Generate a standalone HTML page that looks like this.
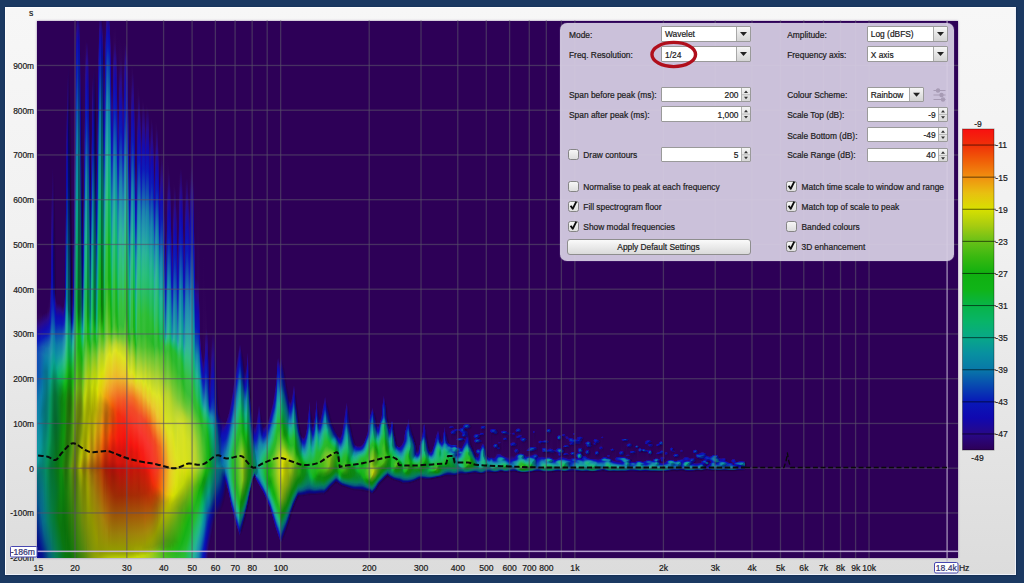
<!DOCTYPE html>
<html lang="en"><head><meta charset="utf-8"><title>Spectrogram</title>
<style>
html,body{margin:0;padding:0}
body{width:1024px;height:583px;background:#1b3962;position:relative;overflow:hidden;font-family:"Liberation Sans",sans-serif;color:#222}
#frame{position:absolute;left:5.1px;top:7px;width:1011.1px;height:568.4px;box-sizing:border-box;border:1px solid #fdfdfe;border-right:1.5px solid #eef2fa;border-bottom:1.5px solid #eef2fa;background:linear-gradient(#f7f7f7,#f1f1f1 40%,#dcdcdc);box-shadow:0 0 1.5px 0.5px rgba(8,22,48,.75)}
#plot{position:absolute;left:37.4px;top:20.7px;width:920.6px;height:537.5px;background:#2d0057;overflow:hidden;box-shadow:0 0 2px rgba(120,100,150,.8)}
#spec{position:absolute;left:-0.4px;top:-0.7px;width:921px;height:538px}
#spec i{display:block;float:left;width:1px;height:538px}
#ov{position:absolute;left:0;top:0}
#ov text{font-family:"Liberation Sans",sans-serif;font-size:8.6px;fill:#1a1a1a;stroke:#1a1a1a;stroke-width:0.2px}
#panel{position:absolute;left:560px;top:23px;width:394px;height:238px;background:rgba(214,205,226,.94);border-radius:7px;font-size:8.4px;color:#202020;-webkit-text-stroke:0.2px #202020;box-shadow:0 0 1px #b9a8d0}
#panel span,#panel div{position:absolute;white-space:nowrap}
.lb{line-height:12px;height:12px;margin-top:-6px}
.box{background:#fff;border:1px solid #9a9a9a;box-sizing:border-box;border-radius:1px}
.box b{position:absolute;font-weight:normal;line-height:12px;top:50%;margin-top:-5.5px}
.cb{width:11px;height:10.6px;box-sizing:border-box;border:1px solid #858585;border-radius:2.5px;background:linear-gradient(#f6f6f6,#dedede);margin-top:-5.7px;margin-left:-0.8px}
</style></head><body>
<div id="frame"></div>
<div id="plot"><div id="spec">
<i style="background:linear-gradient(#2d0057 292.5px,#30045b 298.5px,#2b0b89 306.5px,#130cb1 314.5px,#0c1bb9 321.5px,#113eb6 327.5px,#124db4 333.5px,#0e51b1 356.5px,#117cab 383.5px,#10999e 436.5px,#089697 442.5px,#06787c 450.5px,#066776 458.5px,#06508a 484.5px,#061285 520.5px,#090c83 529.5px,#0a0b8a 533.5px,#0c0b9d 537.5px)"></i>
<i style="background:linear-gradient(#2d0057 292.5px,#300459 297.5px,#2b0b8a 306.5px,#150cae 313.5px,#0c1db9 321.5px,#1240b6 327.5px,#1350b3 333.5px,#0d54b0 356.5px,#107cab 381.5px,#1395a4 425.5px,#0e999c 436.5px,#089696 441.5px,#077d7e 448.5px,#066f76 454.5px,#07558b 484.5px,#061288 522.5px,#090c86 530.5px,#0b0b99 537.5px)"></i>
<i style="background:linear-gradient(#2d0057 292.5px,#30045b 297.5px,#2b0b88 305.5px,#140cb1 313.5px,#0c1bb9 320.5px,#1345b5 327.5px,#1455b3 333.5px,#0c58af 355.5px,#0f7caa 379.5px,#0982a5 395.5px,#0f93a3 422.5px,#099999 436.5px,#077e7b 447.5px,#067174 453.5px,#075c8e 485.5px,#07418f 502.5px,#06138c 524.5px,#090d8a 532.5px,#0a0d94 537.5px)"></i>
<i style="background:linear-gradient(#2d0057 292.5px,#300459 296.5px,#2b0b87 304.5px,#140cb0 312.5px,#0c1bb9 319.5px,#144cb5 327.5px,#155cb2 333.5px,#0b5ead 355.5px,#0d7baa 375.5px,#087f9d 396.5px,#0b91a1 418.5px,#089898 432.5px,#078079 445.5px,#067572 451.5px,#07638e 488.5px,#074991 504.5px,#06138e 527.5px,#090e92 537.5px)"></i>
<i style="background:linear-gradient(#2d0057 292.5px,#300359 295.5px,#2a0b8c 304.5px,#150caf 311.5px,#0d1fb9 319.5px,#144eb4 326.5px,#1563b1 333.5px,#0966ab 355.5px,#087fa6 377.5px,#077992 393.5px,#088b99 414.5px,#089393 427.5px,#078f87 435.5px,#06776f 451.5px,#076e86 474.5px,#07668f 495.5px,#06158e 530.5px,#071191 537.5px)"></i>
<i style="background:linear-gradient(#2d0057 294.5px,#2a0b8b 303.5px,#150bae 310.5px,#0c1eb9 318.5px,#1554b4 326.5px,#146bb0 334.5px,#086aa4 353.5px,#087ba5 369.5px,#077589 391.5px,#07868d 415.5px,#078d86 428.5px,#067a6c 451.5px,#077383 473.5px,#07668d 502.5px,#06208d 529.5px,#061590 537.5px)"></i>
<i style="background:linear-gradient(#2d0057 293.5px,#2a0b8a 302.5px,#130cb1 310.5px,#0c1cb9 317.5px,#155ab3 326.5px,#1471ae 334.5px,#0872a8 344.5px,#076e9d 351.5px,#077996 372.5px,#067281 389.5px,#07897c 429.5px,#067e6a 451.5px,#077782 477.5px,#076d89 500.5px,#07628a 509.5px,#062a8a 529.5px,#061f8d 537.5px)"></i>
<i style="background:linear-gradient(#2d0057 293.5px,#2a0b89 301.5px,#130bb1 309.5px,#0c1bb9 316.5px,#145eb2 326.5px,#1277ac 335.5px,#0877a5 343.5px,#076f95 351.5px,#077690 368.5px,#06707a 389.5px,#078a74 432.5px,#068367 451.5px,#077284 500.5px,#066086 514.5px,#063588 529.5px,#06298a 537.5px)"></i>
<i style="background:linear-gradient(#2d0057 292.5px,#2b0a87 300.5px,#120db2 309.5px,#0c1ab8 315.5px,#1251b3 323.5px,#156cb0 328.5px,#0f7daa 336.5px,#087ca7 341.5px,#077090 351.5px,#077588 368.5px,#067175 386.5px,#067472 402.5px,#078975 424.5px,#068c64 446.5px,#06757e 501.5px,#065e83 518.5px,#063d85 530.5px,#063488 537.5px)"></i>
<i style="background:linear-gradient(#2d0057 292.5px,#2a0b8b 300.5px,#130cb2 308.5px,#0c1cb9 315.5px,#124fb3 322.5px,#156faf 328.5px,#117faa 335.5px,#087fa6 341.5px,#07728e 351.5px,#067473 382.5px,#067870 401.5px,#078e73 422.5px,#07926a 434.5px,#068b5a 448.5px,#067974 501.5px,#065d80 522.5px,#064683 531.5px,#063f85 537.5px)"></i>
<i style="background:linear-gradient(#2d0057 287.5px,#30045a 291.5px,#2b0c8b 299.5px,#130db2 307.5px,#0d1cb9 314.5px,#1454b3 322.5px,#1673af 328.5px,#1182a9 336.5px,#0882a3 343.5px,#077990 351.5px,#067c74 379.5px,#067f70 398.5px,#079271 418.5px,#079665 432.5px,#068950 448.5px,#06805a 464.5px,#067c6a 500.5px,#066d79 514.5px,#064b82 537.5px)"></i>
<i style="background:linear-gradient(#2d0057 281.5px,#30045b 290.5px,#2c0c87 297.5px,#130eb2 306.5px,#0e1dba 313.5px,#185bb4 322.5px,#1b79b0 328.5px,#1588aa 337.5px,#0889a1 347.5px,#078674 378.5px,#07916e 410.5px,#079862 425.5px,#079356 435.5px,#068246 448.5px,#067d64 503.5px,#066b78 519.5px,#065780 537.5px)"></i>
<i style="background:linear-gradient(#2d0057 278.5px,#30055d 286.5px,#2b0c8b 294.5px,#130db2 303.5px,#0f20ba 311.5px,#1a5fb4 321.5px,#2083b1 328.5px,#188fa9 339.5px,#08939d 351.5px,#078f6f 378.5px,#079659 422.5px,#057a3d 448.5px,#067c5c 504.5px,#066a76 523.5px,#065f7d 537.5px)"></i>
<i style="background:linear-gradient(#2d0057 260.5px,#2a0b8b 278.5px,#140cb1 291.5px,#0d1bb9 302.5px,#1f85b0 324.5px,#2296ac 334.5px,#089f91 353.5px,#079162 378.5px,#068e4e 420.5px,#057437 448.5px,#067d4f 500.5px,#067962 514.5px,#066b75 527.5px,#06647a 537.5px)"></i>
<i style="background:linear-gradient(#2d0057 172.5px,#290a89 217.5px,#120ab0 261.5px,#0d1bb9 286.5px,#0d32b6 295.5px,#1d84af 318.5px,#219ca9 333.5px,#09a68a 351.5px,#079568 364.5px,#068c54 377.5px,#068140 424.5px,#057132 448.5px,#067d46 499.5px,#067961 518.5px,#066a76 537.5px)"></i>
<i style="background:linear-gradient(#2d0057 147.5px,#280888 197.5px,#1109b0 248.5px,#0c17b7 277.5px,#0c2ab7 288.5px,#1a83ae 316.5px,#1998a6 331.5px,#08a58b 347.5px,#068d62 360.5px,#068048 376.5px,#057840 399.5px,#057b37 428.5px,#05712e 448.5px,#067c40 500.5px,#066f70 537.5px)"></i>
<i style="background:linear-gradient(#2d0057 154.5px,#22066b 192.5px,#0d056b 241.5px,#090977 263.5px,#080e8d 273.5px,#0817b1 281.5px,#081eb7 284.5px,#0e7caa 315.5px,#1093a3 330.5px,#09a18f 342.5px,#06855a 358.5px,#05753f 374.5px,#056e38 397.5px,#057832 427.5px,#06722a 448.5px,#057336 469.5px,#057b39 500.5px,#067368 537.5px)"></i>
<i style="background:linear-gradient(#2d0057 153.5px,#260049 203.5px,#14055e 257.5px,#10056f 267.5px,#0c078c 274.5px,#0c10b3 283.5px,#0818b8 290.5px,#0b7aa9 317.5px,#0c92a1 332.5px,#089d93 340.5px,#07997c 347.5px,#067c4b 362.5px,#05713a 372.5px,#056b33 384.5px,#056831 402.5px,#06752b 429.5px,#077224 448.5px,#057332 468.5px,#057931 496.5px,#067861 537.5px)"></i>
<i style="background:linear-gradient(#2d0057 185.5px,#250047 273.5px,#270889 283.5px,#1009b0 292.5px,#0919b8 301.5px,#0b7aa9 323.5px,#0a91a1 336.5px,#089b90 343.5px,#07997b 349.5px,#068351 360.5px,#057037 373.5px,#05662e 400.5px,#077221 437.5px,#08721e 448.5px,#05732e 471.5px,#077929 497.5px,#067959 537.5px)"></i>
<i style="background:linear-gradient(#2d0057 220.5px,#2c0055 281.5px,#290885 288.5px,#1009b1 296.5px,#091bb8 304.5px,#0b4eb0 314.5px,#0c7aaa 325.5px,#0d92a2 337.5px,#08a58a 347.5px,#068c51 361.5px,#057535 374.5px,#05682d 401.5px,#08701b 437.5px,#097219 448.5px,#067328 471.5px,#087821 497.5px,#067b51 537.5px)"></i>
<i style="background:linear-gradient(#2d0057 283.5px,#280988 289.5px,#1109b0 296.5px,#0a18b8 303.5px,#0c50b1 314.5px,#0e7baa 325.5px,#1095a2 337.5px,#0eaa8b 347.5px,#08ae79 352.5px,#068f49 364.5px,#057a31 376.5px,#056e2c 404.5px,#0a7513 448.5px,#077522 470.5px,#09771a 498.5px,#067c49 537.5px)"></i>
<i style="background:linear-gradient(#2d0057 283.5px,#290988 289.5px,#1409ac 295.5px,#0a19b8 303.5px,#0d4eb1 313.5px,#107bab 324.5px,#1396a4 336.5px,#15ab8f 345.5px,#08b36b 355.5px,#069140 366.5px,#077d29 378.5px,#067427 407.5px,#0b7810 443.5px,#09781c 470.5px,#0a7712 498.5px,#057b42 537.5px)"></i>
<i style="background:linear-gradient(#2d0057 283.5px,#290885 289.5px,#1109b0 296.5px,#0a19b8 303.5px,#0d4fb1 313.5px,#107dab 324.5px,#1596a5 335.5px,#18ad90 344.5px,#0eb56e 353.5px,#08b25e 357.5px,#078f35 368.5px,#097f22 377.5px,#087922 407.5px,#0b7d11 430.5px,#0c8310 447.5px,#0a7d16 470.5px,#0b7710 504.5px,#057830 525.5px,#057a3b 537.5px)"></i>
<i style="background:linear-gradient(#2d0057 284.5px,#290988 290.5px,#1209ae 296.5px,#0a18b8 303.5px,#0d4fb1 313.5px,#107bab 323.5px,#1698a3 335.5px,#19ae90 343.5px,#13b671 351.5px,#09b458 357.5px,#098d29 369.5px,#0a7d17 381.5px,#097e1c 405.5px,#0c8412 421.5px,#0c8a0f 446.5px,#0b760f 507.5px,#057935 537.5px)"></i>
<i style="background:linear-gradient(#2d0057 285.5px,#280989 291.5px,#1109b0 297.5px,#0a1ab8 304.5px,#0d50b1 313.5px,#127eab 323.5px,#189aa4 334.5px,#1cb090 342.5px,#16b870 350.5px,#09b44f 358.5px,#0a9628 367.5px,#0b8011 378.5px,#0d8d0d 446.5px,#0a750e 507.5px,#0a7610 515.5px,#06782e 537.5px)"></i>
<i style="background:linear-gradient(#2d0057 286.5px,#290b8c 292.5px,#150bad 297.5px,#0c1bb9 304.5px,#1254b3 313.5px,#1881ae 322.5px,#1f9aa8 332.5px,#23b196 340.5px,#1dba76 348.5px,#0ab43f 360.5px,#0c991d 368.5px,#0c8811 375.5px,#0c8310 385.5px,#0d920f 425.5px,#17890c 448.5px,#0c830c 458.5px,#0a730c 503.5px,#0a7510 520.5px,#077726 537.5px)"></i>
<i style="background:linear-gradient(#2d0057 285.5px,#300359 286.5px,#2c0b85 291.5px,#160caf 297.5px,#1021ba 304.5px,#1958b5 312.5px,#2184b1 320.5px,#29a1ab 331.5px,#2db49b 338.5px,#27bd7c 346.5px,#19b956 355.5px,#0eb428 363.5px,#0eaa1b 366.5px,#0d9211 374.5px,#0c8a0f 384.5px,#0d940e 416.5px,#1f810b 448.5px,#0b7e0c 468.5px,#0a720b 497.5px,#0a7510 524.5px,#08771e 537.5px)"></i>
<i style="background:linear-gradient(#2d0057 235.5px,#2c0055 276.5px,#2a0987 285.5px,#140cb1 293.5px,#1221bb 300.5px,#2388b1 317.5px,#2b9fae 326.5px,#32b1a2 333.5px,#2ebf7e 344.5px,#23bc5d 352.5px,#15b61e 363.5px,#0e9710 374.5px,#0d8e0d 383.5px,#0d910d 403.5px,#17900d 418.5px,#22760a 448.5px,#107b0b 473.5px,#0a700a 504.5px,#097617 537.5px)"></i>
<i style="background:linear-gradient(#2d0057 191.5px,#260882 217.5px,#0f08a6 246.5px,#0817af 273.5px,#0a37b4 285.5px,#1f85b0 304.5px,#299ead 315.5px,#32b79c 327.5px,#31c07f 338.5px,#2abe61 347.5px,#1fb926 358.5px,#11b214 365.5px,#0e9a0e 372.5px,#168d0d 381.5px,#1b8a0c 409.5px,#20710a 437.5px,#246f0a 448.5px,#1e6c09 449.5px,#16790b 471.5px,#0a700a 510.5px,#0a7610 537.5px)"></i>
<i style="background:linear-gradient(#2d0057 90.5px,#280888 122.5px,#1008ad 157.5px,#0818b2 192.5px,#08739d 266.5px,#0884a2 281.5px,#1998a6 293.5px,#28aaa0 304.5px,#31ba91 318.5px,#2fc080 327.5px,#2bbe62 340.5px,#24ba2b 352.5px,#11b113 362.5px,#0fa30f 366.5px,#1d830c 380.5px,#206c09 435.5px,#286f0b 448.5px,#216d0a 449.5px,#1b7a0b 471.5px,#0f710a 509.5px,#0b760f 537.5px)"></i>
<i style="background:linear-gradient(#2d0057 55.5px,#25077d 88.5px,#0e079e 127.5px,#0716a7 165.5px,#076891 242.5px,#077a87 280.5px,#0d9d97 294.5px,#18ae8f 306.5px,#1ab973 323.5px,#18b955 337.5px,#18b721 349.5px,#11b315 355.5px,#0e9a0e 363.5px,#1c7b0b 375.5px,#1e720a 387.5px,#226c0a 431.5px,#30780c 448.5px,#28750b 450.5px,#217e0b 473.5px,#0a710a 520.5px,#0b750e 537.5px)"></i>
<i style="background:linear-gradient(#2d0057 44.5px,#220461 75.5px,#0e0458 111.5px,#040d65 165.5px,#04425c 242.5px,#045354 289.5px,#06766c 298.5px,#078f73 306.5px,#07a361 321.5px,#08a944 336.5px,#0aab35 340.5px,#0fa916 348.5px,#0d8f0d 361.5px,#1c720a 374.5px,#1e6909 384.5px,#28740b 431.5px,#3c850f 448.5px,#33810d 449.5px,#31810d 452.5px,#29830c 472.5px,#19730a 507.5px,#0b720a 524.5px,#0b750d 537.5px)"></i>
<i style="background:linear-gradient(#2d0057 48.5px,#240046 88.5px,#1b0453 114.5px,#110454 136.5px,#090460 156.5px,#040e65 192.5px,#04425c 262.5px,#044e58 291.5px,#066e6f 300.5px,#078876 308.5px,#079671 315.5px,#079f5b 325.5px,#079f41 336.5px,#0e9d15 348.5px,#0d8a0d 360.5px,#1e6909 377.5px,#216609 391.5px,#2e7c0c 426.5px,#479411 445.5px,#4c9112 448.5px,#418d10 449.5px,#3d8b0f 453.5px,#20760a 503.5px,#0a730a 529.5px,#0b750c 537.5px)"></i>
<i style="background:linear-gradient(#2d0057 69.5px,#1a0032 187.5px,#090460 244.5px,#040d65 272.5px,#042861 293.5px,#065d82 305.5px,#077c8b 314.5px,#07947a 322.5px,#079e5c 331.5px,#079e40 340.5px,#0e9b15 350.5px,#0c890d 361.5px,#1e6e0a 376.5px,#23690a 386.5px,#35830e 421.5px,#4a9712 439.5px,#5d9711 448.5px,#4e9112 449.5px,#488e11 454.5px,#25780a 502.5px,#0b750b 537.5px)"></i>
<i style="background:linear-gradient(#2d0057 95.5px,#27004c 173.5px,#190030 247.5px,#190030 270.5px,#16044a 286.5px,#0a0462 295.5px,#061080 302.5px,#076892 314.5px,#077f92 319.5px,#079d7c 327.5px,#08aa51 338.5px,#0fa816 351.5px,#0e970e 362.5px,#237f0b 376.5px,#297b0b 384.5px,#419110 420.5px,#539913 435.5px,#6a980f 447.5px,#6a940e 448.5px,#598e10 449.5px,#4c8911 457.5px,#0f760b 537.5px)"></i>
<i style="background:linear-gradient(#2d0057 173.5px,#2a0050 271.5px,#270573 283.5px,#260885 287.5px,#1309ad 295.5px,#0e1db9 302.5px,#1f85b0 314.5px,#26a0aa 320.5px,#27b299 325.5px,#23bc7a 332.5px,#1ebb59 340.5px,#20b927 349.5px,#16b216 360.5px,#22b210 366.5px,#38980f 382.5px,#569a13 426.5px,#6d8d0c 447.5px,#6b880b 448.5px,#5b820d 449.5px,#4f7f0e 457.5px,#14780b 537.5px)"></i>
<i style="background:linear-gradient(#2d0057 198.5px,#2b0054 215.5px,#260881 240.5px,#0f08a6 263.5px,#0817b1 283.5px,#0e4fb1 298.5px,#1b83af 307.5px,#2a9ead 314.5px,#32b79c 321.5px,#31c081 328.5px,#2dbd34 345.5px,#26b726 355.5px,#45b912 373.5px,#50a913 384.5px,#5ea314 407.5px,#639a11 423.5px,#67800a 446.5px,#647909 448.5px,#56740b 449.5px,#4e730c 456.5px,#3c7d0e 489.5px,#19790b 537.5px)"></i>
<i style="background:linear-gradient(#2d0057 128.5px,#280887 156.5px,#1008ad 186.5px,#0818b1 214.5px,#08719f 266.5px,#088fa0 288.5px,#109e99 297.5px,#25b393 307.5px,#32c180 318.5px,#32c166 327.5px,#34bf3a 337.5px,#2eba2d 348.5px,#60bf17 374.5px,#68ae14 384.5px,#6fa210 405.5px,#60810c 435.5px,#617509 446.5px,#607208 448.5px,#556f0a 449.5px,#496d0b 459.5px,#3e7d0f 494.5px,#1e7b0b 537.5px)"></i>
<i style="background:linear-gradient(#2d0057 6.5px,#2f0359 33.5px,#290988 59.5px,#1209b0 91.5px,#0919b8 124.5px,#0877a7 189.5px,#088b9b 221.5px,#08b362 287.5px,#12b75e 297.5px,#35c157 315.5px,#39c13f 324.5px,#34bc34 337.5px,#72c217 372.5px,#75a20f 389.5px,#5e7d0b 428.5px,#617207 448.5px,#576f0a 449.5px,#526e0a 452.5px,#4a6d0b 462.5px,#427f0f 496.5px,#227c0b 537.5px)"></i>
<i style="background:linear-gradient(#2d0057 0.5px,#2a0b8b 13.5px,#140baf 28.5px,#0c16b7 47.5px,#0a1bb8 57.5px,#0c7aa9 130.5px,#0a91a1 167.5px,#08a787 205.5px,#0ab43e 286.5px,#19b838 298.5px,#38c03e 313.5px,#39be39 328.5px,#4abe25 346.5px,#6fc118 366.5px,#75b013 373.5px,#6e900d 389.5px,#5d780a 420.5px,#697b08 447.5px,#687807 448.5px,#5c7309 449.5px,#52720b 457.5px,#4a800f 491.5px,#277d0b 537.5px)"></i>
<i style="background:linear-gradient(#2c0571 0.5px,#2a0b89 6.5px,#140bb0 20.5px,#0b1bb9 41.5px,#0f7baa 116.5px,#0c92a1 155.5px,#08a289 188.5px,#079d5b 232.5px,#078b30 278.5px,#0a9626 291.5px,#0fb420 302.5px,#20b927 311.5px,#25b929 319.5px,#25b723 328.5px,#51bc14 353.5px,#6ca912 369.5px,#68870c 385.5px,#5f770a 406.5px,#5f7a0b 426.5px,#7b8d07 447.5px,#7a8a06 448.5px,#6d830a 449.5px,#5c7e0c 460.5px,#51840f 493.5px,#2c7f0c 537.5px)"></i>
<i style="background:linear-gradient(#28046a 0.5px,#240885 7.5px,#0f07a3 20.5px,#0a10a5 32.5px,#06298d 62.5px,#065678 117.5px,#076319 291.5px,#097518 298.5px,#0fa715 311.5px,#10b315 317.5px,#14b113 327.5px,#26b410 335.5px,#689f11 368.5px,#65800b 385.5px,#617709 401.5px,#67810b 423.5px,#819a0b 437.5px,#93a305 447.5px,#929f05 448.5px,#829709 449.5px,#6a8b0c 463.5px,#56870f 497.5px,#32800d 537.5px)"></i>
<i style="background:linear-gradient(#2d0057 0.5px,#1e0789 17.5px,#0f08a3 29.5px,#0c0ca3 35.5px,#07149a 56.5px,#06597c 130.5px,#045d49 208.5px,#066320 288.5px,#076b1f 293.5px,#0fa718 310.5px,#10b316 316.5px,#12b112 327.5px,#669810 368.5px,#657d0a 384.5px,#627709 396.5px,#6f870b 418.5px,#97af0a 436.5px,#a9b202 447.5px,#a7af01 448.5px,#97a606 449.5px,#74910c 467.5px,#37810e 537.5px)"></i>
<i style="background:linear-gradient(#2d0057 29.5px,#2b0053 33.5px,#230777 60.5px,#0e0796 91.5px,#081196 118.5px,#054d6c 189.5px,#046338 284.5px,#05773b 295.5px,#07a541 308.5px,#0cb433 315.5px,#13b51a 322.5px,#11b010 332.5px,#649710 368.5px,#667f0b 383.5px,#657a09 394.5px,#778e0a 414.5px,#aabd06 435.5px,#b4ba00 444.5px,#ada903 448.5px,#a3ab01 449.5px,#8c9f08 459.5px,#77900b 473.5px,#3c820f 537.5px)"></i>
<i style="background:linear-gradient(#2d0057 50.5px,#26004a 126.5px,#1f066a 155.5px,#0b067d 184.5px,#050f76 212.5px,#04395e 256.5px,#055460 285.5px,#066e6a 296.5px,#07a078 308.5px,#08b171 313.5px,#0bb55a 319.5px,#14b51b 329.5px,#10af10 337.5px,#45a611 355.5px,#659f11 369.5px,#6b8a0c 383.5px,#6d860b 393.5px,#80980a 411.5px,#aebc04 431.5px,#b8c000 437.5px,#a49607 448.5px,#9d9c02 449.5px,#9da300 452.5px,#7e9008 469.5px,#688a0c 500.5px,#40840f 537.5px)"></i>
<i style="background:linear-gradient(#2d0057 114.5px,#210040 195.5px,#1b055c 219.5px,#0a056f 243.5px,#050f71 265.5px,#063e7b 290.5px,#065386 296.5px,#0989a3 307.5px,#14ab90 315.5px,#1aba6f 321.5px,#27bb2d 331.5px,#24b622 339.5px,#6bc118 365.5px,#79b914 371.5px,#7ea20e 384.5px,#819c0c 394.5px,#8fa409 410.5px,#aeb400 432.5px,#aca903 437.5px,#927f08 448.5px,#8b8404 449.5px,#8b9000 455.5px,#7a8905 469.5px,#6d8a0c 500.5px,#458510 537.5px)"></i>
<i style="background:linear-gradient(#2d0057 26.5px,#300359 172.5px,#2b0b88 195.5px,#140cb1 218.5px,#0f20ba 241.5px,#1680ad 282.5px,#2ca3ab 301.5px,#32b69d 310.5px,#32c182 317.5px,#32c169 322.5px,#39c13f 328.5px,#3abe39 335.5px,#74c52b 359.5px,#a1ca11 377.5px,#9ab30a 392.5px,#9e9f01 431.5px,#999304 437.5px,#826e08 448.5px,#7d8200 457.5px,#71890b 500.5px,#4a8610 537.5px)"></i>
<i style="background:linear-gradient(#2d0057 18.5px,#31045a 97.5px,#2b0c8b 122.5px,#140cb1 146.5px,#0c1bb9 170.5px,#157fac 220.5px,#1797a6 244.5px,#1eb780 283.5px,#32c170 304.5px,#33c163 311.5px,#39c13f 320.5px,#39be39 327.5px,#69c73b 341.5px,#7cc835 350.5px,#accf1e 368.5px,#b9d20a 379.5px,#aabc06 391.5px,#98a202 414.5px,#939003 434.5px,#7f6b08 448.5px,#7a7e00 458.5px,#798906 485.5px,#71890b 506.5px,#518810 537.5px)"></i>
<i style="background:linear-gradient(#2d0057 18.5px,#31045a 33.5px,#2c0c88 55.5px,#140cb1 83.5px,#0c1cb9 111.5px,#157fac 167.5px,#1b99a7 195.5px,#1eb092 223.5px,#20bb77 250.5px,#1fbb59 279.5px,#38c143 303.5px,#39be39 320.5px,#7bca3e 340.5px,#aed022 361.5px,#c0d609 375.5px,#a9b704 389.5px,#99a403 405.5px,#939a01 419.5px,#979303 435.5px,#846f09 448.5px,#7f7405 449.5px,#818600 459.5px,#788c08 501.5px,#578b0f 537.5px)"></i>
<i style="background:linear-gradient(#2d0057 21.5px,#2b0c8a 39.5px,#140cb1 66.5px,#0c1cb9 95.5px,#1881ae 154.5px,#1e9aa8 183.5px,#21b194 212.5px,#20bb76 241.5px,#1cba57 270.5px,#28bc37 294.5px,#39bf3d 308.5px,#39bd39 318.5px,#7ac836 339.5px,#acce1b 358.5px,#bcd40a 369.5px,#a5b204 384.5px,#9ba503 394.5px,#99a201 413.5px,#a9a504 434.5px,#95790a 448.5px,#928805 452.5px,#909500 463.5px,#798c08 507.5px,#61880d 529.5px,#5e8d0f 537.5px)"></i>
<i style="background:linear-gradient(#2d0057 22.5px,#290886 38.5px,#1d089a 50.5px,#0f08a7 66.5px,#0718ac 96.5px,#076993 154.5px,#077885 183.5px,#06866c 212.5px,#098927 283.5px,#0c9619 295.5px,#10b216 306.5px,#1bb41a 318.5px,#5ac126 331.5px,#72c428 338.5px,#b0cf0d 360.5px,#b0c507 369.5px,#a0ab03 382.5px,#99a302 391.5px,#9ea602 404.5px,#acb200 416.5px,#c1b506 433.5px,#beaa09 438.5px,#a57d0b 448.5px,#9f870a 449.5px,#a19107 453.5px,#9a9e00 469.5px,#728b0b 521.5px,#65900e 537.5px)"></i>
<i style="background:linear-gradient(#2d0057 34.5px,#270674 49.5px,#0e079b 83.5px,#0715a4 111.5px,#07648b 167.5px,#06737f 195.5px,#068067 223.5px,#068632 281.5px,#0b9520 297.5px,#10b317 308.5px,#16b216 319.5px,#61c120 334.5px,#93c814 348.5px,#a5c70f 355.5px,#abbf07 367.5px,#9ca602 383.5px,#9ba301 393.5px,#bab903 416.5px,#cfb40b 434.5px,#caa90e 438.5px,#aa770b 448.5px,#a5820b 449.5px,#a88c0b 452.5px,#a09b04 467.5px,#969c00 481.5px,#728c0b 525.5px,#6c930e 537.5px)"></i>
<i style="background:linear-gradient(#2d0057 45.5px,#28004c 97.5px,#220773 121.5px,#0d0791 145.5px,#071393 169.5px,#065a7e 218.5px,#066a75 243.5px,#068c4e 292.5px,#08b348 308.5px,#16b61d 318.5px,#19b318 324.5px,#5abf1f 335.5px,#98c912 352.5px,#a9c10a 365.5px,#9ca502 387.5px,#b9b105 413.5px,#cba90e 431.5px,#c79b0e 437.5px,#a3690b 448.5px,#9e740b 449.5px,#a3860b 455.5px,#9e9306 468.5px,#929700 488.5px,#748e0b 528.5px,#73960d 537.5px)"></i>
<i style="background:linear-gradient(#2d0057 66.5px,#240046 156.5px,#1f066b 178.5px,#0d0688 199.5px,#06128d 220.5px,#065b81 262.5px,#077c7b 289.5px,#078d7b 296.5px,#08ab7d 304.5px,#16b85c 315.5px,#23b929 322.5px,#25b725 326.5px,#61c228 337.5px,#adce0f 361.5px,#afc609 369.5px,#a1a801 390.5px,#b0a107 413.5px,#b9900d 432.5px,#b5850c 437.5px,#975c0a 448.5px,#93670a 449.5px,#9a7a0b 456.5px,#998a07 469.5px,#8f9400 493.5px,#78900a 529.5px,#7a990d 537.5px)"></i>
<i style="background:linear-gradient(#2d0057 115.5px,#2a0a89 137.5px,#120ab1 159.5px,#0c1cb9 181.5px,#157fad 226.5px,#1897a7 248.5px,#1caf91 271.5px,#1fba78 291.5px,#32c16b 307.5px,#34c15c 312.5px,#39c13f 318.5px,#39be39 323.5px,#6cc635 334.5px,#98cc25 347.5px,#adcf1c 354.5px,#c2d707 367.5px,#a1a202 395.5px,#aa7f0c 434.5px,#8f5509 448.5px,#8c5e09 449.5px,#936f0a 455.5px,#968308 469.5px,#8e9400 498.5px,#7c9209 529.5px,#809b0c 537.5px)"></i>
<i style="background:linear-gradient(#2d0057 57.5px,#290a89 82.5px,#120ab0 107.5px,#0a19b8 132.5px,#0f7caa 184.5px,#1396a4 210.5px,#17ad8f 235.5px,#1ab974 260.5px,#1cba55 287.5px,#25bc48 297.5px,#38c142 307.5px,#39be39 319.5px,#7bc837 334.5px,#9ecd27 344.5px,#b3d11b 352.5px,#c9da05 367.5px,#abaf01 385.5px,#a3a302 393.5px,#a69906 412.5px,#aa810c 433.5px,#8f5209 448.5px,#92650a 452.5px,#987e0a 467.5px,#8f9500 502.5px,#809408 529.5px,#859e0b 537.5px)"></i>
<i style="background:linear-gradient(#2d0057 50.5px,#15067f 88.5px,#0d0a9d 105.5px,#07159e 126.5px,#07359b 146.5px,#07668e 179.5px,#077886 204.5px,#078b71 230.5px,#089a3a 285.5px,#0ca928 298.5px,#0fb423 302.5px,#20b826 310.5px,#28b826 319.5px,#74c62d 333.5px,#8eca27 339.5px,#abce1a 348.5px,#c4d807 362.5px,#a7a702 391.5px,#b5a607 411.5px,#b9980d 424.5px,#b6820c 436.5px,#965309 448.5px,#935d0a 449.5px,#9a6a0a 454.5px,#9b810b 471.5px,#919600 506.5px,#839507 529.5px,#8aa10a 537.5px)"></i>
<i style="background:linear-gradient(#2d0057 46.5px,#0a0569 103.5px,#050e6c 129.5px,#054764 180.5px,#055660 206.5px,#056752 233.5px,#06762d 286.5px,#0a8720 299.5px,#10b317 310.5px,#1ab319 319.5px,#70c426 333.5px,#84c722 337.5px,#a8cd15 347.5px,#b9d30a 355.5px,#bfcc03 367.5px,#aeae02 383.5px,#ada903 390.5px,#c4b009 408.5px,#cdab0e 417.5px,#c8870d 435.5px,#9d5208 448.5px,#9c5c0a 449.5px,#a36b0b 455.5px,#9e810b 474.5px,#929700 510.5px,#869606 529.5px,#8ea309 537.5px)"></i>
<i style="background:linear-gradient(#2d0057 50.5px,#1e003b 99.5px,#18023f 111.5px,#090462 144.5px,#050d68 167.5px,#054661 214.5px,#05555e 237.5px,#05773c 292.5px,#06813a 298.5px,#07963b 304.5px,#0db42f 311.5px,#16b620 315.5px,#1ab41b 321.5px,#5ec123 331.5px,#81c622 338.5px,#a9cd14 349.5px,#bbd40a 357.5px,#c1cd02 369.5px,#b2ab05 389.5px,#d1ae0e 410.5px,#d59b0e 421.5px,#cb7b0e 436.5px,#a04e08 448.5px,#9f5809 449.5px,#a7660b 455.5px,#9d7f0b 478.5px,#939800 514.5px,#889605 529.5px,#91a508 537.5px)"></i>
<i style="background:linear-gradient(#2d0057 148.5px,#260881 168.5px,#0f08a5 191.5px,#0716aa 212.5px,#076d9a 254.5px,#078594 274.5px,#08aa82 296.5px,#27bd6b 312.5px,#2abe5f 315.5px,#31be38 320.5px,#30bb30 324.5px,#67c42f 333.5px,#8fca26 343.5px,#adcf1a 352.5px,#cddb04 368.5px,#b9ad06 389.5px,#cca10e 409.5px,#ca780d 430.5px,#c26b0b 437.5px,#9e4707 448.5px,#9d5108 449.5px,#a65e0a 455.5px,#9b7f0b 483.5px,#939800 517.5px,#899704 530.5px,#94a707 537.5px)"></i>
<i style="background:linear-gradient(#2d0057 94.5px,#290888 118.5px,#1109b0 143.5px,#0a1ab8 168.5px,#0e7caa 218.5px,#1195a3 242.5px,#13ac8d 264.5px,#19b965 294.5px,#23bc5f 302.5px,#33c15b 308.5px,#39c140 315.5px,#39be39 321.5px,#82cb3f 334.5px,#96ce37 339.5px,#b2d127 348.5px,#d8e108 368.5px,#dbd903 374.5px,#c5b807 383.5px,#bca709 391.5px,#c68c0d 414.5px,#bd660b 434.5px,#9c4206 448.5px,#9b4b07 449.5px,#a35609 454.5px,#9a7f0b 486.5px,#929700 519.5px,#8a9604 530.5px,#97a806 537.5px)"></i>
<i style="background:linear-gradient(#2d0057 8.5px,#2f035a 22.5px,#290a8a 39.5px,#1109af 63.5px,#0919b8 91.5px,#0a79a9 147.5px,#0c92a2 175.5px,#0faa8b 203.5px,#11b76d 231.5px,#13b750 258.5px,#1db825 284.5px,#1fb824 292.5px,#28b92a 301.5px,#38bd38 308.5px,#46c039 315.5px,#5bc439 321.5px,#85cb3f 329.5px,#a4d13b 335.5px,#b5d434 340.5px,#dbe210 361.5px,#e0d108 374.5px,#c6ae0a 384.5px,#bb9e0c 393.5px,#c48d0d 411.5px,#bc630a 434.5px,#9e3f05 448.5px,#9d4807 449.5px,#a44f08 452.5px,#9c800b 489.5px,#8b9603 530.5px,#99aa06 537.5px)"></i>
<i style="background:linear-gradient(#2d0361 0.5px,#2b0b88 9.5px,#130bb1 23.5px,#0a1ab8 42.5px,#0b7aa9 103.5px,#0c92a1 134.5px,#0eaa8b 165.5px,#10b66e 195.5px,#12b74f 227.5px,#1bb723 258.5px,#1fb51e 289.5px,#31b925 299.5px,#51c239 309.5px,#5bc439 315.5px,#80cb3f 325.5px,#a2d13b 331.5px,#b7d431 337.5px,#dae20e 357.5px,#e0d20c 369.5px,#e0cb09 373.5px,#c5a80c 383.5px,#bc9a0d 391.5px,#cd8f0e 411.5px,#c7640a 434.5px,#a63d06 448.5px,#a54706 449.5px,#aa4d07 452.5px,#9e820b 492.5px,#8b9503 529.5px,#8e9b04 533.5px,#9cac06 537.5px)"></i>
<i style="background:linear-gradient(#29046d 0.5px,#290a8a 6.5px,#140aaf 18.5px,#0919b8 36.5px,#0878a7 96.5px,#088b9b 127.5px,#08a383 159.5px,#08ae65 190.5px,#08ae45 222.5px,#10af18 253.5px,#10ae10 285.5px,#2cb718 301.5px,#4ec02d 312.5px,#79c835 324.5px,#a4cf2d 332.5px,#b6d325 337.5px,#d9e109 356.5px,#e1ce0a 370.5px,#caaa0d 381.5px,#c0990d 390.5px,#c6960e 398.5px,#db940f 409.5px,#e1810e 419.5px,#d35d08 436.5px,#ae3a06 448.5px,#ad4306 449.5px,#b14806 451.5px,#a1840b 495.5px,#8c9502 529.5px,#8f9c04 533.5px,#9eae05 537.5px)"></i>
<i style="background:linear-gradient(#260362 0.5px,#1f0786 9.5px,#0e079d 19.5px,#06138f 36.5px,#05366e 73.5px,#054966 96.5px,#056551 159.5px,#05712d 222.5px,#0a7510 253.5px,#0b7a0b 284.5px,#1a8c0c 298.5px,#2fb510 308.5px,#50be1f 317.5px,#72c428 324.5px,#add023 334.5px,#d8e008 354.5px,#e4c80c 372.5px,#cda30e 383.5px,#c8970e 391.5px,#e6910f 408.5px,#ed800d 417.5px,#da5407 436.5px,#b33306 448.5px,#b13d06 449.5px,#b44106 451.5px,#a3850b 498.5px,#8c9502 529.5px,#909d04 533.5px,#a1b005 537.5px)"></i>
<i style="background:linear-gradient(#2a0050 0.5px,#2a0053 4.5px,#250881 16.5px,#0e0798 31.5px,#061288 55.5px,#054e6d 114.5px,#056c58 173.5px,#057730 233.5px,#0b7b10 263.5px,#0c800c 291.5px,#17910d 300.5px,#2bb510 309.5px,#49bc1b 317.5px,#76c527 325.5px,#aed022 334.5px,#d9e10a 353.5px,#e3ce13 366.5px,#e8be10 375.5px,#d39e0e 383.5px,#ce8f0e 391.5px,#e7850e 407.5px,#ef740b 416.5px,#d74607 436.5px,#b12b06 448.5px,#b03406 449.5px,#b33806 451.5px,#a5820b 498.5px,#8d9602 529.5px,#919e04 533.5px,#a3b305 537.5px)"></i>
<i style="background:linear-gradient(#2d0057 24.5px,#28004e 38.5px,#20066e 61.5px,#0d0685 86.5px,#061187 112.5px,#065779 165.5px,#066874 190.5px,#067c64 217.5px,#068c39 265.5px,#0d9518 286.5px,#0e9f13 296.5px,#10b112 303.5px,#19b319 308.5px,#36ba22 315.5px,#77c731 326.5px,#b0d129 335.5px,#d9e110 352.5px,#e6c919 367.5px,#eab311 376.5px,#d2900e 384.5px,#ca7e0e 393.5px,#de710b 408.5px,#e35f08 417.5px,#cb3807 437.5px,#ab2306 448.5px,#ac2e06 450.5px,#a94006 464.5px,#a6800b 499.5px,#8e9602 529.5px,#939f04 533.5px,#a6b605 537.5px)"></i>
<i style="background:linear-gradient(#2d0057 4.5px,#30045a 53.5px,#2b0b88 77.5px,#160eb2 102.5px,#1323bb 127.5px,#1c82af 175.5px,#2199aa 198.5px,#20b194 224.5px,#20bb77 247.5px,#20bb5a 269.5px,#29bc30 290.5px,#2abb30 294.5px,#38bd38 308.5px,#49c139 314.5px,#5cc439 319.5px,#86cc3f 326.5px,#b6d434 334.5px,#dce317 350.5px,#e9c51f 367.5px,#eca911 376.5px,#d0870e 383.5px,#c0730d 390.5px,#bd680b 398.5px,#d25107 417.5px,#be2e06 437.5px,#a51e06 448.5px,#a32605 449.5px,#a43905 464.5px,#a67d0b 500.5px,#8f9802 530.5px,#94a004 533.5px,#a8b906 537.5px)"></i>
<i style="background:linear-gradient(#2d0057 0.5px,#31045a 13.5px,#2b0c8c 27.5px,#150cb0 44.5px,#0c1cb9 71.5px,#1d82af 124.5px,#249cab 151.5px,#2cb49a 178.5px,#2cbf7e 206.5px,#2cbf63 232.5px,#32bf3a 258.5px,#33bc33 284.5px,#6ac73b 314.5px,#80ca3f 320.5px,#bbd737 330.5px,#dce420 343.5px,#eac524 364.5px,#eda111 376.5px,#c77a0d 384.5px,#b1640b 393.5px,#b15d0a 400.5px,#c74807 418.5px,#b52806 438.5px,#a11b06 448.5px,#a86f0b 494.5px,#a2850b 508.5px,#8f9902 530.5px,#95a204 533.5px,#aabb06 537.5px)"></i>
<i style="background:linear-gradient(#2d0878 0.5px,#2c0c8a 4.5px,#150cb0 16.5px,#0d1bb9 31.5px,#1981ae 85.5px,#239baa 114.5px,#2cb59a 144.5px,#32c182 174.5px,#32c168 203.5px,#38c03e 233.5px,#37bd37 262.5px,#58c437 291.5px,#79c93e 312.5px,#89cc3e 317.5px,#c4da34 329.5px,#dde426 338.5px,#e2d721 348.5px,#eac626 361.5px,#ee9810 377.5px,#c3720c 385.5px,#af610a 393.5px,#af5b09 400.5px,#c25608 410.5px,#c94807 418.5px,#b62606 438.5px,#a11907 448.5px,#a13005 464.5px,#a8670b 492.5px,#a0850b 510.5px,#909902 530.5px,#96a304 533.5px,#acbe06 537.5px)"></i>
<i style="background:linear-gradient(#2a0b89 0.5px,#140cb1 12.5px,#0c1cb9 26.5px,#114cb3 45.5px,#1c83af 77.5px,#259dab 107.5px,#2fb59b 137.5px,#32c182 167.5px,#30c067 197.5px,#35c03b 228.5px,#32bb32 258.5px,#53c12f 289.5px,#78c83a 311.5px,#8ccc3a 317.5px,#b3d436 324.5px,#dde422 336.5px,#e3d51f 347.5px,#eac626 359.5px,#eead22 369.5px,#f09110 378.5px,#ca710c 385.5px,#b8620a 392.5px,#b85d09 399.5px,#ce5808 410.5px,#d64907 418.5px,#c83007 429.5px,#bc2407 439.5px,#a51808 448.5px,#a22c05 463.5px,#a8650b 493.5px,#9f840b 511.5px,#919a02 530.5px,#97a404 533.5px,#aec006 537.5px)"></i>
<i style="background:linear-gradient(#270884 0.5px,#1109b0 12.5px,#0919b8 26.5px,#0944b1 44.5px,#0b78a9 76.5px,#0c92a2 107.5px,#0da98a 137.5px,#0db56b 167.5px,#0cb54b 198.5px,#14b51c 228.5px,#14b114 258.5px,#3eba16 289.5px,#68c224 310.5px,#7ac628 315.5px,#add12a 323.5px,#dbe31e 334.5px,#eac625 357.5px,#eeb026 366.5px,#f08911 379.5px,#ce6b0b 387.5px,#c3610a 395.5px,#de5b08 409.5px,#e84908 418.5px,#d52d07 429.5px,#c62308 439.5px,#a91608 448.5px,#a42805 463.5px,#a7640b 495.5px,#919901 529.5px,#98a504 533.5px,#b0c206 537.5px)"></i>
<i style="background:linear-gradient(#27056e 0.5px,#220892 7.5px,#1108af 16.5px,#0918b8 31.5px,#083ab3 47.5px,#0a79a9 85.5px,#0a90a1 114.5px,#0ba98a 144.5px,#0ab569 174.5px,#0ab549 204.5px,#11b419 233.5px,#11b011 262.5px,#3ab912 292.5px,#60c01d 310.5px,#73c421 315.5px,#bed620 326.5px,#dbe319 333.5px,#eac524 355.5px,#efa827 367.5px,#f19623 373.5px,#f07d0e 381.5px,#d5670a 388.5px,#ce5f09 395.5px,#f05408 411.5px,#f03908 421.5px,#e02a08 428.5px,#cc2009 439.5px,#ac1409 448.5px,#a42505 463.5px,#a4610b 496.5px,#929901 529.5px,#98a504 533.5px,#b1c306 537.5px)"></i>
<i style="background:linear-gradient(#2d0057 13.5px,#280889 27.5px,#1108b0 45.5px,#0819b8 72.5px,#0a79a9 125.5px,#0b91a1 152.5px,#0ba98a 179.5px,#0bb56a 206.5px,#0bb54b 232.5px,#12b51a 259.5px,#12b112 284.5px,#34b815 303.5px,#4cbc19 311.5px,#6cc222 317.5px,#b2d122 325.5px,#dce318 334.5px,#eac424 355.5px,#f1a129 368.5px,#f18e23 374.5px,#f0700b 383.5px,#d95e09 389.5px,#d35808 394.5px,#d85507 400.5px,#f04b08 410.5px,#f02f09 421.5px,#cb1c0a 439.5px,#ab1209 448.5px,#a32405 465.5px,#9b800b 513.5px,#929a01 529.5px,#99a604 533.5px,#b2c506 537.5px)"></i>
<i style="background:linear-gradient(#2d0057 62.5px,#280989 85.5px,#1109af 108.5px,#0a1bb8 133.5px,#0c7aa9 180.5px,#0c92a2 203.5px,#0ca98b 226.5px,#0cb56a 249.5px,#0db54c 270.5px,#15b61e 290.5px,#19b319 306.5px,#28b61b 310.5px,#47bd20 315.5px,#73c52d 320.5px,#b7d42a 327.5px,#dde31c 336.5px,#eac627 355.5px,#f29b2b 369.5px,#f18522 375.5px,#f06509 384.5px,#d85507 390.5px,#d24d07 396.5px,#e74308 408.5px,#f02f08 417.5px,#db1e0a 428.5px,#c6190a 439.5px,#a9110a 448.5px,#a01907 455.5px,#a12405 467.5px,#997e0b 513.5px,#929a01 529.5px,#99a604 533.5px,#b3c606 537.5px)"></i>
<i style="background:linear-gradient(#2d0057 36.5px,#30045a 69.5px,#2b0c8a 91.5px,#140cb1 113.5px,#1526bb 136.5px,#2487b2 180.5px,#2ca1ae 203.5px,#2eb59a 225.5px,#2dbf7f 247.5px,#2bbf63 268.5px,#2fbe37 289.5px,#30bb30 306.5px,#56c334 314.5px,#85cb3d 320.5px,#bbd635 326.5px,#dde425 334.5px,#ebc62b 354.5px,#f29e2d 367.5px,#f18023 375.5px,#f05c08 385.5px,#dc5007 389.5px,#cf4407 398.5px,#e82a09 417.5px,#d21b0a 428.5px,#bf170a 440.5px,#a7100a 448.5px,#9e1907 456.5px,#9f2705 470.5px,#987c0a 513.5px,#929a01 529.5px,#99a604 533.5px,#b4c706 537.5px)"></i>
<i style="background:linear-gradient(#2d0057 9.5px,#31045a 29.5px,#2c0c8a 48.5px,#150cb0 72.5px,#0c1cb9 97.5px,#1c82af 146.5px,#259dab 171.5px,#2fb69b 196.5px,#32c182 221.5px,#32c167 246.5px,#39c140 270.5px,#39bd39 294.5px,#49c139 304.5px,#5ec539 311.5px,#80ca3f 317.5px,#bcd737 324.5px,#dde52a 331.5px,#edbb2d 357.5px,#f28428 373.5px,#f05508 386.5px,#e14d08 389.5px,#d54607 393.5px,#d14107 398.5px,#e62a09 416.5px,#d21b0a 427.5px,#bd170a 441.5px,#a9100a 448.5px,#9e1807 456.5px,#9d2c05 474.5px,#987c0a 513.5px,#929a01 529.5px,#99a704 533.5px,#b5c706 537.5px)"></i>
<i style="background:linear-gradient(#2d0057 6.5px,#31045a 21.5px,#2b0c8b 38.5px,#150cb0 60.5px,#0c1cb9 86.5px,#1c83af 138.5px,#259dab 163.5px,#2fb69b 189.5px,#32c182 214.5px,#32c167 240.5px,#39c13f 266.5px,#39bd39 291.5px,#4ac138 303.5px,#5ec539 310.5px,#87cc3f 317.5px,#bad637 323.5px,#dde428 330.5px,#edb92d 357.5px,#f28128 373.5px,#ec4b08 389.5px,#dc4007 397.5px,#ed2a09 415.5px,#d61b0b 427.5px,#c2170a 441.5px,#ad100a 448.5px,#a11807 456.5px,#9c2c05 475.5px,#987b0a 513.5px,#929a01 529.5px,#9aa704 533.5px,#b5c806 537.5px)"></i>
<i style="background:linear-gradient(#2d0057 7.5px,#30045b 22.5px,#290a8a 38.5px,#1109b0 61.5px,#091ab8 87.5px,#0e7caa 138.5px,#1294a4 163.5px,#16ad8f 189.5px,#17b971 215.5px,#18b954 240.5px,#20b928 266.5px,#22b622 291.5px,#36ba24 302.5px,#4ec029 309.5px,#7cc837 316.5px,#b4d332 322.5px,#dde422 330.5px,#eeb72d 357.5px,#f27a27 374.5px,#f0480c 389.5px,#e83c08 398.5px,#f3240b 418.5px,#d7190b 430.5px,#c7170a 442.5px,#b2100a 448.5px,#a51907 456.5px,#9c2c05 476.5px,#987c0a 513.5px,#929a01 529.5px,#9aa704 533.5px,#b6c806 537.5px)"></i>
<i style="background:linear-gradient(#2d0057 9.5px,#2e0158 30.5px,#290988 49.5px,#1109af 73.5px,#091ab8 99.5px,#0b7aa9 148.5px,#0c91a2 172.5px,#0eaa8b 197.5px,#0fb66c 222.5px,#0fb64d 247.5px,#17b61f 272.5px,#1ab319 296.5px,#2db71c 304.5px,#47bd20 310.5px,#74c62e 316.5px,#b1d12a 322.5px,#dce31c 330.5px,#eeb52b 357.5px,#f26724 378.5px,#f03c0b 392.5px,#f51e0d 420.5px,#dd170c 430.5px,#d1180b 441.5px,#b8100b 448.5px,#aa1908 456.5px,#9c2c05 476.5px,#987c0a 513.5px,#929a01 529.5px,#9aa704 533.5px,#b6c906 537.5px)"></i>
<i style="background:linear-gradient(#2d0057 11.5px,#2e0157 77.5px,#280989 99.5px,#1109b0 120.5px,#0a1ab9 142.5px,#0e7baa 186.5px,#1094a3 208.5px,#11ab8c 230.5px,#11b76d 252.5px,#12b74f 273.5px,#1bb724 293.5px,#1fb520 306.5px,#48be24 313.5px,#76c62e 318.5px,#b5d327 324.5px,#dce21a 332.5px,#edb92a 356.5px,#f26223 378.5px,#f0330c 393.5px,#f51a0e 420.5px,#de150d 430.5px,#d3170c 442.5px,#bd100b 448.5px,#ae1908 456.5px,#9d2b05 476.5px,#997c0b 513.5px,#939a01 529.5px,#9aa704 533.5px,#b6c906 537.5px)"></i>
<i style="background:linear-gradient(#2d0057 14.5px,#31045a 90.5px,#2c0c89 111.5px,#140db1 132.5px,#1524bc 153.5px,#2486b2 195.5px,#2ca6a8 223.5px,#29be7c 259.5px,#28be5e 280.5px,#2dbd36 298.5px,#2eba2e 308.5px,#51c12d 314.5px,#7dc833 319.5px,#b0d12b 324.5px,#dce31b 333.5px,#edbb2a 356.5px,#f25c22 379.5px,#f1300d 393.5px,#f6190e 417.5px,#de140d 429.5px,#d5160c 442.5px,#bf100c 448.5px,#b21908 455.5px,#9e2905 475.5px,#9a7d0b 513.5px,#939a01 529.5px,#9aa704 533.5px,#b6c906 537.5px)"></i>
<i style="background:linear-gradient(#2d0057 17.5px,#30045b 47.5px,#2c0c8a 70.5px,#140cb1 94.5px,#0c1cb9 118.5px,#1c83af 166.5px,#269eab 190.5px,#30b69b 214.5px,#32c182 238.5px,#32c167 262.5px,#39c13f 286.5px,#39be39 304.5px,#59c335 313.5px,#7bc837 318.5px,#b2d22c 324.5px,#dce31c 333.5px,#ecbd2c 356.5px,#f26023 378.5px,#f22f0e 394.5px,#f51a0d 415.5px,#db130d 430.5px,#d5150c 442.5px,#c00f0c 448.5px,#9e2905 475.5px,#9a800b 514.5px,#939a01 529.5px,#9aa704 533.5px,#b7c906 537.5px)"></i>
<i style="background:linear-gradient(#2d0057 19.5px,#30045a 39.5px,#2b0c8a 62.5px,#150cb1 86.5px,#0c1cb9 111.5px,#1c84af 161.5px,#269dac 185.5px,#30b69b 210.5px,#32c182 234.5px,#32c167 259.5px,#38c140 283.5px,#39bd39 304.5px,#58c335 313.5px,#78c836 318.5px,#b4d32b 325.5px,#dbe31e 334.5px,#ecc32e 355.5px,#f25e24 379.5px,#f22f11 395.5px,#f6190e 417.5px,#dc130d 430.5px,#d3150c 442.5px,#be0f0c 448.5px,#9e2905 475.5px,#9a800b 514.5px,#939b01 529.5px,#9aa704 533.5px,#b7c906 537.5px)"></i>
<i style="background:linear-gradient(#2d0057 22.5px,#300459 40.5px,#2a0a88 63.5px,#140bb0 87.5px,#0b1bb9 112.5px,#1a82ae 161.5px,#239caa 186.5px,#2cb599 210.5px,#2ebf80 234.5px,#2fc066 258.5px,#37c03d 283.5px,#38bd38 304.5px,#55c233 313.5px,#7bc835 319.5px,#b6d32b 326.5px,#dde31f 336.5px,#ecc430 355.5px,#f25e27 379.5px,#f32e15 396.5px,#f6160e 419.5px,#de130d 430.5px,#d1150c 442.5px,#bc0f0b 448.5px,#9d2905 475.5px,#9b7e0b 513.5px,#939b01 529.5px,#9aa704 533.5px,#b7ca06 537.5px)"></i>
<i style="background:linear-gradient(#2d0057 22.5px,#30045a 69.5px,#2c0c89 90.5px,#140cb1 112.5px,#1120ba 134.5px,#2286b1 178.5px,#2ca0ad 201.5px,#32b1a2 217.5px,#32c182 245.5px,#32c168 267.5px,#39c13f 289.5px,#39bd39 306.5px,#5dc436 315.5px,#7ec938 320.5px,#b6d42d 327.5px,#dde420 337.5px,#ebc730 354.5px,#f25827 380.5px,#f42b16 397.5px,#f6140f 419.5px,#dc120d 430.5px,#cf150c 442.5px,#bb100b 448.5px,#9e2905 475.5px,#9b7e0b 513.5px,#939b01 529.5px,#9aa704 533.5px,#b7ca06 537.5px)"></i>
<i style="background:linear-gradient(#2d0057 21.5px,#31045a 75.5px,#2c0c89 96.5px,#150cb0 117.5px,#1424bb 139.5px,#2588b2 182.5px,#32aca7 214.5px,#32c182 247.5px,#32c168 268.5px,#39c13f 289.5px,#39bd39 306.5px,#5ec539 315.5px,#7cc93b 320.5px,#b8d52f 328.5px,#dce422 338.5px,#ebc830 354.5px,#f25626 380.5px,#f52916 398.5px,#f7150f 416.5px,#d9120d 430.5px,#ce160b 442.5px,#bc110b 448.5px,#9f2a05 475.5px,#9b7e0b 513.5px,#939b01 529.5px,#9aa704 533.5px,#b7ca06 537.5px)"></i>
<i style="background:linear-gradient(#2d0057 21.5px,#31045a 32.5px,#2c0c88 51.5px,#140cb1 76.5px,#0c1db9 101.5px,#1c82af 149.5px,#269dab 174.5px,#2fb59b 198.5px,#32c182 223.5px,#32c168 247.5px,#39c13f 272.5px,#39bd39 296.5px,#5ac439 312.5px,#82ca3b 320.5px,#b4d331 327.5px,#dce322 338.5px,#ebc62e 355.5px,#f25725 380.5px,#f42a17 398.5px,#f6160e 415.5px,#d8130d 430.5px,#ce170b 443.5px,#bf120b 448.5px,#a12b05 475.5px,#9c7f0b 513.5px,#939b01 529.5px,#9aa804 533.5px,#b8ca06 537.5px)"></i>
<i style="background:linear-gradient(#2d0057 23.5px,#2b0c8b 40.5px,#150cb0 63.5px,#0c1cb9 89.5px,#1b83af 140.5px,#259dab 165.5px,#2fb69b 191.5px,#32c182 216.5px,#32c167 242.5px,#39c13f 267.5px,#37bd37 292.5px,#59c332 313.5px,#7ac733 320.5px,#b3d22b 328.5px,#dce31d 340.5px,#ebc62b 356.5px,#f25c26 379.5px,#f4301a 397.5px,#f6180e 417.5px,#db150d 430.5px,#d3190b 443.5px,#c5130b 448.5px,#a32b05 475.5px,#9c7f0b 513.5px,#949b01 529.5px,#9ba804 533.5px,#b8cb06 537.5px)"></i>
<i style="background:linear-gradient(#2d0057 23.5px,#290989 40.5px,#1109af 63.5px,#0919b8 89.5px,#0b7aa9 140.5px,#0d93a2 166.5px,#0fab8c 191.5px,#10b66e 216.5px,#11b74e 242.5px,#19b721 267.5px,#1ab31a 293.5px,#42bc1c 312.5px,#6cc325 320.5px,#b0d123 329.5px,#dce317 342.5px,#ebc528 357.5px,#f26a27 376.5px,#f24725 387.5px,#f52918 404.5px,#f6180f 421.5px,#e2160d 431.5px,#da1a0b 443.5px,#ca140b 448.5px,#a52c06 475.5px,#9d800b 513.5px,#949c01 529.5px,#9ba804 533.5px,#b8cb07 537.5px)"></i>
<i style="background:linear-gradient(#2d0057 33.5px,#280887 52.5px,#1108af 76.5px,#0918b8 101.5px,#0a79a9 150.5px,#0b92a1 175.5px,#0da98b 199.5px,#0db66c 224.5px,#0db64c 249.5px,#15b51d 274.5px,#16b216 298.5px,#3dba17 314.5px,#6cc221 322.5px,#b0d01d 331.5px,#dae213 344.5px,#eac525 358.5px,#f26b27 376.5px,#f24a27 386.5px,#f52b1b 405.5px,#f6160e 425.5px,#e11a0c 442.5px,#cd130c 448.5px,#a62c06 475.5px,#9d800b 513.5px,#949c01 529.5px,#9ca904 533.5px,#b9cc07 537.5px)"></i>
<i style="background:linear-gradient(#2d0057 85.5px,#290888 105.5px,#1109b0 127.5px,#0919b8 149.5px,#0b7aa9 193.5px,#0c92a2 215.5px,#0daa8b 237.5px,#0db66b 259.5px,#0db64c 280.5px,#16b61e 301.5px,#17b318 313.5px,#3dba19 320.5px,#6cc323 326.5px,#aecf20 335.5px,#dbe214 349.5px,#eac527 360.5px,#f26e28 376.5px,#f24c28 386.5px,#f71510 425.5px,#e0180c 442.5px,#cc130c 448.5px,#c5190a 450.5px,#a72a06 474.5px,#9d800b 513.5px,#949c01 529.5px,#9ca904 533.5px,#bacd07 537.5px)"></i>
<i style="background:linear-gradient(#2d0057 141.5px,#290989 160.5px,#130bb0 179.5px,#0e1dba 199.5px,#147fac 238.5px,#1796a6 257.5px,#18ad90 275.5px,#1cba5b 306.5px,#1eba4b 310.5px,#24ba2b 315.5px,#25b826 319.5px,#26b725 320.5px,#75c62f 330.5px,#9dce2c 336.5px,#dce31c 353.5px,#ebc52c 362.5px,#f27229 376.5px,#f24b29 387.5px,#f7130f 424.5px,#e5130e 431.5px,#d9170c 443.5px,#c8120c 448.5px,#a52b06 475.5px,#9d800b 513.5px,#959d01 529.5px,#9daa04 533.5px,#bbce07 537.5px)"></i>
<i style="background:linear-gradient(#2d0057 51.5px,#31045a 116.5px,#2c0c8a 136.5px,#150cb0 155.5px,#1324bb 176.5px,#2487b2 215.5px,#32aea5 246.5px,#32c182 275.5px,#32c167 294.5px,#39c13f 310.5px,#39bd39 318.5px,#7eca3f 329.5px,#a7d138 336.5px,#dee424 353.5px,#ebc731 362.5px,#f2732a 376.5px,#f24b29 387.5px,#f53825 399.5px,#f7140f 422.5px,#de130d 431.5px,#d3170c 443.5px,#c4120b 448.5px,#a42b05 475.5px,#9d800b 513.5px,#959d01 529.5px,#9dab04 533.5px,#bccf07 537.5px)"></i>
<i style="background:linear-gradient(#2d0057 44.5px,#30045b 64.5px,#2b0c8a 86.5px,#140cb1 108.5px,#0c1db9 131.5px,#1981ae 175.5px,#239caa 198.5px,#2cb49a 220.5px,#32c182 243.5px,#32c168 265.5px,#39c13f 288.5px,#39bd39 309.5px,#59c439 320.5px,#80ca3f 327.5px,#b7d538 337.5px,#dce427 351.5px,#eacb30 361.5px,#f26f29 377.5px,#f24c28 387.5px,#f53826 400.5px,#f6160f 422.5px,#db140d 431.5px,#d1180b 443.5px,#c4130b 448.5px,#a42b05 475.5px,#9e800b 513.5px,#969e01 529.5px,#9eac04 533.5px,#bdd007 537.5px)"></i>
<i style="background:linear-gradient(#2d0057 45.5px,#30045b 52.5px,#2b0c8b 75.5px,#140cb1 98.5px,#0c1cb9 121.5px,#1a81ae 167.5px,#249daa 191.5px,#2db59a 214.5px,#32c182 237.5px,#32c167 260.5px,#39c140 283.5px,#39bd39 306.5px,#56c333 320.5px,#b1d230 337.5px,#dbe320 352.5px,#eac82d 362.5px,#f27026 377.5px,#f24b27 388.5px,#f53826 402.5px,#f6180f 423.5px,#df160d 431.5px,#d5190b 443.5px,#c6130b 448.5px,#a52c05 475.5px,#9e810b 513.5px,#979e01 529.5px,#9fad04 533.5px,#bfd207 537.5px)"></i>
<i style="background:linear-gradient(#2d0057 53.5px,#290989 76.5px,#1109b0 99.5px,#0919b8 122.5px,#0a79a9 168.5px,#0c91a2 191.5px,#0da98b 214.5px,#0eb66b 238.5px,#0eb64c 261.5px,#17b61e 284.5px,#19b319 306.5px,#3aba1b 319.5px,#75c526 329.5px,#a7ce24 337.5px,#d9e218 353.5px,#eac628 363.5px,#f26e23 378.5px,#f24a27 389.5px,#f53928 403.5px,#f6180f 425.5px,#e5170d 432.5px,#d9190b 444.5px,#ca130c 448.5px,#c31a09 450.5px,#a62c06 475.5px,#9f810b 513.5px,#979f01 529.5px,#a1ae04 533.5px,#c1d407 537.5px)"></i>
<i style="background:linear-gradient(#2d0057 82.5px,#280989 103.5px,#1009b0 124.5px,#0918b8 145.5px,#0a79a9 188.5px,#0b92a1 210.5px,#0ca98a 231.5px,#0cb56b 253.5px,#0cb54b 275.5px,#15b51d 296.5px,#17b217 315.5px,#3ab918 323.5px,#6ec323 331.5px,#9fcc20 339.5px,#dce215 356.5px,#eac626 364.5px,#f26d21 379.5px,#f24a26 390.5px,#f6392a 404.5px,#f7160f 427.5px,#ea160d 432.5px,#df190c 443.5px,#cd130c 448.5px,#c51a0a 450.5px,#a72c06 475.5px,#9f820b 513.5px,#999802 525.5px,#9daa04 532.5px,#c3d707 537.5px)"></i>
<i style="background:linear-gradient(#2d0057 144.5px,#280989 162.5px,#1109af 180.5px,#0a1cb8 200.5px,#0d7baa 237.5px,#0e92a3 255.5px,#0eaa8b 274.5px,#0fb66c 292.5px,#12b750 308.5px,#1cb823 319.5px,#1db51e 324.5px,#69c328 335.5px,#afd025 349.5px,#dce319 359.5px,#eac728 366.5px,#f17021 380.5px,#f24b26 391.5px,#f6382a 405.5px,#f71510 426.5px,#e7150d 433.5px,#df180c 443.5px,#cd120c 448.5px,#c4190a 450.5px,#a72c06 475.5px,#a0820b 513.5px,#999902 525.5px,#9fab04 532.5px,#c3d708 537.5px)"></i>
<i style="background:linear-gradient(#2d0057 69.5px,#31045a 146.5px,#2c0c8a 164.5px,#170fb2 182.5px,#1829bc 201.5px,#298ab4 237.5px,#32a4af 256.5px,#32b79b 274.5px,#32c167 308.5px,#39c140 319.5px,#38bd38 325.5px,#81ca38 339.5px,#dde421 360.5px,#ebc72c 367.5px,#f27221 381.5px,#f24b27 392.5px,#f6372a 406.5px,#f7150f 426.5px,#e5150d 432.5px,#da170c 444.5px,#cb110c 448.5px,#c2190a 450.5px,#a62c06 475.5px,#a0820b 513.5px,#9a9a02 525.5px,#a0ac04 532.5px,#c1d507 536.5px,#c4d809 537.5px)"></i>
<i style="background:linear-gradient(#2d0057 65.5px,#31045a 93.5px,#2b0c8b 114.5px,#140cb1 134.5px,#0c1db9 155.5px,#1b82af 196.5px,#249dab 217.5px,#2eb59a 238.5px,#32c181 259.5px,#32c168 279.5px,#39c140 300.5px,#39bd39 318.5px,#51c239 325.5px,#83cb3f 335.5px,#b9d538 348.5px,#dee527 359.5px,#ebc92f 367.5px,#f19f2a 374.5px,#f27022 383.5px,#f24d28 393.5px,#f6382b 407.5px,#f61710 426.5px,#e4170d 433.5px,#da170c 444.5px,#c9110c 448.5px,#bd1b09 453.5px,#a62c06 475.5px,#a1830b 513.5px,#9a9a02 525.5px,#9da803 531.5px,#a6b505 533.5px,#c3d707 536.5px,#c4d80a 537.5px)"></i>
<i style="background:linear-gradient(#2d0057 66.5px,#30045a 75.5px,#2c0c89 96.5px,#140cb1 118.5px,#0c1cb9 140.5px,#1b82ae 184.5px,#249daa 206.5px,#2eb59b 227.5px,#32c182 249.5px,#32c167 271.5px,#39c13f 293.5px,#39bd39 314.5px,#52c339 324.5px,#85cb3f 335.5px,#abd33a 344.5px,#dce429 359.5px,#ebc930 368.5px,#f29b2b 376.5px,#f26b25 386.5px,#f24d2b 395.5px,#f6382c 410.5px,#f6180e 429.5px,#df190c 443.5px,#ca110c 448.5px,#bd1b09 453.5px,#ad2206 468.5px,#a62e06 476.5px,#a1830b 513.5px,#9a9a02 525.5px,#9ea903 531.5px,#a8b605 533.5px,#c3d708 536.5px,#c3d80b 537.5px)"></i>
<i style="background:linear-gradient(#2d0057 75.5px,#2a0a89 96.5px,#130bb1 118.5px,#0c1cb9 140.5px,#1b82af 183.5px,#249dab 205.5px,#2eb59a 227.5px,#30c081 248.5px,#31c066 270.5px,#38c13f 292.5px,#39bd39 313.5px,#59c438 326.5px,#a1d038 342.5px,#dee527 360.5px,#ebc830 369.5px,#f29d2c 377.5px,#f27626 385.5px,#f24f2c 395.5px,#f7392e 411.5px,#f6190e 432.5px,#e71a0c 442.5px,#ce110c 448.5px,#c01b09 453.5px,#af2306 468.5px,#a82e06 476.5px,#a1840b 513.5px,#9a9802 524.5px,#9eaa03 531.5px,#c3d709 536.5px,#c3d80d 537.5px)"></i>
<i style="background:linear-gradient(#2d0057 91.5px,#290988 111.5px,#120ab0 131.5px,#0a1bb8 152.5px,#137eac 192.5px,#1997a7 212.5px,#1fb093 233.5px,#21bb77 253.5px,#22bc5c 273.5px,#2bbd32 294.5px,#31bb31 313.5px,#52c131 326.5px,#a3d033 343.5px,#dbe325 359.5px,#ebc82e 369.5px,#f27325 386.5px,#f24f2b 395.5px,#f73730 412.5px,#f71c15 429.5px,#f51b0d 439.5px,#e5170d 445.5px,#d3110d 448.5px,#cb180b 449.5px,#c41c09 453.5px,#ab2b06 474.5px,#a2850b 513.5px,#9a9902 524.5px,#9eaa04 531.5px,#bcd007 535.5px,#c2d70e 537.5px)"></i>
<i style="background:linear-gradient(#2d0057 99.5px,#300359 112.5px,#2b0b89 130.5px,#130bb0 148.5px,#0f1fba 167.5px,#1b82af 204.5px,#219ba9 223.5px,#24b197 241.5px,#24bd79 261.5px,#24bd5e 279.5px,#2bbd33 298.5px,#2fba2f 316.5px,#4cc02e 326.5px,#7cc834 336.5px,#b0d22e 347.5px,#dde420 360.5px,#ebc62a 370.5px,#f27223 387.5px,#f24c2a 396.5px,#f8352f 413.5px,#f71d17 429.5px,#f61a0e 441.5px,#eb160e 445.5px,#d8100d 448.5px,#d0180b 449.5px,#c81b0a 453.5px,#ad2c06 474.5px,#a2850b 513.5px,#999902 524.5px,#9eab04 531.5px,#bdd208 535.5px,#c1d710 537.5px)"></i>
<i style="background:linear-gradient(#2d0057 78.5px,#30045b 88.5px,#2c0c89 108.5px,#140cb1 129.5px,#0c1db9 150.5px,#1d83b0 191.5px,#269dab 212.5px,#2db59a 233.5px,#2cbf7e 254.5px,#2bbf62 274.5px,#31be38 295.5px,#33bb32 315.5px,#50c131 327.5px,#7cc836 337.5px,#b0d22f 349.5px,#dce31f 362.5px,#ebc429 373.5px,#f27224 389.5px,#f24a29 398.5px,#f8342d 415.5px,#f71d18 430.5px,#f6190f 442.5px,#e9130e 446.5px,#da0f0e 448.5px,#d2170b 449.5px,#c91b0a 453.5px,#ae2b06 474.5px,#a2860b 513.5px,#989f01 527.5px,#9dab04 531.5px,#bdd408 535.5px,#bfd611 537.5px)"></i>
<i style="background:linear-gradient(#2d0057 81.5px,#300359 84.5px,#2c0c8a 105.5px,#140cb1 126.5px,#0c1db9 148.5px,#1d84af 190.5px,#269dab 211.5px,#2eb59a 232.5px,#2ec080 253.5px,#2ebf64 274.5px,#34bf3b 295.5px,#36bd36 315.5px,#54c235 328.5px,#7fc93a 338.5px,#b3d333 351.5px,#dde423 364.5px,#ebc52d 375.5px,#f24b29 399.5px,#f7352d 417.5px,#f7201a 430.5px,#f6170f 443.5px,#db0e0e 448.5px,#d3160c 449.5px,#ca1a0a 453.5px,#b02a06 473.5px,#a3850b 512.5px,#969f01 527.5px,#9cab05 531.5px,#bcd50a 535.5px,#bdd513 537.5px)"></i>
<i style="background:linear-gradient(#2d0057 87.5px,#2a0b8a 108.5px,#130bb1 128.5px,#0b1cb9 149.5px,#1a82ae 190.5px,#239caa 211.5px,#2bb499 231.5px,#2cbf7e 252.5px,#2cbf63 272.5px,#34bf3a 293.5px,#36bd36 312.5px,#56c336 327.5px,#80ca3b 337.5px,#b5d434 350.5px,#dde426 363.5px,#ebc62f 375.5px,#f24a29 400.5px,#f8352e 418.5px,#f7160f 444.5px,#dd0e0e 448.5px,#d5160c 449.5px,#cb1a0a 453.5px,#b12a06 473.5px,#ac690b 500.5px,#a3860b 512.5px,#959e02 527.5px,#9cac06 531.5px,#bad40c 535.5px,#bbd515 537.5px)"></i>
<i style="background:linear-gradient(#2d0057 92.5px,#30045b 106.5px,#2a0b8b 124.5px,#130cb1 142.5px,#0f21ba 161.5px,#1d82b0 197.5px,#249cab 216.5px,#2bb499 235.5px,#2abe7d 254.5px,#2abe62 273.5px,#30be38 292.5px,#32bb31 311.5px,#54c232 326.5px,#7fc937 336.5px,#b4d330 348.5px,#dde422 362.5px,#ecc02d 376.5px,#f24726 401.5px,#f8342e 420.5px,#f62116 440.5px,#f71610 445.5px,#e20f0f 448.5px,#d9170c 449.5px,#cf1b0a 453.5px,#b32a06 473.5px,#ad6a0c 500.5px,#a4880b 512.5px,#939e03 527.5px,#9bad07 531.5px,#b7d30e 535.5px,#b8d317 537.5px)"></i>
<i style="background:linear-gradient(#2d0057 84.5px,#300359 90.5px,#2b0c89 110.5px,#140cb0 130.5px,#0c1cb9 151.5px,#1b83af 192.5px,#229caa 212.5px,#29b398 232.5px,#28be7b 253.5px,#27bd5f 273.5px,#2dbd34 293.5px,#2db92c 313.5px,#4dc02c 327.5px,#79c733 337.5px,#a9d02d 348.5px,#dbe31e 364.5px,#ebc62a 377.5px,#f25d21 397.5px,#f24523 403.5px,#f8342e 422.5px,#f6251a 440.5px,#f71511 446.5px,#e90f0f 448.5px,#df170c 449.5px,#d41b0a 453.5px,#b52b06 473.5px,#a5870b 511.5px,#989d00 523.5px,#929e04 527.5px,#9aae08 531.5px,#b1ce0c 534.5px,#b5d21a 537.5px)"></i>
<i style="background:linear-gradient(#2d0057 86.5px,#2a0a89 107.5px,#130ab0 128.5px,#0b1ab9 149.5px,#167fad 191.5px,#1c99a8 212.5px,#23b195 233.5px,#23bc79 254.5px,#23bc5c 275.5px,#2abc31 296.5px,#2bb92b 316.5px,#41bd2b 326.5px,#79c733 339.5px,#b1d22d 353.5px,#dde31f 368.5px,#ebc62c 380.5px,#f26321 398.5px,#f24722 405.5px,#f7362f 423.5px,#f6261c 441.5px,#f81311 447.5px,#f00f0f 448.5px,#e6180d 449.5px,#d71d0a 454.5px,#bd2606 469.5px,#b33306 477.5px,#a5890b 511.5px,#989c00 522.5px,#919e04 527.5px,#9ab009 531.5px,#b1d00d 534.5px,#b2d11c 537.5px)"></i>
<i style="background:linear-gradient(#2d0057 89.5px,#290987 109.5px,#1209b0 130.5px,#0a19b8 151.5px,#127eab 193.5px,#1796a6 213.5px,#1daf92 234.5px,#20bb76 255.5px,#21bc5b 275.5px,#2abc31 296.5px,#2cb92c 316.5px,#43be2d 326.5px,#7bc836 339.5px,#b3d330 353.5px,#dde423 368.5px,#ecc630 381.5px,#f26721 399.5px,#f24823 407.5px,#f7372f 424.5px,#f6291f 441.5px,#f81110 448.5px,#ee190d 449.5px,#dd1e0b 454.5px,#c12606 469.5px,#b43606 478.5px,#a5880b 510.5px,#989c01 521.5px,#8f9f05 527.5px,#94aa09 530.5px,#adce10 534.5px,#afd01f 537.5px)"></i>
<i style="background:linear-gradient(#2d0057 116.5px,#290a88 134.5px,#120ab0 152.5px,#0c1db9 171.5px,#1781ad 208.5px,#1d99a8 226.5px,#22b194 245.5px,#23bc78 264.5px,#24bd5d 282.5px,#2dbd33 301.5px,#2dba2d 318.5px,#42be2d 326.5px,#7dc836 339.5px,#b3d330 352.5px,#dbe323 366.5px,#ebc730 380.5px,#f1661f 400.5px,#f24622 409.5px,#f7362e 426.5px,#f62d22 441.5px,#f81613 448.5px,#e8200b 453.5px,#c52807 469.5px,#b43906 479.5px,#a3890b 510.5px,#979d00 521.5px,#8e9f06 527.5px,#93ac0a 530.5px,#aacd13 534.5px,#aacf21 537.5px)"></i>
<i style="background:linear-gradient(#2d0057 106.5px,#30035a 114.5px,#2b0b89 132.5px,#130bb1 151.5px,#0e1eb9 170.5px,#1c82af 207.5px,#239caa 226.5px,#29b498 245.5px,#29be7c 264.5px,#28be60 283.5px,#2fbe35 302.5px,#2cb92c 319.5px,#3ebd2c 326.5px,#7dc834 340.5px,#b1d22d 353.5px,#dce41f 368.5px,#ebc52c 382.5px,#f16c1c 401.5px,#f24521 412.5px,#f7372d 427.5px,#f63225 441.5px,#f81b18 448.5px,#f52212 449.5px,#f3220c 453.5px,#c92a07 469.5px,#b24106 482.5px,#a2880b 509.5px,#979d00 520.5px,#8c9d07 526.5px,#92ad0c 530.5px,#a4ca10 533.5px,#a5ce23 537.5px)"></i>
<i style="background:linear-gradient(#2d0057 98.5px,#300359 101.5px,#2b0b89 121.5px,#130bb0 141.5px,#0b1cb9 162.5px,#1881ae 202.5px,#1f9aa9 222.5px,#26b296 242.5px,#26bd7b 262.5px,#25bd5e 282.5px,#2cbd34 302.5px,#29b829 321.5px,#38bb2a 326.5px,#7ac733 341.5px,#b2d22b 356.5px,#dbe31e 371.5px,#ebc52b 385.5px,#f16f1d 404.5px,#f24723 415.5px,#f63b2d 426.5px,#f63628 441.5px,#f7211c 448.5px,#f52717 449.5px,#f2270a 458.5px,#c13106 473.5px,#ae4706 484.5px,#a1840b 507.5px,#969c00 519.5px,#8a9f09 527.5px,#90ae0d 530.5px,#9fcb12 533.5px,#a0cd24 537.5px)"></i>
<i style="background:linear-gradient(#2d0057 102.5px,#290a89 122.5px,#1109b0 142.5px,#091bb8 163.5px,#107dab 203.5px,#1596a5 223.5px,#1aae91 243.5px,#1cba74 263.5px,#1dba58 283.5px,#25bb2e 303.5px,#25b725 322.5px,#78c732 341.5px,#90cb30 347.5px,#b3d22c 357.5px,#dde422 373.5px,#ebc52e 387.5px,#f17121 407.5px,#f24826 418.5px,#f63d2d 428.5px,#f6382a 442.5px,#f72520 448.5px,#f52c1b 449.5px,#f22a0a 461.5px,#db2c07 467.5px,#ba3806 476.5px,#a95008 487.5px,#9f830b 506.5px,#949b01 518.5px,#879f0a 527.5px,#8daf0e 530.5px,#9aca14 533.5px,#9acc26 537.5px)"></i>
<i style="background:linear-gradient(#2d0057 119.5px,#290989 137.5px,#1109b0 156.5px,#091ab8 175.5px,#107cab 213.5px,#1596a5 232.5px,#1aae91 251.5px,#1cba73 271.5px,#1eba57 290.5px,#26bb2d 309.5px,#26b827 324.5px,#63c430 336.5px,#8ecb32 347.5px,#b3d22f 357.5px,#dee425 373.5px,#ebca31 386.5px,#f29b2b 399.5px,#f27123 409.5px,#f34628 421.5px,#f63829 444.5px,#f72a22 448.5px,#f4301c 450.5px,#f12d0a 463.5px,#e52e08 466.5px,#bd3906 475.5px,#a75008 486.5px,#9d800b 504.5px,#949a00 516.5px,#849c0a 526.5px,#86a90e 529.5px,#93c916 533.5px,#94cb27 537.5px)"></i>
<i style="background:linear-gradient(#2d0057 117.5px,#30045a 152.5px,#2b0c8a 169.5px,#160db1 185.5px,#1627bc 203.5px,#2587b2 236.5px,#2fa8a9 259.5px,#2ec07f 288.5px,#2ebf63 305.5px,#30be37 320.5px,#32bb33 328.5px,#6dc636 340.5px,#b4d331 359.5px,#dde425 373.5px,#ebc831 387.5px,#f29b2a 400.5px,#f27221 410.5px,#f24724 421.5px,#f63929 445.5px,#f72e24 448.5px,#f4351d 451.5px,#ef3108 465.5px,#bc3c06 475.5px,#a64e07 484.5px,#9b810a 503.5px,#929801 515.5px,#809b0c 526.5px,#82a90f 529.5px,#8cc413 532.5px,#8dca28 537.5px)"></i>
<i style="background:linear-gradient(#2d0057 100.5px,#31045a 124.5px,#2b0c8b 143.5px,#150cb0 161.5px,#0c1db9 181.5px,#1f85b0 219.5px,#289eac 238.5px,#32b69d 257.5px,#32c181 277.5px,#32c167 296.5px,#38c140 314.5px,#39be39 326.5px,#72c83b 339.5px,#b5d433 359.5px,#dde426 374.5px,#ebc72e 390.5px,#f19c27 403.5px,#f15a20 418.5px,#f24722 424.5px,#f53c28 445.5px,#f63224 448.5px,#f3391e 451.5px,#f03609 465.5px,#bb4006 475.5px,#a45208 484.5px,#9a7e0b 500.5px,#929800 513.5px,#7c980c 525.5px,#7caa10 529.5px,#85c514 532.5px,#87c929 537.5px)"></i>
<i style="background:linear-gradient(#2d0057 101.5px,#30045b 108.5px,#2c0c8a 128.5px,#140cb1 148.5px,#0c1cb9 169.5px,#1c84af 210.5px,#269dab 230.5px,#2fb69b 250.5px,#32c181 271.5px,#32c167 291.5px,#39c140 311.5px,#39bd39 325.5px,#73c83c 338.5px,#b5d435 359.5px,#dee427 376.5px,#ebc72e 394.5px,#f29c29 407.5px,#f16321 419.5px,#f24f22 425.5px,#f34127 443.5px,#f53523 448.5px,#f23d1d 451.5px,#f03d08 466.5px,#b34806 477.5px,#a2590a 485.5px,#9a810a 499.5px,#929800 511.5px,#78960c 524.5px,#75a410 528.5px,#7ec416 532.5px,#80c72a 537.5px)"></i>
<i style="background:linear-gradient(#2d0057 108.5px,#2a0a89 128.5px,#120ab0 148.5px,#0a1ab8 169.5px,#137fac 210.5px,#1a98a7 230.5px,#22b195 250.5px,#26bd7a 271.5px,#28be60 291.5px,#2ebe36 311.5px,#2ebb31 321.5px,#33bc32 325.5px,#6ac637 336.5px,#b5d433 359.5px,#dee428 376.5px,#ebc931 396.5px,#f29a2c 410.5px,#f26c23 420.5px,#f25822 426.5px,#f43921 448.5px,#f1411c 451.5px,#f04609 466.5px,#b05008 478.5px,#9f680b 488.5px,#959a00 508.5px,#74950d 523.5px,#6fa411 528.5px,#76c317 532.5px,#78c62b 537.5px)"></i>
<i style="background:linear-gradient(#2d0057 125.5px,#290987 143.5px,#1109af 162.5px,#091ab8 182.5px,#0d7baa 220.5px,#1094a3 239.5px,#14ac8e 258.5px,#17b871 278.5px,#19b954 297.5px,#20b929 315.5px,#21b927 319.5px,#2cb92a 326.5px,#5bc330 334.5px,#7cc834 343.5px,#b4d32f 359.5px,#dce426 374.5px,#ebc931 396.5px,#f29f2e 410.5px,#f26022 426.5px,#f24d22 442.5px,#f23e1f 448.5px,#f14a1c 451.5px,#f05108 467.5px,#be5508 475.5px,#ac5c0a 480.5px,#9e830b 494.5px,#989d00 506.5px,#6f950e 523.5px,#699f11 527.5px,#6ec119 532.5px,#72c52b 537.5px)"></i>
<i style="background:linear-gradient(#2d0057 162.5px,#290987 178.5px,#1109b0 195.5px,#0c1db9 212.5px,#137fac 246.5px,#1797a6 263.5px,#1aae90 280.5px,#1aba73 297.5px,#1bb94c 316.5px,#27bb2e 323.5px,#2eba2e 328.5px,#60c32f 338.5px,#b3d22d 361.5px,#dde422 376.5px,#ebc72b 398.5px,#f29a29 412.5px,#f16620 426.5px,#f25321 443.5px,#f1451d 448.5px,#f1501c 449.5px,#f1531c 451.5px,#ef5d08 468.5px,#c35f09 475.5px,#b0650b 480.5px,#a4770b 487.5px,#9aa100 504.5px,#7a940c 517.5px,#69950f 523.5px,#63a012 527.5px,#67c01a 532.5px,#6cc42a 537.5px)"></i>
<i style="background:linear-gradient(#2d0057 143.5px,#30045a 149.5px,#2b0c89 167.5px,#140cb0 185.5px,#0d1db9 204.5px,#1d84af 242.5px,#239cab 260.5px,#28b398 278.5px,#27bd7b 297.5px,#23bc58 316.5px,#32be38 324.5px,#35bc36 328.5px,#5dc332 337.5px,#7cc835 348.5px,#b3d22e 363.5px,#dce420 379.5px,#eac626 403.5px,#f19924 415.5px,#f16e1d 427.5px,#f15c1f 443.5px,#f14e1d 448.5px,#f15a1c 449.5px,#f15d1b 451.5px,#f0690b 468.5px,#c36a0b 476.5px,#ae730c 482.5px,#9fa400 501.5px,#66950f 522.5px,#5ca013 527.5px,#60bf19 532.5px,#66c32a 537.5px)"></i>
<i style="background:linear-gradient(#2d0057 124.5px,#30045a 139.5px,#2c0c8a 159.5px,#140cb0 178.5px,#0c1bb9 198.5px,#1982ae 238.5px,#209ba9 257.5px,#27b396 277.5px,#26bd7b 296.5px,#24bc5c 315.5px,#35c03c 323.5px,#39bd39 328.5px,#5cc434 336.5px,#7cc837 348.5px,#bcd62d 367.5px,#dde31f 383.5px,#e8ca23 406.5px,#f19823 419.5px,#f17b1e 428.5px,#f1661e 443.5px,#f1581c 448.5px,#f1641b 449.5px,#f1671b 451.5px,#f0770d 469.5px,#b47c0c 481.5px,#a3a900 499.5px,#609610 522.5px,#56a014 527.5px,#5abe18 532.5px,#60c229 537.5px)"></i>
<i style="background:linear-gradient(#2d0057 122.5px,#30035a 140.5px,#2a0a88 159.5px,#1109b0 179.5px,#091ab8 199.5px,#0c7aa9 238.5px,#0e93a2 258.5px,#11ac8b 278.5px,#12b76e 297.5px,#14b851 315.5px,#2dbd33 323.5px,#36bc34 328.5px,#5ac331 336.5px,#7cc834 349.5px,#b8d52d 366.5px,#d1df25 376.5px,#dde41f 385.5px,#e6d024 407.5px,#f19925 423.5px,#f1641c 448.5px,#f1701b 449.5px,#f1731c 451.5px,#f0850f 470.5px,#b8870d 481.5px,#a6ac00 497.5px,#6b970f 517.5px,#559813 524.5px,#51a513 528.5px,#53bb14 531.5px,#5bc128 537.5px)"></i>
<i style="background:linear-gradient(#2d0057 124.5px,#2e0158 151.5px,#290988 170.5px,#1109b0 189.5px,#091ab8 208.5px,#0a7aa9 246.5px,#0c92a1 265.5px,#0da98b 283.5px,#0eb66b 303.5px,#0fb64f 317.5px,#20b92a 323.5px,#2cb92b 328.5px,#55c12a 337.5px,#79c72f 350.5px,#b2d22a 365.5px,#cddd23 375.5px,#dde31e 388.5px,#e2d924 404.5px,#ebc82c 413.5px,#f29a28 427.5px,#f18322 442.5px,#f1711d 448.5px,#f17d1e 449.5px,#f1801e 451.5px,#f18a1b 464.5px,#f09311 471.5px,#bc930d 481.5px,#aaaf00 495.5px,#84a00d 509.5px,#529713 523.5px,#4da112 527.5px,#4ebb14 531.5px,#55c027 537.5px)"></i>
<i style="background:linear-gradient(#2d0057 128.5px,#2e0157 193.5px,#280989 210.5px,#1009b1 227.5px,#0919b8 243.5px,#0c7aa9 277.5px,#0d92a2 294.5px,#0eaa8b 310.5px,#10b66e 318.5px,#16b852 322.5px,#27bb2d 326.5px,#2bb929 330.5px,#41bd28 335.5px,#77c62e 354.5px,#b2d229 368.5px,#c9db22 377.5px,#dce31d 396.5px,#dfdf20 402.5px,#ebc62c 415.5px,#f19c29 431.5px,#f18f25 442.5px,#f17d1f 448.5px,#f18921 449.5px,#f18c21 451.5px,#f1961f 464.5px,#eda011 472.5px,#bd9f0c 482.5px,#aab201 494.5px,#87a40d 507.5px,#509713 522.5px,#48a212 527.5px,#48bb13 531.5px,#50bf27 537.5px)"></i>
<i style="background:linear-gradient(#2d0057 134.5px,#2f0258 231.5px,#2a0a88 247.5px,#140cb1 263.5px,#0f1fba 279.5px,#1586aa 312.5px,#1a9ba5 316.5px,#27bc7e 321.5px,#34bf3b 327.5px,#33bb31 332.5px,#50c12c 343.5px,#78c733 357.5px,#b1d22d 371.5px,#c2d827 378.5px,#dde31e 403.5px,#ebc62a 417.5px,#efaa28 427.5px,#f19a27 441.5px,#f18822 448.5px,#f19423 449.5px,#f19824 451.5px,#efa120 464.5px,#ebad11 473.5px,#bfa70a 482.5px,#afb400 491.5px,#8aa70d 505.5px,#519813 520.5px,#459f11 526.5px,#43ba12 531.5px,#4bbf26 537.5px)"></i>
<i style="background:linear-gradient(#2d0057 136.5px,#31045a 208.5px,#2b0c8b 226.5px,#150cb0 243.5px,#1223bb 262.5px,#2486b2 297.5px,#2da0ae 312.5px,#32b59f 317.5px,#32c17d 321.5px,#38c145 326.5px,#39be39 331.5px,#7ec93a 358.5px,#b8d52f 374.5px,#dde41e 406.5px,#edb325 428.5px,#f19a26 446.5px,#f19323 448.5px,#f09f23 449.5px,#f0a224 451.5px,#eeac20 465.5px,#e8b810 474.5px,#c3ad09 481.5px,#afb600 490.5px,#8ca90d 503.5px,#4d9812 520.5px,#419f10 526.5px,#3eb411 530.5px,#47be27 537.5px)"></i>
<i style="background:linear-gradient(#2d0057 139.5px,#30055b 165.5px,#2c0c8a 185.5px,#150cb0 205.5px,#0c1db9 227.5px,#1a82af 268.5px,#249dab 289.5px,#2eb59b 309.5px,#32bb92 314.5px,#32c181 318.5px,#32c164 322.5px,#38c143 325.5px,#39bd39 330.5px,#4fc239 336.5px,#80ca3d 357.5px,#b4d333 372.5px,#c0d82e 378.5px,#dde320 409.5px,#edb124 441.5px,#f09e23 448.5px,#eeaa23 449.5px,#eead23 451.5px,#ecb620 465.5px,#e7c10f 474.5px,#c2b307 481.5px,#b1b800 488.5px,#8baa0d 502.5px,#4a9912 520.5px,#3da010 526.5px,#39b410 530.5px,#44bd27 537.5px)"></i>
<i style="background:linear-gradient(#2d0057 142.5px,#30045b 152.5px,#2c0c89 173.5px,#140cb1 195.5px,#0c1cb9 217.5px,#1b83af 261.5px,#259eab 283.5px,#2fb59b 304.5px,#32bb91 312.5px,#32c181 317.5px,#32c16a 321.5px,#38c141 325.5px,#39bd39 330.5px,#7fca3b 358.5px,#b3d332 373.5px,#bfd72e 379.5px,#dde423 411.5px,#ebc325 439.5px,#eeaa23 448.5px,#ecb622 449.5px,#ecba23 452.5px,#eac11f 466.5px,#e4c80d 474.5px,#c5ba06 480.5px,#b3ba00 486.5px,#8dab0d 500.5px,#469a11 520.5px,#39a10f 526.5px,#35b510 530.5px,#41bd28 537.5px)"></i>
<i style="background:linear-gradient(#2d0057 152.5px,#2a0a88 173.5px,#1209b0 195.5px,#0919b8 217.5px,#117dab 261.5px,#1797a5 283.5px,#1eaf93 304.5px,#21b686 313.5px,#23bc6f 319.5px,#2ebd34 326.5px,#30ba2e 331.5px,#7bc836 359.5px,#add12f 373.5px,#bcd62c 380.5px,#dee526 412.5px,#e9ca26 441.5px,#ecb624 448.5px,#eac223 449.5px,#eac524 451.5px,#e8c81f 465.5px,#e1ce0a 474.5px,#b6be00 484.5px,#87ab0e 500.5px,#439b11 520.5px,#36a20f 526.5px,#32b610 530.5px,#3ebc29 537.5px)"></i>
<i style="background:linear-gradient(#2d0057 165.5px,#280988 185.5px,#1109af 205.5px,#0918b8 226.5px,#0b79a9 268.5px,#0d92a2 289.5px,#0fab8b 310.5px,#12b671 318.5px,#16b856 322.5px,#21ba2c 326.5px,#25b827 330.5px,#79c732 361.5px,#a5cf2c 373.5px,#b8d42a 381.5px,#dee527 412.5px,#e6d028 441.5px,#ebc126 448.5px,#e8ca23 449.5px,#e7cc23 451.5px,#e5ce1d 465.5px,#dfd308 474.5px,#bfc600 481.5px,#98b00a 492.5px,#5aa114 511.5px,#3b9d0f 522.5px,#32a30e 526.5px,#2fb611 530.5px,#3bbc29 537.5px)"></i>
<i style="background:linear-gradient(#2d0057 208.5px,#290988 225.5px,#1109b0 243.5px,#0a19b8 261.5px,#0d79aa 297.5px,#0f93a3 313.5px,#12a98f 318.5px,#14b86c 322.5px,#20b92d 328.5px,#23b928 330.5px,#26b726 335.5px,#4dbf29 350.5px,#77c730 364.5px,#a5cf2b 377.5px,#bad529 386.5px,#dde424 412.5px,#e5d429 441.5px,#e9c828 448.5px,#e5d223 451.5px,#e3d31b 465.5px,#dbd903 475.5px,#c7ce00 479.5px,#adbc04 484.5px,#97b00a 491.5px,#59a314 510.5px,#389e0f 522.5px,#2cb612 530.5px,#39bc2a 537.5px)"></i>
<i style="background:linear-gradient(#2d0057 180.5px,#30045a 223.5px,#2b0c89 240.5px,#140cb1 258.5px,#1322bb 276.5px,#1e99a9 317.5px,#1eac96 320.5px,#1cba76 323.5px,#1dba58 326.5px,#24bb37 329.5px,#27bb2d 331.5px,#2cb92b 339.5px,#4fc02c 353.5px,#78c732 367.5px,#a7d02c 381.5px,#bed72a 392.5px,#dce420 414.5px,#e3d727 441.5px,#e8cd28 448.5px,#e3d622 452.5px,#e1d71b 464.5px,#dcdb0a 472.5px,#d9dd01 475.5px,#ced600 477.5px,#adbd05 483.5px,#95af0b 490.5px,#5ba514 508.5px,#379f0f 521.5px,#2fa40e 525.5px,#29b410 529.5px,#36bb2b 537.5px)"></i>
<i style="background:linear-gradient(#2d0057 161.5px,#31045a 183.5px,#2c0c8a 204.5px,#150cb1 225.5px,#0c1cb9 247.5px,#1e84b0 290.5px,#28a0ab 312.5px,#2fb59b 319.5px,#21bc5c 326.5px,#27bc3c 329.5px,#2abc30 331.5px,#2eba2f 339.5px,#51c12f 354.5px,#7ac834 369.5px,#afd22e 386.5px,#bfd82c 394.5px,#dde31d 420.5px,#e2db25 441.5px,#e6d027 448.5px,#e1d921 451.5px,#dfdb18 464.5px,#d4dd01 475.5px,#acbd06 482.5px,#93ae0c 489.5px,#5aa615 507.5px,#37a00f 520.5px,#2ca60f 525.5px,#27b511 529.5px,#34bb2c 537.5px)"></i>
<i style="background:linear-gradient(#2d0057 164.5px,#30035a 168.5px,#2c0c89 190.5px,#150cb0 213.5px,#0c1db9 237.5px,#1c82af 282.5px,#2ba9a4 314.5px,#2ab497 319.5px,#1eba55 327.5px,#25bb38 330.5px,#28bb2f 332.5px,#2eba2e 341.5px,#51c12f 356.5px,#7ac834 371.5px,#b3d330 389.5px,#c1d92e 396.5px,#dde41e 427.5px,#e0de23 441.5px,#e5d324 448.5px,#e1da1f 449.5px,#dfdd1d 453.5px,#dede17 463.5px,#d2dd02 474.5px,#aabd07 481.5px,#90ad0d 488.5px,#5ba815 505.5px,#33a20e 520.5px,#25b410 528.5px,#32bb2c 537.5px)"></i>
<i style="background:linear-gradient(#2d0057 168.5px,#290989 191.5px,#1209af 213.5px,#091ab8 237.5px,#117cab 282.5px,#1a9fa0 312.5px,#19af8d 320.5px,#17b959 327.5px,#24ba2b 333.5px,#2bb92b 343.5px,#50c02d 358.5px,#79c734 373.5px,#b4d333 390.5px,#c4da30 397.5px,#dde421 435.5px,#e3d521 448.5px,#dfdc1c 449.5px,#dddf19 454.5px,#dae10c 467.5px,#cedc03 473.5px,#a7bc08 480.5px,#8dab0e 487.5px,#5ba915 503.5px,#2ea50e 521.5px,#23b412 528.5px,#30ba2d 537.5px)"></i>
<i style="background:linear-gradient(#2d0057 184.5px,#280888 204.5px,#1109af 225.5px,#0919b8 247.5px,#0d7aaa 290.5px,#1497a3 313.5px,#15ab90 321.5px,#16b85c 328.5px,#25ba2c 335.5px,#2bb92b 346.5px,#4ec02c 360.5px,#7cc835 376.5px,#b7d434 391.5px,#c9dc31 399.5px,#dde421 438.5px,#e1d81e 448.5px,#dddf19 449.5px,#dbe214 456.5px,#d7e00e 465.5px,#cbdb04 472.5px,#a4bb09 479.5px,#89aa0e 486.5px,#5ba915 501.5px,#2ba80f 521.5px,#21b414 528.5px,#2eba2e 537.5px)"></i>
<i style="background:linear-gradient(#2d0057 165.5px,#2f0359 223.5px,#2a0b89 241.5px,#140bb0 259.5px,#1222bb 278.5px,#2597ad 320.5px,#25a6a2 323.5px,#1fbb76 328.5px,#27bc43 335.5px,#2dbd33 339.5px,#30ba2f 351.5px,#52c12f 364.5px,#7cc837 378.5px,#b6d435 391.5px,#cdde30 400.5px,#d7e228 412.5px,#dde420 440.5px,#e0da1b 448.5px,#dbe215 451.5px,#d4df0e 464.5px,#c8d905 471.5px,#9db70a 479.5px,#81a80f 486.5px,#5ca815 498.5px,#26ac0f 522.5px,#20b416 528.5px,#2fbb2f 537.5px)"></i>
<i style="background:linear-gradient(#2d0057 154.5px,#31045a 208.5px,#2c0c8a 227.5px,#150cb0 246.5px,#1221bb 266.5px,#2387b2 305.5px,#2da0ae 320.5px,#32b2a1 324.5px,#31bf85 328.5px,#2fbf51 335.5px,#34bf3b 340.5px,#34bc34 352.5px,#55c233 366.5px,#7cc939 379.5px,#b8d535 392.5px,#d0df2e 401.5px,#dce31d 442.5px,#dfdb19 448.5px,#dbe214 449.5px,#c7d907 469.5px,#93b00d 480.5px,#76a510 487.5px,#5aa615 496.5px,#21b110 523.5px,#1eb41c 529.5px,#2fbb31 537.5px)"></i>
<i style="background:linear-gradient(#2d0057 152.5px,#30045a 162.5px,#2c0c89 184.5px,#140cb1 207.5px,#0c1db9 230.5px,#1b81af 275.5px,#259cab 298.5px,#32b997 322.5px,#32c182 327.5px,#35c03c 339.5px,#35bc35 352.5px,#54c233 366.5px,#7dc939 380.5px,#b7d534 392.5px,#d0df2c 401.5px,#dce31b 444.5px,#dedd17 448.5px,#c5d807 468.5px,#91b00e 479.5px,#6ea411 487.5px,#58a514 494.5px,#1fb310 522.5px,#1cb41b 528.5px,#30bc32 537.5px)"></i>
<i style="background:linear-gradient(#2d0057 148.5px,#2b0c8a 172.5px,#140cb1 196.5px,#0c1cb9 220.5px,#1c83af 268.5px,#259dab 292.5px,#32ba95 321.5px,#31bf86 326.5px,#26bd61 332.5px,#2fbe37 340.5px,#30bb30 354.5px,#6fc635 378.5px,#b4d333 392.5px,#cfdf2c 401.5px,#d6e126 409.5px,#d6e11f 440.5px,#ddde16 448.5px,#c3d708 467.5px,#94b20e 477.5px,#6ba411 486.5px,#57a314 492.5px,#21b310 519.5px,#19b319 526.5px,#30bc33 537.5px)"></i>
<i style="background:linear-gradient(#2d0057 149.5px,#280889 172.5px,#1008b0 196.5px,#0919b8 220.5px,#0d7baa 268.5px,#1294a4 292.5px,#1baf91 316.5px,#1bb483 324.5px,#19b954 334.5px,#25bb2c 343.5px,#29b829 356.5px,#4dc02b 370.5px,#7bc835 383.5px,#b5d432 393.5px,#d0df2a 402.5px,#d6e126 410.5px,#d6e120 440.5px,#ddde15 448.5px,#d5df11 450.5px,#c1d608 466.5px,#92b30e 476.5px,#68a412 485.5px,#56a214 490.5px,#35b10f 506.5px,#17b216 523.5px,#30bd34 537.5px)"></i>
<i style="background:linear-gradient(#2d0057 163.5px,#270884 184.5px,#1008b0 207.5px,#0819b8 230.5px,#0a7aa9 276.5px,#0c92a1 299.5px,#10a690 317.5px,#12af83 325.5px,#15b852 336.5px,#21b928 346.5px,#26b725 360.5px,#5ec22d 378.5px,#78c733 384.5px,#b6d42f 394.5px,#d1df28 403.5px,#d8e225 413.5px,#d7e121 439.5px,#ddde14 448.5px,#d4df10 450.5px,#c2d708 464.5px,#91b30e 475.5px,#66a412 484.5px,#51a313 490.5px,#35b00f 503.5px,#16b216 521.5px,#30bd35 537.5px)"></i>
<i style="background:linear-gradient(#2d0057 208.5px,#280887 226.5px,#1109af 245.5px,#0a1bb8 266.5px,#0e7caa 305.5px,#1496a4 323.5px,#16aa92 329.5px,#17b96f 335.5px,#24ba2e 352.5px,#27b827 364.5px,#53c12b 378.5px,#7ac733 386.5px,#b5d32d 395.5px,#cddd27 402.5px,#d9e223 414.5px,#d9e220 440.5px,#ddde14 448.5px,#c0d508 463.5px,#95b60e 473.5px,#64a513 483.5px,#34ad0f 500.5px,#28b510 507.5px,#16b216 518.5px,#2fbe36 537.5px)"></i>
<i style="background:linear-gradient(#2d0057 179.5px,#31045a 218.5px,#2c0c8a 237.5px,#150db1 256.5px,#1524bc 275.5px,#2687b3 313.5px,#2a93b1 321.5px,#30a6ab 328.5px,#28bd7d 337.5px,#2dbd34 357.5px,#2dba2d 368.5px,#45be2d 376.5px,#77c733 387.5px,#b3d22c 396.5px,#ccdd24 404.5px,#d8e220 418.5px,#d9e21e 440.5px,#dddd13 448.5px,#bdd208 462.5px,#94b60f 472.5px,#63a613 482.5px,#33ac0f 498.5px,#25b410 505.5px,#16b216 515.5px,#2dbe3c 537.5px)"></i>
<i style="background:linear-gradient(#2d0057 160.5px,#31045a 174.5px,#2b0c8b 197.5px,#140cb1 219.5px,#0c1cb9 242.5px,#1d83af 288.5px,#279eac 311.5px,#2dada2 324.5px,#32b79a 329.5px,#32c180 336.5px,#36c03c 357.5px,#33bc33 369.5px,#55c231 381.5px,#7cc835 389.5px,#b0d22c 397.5px,#c6da25 404.5px,#d3e021 417.5px,#d8e21d 440.5px,#dddd11 448.5px,#c6d906 457.5px,#aec70a 464.5px,#5ca614 482.5px,#36a90f 494.5px,#22b310 503.5px,#15b215 511.5px,#20b826 524.5px,#2bbd45 537.5px)"></i>
<i style="background:linear-gradient(#2d0057 158.5px,#2c0c8a 182.5px,#140db2 207.5px,#0c1cb9 231.5px,#1c82af 279.5px,#269eac 304.5px,#31b79a 327.5px,#32c181 336.5px,#38c141 358.5px,#37bd37 371.5px,#56c334 382.5px,#7bc837 390.5px,#b1d22e 399.5px,#c0d829 404.5px,#cfde24 417.5px,#d6e11c 440.5px,#dcde0f 448.5px,#d4df0c 449.5px,#c7d906 455.5px,#97b70e 468.5px,#63a814 479.5px,#36a90f 492.5px,#20b310 501.5px,#15b215 508.5px,#20b927 523.5px,#27bc44 531.5px,#28bd4f 537.5px)"></i>
<i style="background:linear-gradient(#2d0057 158.5px,#290a8a 182.5px,#140cb1 206.5px,#0c1cb9 230.5px,#1e84b0 279.5px,#279eac 303.5px,#32b89a 327.5px,#32c180 337.5px,#38c140 360.5px,#39bd39 373.5px,#5cc438 384.5px,#7cc93a 391.5px,#abd132 399.5px,#bed72c 405.5px,#cfde26 420.5px,#d4e01d 440.5px,#dbdf0d 448.5px,#d1de0c 449.5px,#c5d806 454.5px,#98b80e 466.5px,#6fac13 475.5px,#36ab0f 490.5px,#1cb311 500.5px,#14b114 504.5px,#1fb927 520.5px,#25bc4d 530.5px,#26bd5a 537.5px)"></i>
<i style="background:linear-gradient(#2d0057 172.5px,#2a0a88 193.5px,#130cb1 216.5px,#0d1cb9 238.5px,#1f85b0 283.5px,#289ead 305.5px,#32b79c 327.5px,#32c180 338.5px,#38c140 361.5px,#3abe39 374.5px,#57c339 383.5px,#7fca3b 392.5px,#abd132 400.5px,#bcd62e 405.5px,#cfde26 421.5px,#d2df1f 440.5px,#dae20d 448.5px,#cedc0e 449.5px,#c1d607 454.5px,#a1be0c 462.5px,#7ab012 471.5px,#34af0f 489.5px,#15b214 501.5px,#1eb826 516.5px,#23bc5a 530.5px,#25bd63 537.5px)"></i>
<i style="background:linear-gradient(#2d0057 153.5px,#31045a 190.5px,#2c0c8a 210.5px,#150cb0 229.5px,#1211b4 236.5px,#1221bb 250.5px,#2387b1 291.5px,#2ba0ae 311.5px,#32b79c 329.5px,#32c182 339.5px,#39c13f 363.5px,#3abe39 375.5px,#7fc939 393.5px,#a5d031 400.5px,#b9d52c 406.5px,#cddd25 422.5px,#cfde20 441.5px,#d7e010 448.5px,#cadb10 449.5px,#bdd509 454.5px,#9cbd0e 462.5px,#7cb312 469.5px,#36b310 487.5px,#17b215 498.5px,#1eb825 512.5px,#21bc5c 527.5px,#25bd6c 537.5px)"></i>
<i style="background:linear-gradient(#2d0057 149.5px,#30045b 159.5px,#2b0c8b 182.5px,#140cb1 205.5px,#0c1db9 229.5px,#1e84b0 276.5px,#279eac 299.5px,#32b996 327.5px,#32c168 350.5px,#39c13f 364.5px,#39be39 376.5px,#56c335 386.5px,#9cce30 401.5px,#b4d32b 408.5px,#c7da24 423.5px,#ccdd23 441.5px,#d4df13 448.5px,#c8da14 449.5px,#b7d20b 455.5px,#9cbf0f 461.5px,#7fb612 467.5px,#38b810 485.5px,#19b317 496.5px,#1fb927 509.5px,#1fbb5b 523.5px,#25bd75 537.5px)"></i>
<i style="background:linear-gradient(#2d0057 145.5px,#2b0c8a 170.5px,#140cb1 195.5px,#0c1cb9 220.5px,#1d83af 270.5px,#279dac 295.5px,#32ba94 327.5px,#32c166 352.5px,#39c13f 366.5px,#3abe39 379.5px,#56c335 388.5px,#9bce30 404.5px,#afd12d 411.5px,#bfd828 424.5px,#c9db26 441.5px,#d1de16 448.5px,#c5d917 449.5px,#afce0d 456.5px,#7db813 466.5px,#61b516 472.5px,#3ab912 483.5px,#1bb41a 494.5px,#20b928 506.5px,#1fbb5a 519.5px,#25bd77 530.5px,#26bb7f 537.5px)"></i>
<i style="background:linear-gradient(#2d0057 146.5px,#290989 170.5px,#1109b0 195.5px,#091ab8 221.5px,#0e7caa 271.5px,#1596a5 296.5px,#20b094 321.5px,#2bbf7d 339.5px,#2ebf65 353.5px,#37c03d 368.5px,#37bd37 380.5px,#92cc34 404.5px,#a8d031 412.5px,#b9d52e 423.5px,#c4da2a 440.5px,#cddd19 448.5px,#c1d71a 449.5px,#abcd10 456.5px,#75b814 466.5px,#3bb914 481.5px,#1db41d 492.5px,#22ba29 503.5px,#1fbb59 515.5px,#25bb7e 529.5px,#26b889 537.5px)"></i>
<i style="background:linear-gradient(#2d0057 161.5px,#280888 183.5px,#1009b0 207.5px,#0919b8 231.5px,#0b79a9 279.5px,#0c92a2 303.5px,#0fa590 322.5px,#1ab968 347.5px,#20bb58 357.5px,#2fbe36 370.5px,#34bc34 382.5px,#8bcb37 404.5px,#a4d034 413.5px,#b7d432 424.5px,#c1d82c 440.5px,#c9db1c 448.5px,#bcd51d 449.5px,#9eca11 457.5px,#61b617 468.5px,#3eba14 478.5px,#1fb51f 490.5px,#24ba2d 501.5px,#20bb5b 512.5px,#25b886 528.5px,#26b493 537.5px)"></i>
<i style="background:linear-gradient(#2d0057 211.5px,#280989 231.5px,#1109b0 251.5px,#0919b8 272.5px,#0c79a9 312.5px,#0e92a2 329.5px,#12ac8d 341.5px,#1cba5f 361.5px,#2dbd33 376.5px,#33bb31 385.5px,#8acb37 406.5px,#a8d135 417.5px,#b8d533 427.5px,#bdd72d 441.5px,#c3d920 448.5px,#b6d321 449.5px,#95c813 457.5px,#60b616 466.5px,#3bb913 476.5px,#21b51f 487.5px,#26bb2d 498.5px,#21bc5c 509.5px,#23ba7e 521.5px,#26b395 530.5px,#24ad9b 537.5px)"></i>
<i style="background:linear-gradient(#2d0057 257.5px,#280988 273.5px,#1109af 289.5px,#0a1bb8 306.5px,#0c4ab1 321.5px,#0f7bab 332.5px,#1496a5 341.5px,#1aaf90 351.5px,#1fbb75 361.5px,#23bc5d 370.5px,#2ebd35 380.5px,#34bb31 388.5px,#71c736 402.5px,#a3d033 419.5px,#b4d331 430.5px,#b9d52d 443.5px,#bdd623 448.5px,#b0d124 449.5px,#8ac715 457.5px,#56b515 466.5px,#3ab811 473.5px,#20b51e 484.5px,#27bb30 496.5px,#22bc5c 506.5px,#23bc77 515.5px,#25b296 526.5px,#22a3a2 537.5px)"></i>
<i style="background:linear-gradient(#2d0057 257.5px,#280989 274.5px,#1209af 290.5px,#0a1ab9 307.5px,#0f4bb3 322.5px,#1882ad 334.5px,#1f9aa9 343.5px,#26b395 354.5px,#28be62 373.5px,#31be37 383.5px,#33bb32 390.5px,#69c534 403.5px,#9ace32 421.5px,#a8d030 430.5px,#b2d22e 444.5px,#b6d326 448.5px,#a7cf27 449.5px,#7ec418 457.5px,#50b314 465.5px,#32b610 472.5px,#1cb41b 481.5px,#26bb2f 493.5px,#22bc5c 503.5px,#22bc78 512.5px,#24b295 522.5px,#1e99a9 537.5px)"></i>
<i style="background:linear-gradient(#2d0057 183.5px,#2f0359 258.5px,#290a89 275.5px,#120ab1 292.5px,#0a1ab8 309.5px,#0e49b3 323.5px,#1781ad 335.5px,#1e9aa8 345.5px,#25b296 356.5px,#25bd5f 376.5px,#2fbd35 385.5px,#32bb31 392.5px,#65c534 405.5px,#8ecc34 422.5px,#add12a 448.5px,#9ccd2a 449.5px,#48b212 464.5px,#17b215 477.5px,#23ba2a 489.5px,#22bc5c 500.5px,#22bc78 509.5px,#22b194 518.5px,#1e9ca6 527.5px,#1b8eab 537.5px)"></i>
<i style="background:linear-gradient(#2d0057 182.5px,#300459 260.5px,#290988 277.5px,#1109b0 294.5px,#0919b8 311.5px,#0941b2 323.5px,#0c7aaa 336.5px,#1093a3 347.5px,#15ad8c 359.5px,#19b958 378.5px,#27bb2e 387.5px,#2fba2d 394.5px,#5cc331 405.5px,#75c736 415.5px,#8ccb34 428.5px,#a1cf2d 448.5px,#91cb2d 449.5px,#3fb111 463.5px,#13b010 473.5px,#1db826 485.5px,#1fbb59 496.5px,#21bb79 506.5px,#21b193 514.5px,#1c98a8 524.5px,#1783ad 537.5px)"></i>
<i style="background:linear-gradient(#2d0057 186.5px,#2e0158 280.5px,#290887 295.5px,#1109b0 310.5px,#0919b8 323.5px,#0b78a9 343.5px,#0d92a2 354.5px,#0fab8a 365.5px,#12b752 382.5px,#20b927 390.5px,#28b828 396.5px,#48bf2c 403.5px,#6dc633 416.5px,#95cd31 448.5px,#85c931 449.5px,#44b912 460.5px,#28ad0f 465.5px,#11ab10 470.5px,#17b620 480.5px,#1ab953 491.5px,#1fbb77 502.5px,#1faf94 511.5px,#1a9aa6 519.5px,#136eaf 537.5px)"></i>
<i style="background:linear-gradient(#2d0057 193.5px,#2d0157 316.5px,#290886 324.5px,#1009b0 332.5px,#091bb8 340.5px,#0b79a9 357.5px,#0c94a0 367.5px,#0eaa8b 375.5px,#0eb66b 382.5px,#10b751 387.5px,#1eb826 393.5px,#25b726 399.5px,#45be2a 407.5px,#67c42f 420.5px,#81c937 443.5px,#89ca33 448.5px,#79c732 449.5px,#3cb912 459.5px,#11a70f 467.5px,#11b418 475.5px,#12b74f 486.5px,#19b972 497.5px,#1bb289 504.5px,#1795a6 516.5px,#137fab 524.5px,#105fb0 532.5px,#0f56b1 537.5px)"></i>
<i style="background:linear-gradient(#2d0057 203.5px,#2d0057 329.5px,#280888 336.5px,#1108af 343.5px,#0919b8 351.5px,#0a79a9 368.5px,#0b92a0 376.5px,#0caa88 382.5px,#0eb46f 386.5px,#22b928 397.5px,#27b827 403.5px,#41bd29 411.5px,#61c32d 426.5px,#79c835 446.5px,#7bc731 448.5px,#6dc52d 449.5px,#34b710 458.5px,#0fa10f 465.5px,#0faa17 472.5px,#0ab54a 481.5px,#11b76d 492.5px,#15ad8d 502.5px,#1293a5 512.5px,#107cab 520.5px,#0c49b2 531.5px,#0c3bb4 537.5px)"></i>
<i style="background:linear-gradient(#2d0057 216.5px,#2e0157 336.5px,#290887 343.5px,#1209ad 350.5px,#091bb8 359.5px,#0b77a9 375.5px,#0d92a2 381.5px,#10ac88 386.5px,#14b86d 390.5px,#28bb2f 399.5px,#2bb92b 407.5px,#55c12a 428.5px,#6bc42e 446.5px,#6cc42a 448.5px,#5ec125 449.5px,#30b710 456.5px,#0e9b0e 462.5px,#0e9e16 469.5px,#08aa45 477.5px,#08b465 485.5px,#0eaa8b 497.5px,#0e92a3 507.5px,#0d7ca9 515.5px,#0a36b4 529.5px,#0920b7 537.5px)"></i>
<i style="background:linear-gradient(#2d0057 235.5px,#31045a 340.5px,#2a0c8c 348.5px,#160caf 355.5px,#1122ba 365.5px,#1c98a8 384.5px,#1fb093 388.5px,#21bc76 392.5px,#2ebd34 402.5px,#2eba2d 411.5px,#48bf29 427.5px,#58c025 446.5px,#59c021 448.5px,#4abd1c 449.5px,#2bb510 454.5px,#0e9b0e 459.5px,#0d9616 466.5px,#079d40 473.5px,#07a862 481.5px,#08a28d 493.5px,#0a92a0 501.5px,#0a77a9 511.5px,#081ab8 529.5px,#0c12b5 537.5px)"></i>
<i style="background:linear-gradient(#2d0057 252.5px,#31045a 332.5px,#2c0c8a 342.5px,#140db2 352.5px,#0f1fba 362.5px,#1750b5 372.5px,#2185b1 380.5px,#269dac 385.5px,#29b399 389.5px,#28bd7c 393.5px,#2abe52 399.5px,#2fbd35 404.5px,#2cb92b 414.5px,#41bd27 430.5px,#43bb18 448.5px,#34b815 449.5px,#23b410 452.5px,#0e9c0f 457.5px,#0d9413 462.5px,#07953c 469.5px,#079b7c 484.5px,#088c9a 494.5px,#0878a7 505.5px,#0817b7 524.5px,#1009b0 537.5px)"></i>
<i style="background:linear-gradient(#2d0057 268.5px,#31045a 312.5px,#2c0c8a 326.5px,#140cb1 340.5px,#0d1bb9 352.5px,#239cab 385.5px,#27b396 390.5px,#25bd73 395.5px,#2abc32 405.5px,#26b725 419.5px,#35ba23 433.5px,#2fb719 446.5px,#2eb613 448.5px,#1fb311 449.5px,#10aa0f 452.5px,#0d9715 459.5px,#07923e 466.5px,#079475 479.5px,#078494 488.5px,#0870a1 499.5px,#0817b1 518.5px,#1008aa 528.5px,#1c0897 537.5px)"></i>
<i style="background:linear-gradient(#2d0057 287.5px,#300459 308.5px,#2a0c8b 324.5px,#150cb0 338.5px,#0b1cb9 353.5px,#1697a4 387.5px,#1ab779 395.5px,#1bba5a 400.5px,#20b927 409.5px,#1eb51f 423.5px,#26b61e 436.5px,#1cb314 447.5px,#10ad10 449.5px,#0e9e18 456.5px,#07953c 462.5px,#079277 476.5px,#07828f 483.5px,#07709b 491.5px,#0816ad 513.5px,#0f07a4 522.5px,#200889 530.5px,#27077c 537.5px)"></i>
<i style="background:linear-gradient(#2d0057 311.5px,#270888 326.5px,#1008a3 340.5px,#0716aa 355.5px,#0850a4 374.5px,#088f9c 389.5px,#0cae7e 395.5px,#10b654 402.5px,#13b633 408.5px,#15b51c 414.5px,#19b41a 436.5px,#10ae11 448.5px,#0ea619 453.5px,#079a3d 459.5px,#079779 473.5px,#078491 480.5px,#07709b 487.5px,#0741a3 496.5px,#0816a9 507.5px,#0f079f 517.5px,#24077d 526.5px,#2a0262 537.5px)"></i>
<i style="background:linear-gradient(#2d0057 328.5px,#2a0053 333.5px,#230778 345.5px,#0f079b 357.5px,#0717a3 371.5px,#07449d 382.5px,#088798 392.5px,#08a981 397.5px,#09b467 401.5px,#0daf28 416.5px,#10af18 422.5px,#10b315 429.5px,#11b316 446.5px,#0fa716 449.5px,#079e41 457.5px,#079a7c 471.5px,#078694 478.5px,#076f9d 485.5px,#0748a2 491.5px,#0716a7 501.5px,#0e089e 511.5px,#230778 521.5px,#2d0057 530.5px)"></i>
<i style="background:linear-gradient(#2d0057 357.5px,#260886 369.5px,#1008ad 379.5px,#0817b7 385.5px,#0837b3 388.5px,#0a7aa8 393.5px,#0b90a1 396.5px,#0aa988 400.5px,#08b168 405.5px,#07a743 416.5px,#0ea71c 429.5px,#0fa615 435.5px,#0fac16 446.5px,#0fa415 448.5px,#0ca222 449.5px,#079f3e 454.5px,#07957b 470.5px,#078190 477.5px,#076d97 483.5px,#072ca2 493.5px,#0715a4 497.5px,#0e079a 506.5px,#220776 516.5px,#2b0056 525.5px,#2d0057 527.5px)"></i>
<i style="background:linear-gradient(#2d0057 322.5px,#300359 349.5px,#2a0b8a 364.5px,#130bb1 378.5px,#1012b4 382.5px,#0e1dba 386.5px,#113bb6 389.5px,#157bae 394.5px,#168aa9 396.5px,#10a98e 402.5px,#08b072 407.5px,#08a95b 413.5px,#0a9d2b 433.5px,#0c9c20 448.5px,#099a30 449.5px,#079a3f 452.5px,#078c6f 467.5px,#077485 476.5px,#07618b 482.5px,#07169c 494.5px,#0e0793 502.5px,#210773 511.5px,#2b0053 521.5px,#2d0057 523.5px)"></i>
<i style="background:linear-gradient(#2d0057 318.5px,#2f045b 326.5px,#2b0b8a 344.5px,#130bb1 363.5px,#0b1cb9 381.5px,#1041b5 388.5px,#1883ad 395.5px,#198eaa 397.5px,#12aa8f 404.5px,#09ae79 409.5px,#079b48 429.5px,#099530 448.5px,#07943e 449.5px,#068169 465.5px,#065d7f 479.5px,#071291 492.5px,#0d078e 498.5px,#20076f 506.5px,#2a0052 516.5px,#2d0057 519.5px)"></i>
<i style="background:linear-gradient(#2d0057 313.5px,#2a0b8a 335.5px,#140bb0 355.5px,#0b1bb9 377.5px,#0f3fb5 387.5px,#1782ad 396.5px,#1890a8 399.5px,#12a198 404.5px,#08aa84 410.5px,#079854 430.5px,#06904b 443.5px,#068f40 448.5px,#068e4a 449.5px,#067d65 461.5px,#06597b 476.5px,#061289 489.5px,#0d0686 495.5px,#200669 502.5px,#290051 510.5px,#2d0057 514.5px)"></i>
<i style="background:linear-gradient(#2d0057 313.5px,#290a89 334.5px,#120ab0 355.5px,#0a1bb9 377.5px,#0e40b4 388.5px,#137fac 397.5px,#089e92 408.5px,#079460 430.5px,#06895b 443.5px,#068b4c 448.5px,#068856 449.5px,#067d65 456.5px,#06577a 473.5px,#061186 486.5px,#0d0681 492.5px,#280050 504.5px,#2d0057 509.5px)"></i>
<i style="background:linear-gradient(#2d0057 315.5px,#220776 335.5px,#18067c 344.5px,#0d0791 356.5px,#07149e 376.5px,#0724a8 383.5px,#083cb2 389.5px,#0a77a9 398.5px,#0881a4 401.5px,#078884 411.5px,#079173 424.5px,#068965 433.5px,#068467 444.5px,#068458 448.5px,#067d66 451.5px,#065d7a 467.5px,#06507d 471.5px,#061187 483.5px,#0d0680 489.5px,#28004f 500.5px,#2d0057 505.5px)"></i>
<i style="background:linear-gradient(#2d0057 318.5px,#290051 326.5px,#0c0681 364.5px,#061288 383.5px,#062a87 391.5px,#066187 401.5px,#066884 404.5px,#068172 424.5px,#06826c 432.5px,#067c70 440.5px,#068571 446.5px,#067f63 448.5px,#06786a 449.5px,#066c78 456.5px,#06587e 466.5px,#061389 480.5px,#0c0683 486.5px,#270151 497.5px,#2d0057 501.5px)"></i>
<i style="background:linear-gradient(#2d0057 326.5px,#26004a 352.5px,#0b0882 386.5px,#061287 393.5px,#064681 402.5px,#065b7d 407.5px,#06766f 432.5px,#067676 439.5px,#07857d 446.5px,#067d6c 448.5px,#067372 449.5px,#065a80 463.5px,#06128b 478.5px,#0c0785 484.5px,#280152 495.5px,#2d0057 498.5px)"></i>
<i style="background:linear-gradient(#2d0057 347.5px,#240047 382.5px,#1c0666 390.5px,#0b0781 395.5px,#061587 400.5px,#063b81 407.5px,#06587c 416.5px,#066e7a 439.5px,#078485 446.5px,#067973 448.5px,#066f78 449.5px,#065981 461.5px,#07118c 477.5px,#0d0685 483.5px,#290051 494.5px,#2d0057 496.5px)"></i>
<i style="background:linear-gradient(#2d0057 372.5px,#240049 392.5px,#0b0782 400.5px,#061288 405.5px,#06577c 426.5px,#06607a 435.5px,#06677e 440.5px,#077f8b 446.5px,#067678 448.5px,#066b7b 449.5px,#065880 459.5px,#06128b 475.5px,#0c0785 481.5px,#2a0050 493.5px,#2d0057 495.5px)"></i>
<i style="background:linear-gradient(#2d0057 390.5px,#27004d 395.5px,#140678 401.5px,#0b0885 404.5px,#062289 417.5px,#064f80 436.5px,#07788d 446.5px,#06707c 448.5px,#06667c 449.5px,#064680 461.5px,#061289 473.5px,#0c0682 480.5px,#280153 491.5px,#2d0057 494.5px)"></i>
<i style="background:linear-gradient(#2d0057 395.5px,#290154 397.5px,#0e0683 406.5px,#071399 416.5px,#072296 418.5px,#07488e 436.5px,#076992 442.5px,#07748d 446.5px,#066d7b 448.5px,#06637b 449.5px,#065a7c 453.5px,#061187 471.5px,#0c0680 478.5px,#290050 490.5px,#2d0057 492.5px)"></i>
<i style="background:linear-gradient(#2d0057 398.5px,#140785 408.5px,#0e0aaa 413.5px,#0b10b2 415.5px,#071da7 420.5px,#0846b0 433.5px,#085aad 439.5px,#077095 445.5px,#06677c 448.5px,#06457e 454.5px,#061386 467.5px,#0c0680 475.5px,#280151 487.5px,#2d0057 491.5px)"></i>
<i style="background:linear-gradient(#2d0057 400.5px,#220893 408.5px,#0e10b4 414.5px,#0918b8 420.5px,#105cb0 436.5px,#0873a7 444.5px,#06637f 448.5px,#063481 454.5px,#061186 463.5px,#0c0681 471.5px,#280050 484.5px,#2d0057 488.5px)"></i>
<i style="background:linear-gradient(#2d0057 401.5px,#280a8c 408.5px,#110cb1 412.5px,#0a19b8 420.5px,#126fae 437.5px,#0a7aa8 445.5px,#0877a2 446.5px,#066585 448.5px,#061387 457.5px,#0c0681 466.5px,#28004e 481.5px,#2d0057 486.5px)"></i>
<i style="background:linear-gradient(#2d0057 402.5px,#2f035c 403.5px,#290a8b 407.5px,#180aa7 409.5px,#130ab0 411.5px,#0b1cb9 420.5px,#1157b1 429.5px,#147eac 437.5px,#1280ab 443.5px,#087ba3 447.5px,#077093 448.5px,#07638e 449.5px,#06168b 456.5px,#0a0a85 458.5px,#28004d 476.5px,#2d0057 482.5px)"></i>
<i style="background:linear-gradient(#2d0057 402.5px,#200a9a 406.5px,#120bb1 411.5px,#0b1ab8 418.5px,#1680ad 434.5px,#1588aa 443.5px,#0b83a6 448.5px,#0a76a9 450.5px,#0a53af 453.5px,#0915b7 457.5px,#0f07a1 459.5px,#180789 460.5px,#1e066c 462.5px,#1f0458 465.5px,#27004c 471.5px,#2d0057 478.5px)"></i>
<i style="background:linear-gradient(#2d0057 400.5px,#2a0a88 402.5px,#120bb1 409.5px,#0b1bb9 416.5px,#1782ad 431.5px,#1a91a9 437.5px,#1992a8 443.5px,#1590a7 448.5px,#1480ac 452.5px,#125db1 455.5px,#0d1ab8 459.5px,#120bb1 461.5px,#1b0aa2 462.5px,#2a0a86 463.5px,#2e025c 465.5px,#290050 468.5px,#2d0057 474.5px)"></i>
<i style="background:linear-gradient(#2d0057 396.5px,#2f035c 397.5px,#2c0776 398.5px,#2b0982 399.5px,#120ab1 406.5px,#0c1bb9 413.5px,#1781ad 427.5px,#1d9ea3 437.5px,#1da0a2 443.5px,#1c9ea2 448.5px,#1682ac 456.5px,#125eb1 459.5px,#0c18b8 463.5px,#130bb0 465.5px,#290b8b 467.5px,#2e0565 468.5px,#2d0057 469.5px)"></i>
<i style="background:linear-gradient(#2d0057 393.5px,#2d066e 394.5px,#2a0b8a 397.5px,#150bad 402.5px,#0c1bb9 409.5px,#1781ad 423.5px,#20ac98 436.5px,#21b095 442.5px,#1fa79c 452.5px,#1788ab 460.5px,#1367af 463.5px,#0b1db8 467.5px,#110db2 469.5px,#1a0ba4 470.5px,#2c0878 472.5px,#2d0057 473.5px)"></i>
<i style="background:linear-gradient(#2d0057 388.5px,#2a0a88 393.5px,#150bac 398.5px,#0b19b8 404.5px,#1782ad 418.5px,#1c98a8 424.5px,#21b194 431.5px,#21b880 437.5px,#21b97f 441.5px,#21b881 448.5px,#21b291 456.5px,#1c9ca4 462.5px,#1477ad 467.5px,#0b19b8 472.5px,#130bb1 474.5px,#2a0a88 476.5px,#2d0057 478.5px)"></i>
<i style="background:linear-gradient(#2d0057 383.5px,#2b0a86 388.5px,#120bb1 394.5px,#0b1eb8 400.5px,#1680ad 412.5px,#1c9aa6 419.5px,#21af95 425.5px,#21bc76 433.5px,#21bc68 438.5px,#21bb6a 448.5px,#21bb78 457.5px,#20b094 464.5px,#1684ab 471.5px,#1266af 473.5px,#0b18b8 477.5px,#140baf 479.5px,#2b0a86 481.5px,#2d0057 483.5px)"></i>
<i style="background:linear-gradient(#2d0057 377.5px,#290b8b 383.5px,#160bac 388.5px,#0b19b8 394.5px,#1681ad 407.5px,#1b99a7 413.5px,#21b193 420.5px,#21bc76 427.5px,#23bc4e 437.5px,#23bb4e 445.5px,#21bb63 459.5px,#21b28f 469.5px,#1584ab 476.5px,#1166af 478.5px,#0c18b8 482.5px,#140bae 484.5px,#2b0a84 486.5px,#2e0569 487.5px,#2d0057 488.5px)"></i>
<i style="background:linear-gradient(#2d0057 371.5px,#290b8b 377.5px,#150bac 382.5px,#0b1ab9 389.5px,#167ead 401.5px,#1c9aa6 408.5px,#21b094 414.5px,#21bc75 422.5px,#28bb30 437.5px,#27bb2f 444.5px,#23bb46 459.5px,#21bb79 470.5px,#21b48c 473.5px,#1b9da3 477.5px,#1685ab 480.5px,#1478ad 481.5px,#0c17b7 486.5px,#170ba9 488.5px,#2b097e 490.5px,#2e0463 491.5px,#2d0057 492.5px)"></i>
<i style="background:linear-gradient(#2d0057 364.5px,#2b0a86 370.5px,#150bad 376.5px,#0b1cb9 383.5px,#1680ad 396.5px,#1c9ba6 403.5px,#21b194 409.5px,#21bc74 417.5px,#28bb2f 432.5px,#25b92a 454.5px,#24ba32 462.5px,#21b97d 475.5px,#20b193 478.5px,#1682ac 484.5px,#1160b0 486.5px,#0b1fb8 489.5px,#110db2 491.5px,#270b8f 493.5px,#2f035c 495.5px,#2d0057 496.5px)"></i>
<i style="background:linear-gradient(#2d0057 357.5px,#290b8a 364.5px,#130bb0 370.5px,#0b19b8 376.5px,#1682ac 391.5px,#1c9ca5 398.5px,#21b095 404.5px,#21bc74 412.5px,#21bc59 419.5px,#28bb2f 427.5px,#23b724 450.5px,#23ba2a 466.5px,#21bb77 478.5px,#20b094 482.5px,#1b9aa6 485.5px,#157fad 488.5px,#0b1ab8 493.5px,#120bb1 495.5px,#2a0b89 497.5px,#2d0057 499.5px)"></i>
<i style="background:linear-gradient(#2d0057 350.5px,#2a0a88 357.5px,#150bad 363.5px,#0b1ab8 370.5px,#1681ad 385.5px,#1c9aa6 392.5px,#21b094 399.5px,#21bc76 407.5px,#28bb2f 423.5px,#29b828 431.5px,#39bb26 437.5px,#20b520 461.5px,#23ba2b 471.5px,#21bb78 482.5px,#1fae96 486.5px,#1685ab 491.5px,#1478ad 492.5px,#0c17b7 497.5px,#160baa 499.5px,#2b0981 501.5px,#2e0567 502.5px,#2d0057 503.5px)"></i>
<i style="background:linear-gradient(#2d0057 343.5px,#2a0a87 350.5px,#130bb0 357.5px,#0b1ab9 364.5px,#157dad 378.5px,#1b97a8 386.5px,#21b292 394.5px,#21bc5d 409.5px,#28bc30 418.5px,#28b828 426.5px,#48be26 436.5px,#33b920 459.5px,#21b621 467.5px,#25ba2c 475.5px,#21ba7c 486.5px,#20b094 489.5px,#1b99a6 492.5px,#157dad 495.5px,#0b19b8 500.5px,#130bb0 502.5px,#2a0b89 504.5px,#2d0057 506.5px)"></i>
<i style="background:linear-gradient(#2d0057 336.5px,#2a0a88 343.5px,#140bae 350.5px,#0b1cb8 358.5px,#1680ad 373.5px,#1b98a8 380.5px,#21b193 389.5px,#21bb78 396.5px,#21bc5c 405.5px,#28bb2f 414.5px,#29b828 423.5px,#59c128 436.5px,#40bc21 461.5px,#23b623 472.5px,#26bb2c 479.5px,#21ba7b 489.5px,#20b094 492.5px,#1b99a7 495.5px,#157cad 498.5px,#0b19b8 503.5px,#130bb0 505.5px,#2a0b8a 507.5px,#2d0057 509.5px)"></i>
<i style="background:linear-gradient(#2d0057 329.5px,#290b8b 337.5px,#130bb0 344.5px,#0b1db8 352.5px,#157fad 367.5px,#1b98a7 375.5px,#20af95 383.5px,#21bb79 391.5px,#21bc58 401.5px,#28bc2f 409.5px,#29b828 419.5px,#6ac42b 436.5px,#51bf24 462.5px,#25b723 476.5px,#24b827 480.5px,#24ba2c 483.5px,#1fba79 492.5px,#1eaf93 495.5px,#1998a7 498.5px,#147bad 501.5px,#0b19b8 506.5px,#120bb1 508.5px,#280a8c 510.5px,#2e025c 512.5px,#2d0057 513.5px)"></i>
<i style="background:linear-gradient(#2d0057 324.5px,#2a0a89 331.5px,#120bb1 339.5px,#0b1ab8 346.5px,#137fac 363.5px,#1897a6 370.5px,#1eb091 379.5px,#20bb74 388.5px,#27bb2f 405.5px,#27b827 414.5px,#7cc72c 436.5px,#60c226 464.5px,#3cbb1e 474.5px,#19b319 481.5px,#13b51a 486.5px,#0db329 488.5px,#08ab46 491.5px,#078e74 498.5px,#077582 501.5px,#065d86 504.5px,#071290 509.5px,#0c078b 511.5px,#210780 513.5px,#2b015d 515.5px,#2d0057 516.5px)"></i>
<i style="background:linear-gradient(#2d0057 324.5px,#27077e 330.5px,#180789 335.5px,#100799 338.5px,#0814a6 345.5px,#0885a3 366.5px,#10aa8c 377.5px,#15b86f 386.5px,#23ba2e 402.5px,#25b725 411.5px,#48be26 421.5px,#76c62d 430.5px,#8fca29 436.5px,#6fc427 463.5px,#5ec020 468.5px,#3bb911 474.5px,#0d900d 482.5px,#0c8714 487.5px,#067c61 497.5px,#066a74 500.5px,#06557b 503.5px,#061a85 507.5px,#0e067d 510.5px,#22066c 512.5px,#2a0051 514.5px,#2d0057 515.5px)"></i>
<i style="background:linear-gradient(#2d0057 326.5px,#290052 330.5px,#0c0681 343.5px,#061187 350.5px,#06597f 365.5px,#06707c 372.5px,#079c60 386.5px,#08af43 395.5px,#17b61f 403.5px,#1cb41c 411.5px,#71c429 428.5px,#8fca26 433.5px,#9ecc23 437.5px,#7ac520 462.5px,#62bf18 467.5px,#2b950d 475.5px,#0c830c 481.5px,#0b8417 486.5px,#06834a 492.5px,#067b63 495.5px,#06577b 500.5px,#061686 504.5px,#0b0781 506.5px,#250047 510.5px,#2d0057 514.5px)"></i>
<i style="background:linear-gradient(#2d0057 329.5px,#26004e 337.5px,#0c0680 349.5px,#061187 356.5px,#065a7c 370.5px,#066c78 376.5px,#06924e 392.5px,#0fa816 405.5px,#10b010 412.5px,#44bb18 422.5px,#71c320 429.5px,#92c91b 434.5px,#a0cc18 438.5px,#80c516 460.5px,#3a920f 471.5px,#0c810d 480.5px,#0b8315 484.5px,#06834c 490.5px,#067866 493.5px,#06597a 497.5px,#061286 501.5px,#0e067d 503.5px,#220147 506.5px,#2d0057 512.5px)"></i>
<i style="background:linear-gradient(#2d0057 335.5px,#26004a 344.5px,#0c0680 356.5px,#061288 363.5px,#06577f 374.5px,#066f7b 381.5px,#079455 394.5px,#0ea115 408.5px,#0fa710 414.5px,#37b210 423.5px,#6bb916 431.5px,#8db910 438.5px,#80af10 446.5px,#74ae12 457.5px,#66a512 461.5px,#3f8e0f 468.5px,#0c810c 477.5px,#0c8311 481.5px,#06834a 487.5px,#067866 490.5px,#066875 492.5px,#06577b 494.5px,#061d84 497.5px,#0b0781 499.5px,#210146 502.5px,#2d0057 509.5px)"></i>
<i style="background:linear-gradient(#2d0057 343.5px,#28004d 350.5px,#210772 356.5px,#0f0796 362.5px,#0715a1 368.5px,#07709d 379.5px,#088798 385.5px,#08a57d 393.5px,#08aa41 405.5px,#0fad16 412.5px,#10a80f 418.5px,#51a613 431.5px,#71a110 439.5px,#579712 459.5px,#0c810d 475.5px,#0c8312 478.5px,#06834d 484.5px,#066d71 488.5px,#065b79 490.5px,#071086 494.5px,#0a0882 495.5px,#140673 496.5px,#200143 498.5px,#2d0057 505.5px)"></i>
<i style="background:linear-gradient(#2d0057 351.5px,#290a8b 358.5px,#120ab1 364.5px,#0d1fb9 370.5px,#157fac 381.5px,#1899a5 388.5px,#18ae90 394.5px,#12b76c 401.5px,#10b64f 407.5px,#14b51c 414.5px,#0fa80f 421.5px,#3c9d10 431.5px,#589612 440.5px,#448e10 459.5px,#0c810d 471.5px,#0c8311 474.5px,#068348 480.5px,#067965 483.5px,#065e79 486.5px,#06507c 487.5px,#061186 490.5px,#0a0982 491.5px,#140673 492.5px,#210041 494.5px,#2d0057 502.5px)"></i>
<i style="background:linear-gradient(#2d0057 344.5px,#2a0a88 351.5px,#140aae 358.5px,#0b1db8 366.5px,#147eac 378.5px,#1899a4 386.5px,#1aaf8f 393.5px,#13b76c 401.5px,#10b64c 408.5px,#12b419 415.5px,#109e0e 424.5px,#28980d 430.5px,#448f10 441.5px,#358a0e 457.5px,#26860c 462.5px,#0c810c 467.5px,#0c8310 470.5px,#06824e 477.5px,#066a74 481.5px,#06547b 483.5px,#061186 486.5px,#0a0982 487.5px,#150672 488.5px,#210040 490.5px,#2d0057 498.5px)"></i>
<i style="background:linear-gradient(#2d0057 332.5px,#280a8b 340.5px,#120ab0 348.5px,#0916b7 356.5px,#07658e 373.5px,#078e73 389.5px,#07963d 407.5px,#0a972a 411.5px,#0d9413 416.5px,#0d8d0d 426.5px,#328c0d 442.5px,#24860c 456.5px,#0c810c 463.5px,#0c8311 467.5px,#06824f 473.5px,#067a64 475.5px,#065f78 478.5px,#06507c 479.5px,#080e85 482.5px,#0d067e 483.5px,#1c0666 484.5px,#200147 485.5px,#210040 486.5px,#2d0057 494.5px)"></i>
<i style="background:linear-gradient(#2d0057 341.5px,#290362 343.5px,#210670 348.5px,#0c0681 357.5px,#061287 365.5px,#06567b 379.5px,#066875 387.5px,#067b63 396.5px,#06843d 410.5px,#0c8512 422.5px,#0c840c 431.5px,#22880c 443.5px,#0c8311 463.5px,#06824f 469.5px,#066f6f 472.5px,#06597a 474.5px,#061186 477.5px,#0b0781 478.5px,#20024a 480.5px,#210040 481.5px,#2d0057 489.5px)"></i>
<i style="background:linear-gradient(#2d0057 341.5px,#220045 361.5px,#1c0666 368.5px,#0d067f 373.5px,#061586 380.5px,#06597a 393.5px,#066875 400.5px,#067b61 408.5px,#068433 422.5px,#0c8413 429.5px,#13850c 444.5px,#0c8311 459.5px,#06834c 465.5px,#067965 467.5px,#06537b 470.5px,#061985 472.5px,#0a0982 473.5px,#17066d 474.5px,#200249 475.5px,#210040 476.5px,#2d0057 485.5px)"></i>
<i style="background:linear-gradient(#2d0057 351.5px,#210040 377.5px,#1d0663 382.5px,#0c067f 387.5px,#061286 393.5px,#06567b 405.5px,#066a74 411.5px,#067a64 416.5px,#06834c 423.5px,#0b8414 436.5px,#0c8311 455.5px,#0a831d 457.5px,#068348 461.5px,#067b63 463.5px,#066177 465.5px,#064e7c 466.5px,#070e85 468.5px,#130675 469.5px,#20024c 470.5px,#210040 471.5px,#2d0057 480.5px)"></i>
<i style="background:linear-gradient(#2d0057 368.5px,#210041 390.5px,#1d0661 394.5px,#0d067e 399.5px,#061486 405.5px,#06597a 414.5px,#067965 424.5px,#06844a 430.5px,#0c8512 443.5px,#0c8312 451.5px,#098324 454.5px,#068250 458.5px,#067c5f 459.5px,#066178 461.5px,#06467e 462.5px,#061e84 463.5px,#0b0681 464.5px,#1f0354 465.5px,#210040 466.5px,#2d0057 475.5px)"></i>
<i style="background:linear-gradient(#2d0057 383.5px,#230044 399.5px,#1b0667 404.5px,#0b0681 408.5px,#061386 412.5px,#06587b 421.5px,#066776 425.5px,#067b64 430.5px,#06844c 435.5px,#088427 444.5px,#098420 446.5px,#088326 450.5px,#06833e 453.5px,#067e5a 455.5px,#066078 457.5px,#063c7f 458.5px,#080e85 459.5px,#1e0560 460.5px,#210040 461.5px,#210041 464.5px,#2d0057 471.5px)"></i>
<i style="background:linear-gradient(#2d0057 397.5px,#24014b 405.5px,#0e0681 412.5px,#061688 417.5px,#065b7c 426.5px,#067a66 434.5px,#06844a 441.5px,#068437 446.5px,#068437 448.5px,#06833d 450.5px,#06824f 452.5px,#067c5e 453.5px,#06597a 455.5px,#062383 456.5px,#130674 457.5px,#210040 458.5px,#2d0057 466.5px)"></i>
<i style="background:linear-gradient(#2d0057 406.5px,#280a8c 411.5px,#1109b0 415.5px,#0917b7 419.5px,#076388 429.5px,#067c65 439.5px,#06844a 446.5px,#06834d 449.5px,#067c60 451.5px,#06597a 453.5px,#062184 454.5px,#19066b 455.5px,#210040 456.5px,#2d0057 462.5px)"></i>
<i style="background:linear-gradient(#2d0057 405.5px,#2a0a87 410.5px,#130aaf 415.5px,#0c1cb9 420.5px,#0f5bb0 427.5px,#0979a8 431.5px,#077485 436.5px,#067e5d 446.5px,#067c61 450.5px,#066875 453.5px,#065b7a 454.5px,#063e81 455.5px,#061492 456.5px,#1c089d 457.5px,#2d0057 458.5px)"></i>
<i style="background:linear-gradient(#2d0057 400.5px,#2b0a86 406.5px,#130bb1 413.5px,#0c1eb9 419.5px,#1150b3 425.5px,#147fac 432.5px,#098ca2 438.5px,#067d72 445.5px,#06766b 449.5px,#066c7a 453.5px,#076e88 454.5px,#0b7aa9 455.5px,#0e5faf 456.5px,#0d15b6 458.5px,#1c0ba1 459.5px,#2e0568 460.5px,#2d0057 461.5px)"></i>
<i style="background:linear-gradient(#2d0057 393.5px,#2b0a86 400.5px,#120bb1 408.5px,#0b1db9 416.5px,#125bb1 424.5px,#1781ad 431.5px,#1896a7 440.5px,#119c9c 444.5px,#089691 446.5px,#07807f 450.5px,#077d86 452.5px,#0988a3 454.5px,#1184a9 455.5px,#1378ad 456.5px,#1060b0 457.5px,#0b1fb8 459.5px,#100fb3 460.5px,#210a99 461.5px,#2d056a 462.5px,#2d0057 463.5px)"></i>
<i style="background:linear-gradient(#2d0057 385.5px,#290a8b 394.5px,#120cb2 402.5px,#0b23b7 412.5px,#1680ad 426.5px,#1c98a8 437.5px,#1da79b 445.5px,#119e99 451.5px,#1486aa 456.5px,#147cad 457.5px,#1266af 458.5px,#0d16b6 461.5px,#140aae 462.5px,#290a8c 463.5px,#2f035c 464.5px,#2d0057 465.5px)"></i>
<i style="background:linear-gradient(#2d0057 385.5px,#290987 392.5px,#1109b0 400.5px,#0b18b7 406.5px,#0c38b4 413.5px,#1580ac 423.5px,#1b98a7 432.5px,#20b192 445.5px,#1caa96 452.5px,#178ea8 457.5px,#1476ae 459.5px,#0b24b7 462.5px,#0f12b5 463.5px,#1a0aa5 464.5px,#2b0980 465.5px,#2d0057 466.5px)"></i>
<i style="background:linear-gradient(#2d0057 388.5px,#2a0052 392.5px,#20066c 398.5px,#0c0787 404.5px,#0715a3 410.5px,#082bb5 413.5px,#137dac 422.5px,#1687aa 424.5px,#21af95 437.5px,#21b881 444.5px,#20b683 450.5px,#1db18f 454.5px,#1998a5 458.5px,#1476ad 461.5px,#0a1db8 464.5px,#100fb3 465.5px,#1f0a9c 466.5px,#2c0772 467.5px,#2d0057 468.5px)"></i>
<i style="background:linear-gradient(#2d0057 392.5px,#27004b 399.5px,#0c0684 408.5px,#081091 412.5px,#07199b 414.5px,#0946b1 418.5px,#1076ac 422.5px,#158ba9 425.5px,#20af95 434.5px,#21bc77 441.5px,#21bc6f 444.5px,#1fbb73 451.5px,#1db77d 454.5px,#1baa95 458.5px,#1791a8 461.5px,#1375ad 463.5px,#0b18b8 466.5px,#120cb1 467.5px,#260a90 468.5px,#2e0462 469.5px,#2d0057 470.5px)"></i>
<i style="background:linear-gradient(#2d0057 398.5px,#250150 404.5px,#0c0890 412.5px,#0913a5 415.5px,#0827b5 417.5px,#1483ab 424.5px,#20ae96 432.5px,#21bc75 438.5px,#21bc5f 443.5px,#1fbb61 450.5px,#1bba6f 455.5px,#1aac93 460.5px,#1585ab 464.5px,#1370ae 465.5px,#0c2db6 467.5px,#0e14b5 468.5px,#190aa6 469.5px,#2b097f 470.5px,#2d0057 471.5px)"></i>
<i style="background:linear-gradient(#2d0057 402.5px,#29004f 406.5px,#25077b 409.5px,#1108af 413.5px,#0b1eb8 417.5px,#1684ac 424.5px,#1b98a7 427.5px,#20af95 431.5px,#21bc75 436.5px,#23bb4b 443.5px,#20bb4d 449.5px,#17b961 456.5px,#18ae90 462.5px,#1584ab 466.5px,#136dae 467.5px,#0c28b7 469.5px,#0f12b4 470.5px,#1c0aa1 471.5px,#2c0879 472.5px,#2d0057 473.5px)"></i>
<i style="background:linear-gradient(#2d0057 406.5px,#2a0984 409.5px,#120ab1 413.5px,#0c19b8 416.5px,#1782ac 423.5px,#1b98a8 426.5px,#21b193 430.5px,#21bc68 436.5px,#26bb38 442.5px,#1eb939 451.5px,#19b841 454.5px,#12b75d 459.5px,#17af8b 464.5px,#1585ab 468.5px,#126fae 469.5px,#0b2ab7 471.5px,#0e13b5 472.5px,#190aa6 473.5px,#2b0982 474.5px,#2d0057 475.5px)"></i>
<i style="background:linear-gradient(#2d0057 405.5px,#2b0a86 408.5px,#170aa9 411.5px,#0c1ab8 415.5px,#1576ae 421.5px,#1c9aa6 425.5px,#21af96 428.5px,#21bb78 432.5px,#23bc50 437.5px,#27bb2e 441.5px,#1bb826 453.5px,#11b63e 458.5px,#0db666 463.5px,#14ae88 466.5px,#179e9f 468.5px,#1585ab 470.5px,#136eae 471.5px,#0c2cb6 473.5px,#0d15b6 474.5px,#150aac 475.5px,#280a8c 476.5px,#2e0464 477.5px,#2d0057 478.5px)"></i>
<i style="background:linear-gradient(#2d0057 403.5px,#2b0981 406.5px,#120bb1 410.5px,#0c23b8 414.5px,#167dad 420.5px,#1ea59d 425.5px,#21bb7a 430.5px,#22bc52 435.5px,#28bb2e 439.5px,#1fb723 444.5px,#13b51c 457.5px,#08b04c 463.5px,#0bb46c 466.5px,#13ae87 468.5px,#189e9f 470.5px,#1686ab 472.5px,#1371ae 473.5px,#0c18b7 476.5px,#110db2 477.5px,#2c0776 479.5px,#2d0057 480.5px)"></i>
<i style="background:linear-gradient(#2d0057 401.5px,#2b0981 404.5px,#170ba8 407.5px,#120cb2 408.5px,#0b1ab8 411.5px,#1784ac 419.5px,#1c9ba6 422.5px,#21b194 425.5px,#21bc74 429.5px,#26bc3e 435.5px,#28bb2e 437.5px,#1bb41c 444.5px,#11b215 456.5px,#0fa917 460.5px,#08a63d 464.5px,#08b15d 467.5px,#14af87 470.5px,#1895a7 473.5px,#1479ad 475.5px,#0b1fb8 478.5px,#0f11b4 479.5px,#190aa6 480.5px,#2a0a88 481.5px,#2e0461 482.5px,#2d0057 483.5px)"></i>
<i style="background:linear-gradient(#2d0057 398.5px,#2f035d 399.5px,#2a0a88 402.5px,#150bad 405.5px,#0c17b7 408.5px,#167cad 416.5px,#1c99a7 420.5px,#21af95 423.5px,#21bc76 427.5px,#28bb2e 435.5px,#2cb822 441.5px,#1cb317 444.5px,#0faa11 457.5px,#0d9f1b 463.5px,#08b051 468.5px,#0fb66b 470.5px,#18b186 472.5px,#1999a6 475.5px,#1580ac 477.5px,#0c2bb7 480.5px,#0d15b6 481.5px,#130ab0 482.5px,#240a93 483.5px,#2d0670 484.5px,#2d0057 485.5px)"></i>
<i style="background:linear-gradient(#2d0057 395.5px,#2a0b8a 399.5px,#160baa 402.5px,#0b1bb9 406.5px,#167bae 413.5px,#1c9ba6 418.5px,#21af96 421.5px,#21bc76 425.5px,#21bc58 429.5px,#28bb2f 433.5px,#28b827 437.5px,#37ba24 440.5px,#24b515 444.5px,#1fb311 454.5px,#12a50f 458.5px,#0e9d11 461.5px,#0ea11a 465.5px,#09b449 469.5px,#18b778 473.5px,#1db091 475.5px,#1b9ca3 477.5px,#1684ac 479.5px,#0c17b7 483.5px,#110db2 484.5px,#1f0a9b 485.5px,#2d0057 487.5px)"></i>
<i style="background:linear-gradient(#2d0057 391.5px,#2f035d 392.5px,#2a0a86 395.5px,#130bb0 399.5px,#0b1bb9 403.5px,#167dad 410.5px,#1c9ba6 415.5px,#21b193 419.5px,#21bc75 423.5px,#21bc57 427.5px,#28bb2f 431.5px,#28b828 435.5px,#40bc25 439.5px,#35b817 442.5px,#2cb615 445.5px,#29b511 455.5px,#109e0e 461.5px,#0fac17 467.5px,#0eb42a 469.5px,#1cb67e 476.5px,#1ead96 478.5px,#1a97a7 480.5px,#157dad 482.5px,#0c28b7 485.5px,#0d15b6 486.5px,#120bb1 487.5px,#2c0878 489.5px,#2d0057 490.5px)"></i>
<i style="background:linear-gradient(#2d0057 387.5px,#2f035d 388.5px,#2b0a86 391.5px,#120bb1 395.5px,#0b1ab9 399.5px,#0c25b8 400.5px,#167ead 407.5px,#1c99a8 411.5px,#20ae97 415.5px,#21bb79 420.5px,#28bb2f 429.5px,#28b828 433.5px,#4cbf24 439.5px,#39b916 444.5px,#3ab914 454.5px,#14a50f 463.5px,#10b214 468.5px,#15b620 471.5px,#1dba76 478.5px,#1eab97 481.5px,#1a97a7 483.5px,#157fac 485.5px,#0c18b8 489.5px,#100fb3 490.5px,#1b0ba3 491.5px,#2a0a88 492.5px,#2e0567 493.5px,#2d0057 494.5px)"></i>
<i style="background:linear-gradient(#2d0057 383.5px,#2b0a86 387.5px,#120bb1 391.5px,#0b1eb8 395.5px,#1681ad 404.5px,#1c9aa6 408.5px,#21b193 412.5px,#21bc5f 421.5px,#28bc31 426.5px,#28b828 431.5px,#5ac125 439.5px,#47bc1a 444.5px,#4abc19 454.5px,#37b410 459.5px,#13b010 467.5px,#12b216 471.5px,#15b61f 474.5px,#18b958 478.5px,#1fba79 481.5px,#1fab97 484.5px,#1a98a7 486.5px,#1581ac 488.5px,#0b1db8 492.5px,#150bac 494.5px,#240b93 495.5px,#2d0057 497.5px)"></i>
<i style="background:linear-gradient(#2d0057 377.5px,#2f035b 378.5px,#2b0a84 382.5px,#120bb1 387.5px,#0b1eb8 391.5px,#1151b2 395.5px,#157bae 399.5px,#1b97a8 404.5px,#21b290 409.5px,#21bc77 413.5px,#21bc5d 418.5px,#28bb2e 424.5px,#2cb928 429.5px,#65c329 438.5px,#57bf1f 444.5px,#5bc022 450.5px,#57be1b 455.5px,#3cb911 462.5px,#13b010 471.5px,#10b112 473.5px,#17b725 477.5px,#1ab951 480.5px,#20ba7a 484.5px,#1fac97 487.5px,#1b99a6 489.5px,#1684ab 491.5px,#1371ae 492.5px,#0b24b7 495.5px,#0d15b6 496.5px,#120cb1 497.5px,#2b0a83 499.5px,#2e0565 500.5px,#2d0057 501.5px)"></i>
<i style="background:linear-gradient(#2d0057 371.5px,#290b8c 377.5px,#160bac 381.5px,#0c20b8 387.5px,#1681ad 395.5px,#1c99a7 400.5px,#21b193 405.5px,#21bb79 409.5px,#28bc31 420.5px,#2cb928 426.5px,#73c52b 438.5px,#67c224 444.5px,#6bc324 452.5px,#65c11d 456.5px,#4ebc17 463.5px,#14b010 474.5px,#1bb721 479.5px,#1cba52 483.5px,#20ba79 487.5px,#1fad96 490.5px,#1686ab 494.5px,#1476ae 495.5px,#0c18b8 499.5px,#170ba9 501.5px,#240b93 502.5px,#2f035d 504.5px,#2d0057 505.5px)"></i>
<i style="background:linear-gradient(#2d0057 364.5px,#2a0a88 369.5px,#160bac 374.5px,#0c1bb9 380.5px,#167ead 390.5px,#1c9ba6 395.5px,#21b194 400.5px,#21bc73 406.5px,#28bc2f 416.5px,#2cb928 423.5px,#76c62e 435.5px,#86c929 438.5px,#78c527 444.5px,#7dc625 452.5px,#76c41f 456.5px,#5ebf1b 464.5px,#38b810 471.5px,#1fb313 476.5px,#17b217 478.5px,#1eb825 482.5px,#20bb78 490.5px,#1faf95 493.5px,#1b9ca4 495.5px,#147bad 498.5px,#0b20b8 502.5px,#0d15b6 503.5px,#110db2 504.5px,#1b0ba2 505.5px,#280b8c 506.5px,#2d0057 508.5px)"></i>
<i style="background:linear-gradient(#2d0057 353.5px,#290b8a 359.5px,#150bac 364.5px,#0b1fb8 371.5px,#157bad 382.5px,#1b97a8 388.5px,#21b291 394.5px,#21bb78 399.5px,#21bc5c 405.5px,#28bc32 410.5px,#29b828 418.5px,#76c62e 432.5px,#9acc26 438.5px,#8dc926 444.5px,#90ca22 453.5px,#7cc51e 461.5px,#3eba14 474.5px,#1bb41b 481.5px,#20b92e 486.5px,#1eba54 489.5px,#20ba79 493.5px,#1fae96 496.5px,#1b9ca4 498.5px,#147dad 501.5px,#0b25b7 505.5px,#0d16b7 506.5px,#1a0ba5 508.5px,#270b8f 509.5px,#2d0057 511.5px)"></i>
<i style="background:linear-gradient(#2d0057 338.5px,#2e025b 339.5px,#2a0a88 344.5px,#120bb1 349.5px,#0b1cb9 356.5px,#117cab 371.5px,#1797a6 378.5px,#1eb091 385.5px,#21bc75 392.5px,#28bb2f 405.5px,#29b828 411.5px,#4dbf28 421.5px,#77c62e 429.5px,#accf24 438.5px,#a1cd24 444.5px,#a2cd20 453.5px,#8dc81b 462.5px,#4cbd1b 476.5px,#1db41d 484.5px,#21b928 488.5px,#1ebb58 492.5px,#20b97d 496.5px,#21b291 498.5px,#1b99a7 501.5px,#1786ab 503.5px,#1263b0 505.5px,#0b1db8 508.5px,#120bb1 510.5px,#290b8b 512.5px,#2d0057 514.5px)"></i>
<i style="background:linear-gradient(#2d0057 337.5px,#2a0a86 343.5px,#130ab0 348.5px,#0b1bb9 354.5px,#1481ab 371.5px,#1a99a5 377.5px,#1fb093 383.5px,#20bb5b 396.5px,#27bb2f 403.5px,#28b828 409.5px,#5bc129 422.5px,#76c62d 427.5px,#aed025 435.5px,#b9d420 438.5px,#b3d11d 453.5px,#9ecb18 462.5px,#5ec01f 477.5px,#23b61e 486.5px,#23ba2a 491.5px,#20bb76 498.5px,#20b093 501.5px,#1a96a8 504.5px,#1682ac 506.5px,#0b19b8 511.5px,#120bb1 513.5px,#290b8b 515.5px,#2d0057 517.5px)"></i>
<i style="background:linear-gradient(#2d0057 341.5px,#2a0a87 346.5px,#120bb1 351.5px,#0b1ab9 357.5px,#104db3 366.5px,#1683ac 373.5px,#1b99a7 378.5px,#1fb092 384.5px,#1dba5c 396.5px,#25ba2c 403.5px,#27b726 409.5px,#5ac127 421.5px,#78c62c 426.5px,#b2d124 434.5px,#c5d91c 438.5px,#bfd618 453.5px,#aacd13 463.5px,#7ac51f 476.5px,#20b51b 489.5px,#20b928 494.5px,#1db977 501.5px,#1cac95 504.5px,#199aa4 506.5px,#147cad 509.5px,#0b19b8 514.5px,#120ab1 516.5px,#2a0a88 518.5px,#2d0057 520.5px)"></i>
<i style="background:linear-gradient(#2d0057 338.5px,#27098a 345.5px,#1209ae 349.5px,#091ab8 355.5px,#0d5fae 367.5px,#117eab 371.5px,#1697a5 376.5px,#1aaf8f 382.5px,#19b95b 394.5px,#1eb929 401.5px,#23b724 407.5px,#47bd20 415.5px,#75c52b 424.5px,#b0d024 432.5px,#d0de16 439.5px,#c9da11 454.5px,#a6c70f 466.5px,#93c815 475.5px,#83c516 478.5px,#38ac0f 487.5px,#0fa510 493.5px,#0ea419 497.5px,#079c58 503.5px,#078190 509.5px,#077397 511.5px,#07469c 514.5px,#081297 517.5px,#100688 519.5px,#1d0780 520.5px,#2d0057 522.5px)"></i>
<i style="background:linear-gradient(#2d0057 337.5px,#240779 344.5px,#0d0790 349.5px,#071394 354.5px,#074e97 365.5px,#087ea6 371.5px,#0b92a0 375.5px,#0baa87 381.5px,#0db54e 394.5px,#11b51f 400.5px,#1eb41c 407.5px,#37b91a 411.5px,#54be1e 418.5px,#7dc628 424.5px,#accf23 430.5px,#d9e111 439.5px,#d0dd08 454.5px,#a1bd0c 466.5px,#8eb710 475.5px,#7fb111 478.5px,#439610 485.5px,#0c850c 493.5px,#0c8512 497.5px,#06844b 503.5px,#067b63 506.5px,#066875 509.5px,#06507c 512.5px,#061486 516.5px,#0b0781 518.5px,#220670 520.5px,#2b0053 522.5px,#2d0057 523.5px)"></i>
<i style="background:linear-gradient(#2d0057 340.5px,#290051 343.5px,#0d0680 352.5px,#061187 358.5px,#063584 366.5px,#065f84 372.5px,#067081 376.5px,#079857 390.5px,#09962b 399.5px,#0ea115 403.5px,#10ad11 407.5px,#2eab0f 413.5px,#3cb310 416.5px,#6fc323 423.5px,#afd01f 430.5px,#d8e111 437.5px,#d8e002 445.5px,#d3dc01 453.5px,#a0b80a 464.5px,#77a20f 477.5px,#0c810c 492.5px,#0b8416 496.5px,#068348 501.5px,#067b63 504.5px,#06587b 509.5px,#061985 513.5px,#0a0882 515.5px,#26004a 519.5px,#2d0057 522.5px)"></i>
<i style="background:linear-gradient(#2d0057 342.5px,#260150 348.5px,#0d067e 357.5px,#061186 364.5px,#063b81 371.5px,#06597c 375.5px,#067d67 386.5px,#068a4f 393.5px,#068939 399.5px,#0d9513 405.5px,#0e960e 409.5px,#23990e 414.5px,#39ac10 418.5px,#52bd15 421.5px,#6dc21d 424.5px,#acce1b 430.5px,#d9e10c 437.5px,#dbdb04 440.5px,#c7cd01 444.5px,#c2ca00 453.5px,#6e9b0f 476.5px,#5f9510 479.5px,#0c810c 490.5px,#0b8313 494.5px,#068346 499.5px,#067b63 502.5px,#066c72 504.5px,#06527c 507.5px,#062084 510.5px,#061186 511.5px,#0e067c 513.5px,#24014a 516.5px,#2d0057 521.5px)"></i>
<i style="background:linear-gradient(#2d0057 347.5px,#26004b 353.5px,#0c0681 364.5px,#061786 370.5px,#06587b 379.5px,#067c66 390.5px,#068939 402.5px,#0d8f13 407.5px,#0d8c0d 412.5px,#19940d 415.5px,#3aae10 420.5px,#67c018 425.5px,#adce17 431.5px,#d6e007 437.5px,#d7d902 439.5px,#c3c801 441.5px,#b5be01 444.5px,#b5be01 452.5px,#8ba80d 466.5px,#589211 478.5px,#0d810c 488.5px,#0b8313 492.5px,#068346 497.5px,#067b63 500.5px,#065a7a 504.5px,#061686 508.5px,#0b0681 510.5px,#22024e 513.5px,#260049 514.5px,#2d0057 518.5px)"></i>
<i style="background:linear-gradient(#2d0057 352.5px,#26004a 359.5px,#1c0665 365.5px,#0d067e 369.5px,#061286 374.5px,#06547c 383.5px,#066e72 390.5px,#06864e 401.5px,#0d8d12 410.5px,#0d910e 415.5px,#44b112 423.5px,#6bbd17 427.5px,#acce14 432.5px,#cfdc04 437.5px,#d0da01 438.5px,#b7bf01 441.5px,#a8b403 444.5px,#a8b503 452.5px,#89a60d 465.5px,#448c10 479.5px,#0c810d 487.5px,#0b8315 490.5px,#068348 495.5px,#067965 498.5px,#066975 500.5px,#06587b 502.5px,#061f84 505.5px,#0a0982 507.5px,#250047 511.5px,#2d0057 515.5px)"></i>
<i style="background:linear-gradient(#2d0057 358.5px,#260049 366.5px,#0e067d 374.5px,#070f85 378.5px,#06587b 388.5px,#066876 393.5px,#068060 401.5px,#068a4f 404.5px,#0d9213 413.5px,#0f9f0e 418.5px,#63b917 428.5px,#a8cc12 433.5px,#c4d606 437.5px,#bfcb03 439.5px,#adba03 441.5px,#9fb006 444.5px,#9fb006 452.5px,#84a40d 464.5px,#4f9112 473.5px,#34890e 479.5px,#0c810d 485.5px,#0c8311 487.5px,#06834d 493.5px,#067c60 495.5px,#065c79 499.5px,#061386 503.5px,#0f067b 505.5px,#1f0352 507.5px,#240046 508.5px,#2d0057 513.5px)"></i>
<i style="background:linear-gradient(#2d0057 365.5px,#24014d 372.5px,#0e067d 379.5px,#071086 383.5px,#06547d 392.5px,#066d79 399.5px,#068c5d 405.5px,#0ea418 415.5px,#10ab10 420.5px,#48b613 427.5px,#6ac018 430.5px,#a3cb13 434.5px,#bad30a 437.5px,#b8ca06 439.5px,#9eb208 443.5px,#99af09 452.5px,#79a00e 464.5px,#0d810c 482.5px,#0c8311 485.5px,#06834b 490.5px,#067c5f 492.5px,#065d79 496.5px,#061586 500.5px,#0f067c 502.5px,#1f0350 504.5px,#240045 505.5px,#2d0057 510.5px)"></i>
<i style="background:linear-gradient(#2d0057 370.5px,#25014d 377.5px,#0c0684 384.5px,#07108b 387.5px,#064d89 395.5px,#078795 402.5px,#089c82 405.5px,#08b257 411.5px,#0bb54a 413.5px,#16b622 417.5px,#16b216 422.5px,#3bb914 427.5px,#75c31d 432.5px,#a9cd14 436.5px,#b6d20c 438.5px,#b2c708 440.5px,#9db60b 443.5px,#98b40c 451.5px,#87a40d 456.5px,#719d0f 463.5px,#0c810c 480.5px,#0b8313 483.5px,#068346 487.5px,#067866 490.5px,#064e7c 494.5px,#061286 497.5px,#100679 499.5px,#20024d 501.5px,#240045 502.5px,#2d0057 507.5px)"></i>
<i style="background:linear-gradient(#2d0057 380.5px,#290881 383.5px,#1109b0 387.5px,#0b1cb9 391.5px,#1264b0 398.5px,#157bad 400.5px,#1998a6 404.5px,#1bb18c 408.5px,#1bba74 411.5px,#1dba55 415.5px,#23ba2a 419.5px,#20b51f 424.5px,#46bd1e 429.5px,#74c424 433.5px,#a6cd18 437.5px,#b2d00f 439.5px,#b2ce0b 440.5px,#9ebc0d 443.5px,#99bc0f 449.5px,#94b40e 452.5px,#599411 465.5px,#0c810c 477.5px,#0c8311 480.5px,#06834a 485.5px,#067b62 487.5px,#065e79 490.5px,#062483 493.5px,#071086 494.5px,#0a0882 495.5px,#140673 496.5px,#210144 498.5px,#2d0057 504.5px)"></i>
<i style="background:linear-gradient(#2d0057 381.5px,#2b0a84 384.5px,#120bb1 388.5px,#0e1fb9 392.5px,#1882ae 401.5px,#1e9ca6 405.5px,#21af96 408.5px,#21bb76 412.5px,#27bb2e 420.5px,#25b725 425.5px,#4cbe24 430.5px,#78c528 434.5px,#9bcb1d 437.5px,#aecf10 440.5px,#9abf10 444.5px,#95bf10 449.5px,#8db40f 452.5px,#71a010 457.5px,#3f8c0f 467.5px,#0d810c 474.5px,#0b8317 478.5px,#067d5d 484.5px,#066c72 486.5px,#06547b 488.5px,#062583 490.5px,#071085 491.5px,#0b0781 492.5px,#220042 495.5px,#2d0057 501.5px)"></i>
<i style="background:linear-gradient(#2d0057 378.5px,#2f045f 379.5px,#2a0a88 382.5px,#120bb1 386.5px,#0d21b9 390.5px,#1882ad 399.5px,#1d98a8 403.5px,#21b290 408.5px,#21bc72 412.5px,#28bb2f 420.5px,#27b827 425.5px,#4abe26 430.5px,#71c52a 434.5px,#92ca20 437.5px,#a5cc13 440.5px,#a6c910 441.5px,#93be10 444.5px,#8dbc11 448.5px,#82ae10 452.5px,#4e9212 461.5px,#0c810c 472.5px,#0b8313 475.5px,#06824f 480.5px,#067866 482.5px,#06597a 485.5px,#061186 488.5px,#0b0781 489.5px,#1f0350 491.5px,#230043 492.5px,#2d0057 497.5px)"></i>
<i style="background:linear-gradient(#2d0057 372.5px,#2f035a 373.5px,#2a0a87 377.5px,#140bae 381.5px,#0b23b7 386.5px,#1580ad 394.5px,#1b97a7 399.5px,#21b193 405.5px,#21bc5f 413.5px,#28bc31 418.5px,#2ab827 425.5px,#74c528 435.5px,#98c914 440.5px,#8cbb11 443.5px,#6fa210 453.5px,#0c810d 470.5px,#0a8319 473.5px,#06834c 477.5px,#067965 479.5px,#06597a 482.5px,#061186 485.5px,#0b0781 486.5px,#20024c 488.5px,#220043 489.5px,#2d0057 494.5px)"></i>
<i style="background:linear-gradient(#2d0057 365.5px,#280a8c 371.5px,#120bb1 376.5px,#0a1eb8 381.5px,#1280ab 390.5px,#1db092 401.5px,#20bb68 410.5px,#28bb2e 417.5px,#26b726 424.5px,#69c223 435.5px,#83c517 439.5px,#87bf13 441.5px,#5e9b12 453.5px,#0c810d 468.5px,#0a8319 471.5px,#06834d 475.5px,#067766 477.5px,#06537b 480.5px,#062084 482.5px,#080d84 483.5px,#0f067a 484.5px,#1e055f 485.5px,#220041 486.5px,#2d0057 491.5px)"></i>
<i style="background:linear-gradient(#2d0057 365.5px,#25088d 372.5px,#0e089e 377.5px,#061590 382.5px,#065c84 390.5px,#07926e 404.5px,#09b460 410.5px,#11b74f 413.5px,#1db824 418.5px,#1eb41a 426.5px,#68c018 438.5px,#74b614 442.5px,#5ca113 447.5px,#449110 456.5px,#0c810d 466.5px,#0b8317 469.5px,#06834c 473.5px,#067767 475.5px,#066078 477.5px,#064e7c 478.5px,#061885 480.5px,#0a0a82 481.5px,#150671 482.5px,#1f0352 483.5px,#230045 484.5px,#2d0057 488.5px)"></i>
<i style="background:linear-gradient(#2d0057 369.5px,#25004b 376.5px,#0b0882 385.5px,#061186 388.5px,#06547b 396.5px,#066975 403.5px,#067c62 409.5px,#0d9614 422.5px,#0e9e0f 428.5px,#60ba16 440.5px,#65b416 442.5px,#4e9c12 447.5px,#3d910f 455.5px,#10820c 463.5px,#0c820e 465.5px,#0b8314 467.5px,#06834b 471.5px,#067866 473.5px,#065f78 475.5px,#064c7d 476.5px,#061186 478.5px,#0b0781 479.5px,#1b0667 480.5px,#210144 481.5px,#2d0057 486.5px)"></i>
<i style="background:linear-gradient(#2d0057 374.5px,#230043 385.5px,#0f067b 391.5px,#061586 396.5px,#06537b 405.5px,#066676 409.5px,#067b63 413.5px,#068440 418.5px,#0c8a17 426.5px,#0e920d 432.5px,#51b814 440.5px,#59b415 442.5px,#439b11 447.5px,#33910e 455.5px,#0c810c 462.5px,#0c8311 465.5px,#068056 470.5px,#066078 473.5px,#064b7d 474.5px,#071085 476.5px,#0e067d 477.5px,#1e055d 478.5px,#220042 479.5px,#2d0057 483.5px)"></i>
<i style="background:linear-gradient(#2d0057 381.5px,#220042 393.5px,#0e067d 400.5px,#061586 405.5px,#06547b 411.5px,#066975 414.5px,#067b62 417.5px,#068532 426.5px,#0c8915 430.5px,#0d930e 434.5px,#37b110 439.5px,#49b513 441.5px,#4cac13 443.5px,#3c9c10 446.5px,#2d950d 454.5px,#0e820c 460.5px,#0c8311 463.5px,#068153 468.5px,#066177 471.5px,#064d7c 472.5px,#070f85 474.5px,#100678 475.5px,#1f0455 476.5px,#230044 477.5px,#2d0057 481.5px)"></i>
<i style="background:linear-gradient(#2d0057 389.5px,#210043 402.5px,#1d0663 405.5px,#0c0681 408.5px,#061586 411.5px,#065a7a 416.5px,#067a64 421.5px,#068639 429.5px,#0c8e15 433.5px,#0e980f 436.5px,#38af10 441.5px,#41a811 443.5px,#339b0e 446.5px,#2c9f0e 451.5px,#27960d 454.5px,#0c830c 459.5px,#0c8411 462.5px,#068054 467.5px,#066178 470.5px,#064c7d 471.5px,#070e85 473.5px,#120676 474.5px,#1f0351 475.5px,#250048 476.5px,#2d0057 479.5px)"></i>
<i style="background:linear-gradient(#2d0057 397.5px,#230043 408.5px,#20024a 409.5px,#1b0667 411.5px,#0c0680 413.5px,#061186 415.5px,#06507c 419.5px,#066875 422.5px,#067c63 426.5px,#068942 431.5px,#0d9713 436.5px,#0e9c0f 438.5px,#27a60f 441.5px,#33a20e 443.5px,#2a990d 446.5px,#269e0e 451.5px,#21930d 454.5px,#0e840c 458.5px,#0c8410 461.5px,#0b8416 462.5px,#06844b 466.5px,#067866 468.5px,#065e78 470.5px,#080e84 473.5px,#130675 474.5px,#210355 475.5px,#29004f 476.5px,#2d0057 477.5px)"></i>
<i style="background:linear-gradient(#2d0057 406.5px,#210149 413.5px,#110678 416.5px,#0a0982 417.5px,#061b85 419.5px,#06577c 423.5px,#067e68 429.5px,#079441 434.5px,#0d9b19 437.5px,#0e9e0f 440.5px,#1ea00e 442.5px,#25980d 444.5px,#1e940d 452.5px,#0d830c 457.5px,#0c8410 460.5px,#0b8413 461.5px,#068251 466.5px,#066975 469.5px,#065c79 470.5px,#080d84 473.5px,#130674 474.5px,#230358 475.5px,#2a0052 476.5px,#2d0057 477.5px)"></i>
<i style="background:linear-gradient(#2d0057 411.5px,#260049 415.5px,#1e0665 417.5px,#0c0787 419.5px,#090d8a 420.5px,#06158c 421.5px,#065f84 426.5px,#077b83 429.5px,#079078 431.5px,#07a15a 434.5px,#07a244 436.5px,#0fa416 439.5px,#0e9d0e 442.5px,#1a950d 444.5px,#0c8410 459.5px,#0b8414 460.5px,#067f57 466.5px,#06706e 468.5px,#06587a 470.5px,#062084 472.5px,#090b83 473.5px,#230357 475.5px,#2d0057 477.5px)"></i>
<i style="background:linear-gradient(#2d0057 416.5px,#2d0362 417.5px,#2b087d 418.5px,#1509aa 420.5px,#0b16b7 422.5px,#0d7ea9 428.5px,#0f9b9b 431.5px,#0eac87 433.5px,#0bb560 436.5px,#0eb01f 440.5px,#0fac16 441.5px,#0d8e0d 445.5px,#0c8411 458.5px,#067d5d 466.5px,#066c72 468.5px,#06517c 470.5px,#061a85 472.5px,#0a0a82 473.5px,#250254 475.5px,#2d0057 477.5px)"></i>
<i style="background:linear-gradient(#2d0057 417.5px,#290b8a 419.5px,#120bb1 421.5px,#0d1ab8 423.5px,#1784ac 429.5px,#1a97a7 431.5px,#1ca998 433.5px,#18b96a 437.5px,#14b750 439.5px,#10b418 442.5px,#0d900f 445.5px,#0b8414 457.5px,#068446 463.5px,#067a64 466.5px,#065c79 469.5px,#06497d 470.5px,#061286 472.5px,#0b0781 473.5px,#27004c 475.5px,#2d0057 477.5px)"></i>
<i style="background:linear-gradient(#2d0057 416.5px,#2b0982 418.5px,#170ba9 420.5px,#0d1fb9 423.5px,#1885ad 429.5px,#1e9fa4 432.5px,#20af95 434.5px,#1fbb75 437.5px,#1ab951 440.5px,#10b418 443.5px,#0d9412 445.5px,#0b8515 455.5px,#06834e 463.5px,#067c60 465.5px,#06577b 469.5px,#070f85 472.5px,#0d067e 473.5px,#28004d 475.5px,#2d0057 476.5px)"></i>
<i style="background:linear-gradient(#2d0057 413.5px,#2e0462 414.5px,#290b8b 416.5px,#150bad 418.5px,#0d20b9 421.5px,#177eae 427.5px,#1d9da5 431.5px,#21b292 434.5px,#20bb76 437.5px,#1ebb58 440.5px,#15b627 443.5px,#0fab17 444.5px,#0e9c15 445.5px,#0c8c15 450.5px,#0a861e 454.5px,#06834e 462.5px,#067866 465.5px,#065d79 468.5px,#090c84 472.5px,#29004f 475.5px,#2d0057 476.5px)"></i>
<i style="background:linear-gradient(#2d0057 408.5px,#2b0a85 411.5px,#140baf 414.5px,#0b1ab9 417.5px,#104cb3 420.5px,#167fad 424.5px,#1d9da4 429.5px,#21af96 432.5px,#21bc70 437.5px,#1fbb58 440.5px,#1db940 442.5px,#10b421 444.5px,#0d9f1d 446.5px,#088829 454.5px,#06844d 461.5px,#067b64 464.5px,#06597a 468.5px,#061486 471.5px,#0a0982 472.5px,#22035b 474.5px,#2a0051 475.5px,#2d0057 476.5px)"></i>
<i style="background:linear-gradient(#2d0057 398.5px,#2a0b8a 404.5px,#150bad 408.5px,#0b1bb9 412.5px,#1161b0 417.5px,#1582ac 420.5px,#1da2a0 427.5px,#21b094 430.5px,#21bc70 436.5px,#1eba41 442.5px,#15b62b 444.5px,#0dae25 446.5px,#088e31 454.5px,#068746 459.5px,#067767 464.5px,#06537c 468.5px,#071085 471.5px,#0b0681 472.5px,#250255 474.5px,#2d0057 476.5px)"></i>
<i style="background:linear-gradient(#2d0057 389.5px,#2a0a88 394.5px,#130bb1 399.5px,#0b1cb8 406.5px,#1481ab 415.5px,#20af95 427.5px,#21bb73 434.5px,#1fba3f 442.5px,#19b830 444.5px,#13b62b 446.5px,#0db42c 449.5px,#069041 457.5px,#067d63 463.5px,#065d79 467.5px,#064f7c 468.5px,#080e85 471.5px,#0e067d 472.5px,#26014f 474.5px,#2d0057 476.5px)"></i>
<i style="background:linear-gradient(#2d0057 381.5px,#290986 387.5px,#1209af 393.5px,#0a19b8 398.5px,#0a4bb0 406.5px,#107dab 411.5px,#1694a6 415.5px,#1cb18c 426.5px,#1fbb6a 434.5px,#1db930 444.5px,#17b730 449.5px,#0ab03a 454.5px,#068e50 460.5px,#066777 466.5px,#064f7d 468.5px,#062084 470.5px,#080d84 471.5px,#0f067b 472.5px,#27004c 474.5px,#2d0057 476.5px)"></i>
<i style="background:linear-gradient(#2d0057 388.5px,#290154 390.5px,#0b0782 399.5px,#061587 405.5px,#063285 409.5px,#065b85 413.5px,#078282 421.5px,#09a78a 426.5px,#18b972 432.5px,#20ba3e 441.5px,#20b92d 444.5px,#1fb92b 447.5px,#19b831 452.5px,#09b240 456.5px,#079550 460.5px,#067d6a 464.5px,#06607a 467.5px,#06537c 468.5px,#062384 470.5px,#080e85 471.5px,#0f067c 472.5px,#28004d 474.5px,#2d0057 475.5px)"></i>
<i style="background:linear-gradient(#2d0057 389.5px,#240047 398.5px,#0e067c 406.5px,#061187 410.5px,#064d80 416.5px,#06617f 419.5px,#077b89 423.5px,#0aa190 427.5px,#19b973 433.5px,#22ba3c 441.5px,#23ba2a 444.5px,#20b927 451.5px,#0ab23c 457.5px,#068367 464.5px,#065a7b 468.5px,#071085 471.5px,#0d067f 472.5px,#28004d 474.5px,#2d0057 475.5px)"></i>
<i style="background:linear-gradient(#2d0057 395.5px,#26004a 403.5px,#26014e 405.5px,#250779 408.5px,#1108a6 411.5px,#0816b2 414.5px,#1181aa 422.5px,#1da59c 428.5px,#1fbb72 434.5px,#25ba2b 443.5px,#1bb722 454.5px,#0cb32f 457.5px,#067e69 465.5px,#065d7a 468.5px,#064a7d 469.5px,#061186 471.5px,#0b0681 472.5px,#28004d 474.5px,#2d0057 475.5px)"></i>
<i style="background:linear-gradient(#2d0057 404.5px,#2a0a89 408.5px,#140baf 411.5px,#0f1eba 414.5px,#1982ae 421.5px,#21a79e 427.5px,#21ba7c 432.5px,#21bb65 435.5px,#26bb2f 441.5px,#1fb622 451.5px,#12b419 456.5px,#07993d 460.5px,#06776b 466.5px,#06507c 469.5px,#061586 471.5px,#0b0781 472.5px,#28004d 474.5px,#2d0057 475.5px)"></i>
<i style="background:linear-gradient(#2d0057 397.5px,#290b8b 401.5px,#140bae 405.5px,#0c19b8 409.5px,#0d23b8 410.5px,#1782ad 417.5px,#1d9ca6 421.5px,#21b193 425.5px,#21bc75 430.5px,#22bc54 435.5px,#27bb2e 440.5px,#1db51e 451.5px,#10ae15 456.5px,#0d9f1d 458.5px,#067967 466.5px,#06547b 469.5px,#061686 471.5px,#0b0781 472.5px,#28004d 474.5px,#2d0057 475.5px)"></i>
<i style="background:linear-gradient(#2d0057 388.5px,#290b8c 393.5px,#150bad 396.5px,#0b1db8 401.5px,#137cac 411.5px,#1995a7 415.5px,#20b193 420.5px,#21bc77 425.5px,#25bc42 434.5px,#28bb2f 437.5px,#20b51c 450.5px,#0fab11 455.5px,#0d9614 458.5px,#06854e 464.5px,#067a64 466.5px,#06547b 469.5px,#061586 471.5px,#0b0781 472.5px,#28004e 474.5px,#2d0057 475.5px)"></i>
<i style="background:linear-gradient(#2d0057 379.5px,#290887 384.5px,#130aaf 390.5px,#0a20b8 395.5px,#0a4cb0 399.5px,#0f7aab 405.5px,#1697a5 411.5px,#1cad94 415.5px,#21bb75 421.5px,#25bb3e 431.5px,#28bb2e 434.5px,#25b519 450.5px,#19b110 453.5px,#0e9e0f 455.5px,#0c8c15 459.5px,#06844b 464.5px,#067b64 466.5px,#066377 468.5px,#06527c 469.5px,#061286 471.5px,#0c0680 472.5px,#1f0562 473.5px,#29004f 474.5px,#2d0057 475.5px)"></i>
<i style="background:linear-gradient(#2d0057 384.5px,#2a0052 387.5px,#210669 391.5px,#0d0682 395.5px,#061289 399.5px,#06468a 406.5px,#0a8aa3 412.5px,#13ac8d 417.5px,#14b674 421.5px,#1cba55 427.5px,#25bb31 432.5px,#2bb824 442.5px,#26b513 451.5px,#0d8f0e 456.5px,#0c8912 459.5px,#068057 465.5px,#066177 468.5px,#064e7c 469.5px,#071086 471.5px,#0e067c 472.5px,#200560 473.5px,#290050 474.5px,#2d0057 475.5px)"></i>
<i style="background:linear-gradient(#2d0057 386.5px,#250048 394.5px,#0d067f 401.5px,#071088 405.5px,#062b8d 408.5px,#0884a4 414.5px,#09a58b 419.5px,#0db371 423.5px,#1bba54 428.5px,#26bb30 432.5px,#27b827 438.5px,#35ba23 442.5px,#2bb614 450.5px,#0d8a0d 456.5px,#0c8711 459.5px,#06844c 464.5px,#067866 466.5px,#065f78 468.5px,#064a7d 469.5px,#070f85 471.5px,#110678 472.5px,#21045d 473.5px,#2a0051 474.5px,#2d0057 475.5px)"></i>
<i style="background:linear-gradient(#2d0057 394.5px,#2b0053 398.5px,#250889 402.5px,#1209ad 405.5px,#0d19b8 408.5px,#0e27b8 409.5px,#1781ad 414.5px,#1a97a7 417.5px,#1bae91 421.5px,#1fbb5a 428.5px,#27bb2e 432.5px,#27b828 436.5px,#3fbc25 441.5px,#2eb611 450.5px,#148c0d 455.5px,#0d880c 456.5px,#0c8611 459.5px,#067e5a 465.5px,#066a74 467.5px,#065d79 468.5px,#080d84 471.5px,#130675 472.5px,#22035a 473.5px,#2a0051 474.5px,#2d0057 475.5px)"></i>
<i style="background:linear-gradient(#2d0057 397.5px,#290b8c 401.5px,#150bad 404.5px,#0e1ab8 407.5px,#0f27b8 408.5px,#1882ad 413.5px,#1d9aa8 416.5px,#21b094 420.5px,#21bc5d 427.5px,#28bb2e 431.5px,#28b828 434.5px,#48be25 440.5px,#36b814 449.5px,#1b900d 454.5px,#0d880c 456.5px,#0c8611 459.5px,#067e5b 465.5px,#066975 467.5px,#065b79 468.5px,#090c84 471.5px,#230357 473.5px,#2a0051 474.5px,#2d0057 475.5px)"></i>
<i style="background:linear-gradient(#2d0057 393.5px,#2b0982 396.5px,#130baf 400.5px,#0c1bb9 404.5px,#167cae 410.5px,#1c98a8 413.5px,#21ad98 416.5px,#21bc60 425.5px,#28bb2f 429.5px,#28b828 432.5px,#41bd28 435.5px,#53c027 439.5px,#49bd1c 442.5px,#3bb913 449.5px,#1c910d 454.5px,#0c880e 457.5px,#0b8617 460.5px,#06834d 464.5px,#066875 467.5px,#065b7a 468.5px,#062184 470.5px,#090c83 471.5px,#230357 473.5px,#2d0057 475.5px)"></i>
<i style="background:linear-gradient(#2d0057 387.5px,#2f035e 388.5px,#2a0a88 391.5px,#120cb1 395.5px,#0b1db8 399.5px,#157cad 407.5px,#1b97a8 410.5px,#20af95 413.5px,#21bc76 418.5px,#21bc5d 423.5px,#28bc30 427.5px,#28b829 430.5px,#51c029 435.5px,#5ec229 438.5px,#4dbd19 442.5px,#41ba13 449.5px,#26990d 453.5px,#0c880d 457.5px,#0b8614 460.5px,#06844c 464.5px,#066975 467.5px,#065c79 468.5px,#062383 470.5px,#080c84 471.5px,#230358 473.5px,#2a0052 474.5px,#2d0057 475.5px)"></i>
<i style="background:linear-gradient(#2d0057 382.5px,#290b8b 386.5px,#160bab 389.5px,#0b22b7 394.5px,#0f51b2 398.5px,#157dad 403.5px,#1a95a8 407.5px,#21b291 411.5px,#21bc77 414.5px,#21bc59 420.5px,#28bc2f 425.5px,#2db928 429.5px,#5bc22a 434.5px,#67c32b 437.5px,#65c224 439.5px,#56be1a 441.5px,#47bb14 449.5px,#22930d 454.5px,#0c860c 457.5px,#0c850e 458.5px,#0c8512 460.5px,#067f59 465.5px,#066a73 467.5px,#065d79 468.5px,#080d84 471.5px,#23035e 473.5px,#2b0053 474.5px,#2d0057 475.5px)"></i>
<i style="background:linear-gradient(#2d0057 377.5px,#280a8d 382.5px,#150aac 385.5px,#0b19b8 389.5px,#1062af 395.5px,#137fac 398.5px,#1997a7 404.5px,#20b28f 409.5px,#21bc75 412.5px,#28bc32 422.5px,#2bb928 427.5px,#62c32b 433.5px,#70c52c 436.5px,#6fc427 438.5px,#60c01d 440.5px,#57bf1d 446.5px,#4dbc15 449.5px,#2b960d 453.5px,#0c830c 457.5px,#0b8414 460.5px,#06824e 464.5px,#066676 467.5px,#06597a 468.5px,#061c85 470.5px,#0a0982 471.5px,#27004e 473.5px,#2d0057 475.5px)"></i>
<i style="background:linear-gradient(#2d0057 376.5px,#290883 381.5px,#1208ad 385.5px,#091bb8 389.5px,#0d5eae 394.5px,#107eaa 397.5px,#1797a6 403.5px,#1fb191 408.5px,#21bb78 411.5px,#28bb2e 421.5px,#2db928 426.5px,#64c32b 432.5px,#78c62b 436.5px,#75c424 438.5px,#67c11f 440.5px,#5fc021 446.5px,#53bd15 449.5px,#2b910d 453.5px,#0c820d 457.5px,#0c8311 459.5px,#06834b 463.5px,#066975 466.5px,#065b79 467.5px,#062284 469.5px,#090b83 470.5px,#17066e 471.5px,#24014f 472.5px,#2d0057 474.5px)"></i>
<i style="background:linear-gradient(#2d0057 379.5px,#280152 382.5px,#0e067f 388.5px,#071087 391.5px,#065f83 400.5px,#076e8b 402.5px,#0b92a1 405.5px,#1ab08e 409.5px,#1bba73 412.5px,#27bb2d 421.5px,#27b827 425.5px,#67c32b 432.5px,#80c728 436.5px,#82c725 437.5px,#74c420 439.5px,#6ac324 445.5px,#61c01b 448.5px,#2b8d0c 453.5px,#0e820c 456.5px,#0c820d 457.5px,#0b8318 459.5px,#067f58 463.5px,#066a74 465.5px,#065c79 466.5px,#090c83 469.5px,#160670 470.5px,#23024f 471.5px,#2d0057 473.5px)"></i>
<i style="background:linear-gradient(#2d0057 381.5px,#26004a 386.5px,#0b0781 392.5px,#061286 395.5px,#064f7e 402.5px,#066983 405.5px,#07838e 407.5px,#089f8d 409.5px,#09a987 410.5px,#0db664 414.5px,#23ba2a 421.5px,#25b726 425.5px,#71c52c 433.5px,#87c826 436.5px,#80c61f 438.5px,#75c424 444.5px,#6dc21d 447.5px,#66bf18 448.5px,#4ca112 450.5px,#358e0e 452.5px,#0c810c 456.5px,#0c8312 458.5px,#068347 461.5px,#067766 463.5px,#065c79 465.5px,#062184 467.5px,#090b83 468.5px,#17066e 469.5px,#23014c 470.5px,#2d0057 473.5px)"></i>
<i style="background:linear-gradient(#2d0057 385.5px,#250048 390.5px,#0b0781 396.5px,#061186 399.5px,#077a80 409.5px,#08b453 417.5px,#1fb826 422.5px,#26b724 426.5px,#72c52c 433.5px,#8cc923 436.5px,#83c61b 438.5px,#78c318 446.5px,#3e8f0f 451.5px,#10810c 455.5px,#0c810e 456.5px,#0c8310 457.5px,#09831f 458.5px,#068344 460.5px,#067866 462.5px,#065b7a 464.5px,#061c84 466.5px,#0a0982 467.5px,#240046 469.5px,#2d0057 472.5px)"></i>
<i style="background:linear-gradient(#2d0057 389.5px,#250048 394.5px,#0c0680 400.5px,#080e85 402.5px,#061486 403.5px,#065b7e 408.5px,#067378 411.5px,#08af4c 419.5px,#1cb824 423.5px,#2ab824 427.5px,#73c52d 433.5px,#89c925 435.5px,#80c515 438.5px,#7bc015 443.5px,#74b614 445.5px,#4e9312 449.5px,#0c810c 455.5px,#0a831a 457.5px,#068152 460.5px,#067965 461.5px,#065b7a 463.5px,#061985 465.5px,#0b0781 466.5px,#1d0663 467.5px,#250048 468.5px,#2d0057 470.5px)"></i>
<i style="background:linear-gradient(#2d0057 393.5px,#23014d 399.5px,#0e067d 403.5px,#070f85 405.5px,#06577d 410.5px,#066e78 413.5px,#09b44c 421.5px,#1db828 424.5px,#24b724 427.5px,#73c52c 433.5px,#86c720 435.5px,#77bb14 437.5px,#579512 447.5px,#3e8b0f 450.5px,#0c810c 454.5px,#0b8315 456.5px,#067b63 460.5px,#065b79 462.5px,#061885 464.5px,#0b0781 465.5px,#1e0560 466.5px,#260049 467.5px,#2d0057 469.5px)"></i>
<i style="background:linear-gradient(#2d0057 397.5px,#250049 402.5px,#0c0681 406.5px,#061287 408.5px,#06507e 412.5px,#067679 416.5px,#08ac67 420.5px,#0ab55f 421.5px,#15b84b 423.5px,#20b92c 425.5px,#27b725 428.5px,#70c52b 433.5px,#7cc624 434.5px,#78c319 435.5px,#60a514 438.5px,#458c10 448.5px,#34890e 450.5px,#0f810c 453.5px,#0c8312 455.5px,#06824f 458.5px,#066d71 460.5px,#065c79 461.5px,#061985 463.5px,#0b0781 464.5px,#1d0560 465.5px,#260049 466.5px,#2d0057 468.5px)"></i>
<i style="background:linear-gradient(#2d0057 401.5px,#27004c 404.5px,#240250 405.5px,#0f067c 408.5px,#070f86 410.5px,#077587 417.5px,#089a86 419.5px,#09ab81 420.5px,#13b769 422.5px,#19b950 424.5px,#22ba2c 426.5px,#24b725 428.5px,#2db824 429.5px,#69c326 433.5px,#6cc21e 434.5px,#58a614 436.5px,#509c13 438.5px,#3d8b0f 447.5px,#31880d 449.5px,#10810c 452.5px,#0c8311 454.5px,#06834e 457.5px,#066d71 459.5px,#065d79 460.5px,#061a85 462.5px,#0b0781 463.5px,#1d0661 464.5px,#260049 465.5px,#2d0057 467.5px)"></i>
<i style="background:linear-gradient(#2d0057 404.5px,#25014d 407.5px,#110679 410.5px,#080e87 412.5px,#062a89 414.5px,#09929e 419.5px,#15b47a 422.5px,#1ab94e 425.5px,#21b928 427.5px,#21b622 429.5px,#5abf1d 433.5px,#499e12 436.5px,#2e880d 447.5px,#0f810c 451.5px,#0c8311 453.5px,#06834e 456.5px,#066d71 458.5px,#065d79 459.5px,#061b85 461.5px,#0b0881 462.5px,#1d0662 463.5px,#260049 464.5px,#2d0057 466.5px)"></i>
<i style="background:linear-gradient(#2d0057 407.5px,#260150 409.5px,#11067d 412.5px,#07108e 414.5px,#073796 416.5px,#0870a1 418.5px,#0984a4 419.5px,#0c94a0 420.5px,#13b477 423.5px,#18b61f 428.5px,#17b218 430.5px,#36b813 432.5px,#41b211 433.5px,#3d9d10 435.5px,#24870c 446.5px,#0c820e 451.5px,#0c8311 452.5px,#06834c 455.5px,#066e70 457.5px,#065e79 458.5px,#061d84 460.5px,#0a0882 461.5px,#250048 463.5px,#2d0057 465.5px)"></i>
<i style="background:linear-gradient(#2d0057 409.5px,#270257 411.5px,#0d0689 414.5px,#090d90 415.5px,#071996 416.5px,#076a9c 419.5px,#088d98 421.5px,#08a37b 423.5px,#08a66a 424.5px,#0ea015 429.5px,#0e9b0f 431.5px,#28970d 433.5px,#2f990d 437.5px,#0c820e 450.5px,#0c8311 451.5px,#068347 454.5px,#067e5a 455.5px,#066178 457.5px,#06477d 458.5px,#062284 459.5px,#0a0a83 460.5px,#230044 462.5px,#2d0057 464.5px)"></i>
<i style="background:linear-gradient(#2d0057 411.5px,#2b0052 412.5px,#0b0a8d 416.5px,#071293 417.5px,#072793 418.5px,#076988 421.5px,#06856d 424.5px,#068c53 426.5px,#0c8b11 431.5px,#10870c 433.5px,#228c0c 435.5px,#269c0e 440.5px,#0c870c 448.5px,#0c8512 451.5px,#06844a 454.5px,#067d5d 455.5px,#065f78 457.5px,#061d85 459.5px,#0b0881 460.5px,#1d0661 461.5px,#250047 462.5px,#2d0057 464.5px)"></i>
<i style="background:linear-gradient(#2d0057 413.5px,#2a0051 414.5px,#11078c 417.5px,#071697 419.5px,#065885 422.5px,#067d6a 426.5px,#068949 429.5px,#0c8611 433.5px,#0e850c 435.5px,#1a890c 436.5px,#1e920d 438.5px,#20a10e 441.5px,#1ca40f 444.5px,#0d8d12 451.5px,#0b8b1d 452.5px,#068455 455.5px,#067b68 456.5px,#066b77 457.5px,#06597c 458.5px,#071087 460.5px,#110678 461.5px,#210252 462.5px,#2d0057 464.5px)"></i>
<i style="background:linear-gradient(#2d0057 415.5px,#2d0260 416.5px,#2a077d 417.5px,#1209ae 419.5px,#0c10b4 420.5px,#081cb0 421.5px,#07489a 423.5px,#076a8c 425.5px,#077c82 427.5px,#078c6e 429.5px,#068b38 433.5px,#0c8915 435.5px,#138d0d 438.5px,#1db110 443.5px,#1eb312 445.5px,#17b010 448.5px,#0ea114 452.5px,#079664 456.5px,#077486 458.5px,#065a89 459.5px,#062f8d 460.5px,#090d8d 461.5px,#1a0673 462.5px,#26004a 463.5px,#2d0057 465.5px)"></i>
<i style="background:linear-gradient(#2d0057 416.5px,#2e0463 417.5px,#2b097d 418.5px,#170aaa 420.5px,#0d1ab8 422.5px,#0f30b7 423.5px,#1479ad 426.5px,#1893a7 428.5px,#15af88 431.5px,#0ab567 433.5px,#099f31 436.5px,#0e9d14 438.5px,#0fa510 440.5px,#1db312 442.5px,#27b619 446.5px,#20b415 449.5px,#11b111 451.5px,#10af16 453.5px,#0dae24 454.5px,#07a36b 457.5px,#077b8e 459.5px,#075c90 460.5px,#072b93 461.5px,#0b0a8e 462.5px,#1f0667 463.5px,#28004d 464.5px,#2d0057 466.5px)"></i>
<i style="background:linear-gradient(#2d0057 415.5px,#2f035b 416.5px,#2a0a88 418.5px,#150bac 420.5px,#0e19b8 422.5px,#1986ad 427.5px,#1e9da6 429.5px,#21b095 431.5px,#1fbb73 434.5px,#1cba5c 436.5px,#1db828 439.5px,#1db620 441.5px,#2cb820 444.5px,#2db71b 448.5px,#25b515 450.5px,#11af10 452.5px,#0fa814 454.5px,#0da61f 455.5px,#079e4d 457.5px,#079761 458.5px,#066f83 460.5px,#065086 461.5px,#06218b 462.5px,#0c0685 463.5px,#210356 464.5px,#290050 465.5px,#2d0057 466.5px)"></i>
<i style="background:linear-gradient(#2d0057 413.5px,#280b8e 416.5px,#160bac 418.5px,#0c1cb9 421.5px,#1884ad 426.5px,#20a69e 429.5px,#21bc77 433.5px,#21bc5c 436.5px,#27bb2d 440.5px,#26b725 443.5px,#35ba22 446.5px,#31b818 449.5px,#24b210 451.5px,#119e0e 453.5px,#0d9412 455.5px,#0c911c 456.5px,#068b46 458.5px,#06855a 459.5px,#06637a 461.5px,#064180 462.5px,#061288 463.5px,#140674 464.5px,#260049 465.5px,#2d0057 467.5px)"></i>
<i style="background:linear-gradient(#2d0057 407.5px,#2f035c 408.5px,#2a0a87 411.5px,#170baa 414.5px,#0b1db9 418.5px,#1781ad 424.5px,#1b95a8 426.5px,#21b290 429.5px,#21bc71 432.5px,#27bc34 438.5px,#28b828 442.5px,#3cbc25 445.5px,#39ba1c 448.5px,#2fb611 450.5px,#0d8c0d 454.5px,#0c8811 456.5px,#06854b 459.5px,#067d60 460.5px,#066c73 461.5px,#06587b 462.5px,#062b82 463.5px,#0a0982 464.5px,#20045c 465.5px,#290050 466.5px,#2d0057 467.5px)"></i>
<i style="background:linear-gradient(#2d0057 401.5px,#2f035d 402.5px,#2a0a87 405.5px,#120bb1 409.5px,#0b1ab9 413.5px,#167fad 421.5px,#1b96a8 424.5px,#21b194 427.5px,#21bc74 430.5px,#28bb2f 437.5px,#29b828 441.5px,#43bd25 445.5px,#37b813 449.5px,#1b8d0d 453.5px,#0c840d 455.5px,#0c8410 456.5px,#0b8518 457.5px,#067f57 460.5px,#065f78 462.5px,#070f85 464.5px,#27004c 466.5px,#2d0057 467.5px)"></i>
<i style="background:linear-gradient(#2d0057 394.5px,#280b8d 399.5px,#140bae 403.5px,#0b23b7 408.5px,#1682ac 417.5px,#1b97a8 421.5px,#20b094 425.5px,#21bb7a 428.5px,#28bb2f 436.5px,#2ab828 440.5px,#46bd22 445.5px,#3cb913 448.5px,#248f0d 452.5px,#0c820c 455.5px,#0c830f 456.5px,#0c8412 457.5px,#068251 460.5px,#066576 462.5px,#06497d 463.5px,#061a85 464.5px,#100679 465.5px,#24014b 466.5px,#2d0057 468.5px)"></i>
<i style="background:linear-gradient(#2d0057 387.5px,#2f035d 388.5px,#2a0b8a 392.5px,#160bab 396.5px,#0b1bb9 403.5px,#0f58b1 408.5px,#147fac 412.5px,#1a98a7 417.5px,#20af94 422.5px,#21bc76 427.5px,#21bc59 431.5px,#27bb32 435.5px,#26b826 439.5px,#40bb1f 444.5px,#3ab710 447.5px,#238b0c 452.5px,#0c820c 455.5px,#0c8311 457.5px,#06834b 460.5px,#067c61 461.5px,#066b73 462.5px,#06567b 463.5px,#062982 464.5px,#0a0982 465.5px,#1f045a 466.5px,#290050 467.5px,#2d0057 468.5px)"></i>
<i style="background:linear-gradient(#2d0057 382.5px,#2a0985 386.5px,#140aad 391.5px,#0a19b8 399.5px,#0a30b5 402.5px,#1280ab 409.5px,#1899a5 414.5px,#1eb092 419.5px,#21bc77 425.5px,#20bb5c 430.5px,#20b927 436.5px,#18b318 440.5px,#33b310 445.5px,#268c0c 451.5px,#0c810c 455.5px,#0c8311 457.5px,#068347 460.5px,#067e5b 461.5px,#065c79 463.5px,#080e85 465.5px,#27004c 467.5px,#2d0057 468.5px)"></i>
<i style="background:linear-gradient(#2d0057 385.5px,#280469 387.5px,#200776 390.5px,#0f067e 395.5px,#07118a 402.5px,#07628b 410.5px,#08909e 415.5px,#0b979b 416.5px,#15ad8c 420.5px,#18b96d 427.5px,#13b750 432.5px,#0eac1c 437.5px,#0fa00f 442.5px,#259f0e 445.5px,#27940d 448.5px,#21890c 451.5px,#11820c 454.5px,#0c8311 457.5px,#067f57 461.5px,#066277 463.5px,#06437e 464.5px,#061686 465.5px,#110678 466.5px,#24014d 467.5px,#2d0057 469.5px)"></i>
<i style="background:linear-gradient(#2d0057 385.5px,#26004a 392.5px,#1c0665 399.5px,#0a0a83 404.5px,#061286 406.5px,#06597b 414.5px,#079c65 427.5px,#08aa56 431.5px,#09972d 437.5px,#0d9615 440.5px,#0e9a0f 443.5px,#1f8c0c 449.5px,#0c810c 454.5px,#0c8311 457.5px,#068055 461.5px,#066676 463.5px,#064e7c 464.5px,#062483 465.5px,#0b0882 466.5px,#1f045c 467.5px,#29004f 468.5px,#2d0057 469.5px)"></i>
<i style="background:linear-gradient(#2d0057 390.5px,#250049 401.5px,#0b0681 407.5px,#061985 411.5px,#065a7a 418.5px,#07915e 430.5px,#079755 432.5px,#07943b 438.5px,#0ea016 442.5px,#0ea113 443.5px,#0f900d 446.5px,#17880c 450.5px,#0c8310 456.5px,#0b8414 457.5px,#068153 461.5px,#066975 463.5px,#06577b 464.5px,#080d84 466.5px,#27004b 468.5px,#2d0057 469.5px)"></i>
<i style="background:linear-gradient(#2d0057 398.5px,#240048 406.5px,#0c0681 412.5px,#061186 415.5px,#06597b 422.5px,#068369 430.5px,#07a34a 439.5px,#08a945 440.5px,#0cb32d 442.5px,#0fb21c 443.5px,#0d920f 446.5px,#0c830c 452.5px,#0c8311 456.5px,#0b8418 457.5px,#068153 461.5px,#066b73 463.5px,#065b7a 464.5px,#061186 466.5px,#110678 467.5px,#230253 468.5px,#2d0057 470.5px)"></i>
<i style="background:linear-gradient(#2d0057 404.5px,#240046 411.5px,#1d0663 414.5px,#0f067a 416.5px,#061086 419.5px,#06597b 426.5px,#079466 435.5px,#08b364 438.5px,#13b753 441.5px,#15b744 442.5px,#11b419 444.5px,#0fa314 445.5px,#0d8b0e 448.5px,#0c8310 455.5px,#0c8412 456.5px,#0a841d 457.5px,#068445 460.5px,#067b63 462.5px,#065e79 464.5px,#06427e 465.5px,#061c85 466.5px,#0b0781 467.5px,#1f055f 468.5px,#290050 469.5px,#2d0057 470.5px)"></i>
<i style="background:linear-gradient(#2d0057 409.5px,#230048 416.5px,#10067a 420.5px,#071086 423.5px,#065380 428.5px,#07847f 433.5px,#0bac81 436.5px,#1bba5e 441.5px,#1bba52 442.5px,#14b628 444.5px,#0fa818 445.5px,#0d9112 447.5px,#0c870f 450.5px,#0b8417 456.5px,#068445 460.5px,#067b61 462.5px,#066178 464.5px,#06497d 465.5px,#062583 466.5px,#090a83 467.5px,#28004d 469.5px,#2d0057 470.5px)"></i>
<i style="background:linear-gradient(#2d0057 414.5px,#260049 419.5px,#1f0458 421.5px,#0b0681 424.5px,#06128a 426.5px,#07488e 429.5px,#0a8da2 433.5px,#1aac92 436.5px,#1fbb6d 440.5px,#1dba47 443.5px,#0dac23 445.5px,#0d9416 447.5px,#0c8811 450.5px,#0b8415 455.5px,#067c5f 462.5px,#066377 464.5px,#064f7c 465.5px,#080d84 467.5px,#16066f 468.5px,#26014e 469.5px,#2d0057 471.5px)"></i>
<i style="background:linear-gradient(#2d0057 418.5px,#26004a 422.5px,#1e0664 424.5px,#0d0891 426.5px,#081eaf 428.5px,#0937b3 429.5px,#127dac 432.5px,#1689aa 433.5px,#20b290 437.5px,#20bb6f 440.5px,#1fba4b 443.5px,#0cb22d 445.5px,#0b9a22 447.5px,#0c8912 451.5px,#0c8612 453.5px,#098520 456.5px,#068443 460.5px,#067e5c 462.5px,#066676 464.5px,#06547b 465.5px,#070f85 467.5px,#130675 468.5px,#240256 469.5px,#2d0057 471.5px)"></i>
<i style="background:linear-gradient(#2d0057 422.5px,#290050 424.5px,#1f0998 426.5px,#110ab1 427.5px,#0c25b8 429.5px,#1574af 432.5px,#1886ac 433.5px,#20aa9a 436.5px,#21bc77 439.5px,#21bb4b 443.5px,#10b537 445.5px,#0b8b19 452.5px,#088529 457.5px,#068441 460.5px,#067e59 462.5px,#066775 464.5px,#06567b 465.5px,#071085 467.5px,#120677 468.5px,#230358 469.5px,#2a0052 470.5px,#2d0057 471.5px)"></i>
<i style="background:linear-gradient(#2d0057 424.5px,#2e025d 425.5px,#2a0a87 426.5px,#1a0aa3 427.5px,#1010b3 428.5px,#0b1bb9 429.5px,#1575ae 432.5px,#1989ab 433.5px,#21af96 436.5px,#21bc66 440.5px,#1eba3e 444.5px,#0cb230 448.5px,#0b8d1f 453.5px,#08852a 457.5px,#068440 460.5px,#067f59 462.5px,#066775 464.5px,#06557b 465.5px,#070f85 467.5px,#120676 468.5px,#220358 469.5px,#2a0051 470.5px,#2d0057 471.5px)"></i>
<i style="background:linear-gradient(#2d0057 425.5px,#1f0a9b 427.5px,#110eb2 428.5px,#0b19b8 429.5px,#167ead 432.5px,#20ac98 435.5px,#21ba7d 437.5px,#23bc50 441.5px,#25bb3a 443.5px,#16b736 447.5px,#0db329 450.5px,#0b9321 453.5px,#07852c 457.5px,#068442 460.5px,#067e5a 462.5px,#066676 464.5px,#06537b 465.5px,#070f85 467.5px,#120677 468.5px,#220359 469.5px,#2a0051 470.5px,#2d0057 471.5px)"></i>
<i style="background:linear-gradient(#2d0057 425.5px,#2c0774 426.5px,#110db2 428.5px,#0b19b8 429.5px,#1784ac 432.5px,#1ea69d 434.5px,#21b97f 436.5px,#26bc3e 441.5px,#27bb2d 443.5px,#19b72f 448.5px,#0eb322 451.5px,#0a9122 454.5px,#06843c 459.5px,#067d5e 462.5px,#06517c 465.5px,#070f85 467.5px,#110678 468.5px,#21045b 469.5px,#2a0050 470.5px,#2d0057 471.5px)"></i>
<i style="background:linear-gradient(#2d0057 425.5px,#2d0671 426.5px,#230b95 427.5px,#120cb2 428.5px,#0c19b8 429.5px,#1469b0 431.5px,#1888ab 432.5px,#20ad97 434.5px,#21bc73 436.5px,#27bc36 440.5px,#25b929 443.5px,#19b720 445.5px,#1ab726 448.5px,#13b51e 451.5px,#0da21e 453.5px,#08892a 456.5px,#068448 460.5px,#067c61 462.5px,#064f7c 465.5px,#070f85 467.5px,#10067a 468.5px,#20045e 469.5px,#290050 470.5px,#2d0057 471.5px)"></i>
<i style="background:linear-gradient(#2d0057 425.5px,#2c0878 426.5px,#200b9a 427.5px,#110eb3 428.5px,#0c1eb9 429.5px,#1571af 431.5px,#198daa 432.5px,#21b291 434.5px,#21ba7c 435.5px,#28bc33 439.5px,#25b928 442.5px,#14b419 444.5px,#1ab721 449.5px,#12b419 452.5px,#0fac18 453.5px,#098f28 456.5px,#068449 460.5px,#067b63 462.5px,#064e7c 465.5px,#071085 467.5px,#0e067c 468.5px,#1f0560 469.5px,#29004f 470.5px,#2d0057 471.5px)"></i>
<i style="background:linear-gradient(#2d0057 424.5px,#2e0568 425.5px,#290b8c 426.5px,#160baa 427.5px,#0e14b6 428.5px,#0e30b7 429.5px,#1780ad 431.5px,#1fa89c 433.5px,#21bc74 435.5px,#27bc36 438.5px,#25b828 441.5px,#0fa713 444.5px,#11b317 446.5px,#1bb721 449.5px,#10ae17 454.5px,#06873d 459.5px,#068153 461.5px,#06706e 463.5px,#064f7c 465.5px,#061186 467.5px,#0d067e 468.5px,#1e0560 469.5px,#28004d 470.5px,#2d0057 471.5px)"></i>
<i style="background:linear-gradient(#2d0057 423.5px,#2e0568 424.5px,#2a0b8a 425.5px,#190ba6 426.5px,#0f12b4 427.5px,#0d25b8 428.5px,#1571af 430.5px,#1d9ea3 432.5px,#21b194 433.5px,#21bc6b 435.5px,#25bc42 437.5px,#28bb2f 438.5px,#25b828 440.5px,#17b318 442.5px,#0fa711 443.5px,#0ea012 444.5px,#13b418 446.5px,#1fb723 449.5px,#11b317 455.5px,#0da120 457.5px,#068d37 459.5px,#06746b 463.5px,#06557b 465.5px,#061486 467.5px,#0b0781 468.5px,#27004c 470.5px,#2d0057 472.5px)"></i>
<i style="background:linear-gradient(#2d0057 422.5px,#2c087a 423.5px,#120bb1 425.5px,#0d15b6 426.5px,#0e2db7 427.5px,#1571af 429.5px,#1d9ba7 431.5px,#20ab99 432.5px,#21bc74 434.5px,#23bc4f 436.5px,#27bb2e 438.5px,#13b214 442.5px,#0fa711 443.5px,#1ab61f 446.5px,#23b825 449.5px,#10b116 457.5px,#0ea51b 458.5px,#068e39 460.5px,#067b65 463.5px,#065c7a 465.5px,#061d85 467.5px,#0a0982 468.5px,#26014e 470.5px,#2d0057 472.5px)"></i>
<i style="background:linear-gradient(#2d0057 420.5px,#2b097e 421.5px,#120bb1 423.5px,#0d29b7 425.5px,#1780ad 428.5px,#21ad98 431.5px,#21bc77 433.5px,#25bc44 436.5px,#27bc33 437.5px,#23b825 440.5px,#13b215 443.5px,#22b825 446.5px,#28b723 451.5px,#13b216 457.5px,#0ea015 459.5px,#06746b 464.5px,#064d7d 466.5px,#062a82 467.5px,#080d84 468.5px,#140673 469.5px,#230255 470.5px,#2d0057 472.5px)"></i>
<i style="background:linear-gradient(#2d0057 417.5px,#270b8f 419.5px,#180ba8 420.5px,#0b1ab9 422.5px,#1783ac 426.5px,#1fa89b 429.5px,#21bc73 432.5px,#27bc35 436.5px,#1fb51f 443.5px,#26b827 446.5px,#35ba23 452.5px,#2ab71b 455.5px,#18b213 457.5px,#10ab11 458.5px,#0d9614 460.5px,#067e61 464.5px,#065c7a 466.5px,#061486 468.5px,#0d067e 469.5px,#20045d 470.5px,#290050 471.5px,#2d0057 472.5px)"></i>
<i style="background:linear-gradient(#2d0057 414.5px,#2e0464 415.5px,#2b0a84 416.5px,#1d0ba0 417.5px,#110eb3 418.5px,#0c18b7 419.5px,#157fad 423.5px,#1b97a8 425.5px,#21b48d 428.5px,#21bc74 430.5px,#28bb2f 435.5px,#2fb926 444.5px,#44bd27 450.5px,#3dbb1f 454.5px,#26b513 457.5px,#0e9b0e 459.5px,#0d8d13 461.5px,#068354 464.5px,#066577 466.5px,#064c7d 467.5px,#062384 468.5px,#0a0982 469.5px,#1d0663 470.5px,#28004e 471.5px,#2d0057 472.5px)"></i>
<i style="background:linear-gradient(#2d0057 410.5px,#2f035d 411.5px,#2b0a84 413.5px,#130bb0 415.5px,#0e14b5 416.5px,#0b23b7 417.5px,#1479ad 420.5px,#1a95a8 422.5px,#21b38f 425.5px,#21bb78 427.5px,#28bb2e 433.5px,#28b829 436.5px,#3fbd28 441.5px,#41bd28 444.5px,#56c129 450.5px,#4cbe22 454.5px,#34b813 457.5px,#0d900e 460.5px,#0c8b10 461.5px,#0b891a 462.5px,#067e5d 465.5px,#066e71 466.5px,#065a7a 467.5px,#080d84 469.5px,#27004b 471.5px,#2d0057 473.5px)"></i>
<i style="background:linear-gradient(#2d0057 403.5px,#260b8f 405.5px,#130bb0 411.5px,#0b1cb9 414.5px,#1581ac 418.5px,#1b9aa6 420.5px,#21b588 423.5px,#21bc5b 427.5px,#28bc2f 430.5px,#28b829 433.5px,#55c129 441.5px,#57c12a 444.5px,#6bc42d 449.5px,#5dc127 454.5px,#43bb18 457.5px,#34b410 458.5px,#15920d 460.5px,#0c8a0e 461.5px,#0c8811 462.5px,#068154 465.5px,#066078 467.5px,#071086 469.5px,#150671 470.5px,#250047 471.5px,#2d0057 473.5px)"></i>
<i style="background:linear-gradient(#2d0057 397.5px,#2f035b 398.5px,#2a0a87 399.5px,#1e0b9e 400.5px,#160bab 401.5px,#0b1ab9 406.5px,#0c32b6 410.5px,#0f45b3 412.5px,#1786ab 416.5px,#1c9ca4 418.5px,#21b193 420.5px,#21bb7a 422.5px,#28bc34 427.5px,#28bb2e 428.5px,#2db928 431.5px,#55c12a 436.5px,#68c42d 440.5px,#6fc52d 444.5px,#84c92d 449.5px,#7dc72d 452.5px,#64c225 456.5px,#45b912 458.5px,#31a30e 459.5px,#10880c 461.5px,#0c860f 462.5px,#0b8517 463.5px,#068449 465.5px,#067c61 466.5px,#066975 467.5px,#064e7d 468.5px,#061f84 469.5px,#0c0681 470.5px,#1f0457 471.5px,#28004e 472.5px,#2d0057 473.5px)"></i>
<i style="background:linear-gradient(#2d0057 393.5px,#280b8d 395.5px,#130baf 397.5px,#0b1ab8 400.5px,#1059b1 406.5px,#1b98a7 415.5px,#21ba7c 420.5px,#22bc58 423.5px,#27bc35 425.5px,#28bb2e 426.5px,#28b829 428.5px,#56c12a 433.5px,#6fc52e 437.5px,#7fc82c 441.5px,#7ec72b 443.5px,#9fce29 450.5px,#97cc29 453.5px,#7cc624 456.5px,#6ac11c 457.5px,#3d9910 459.5px,#2a8d0c 460.5px,#0c820c 462.5px,#0c8310 463.5px,#068055 466.5px,#06736b 467.5px,#065f78 468.5px,#061186 470.5px,#120677 471.5px,#230253 472.5px,#2d0057 474.5px)"></i>
<i style="background:linear-gradient(#2d0057 389.5px,#2e0462 390.5px,#270b8e 392.5px,#120bb1 394.5px,#0b19b8 396.5px,#0d4cb2 400.5px,#137cac 405.5px,#1a9ba4 411.5px,#21b48c 416.5px,#21bc5d 421.5px,#28bb2f 424.5px,#2fb928 427.5px,#61c32b 432.5px,#80c82c 437.5px,#8bc926 440.5px,#85c71f 443.5px,#b0d023 449.5px,#b5d322 452.5px,#a4cd1b 455.5px,#93c712 456.5px,#71a912 457.5px,#569612 458.5px,#11820c 462.5px,#0a8319 464.5px,#06834a 466.5px,#067b61 467.5px,#066a74 468.5px,#06567b 469.5px,#062e82 470.5px,#080d84 471.5px,#160674 472.5px,#270258 473.5px,#2d0057 474.5px)"></i>
<i style="background:linear-gradient(#2d0057 387.5px,#280a8c 390.5px,#120ab1 392.5px,#0b19b8 394.5px,#0948b1 397.5px,#095dad 399.5px,#0870a3 402.5px,#1192a4 407.5px,#1db18f 412.5px,#20bb5f 419.5px,#28bb2e 423.5px,#27b828 425.5px,#65c329 431.5px,#86c822 437.5px,#89c716 440.5px,#75b413 442.5px,#7aba14 444.5px,#b3d11a 449.5px,#c0d715 452.5px,#b4ce0a 454.5px,#7f9d0d 456.5px,#568f10 458.5px,#0c810c 462.5px,#0c8310 463.5px,#068250 466.5px,#067965 467.5px,#066775 468.5px,#06527c 469.5px,#062b82 470.5px,#080d84 471.5px,#180673 472.5px,#280153 473.5px,#2d0057 474.5px)"></i>
<i style="background:linear-gradient(#2d0057 390.5px,#220670 392.5px,#0e0681 394.5px,#061187 397.5px,#066e7c 409.5px,#0ab36e 416.5px,#17b85a 419.5px,#23b929 423.5px,#22b623 425.5px,#57be19 431.5px,#7ac015 437.5px,#79b513 439.5px,#66a011 441.5px,#62a313 444.5px,#78b513 446.5px,#9eca11 448.5px,#b5d20d 450.5px,#b8d009 451.5px,#afc307 452.5px,#8fa308 454.5px,#73940d 456.5px,#0c810c 461.5px,#0c8310 462.5px,#068151 465.5px,#067866 466.5px,#06527c 468.5px,#062b82 469.5px,#090c83 470.5px,#260049 472.5px,#2d0057 474.5px)"></i>
<i style="background:linear-gradient(#2d0057 390.5px,#26004a 393.5px,#0c0681 399.5px,#061386 403.5px,#062883 405.5px,#06597a 409.5px,#06865f 416.5px,#08af4a 420.5px,#14b51c 423.5px,#11af10 426.5px,#3e9e10 431.5px,#62a513 437.5px,#65a012 439.5px,#519513 442.5px,#59a414 445.5px,#87bb12 448.5px,#98b50d 450.5px,#81980a 454.5px,#62900f 456.5px,#0c810c 460.5px,#0c8311 461.5px,#068341 463.5px,#067569 465.5px,#064e7c 467.5px,#062683 468.5px,#0a0a83 469.5px,#1d0663 470.5px,#250048 471.5px,#2d0057 473.5px)"></i>
<i style="background:linear-gradient(#2d0057 392.5px,#240046 398.5px,#1d0662 401.5px,#0c0680 404.5px,#070f85 406.5px,#06547c 411.5px,#066a76 414.5px,#07a645 421.5px,#0fa716 424.5px,#0e950e 427.5px,#2b900d 431.5px,#549b13 438.5px,#489411 442.5px,#4b9f12 444.5px,#69b415 447.5px,#7baa10 449.5px,#7d9a0c 451.5px,#77940c 453.5px,#5c8f10 455.5px,#0c810d 459.5px,#0b8314 460.5px,#068332 461.5px,#067d5d 463.5px,#065e79 465.5px,#061985 467.5px,#0c0680 468.5px,#1f0455 469.5px,#26004a 470.5px,#2d0057 472.5px)"></i>
<i style="background:linear-gradient(#2d0057 395.5px,#23014b 403.5px,#0c0681 407.5px,#071188 409.5px,#065d80 414.5px,#077584 416.5px,#079a80 418.5px,#09b36b 420.5px,#0bb43b 423.5px,#0fa918 425.5px,#0ea014 426.5px,#0e8e0d 429.5px,#158d0d 430.5px,#479a11 438.5px,#439410 441.5px,#449f11 443.5px,#59b615 446.5px,#65aa14 448.5px,#67960f 450.5px,#64910f 452.5px,#4d8c11 454.5px,#16830c 457.5px,#0c820e 458.5px,#0a831b 459.5px,#068250 461.5px,#067866 462.5px,#064f7c 464.5px,#062982 465.5px,#090c84 466.5px,#18066b 467.5px,#230043 468.5px,#2d0057 471.5px)"></i>
<i style="background:linear-gradient(#2d0057 405.5px,#2a0a89 407.5px,#130aaf 409.5px,#0c19b8 411.5px,#1786ac 416.5px,#1da0a1 418.5px,#1eb978 421.5px,#13b51a 427.5px,#10ae15 428.5px,#0e9d10 430.5px,#12960e 432.5px,#3fa310 438.5px,#3f9a10 440.5px,#40a411 442.5px,#51bc14 445.5px,#56b915 446.5px,#539412 449.5px,#4f8d11 451.5px,#3f8a0f 453.5px,#0d810c 456.5px,#0c8310 457.5px,#067f58 460.5px,#06706e 461.5px,#065c79 462.5px,#071085 464.5px,#130674 465.5px,#200249 466.5px,#2d0057 470.5px)"></i>
<i style="background:linear-gradient(#2d0057 405.5px,#2a0b8a 407.5px,#150bad 409.5px,#101ab8 411.5px,#1029b9 412.5px,#1b86ad 416.5px,#20a0a4 418.5px,#21ba7d 421.5px,#24bb32 427.5px,#15b317 432.5px,#14b113 433.5px,#3eb911 438.5px,#3eac11 440.5px,#44ba12 442.5px,#50bc16 445.5px,#448e10 449.5px,#31880d 452.5px,#0c810d 455.5px,#0c8311 456.5px,#067d5e 459.5px,#066b73 460.5px,#06527b 461.5px,#062583 462.5px,#0a0882 463.5px,#1e055c 464.5px,#230045 465.5px,#2d0057 468.5px)"></i>
<i style="background:linear-gradient(#2d0057 402.5px,#2d066d 403.5px,#260b90 404.5px,#1a0ba4 405.5px,#110db2 406.5px,#0f28b8 409.5px,#1985ad 414.5px,#1e9ca6 416.5px,#21b292 418.5px,#21bc78 420.5px,#28bc32 426.5px,#22b622 433.5px,#43bc1c 438.5px,#4ebd1c 443.5px,#4dbc15 445.5px,#3b8e0f 448.5px,#0c820e 454.5px,#0b8316 455.5px,#068348 457.5px,#067c60 458.5px,#066975 459.5px,#064f7c 460.5px,#061f84 461.5px,#0d067f 462.5px,#1f024f 463.5px,#260049 464.5px,#2d0057 466.5px)"></i>
<i style="background:linear-gradient(#2d0057 398.5px,#2f035b 399.5px,#2b097f 400.5px,#1d0b9f 401.5px,#100fb3 402.5px,#0b19b8 403.5px,#0f4bb3 405.5px,#157aad 408.5px,#1d9ea3 413.5px,#21ba7c 417.5px,#28bc35 423.5px,#28bb2f 424.5px,#27b827 432.5px,#48be22 438.5px,#52bf20 442.5px,#48b512 445.5px,#36900e 447.5px,#2f890d 448.5px,#0c810c 452.5px,#0c820f 453.5px,#0a831c 454.5px,#06834a 456.5px,#067b62 457.5px,#066875 458.5px,#064d7c 459.5px,#061d84 460.5px,#0f067c 461.5px,#200148 462.5px,#2d0057 465.5px)"></i>
<i style="background:linear-gradient(#2d0057 394.5px,#2f035e 395.5px,#2a0a86 397.5px,#110db2 399.5px,#0c18b8 400.5px,#137aad 403.5px,#1995a7 405.5px,#1da89a 408.5px,#21b785 413.5px,#28bb2f 421.5px,#32ba27 433.5px,#55bf23 441.5px,#4dbc15 444.5px,#36930e 446.5px,#2d8a0c 447.5px,#11820c 450.5px,#0c8310 452.5px,#06834d 455.5px,#067a64 456.5px,#066775 457.5px,#064c7d 458.5px,#061d84 459.5px,#0f067b 460.5px,#210148 461.5px,#2d0057 464.5px)"></i>
<i style="background:linear-gradient(#2d0057 382.5px,#280b8d 385.5px,#180ba8 388.5px,#110db2 395.5px,#0c17b7 397.5px,#0b26b7 398.5px,#1481ab 401.5px,#1dae94 404.5px,#21b881 406.5px,#21bc69 413.5px,#21bc5b 415.5px,#28bb2f 419.5px,#28b828 423.5px,#3dbc28 428.5px,#3cbc27 434.5px,#56c023 440.5px,#51bd16 443.5px,#3a970f 445.5px,#2f8c0d 446.5px,#0f810c 449.5px,#0c8311 451.5px,#06824f 454.5px,#067965 455.5px,#064a7d 457.5px,#061b85 458.5px,#0f067b 459.5px,#210147 460.5px,#2d0057 463.5px)"></i>
<i style="background:linear-gradient(#2d0057 375.5px,#270a8e 380.5px,#120cb1 383.5px,#0b21b8 386.5px,#0b3db3 389.5px,#0b3db3 395.5px,#0c53b0 397.5px,#117dab 399.5px,#179aa3 401.5px,#21ba7c 404.5px,#21bc62 407.5px,#22bc53 413.5px,#28bb2d 418.5px,#28b828 421.5px,#45be27 427.5px,#43bd26 434.5px,#51bf24 438.5px,#50bb14 442.5px,#3c970f 444.5px,#328d0d 445.5px,#0c810d 449.5px,#0c8311 450.5px,#068250 453.5px,#066576 455.5px,#06487d 456.5px,#061985 457.5px,#100679 458.5px,#210145 459.5px,#2d0057 462.5px)"></i>
<i style="background:linear-gradient(#2d0057 377.5px,#26077f 381.5px,#0d089b 384.5px,#071399 386.5px,#062c88 389.5px,#073094 395.5px,#0743a0 397.5px,#0869a3 399.5px,#088499 401.5px,#078c8b 402.5px,#079369 404.5px,#079551 406.5px,#079847 408.5px,#09b449 413.5px,#17b61e 419.5px,#1db51d 422.5px,#3bba1d 427.5px,#4ebf23 437.5px,#4abb15 440.5px,#46b012 441.5px,#338c0d 444.5px,#0c810d 448.5px,#0c8310 449.5px,#098320 450.5px,#06834e 452.5px,#067965 453.5px,#066676 454.5px,#06487d 455.5px,#061785 456.5px,#120676 457.5px,#220042 458.5px,#2d0057 461.5px)"></i>
<i style="background:linear-gradient(#2d0057 378.5px,#24014a 384.5px,#1e0663 385.5px,#0b0781 388.5px,#080d84 396.5px,#061885 398.5px,#06597a 402.5px,#067b63 406.5px,#068251 409.5px,#068938 417.5px,#0d9413 421.5px,#0e970e 424.5px,#219e0e 428.5px,#28aa0f 430.5px,#31b714 432.5px,#45bd1f 436.5px,#43bb16 438.5px,#36980e 441.5px,#2e8a0d 443.5px,#0c810c 447.5px,#0c820f 448.5px,#0a831a 449.5px,#068349 451.5px,#067c60 452.5px,#066975 453.5px,#064d7c 454.5px,#061b85 455.5px,#110677 456.5px,#220042 457.5px,#2d0057 460.5px)"></i>
<i style="background:linear-gradient(#2d0057 382.5px,#230043 391.5px,#1e055b 396.5px,#0f067b 399.5px,#070f85 401.5px,#061c85 402.5px,#06537b 405.5px,#06716d 409.5px,#068545 418.5px,#0c8711 424.5px,#0f890c 429.5px,#18960d 431.5px,#2bb612 434.5px,#38b915 436.5px,#38b810 437.5px,#2f9c0e 439.5px,#288c0c 441.5px,#0c820f 447.5px,#0b8317 448.5px,#067e5a 451.5px,#066e70 452.5px,#06577b 453.5px,#062483 454.5px,#0e067d 455.5px,#210042 456.5px,#2d0057 459.5px)"></i>
<i style="background:linear-gradient(#2d0057 385.5px,#27004c 396.5px,#220041 400.5px,#1c0666 402.5px,#0a0882 404.5px,#061d84 406.5px,#064d7c 409.5px,#065e79 411.5px,#067a66 417.5px,#068650 420.5px,#0b8615 427.5px,#0d8d0f 431.5px,#109b0e 433.5px,#21ad0f 435.5px,#29a20e 437.5px,#1f8b0c 440.5px,#0c810c 444.5px,#0c8310 446.5px,#0a831b 447.5px,#067f57 450.5px,#065c79 452.5px,#0b0881 454.5px,#20024a 455.5px,#240046 456.5px,#2d0057 458.5px)"></i>
<i style="background:linear-gradient(#2d0057 397.5px,#220041 404.5px,#200146 405.5px,#1c0666 406.5px,#120676 407.5px,#080e85 409.5px,#064880 414.5px,#077988 418.5px,#078c6e 421.5px,#068958 423.5px,#06893b 427.5px,#0d9417 431.5px,#0fa30f 435.5px,#1a970e 437.5px,#10850c 441.5px,#0c8310 445.5px,#0b8415 446.5px,#068153 450.5px,#066676 452.5px,#064b7d 453.5px,#061a85 454.5px,#120676 455.5px,#230044 456.5px,#2d0057 458.5px)"></i>
<i style="background:linear-gradient(#2d0057 407.5px,#2e035f 408.5px,#260a8f 409.5px,#110bb1 411.5px,#0e1cb9 413.5px,#102fb8 414.5px,#1982ae 418.5px,#199ba2 421.5px,#08a484 424.5px,#079f6b 426.5px,#08aa49 430.5px,#0eae1f 433.5px,#0fa913 435.5px,#0d900d 438.5px,#0c8613 445.5px,#067d61 451.5px,#065f7a 453.5px,#070f89 455.5px,#28004c 457.5px,#2d0057 459.5px)"></i>
<i style="background:linear-gradient(#2d0057 406.5px,#2b0982 407.5px,#190ba6 409.5px,#110db2 410.5px,#0d1cb9 412.5px,#1881ad 417.5px,#1a8bab 418.5px,#1ea1a1 421.5px,#19ab93 424.5px,#15b86c 429.5px,#12b74b 432.5px,#10b418 435.5px,#0e9e11 438.5px,#0d9a19 445.5px,#06855d 451.5px,#067c6c 452.5px,#065981 454.5px,#0b0a8a 456.5px,#21045b 457.5px,#29004f 458.5px,#2d0057 459.5px)"></i>
<i style="background:linear-gradient(#2d0057 400.5px,#2e0460 401.5px,#250b91 402.5px,#140baf 404.5px,#0b1ab9 408.5px,#0b46b2 411.5px,#117cab 414.5px,#19a09d 418.5px,#17ad90 421.5px,#0eac86 424.5px,#14b37c 427.5px,#17b967 430.5px,#13b51a 437.5px,#1fb824 444.5px,#18b727 446.5px,#0aaf3a 448.5px,#068866 452.5px,#06687d 454.5px,#064a82 455.5px,#061b89 456.5px,#11067a 457.5px,#250048 458.5px,#2d0057 460.5px)"></i>
<i style="background:linear-gradient(#2d0057 400.5px,#2e0461 401.5px,#250a91 402.5px,#150aab 403.5px,#0e0db2 405.5px,#0a0f9d 407.5px,#061494 409.5px,#065c7d 415.5px,#06766c 420.5px,#067f6c 425.5px,#08aa76 428.5px,#0cb273 429.5px,#11b74f 434.5px,#1eb92e 437.5px,#25ba2a 439.5px,#24b929 446.5px,#19b72c 448.5px,#0db537 449.5px,#068367 453.5px,#065e7b 455.5px,#080d85 457.5px,#1e0561 458.5px,#28004e 459.5px,#2d0057 460.5px)"></i>
<i style="background:linear-gradient(#2d0057 402.5px,#27004c 404.5px,#210148 409.5px,#1e055d 410.5px,#0b0781 413.5px,#061686 415.5px,#06527c 419.5px,#066a76 426.5px,#067274 427.5px,#079376 429.5px,#08b070 431.5px,#0bb569 432.5px,#16b856 435.5px,#27bb2e 438.5px,#30ba28 444.5px,#23b725 447.5px,#11b419 449.5px,#07943c 451.5px,#067a67 454.5px,#066876 455.5px,#064f7d 456.5px,#061f84 457.5px,#10067a 458.5px,#250048 459.5px,#2d0057 461.5px)"></i>
<i style="background:linear-gradient(#2d0057 403.5px,#210040 415.5px,#1e055e 416.5px,#0c0681 418.5px,#071086 420.5px,#06407f 425.5px,#06697d 428.5px,#078e80 430.5px,#08ac78 432.5px,#1dba58 436.5px,#28bb2e 438.5px,#28b929 440.5px,#45be28 444.5px,#3bbb24 446.5px,#11b011 448.5px,#0d9113 450.5px,#067f5b 454.5px,#065d79 456.5px,#090b83 458.5px,#1f055d 459.5px,#29004f 460.5px,#2d0057 461.5px)"></i>
<i style="background:linear-gradient(#2d0057 411.5px,#210040 420.5px,#1a0669 422.5px,#0b0881 424.5px,#080e85 425.5px,#061b85 426.5px,#078195 430.5px,#08a48b 432.5px,#1cba60 436.5px,#27bb2f 438.5px,#2cb928 440.5px,#48be28 442.5px,#56c128 444.5px,#52bf23 445.5px,#42bb18 446.5px,#1a920d 448.5px,#0c880d 449.5px,#0b8519 451.5px,#068154 454.5px,#067668 455.5px,#066377 456.5px,#06427e 457.5px,#061186 458.5px,#27004c 460.5px,#2d0057 461.5px)"></i>
<i style="background:linear-gradient(#2d0057 416.5px,#240045 423.5px,#1f0352 424.5px,#0c0687 426.5px,#08129e 427.5px,#0832ae 428.5px,#0958ae 429.5px,#0a7aa9 430.5px,#10ad87 434.5px,#1dba5a 437.5px,#24bb3a 438.5px,#27b92a 439.5px,#58c025 443.5px,#57be1c 444.5px,#39970f 446.5px,#2b8c0c 447.5px,#0f820c 449.5px,#0c820e 450.5px,#0c8412 451.5px,#06824f 454.5px,#067a64 455.5px,#066875 456.5px,#064c7d 457.5px,#061c85 458.5px,#100679 459.5px,#24014c 460.5px,#2d0057 462.5px)"></i>
<i style="background:linear-gradient(#2d0057 422.5px,#290050 425.5px,#25098e 426.5px,#120ab0 427.5px,#0b18b7 428.5px,#0d3bb4 429.5px,#107dab 431.5px,#0f96a0 433.5px,#13ad8a 435.5px,#19b967 437.5px,#1bba4f 438.5px,#22b929 439.5px,#20b621 440.5px,#38ba1d 441.5px,#40ba16 442.5px,#3e9610 444.5px,#398d0e 445.5px,#0e810c 449.5px,#0c8412 451.5px,#06834d 454.5px,#067c61 455.5px,#066b73 456.5px,#06557b 457.5px,#062783 458.5px,#0b0881 459.5px,#200459 460.5px,#290050 461.5px,#2d0057 462.5px)"></i>
<i style="background:linear-gradient(#2d0057 426.5px,#1f0a9c 427.5px,#1010b3 428.5px,#0c21b8 429.5px,#1265af 431.5px,#137fac 432.5px,#17a29a 435.5px,#18af8d 436.5px,#17b963 438.5px,#12b419 440.5px,#0ea00f 441.5px,#23930d 442.5px,#298b0c 443.5px,#29870c 445.5px,#0c810d 449.5px,#0c820f 450.5px,#0b8317 451.5px,#06834c 454.5px,#067c5f 455.5px,#065a7a 457.5px,#080c84 459.5px,#27004c 461.5px,#2d0057 462.5px)"></i>
<i style="background:linear-gradient(#2d0057 426.5px,#240b93 427.5px,#120bb1 428.5px,#0d17b7 429.5px,#1252b3 431.5px,#1682ac 433.5px,#1b9aa6 435.5px,#1db18d 437.5px,#1bb878 438.5px,#14b85e 439.5px,#0ab138 440.5px,#0d9614 441.5px,#0c870e 442.5px,#13830c 443.5px,#17830c 444.5px,#0c810c 447.5px,#0c8311 450.5px,#06834d 454.5px,#067d5e 455.5px,#065d79 457.5px,#061186 459.5px,#130674 460.5px,#24014d 461.5px,#2d0057 463.5px)"></i>
<i style="background:linear-gradient(#2d0057 425.5px,#2c087a 426.5px,#110cb2 428.5px,#0d17b7 429.5px,#177bae 433.5px,#1fa1a2 436.5px,#1cba73 439.5px,#12b759 440.5px,#09a335 441.5px,#0b8c1a 442.5px,#0c820e 444.5px,#0b8413 449.5px,#067d5c 455.5px,#066277 457.5px,#06467e 458.5px,#061d84 459.5px,#0b0781 460.5px,#1f045b 461.5px,#29004e 462.5px,#2d0057 463.5px)"></i>
<i style="background:linear-gradient(#2d0057 424.5px,#2c0879 425.5px,#140baf 427.5px,#0d21b9 429.5px,#1881ad 433.5px,#1fa3a1 436.5px,#21b58a 438.5px,#1ebb6c 440.5px,#14b858 441.5px,#09a83b 442.5px,#0a8f24 443.5px,#0b8717 444.5px,#0b8514 445.5px,#088525 450.5px,#067f58 455.5px,#066776 457.5px,#06547b 458.5px,#080d84 460.5px,#17066d 461.5px,#26004a 462.5px,#2d0057 464.5px)"></i>
<i style="background:linear-gradient(#2d0057 422.5px,#2a0b8a 424.5px,#110db2 426.5px,#0d27b8 428.5px,#1883ad 432.5px,#1d98a8 434.5px,#21ac99 436.5px,#21bc6f 440.5px,#1bba59 442.5px,#13b746 443.5px,#0bab30 444.5px,#0b9926 445.5px,#088c2f 451.5px,#068546 454.5px,#067c61 456.5px,#065f78 458.5px,#06427e 459.5px,#061a85 460.5px,#0c0681 461.5px,#210460 462.5px,#2a0051 463.5px,#2d0057 464.5px)"></i>
<i style="background:linear-gradient(#2d0057 419.5px,#2e0461 420.5px,#290b8b 422.5px,#120cb1 424.5px,#0c22b8 426.5px,#1781ad 430.5px,#1ea1a1 433.5px,#21ba7d 437.5px,#21bc60 441.5px,#1fba3c 445.5px,#0cb42d 450.5px,#089631 452.5px,#068740 454.5px,#067569 457.5px,#064f7c 459.5px,#062883 460.5px,#090b83 461.5px,#29004f 463.5px,#2d0057 464.5px)"></i>
<i style="background:linear-gradient(#2d0057 413.5px,#2e0565 414.5px,#2c087c 415.5px,#260b91 419.5px,#170ba9 421.5px,#0d15b6 423.5px,#0c23b8 424.5px,#1783ac 428.5px,#1c9aa6 430.5px,#21b095 432.5px,#21bc75 435.5px,#27bc36 444.5px,#23ba2b 449.5px,#13b524 451.5px,#088f2d 453.5px,#067965 457.5px,#06557b 459.5px,#062c82 460.5px,#090b83 461.5px,#1d0664 462.5px,#29004f 463.5px,#2d0057 464.5px)"></i>
<i style="background:linear-gradient(#2d0057 409.5px,#2a0a87 410.5px,#1b0ba2 411.5px,#150bad 412.5px,#100fb3 418.5px,#0b1ab8 421.5px,#1684ac 426.5px,#1c9ba5 428.5px,#21b192 430.5px,#21bb78 432.5px,#23bc4f 436.5px,#28bc2f 441.5px,#25b828 449.5px,#13b419 451.5px,#0e9c15 452.5px,#0a8b1f 453.5px,#067b62 457.5px,#06587a 459.5px,#062f81 460.5px,#090c83 461.5px,#1d0663 462.5px,#29004f 463.5px,#2d0057 464.5px)"></i>
<i style="background:linear-gradient(#2d0057 405.5px,#2d066f 406.5px,#250b92 407.5px,#180ba8 408.5px,#100fb3 409.5px,#0b2bb6 413.5px,#0d33b6 418.5px,#0f44b4 420.5px,#1684ac 424.5px,#1b9aa6 426.5px,#20b094 428.5px,#21ba7b 430.5px,#28bc33 436.5px,#2eb927 447.5px,#24b620 449.5px,#15b215 450.5px,#0c8b10 452.5px,#0c8613 453.5px,#06834c 456.5px,#067c60 457.5px,#06597a 459.5px,#063081 460.5px,#090c83 461.5px,#1d0560 462.5px,#29004f 463.5px,#2d0057 464.5px)"></i>
<i style="background:linear-gradient(#2d0057 402.5px,#2b097e 404.5px,#180ba7 406.5px,#100fb3 407.5px,#0c17b7 408.5px,#0e51b1 412.5px,#1267af 418.5px,#1477ad 420.5px,#1b9aa6 424.5px,#1fac97 426.5px,#21bc77 429.5px,#27bb2f 435.5px,#29b828 441.5px,#3ebc26 445.5px,#2bb615 448.5px,#0c860c 451.5px,#0c8411 453.5px,#06834c 456.5px,#067c61 457.5px,#06597a 459.5px,#090b83 461.5px,#1f055d 462.5px,#290050 463.5px,#2d0057 464.5px)"></i>
<i style="background:linear-gradient(#2d0057 398.5px,#280a8c 403.5px,#160aab 405.5px,#0c16b7 407.5px,#0955ae 411.5px,#0d72ab 414.5px,#1a9ca3 422.5px,#1fb092 425.5px,#20bb6e 429.5px,#1dba5a 431.5px,#0eb42a 434.5px,#10b118 436.5px,#21b622 440.5px,#39ba1f 444.5px,#36b917 445.5px,#2cae0f 446.5px,#259c0e 447.5px,#1a880c 449.5px,#0c820e 452.5px,#0c8311 453.5px,#06824f 456.5px,#066a74 458.5px,#06567b 459.5px,#062b82 460.5px,#0a0982 461.5px,#210358 462.5px,#2a0051 463.5px,#2d0057 464.5px)"></i>
<i style="background:linear-gradient(#2d0057 402.5px,#22066d 405.5px,#0b0783 408.5px,#071086 410.5px,#064586 415.5px,#0870a4 417.5px,#0d7ea9 418.5px,#189ba3 422.5px,#1db28c 426.5px,#15b578 428.5px,#0cb56b 429.5px,#07944b 431.5px,#06883c 433.5px,#08882c 436.5px,#0c951a 438.5px,#10ad14 440.5px,#1db310 443.5px,#1d8c0c 446.5px,#0c810c 450.5px,#0c8310 452.5px,#0a831b 453.5px,#068054 456.5px,#066776 458.5px,#06517c 459.5px,#062583 460.5px,#0b0681 461.5px,#24014a 462.5px,#2d0057 464.5px)"></i>
<i style="background:linear-gradient(#2d0057 402.5px,#27004b 406.5px,#200458 408.5px,#0f067b 411.5px,#061386 414.5px,#064e81 418.5px,#078891 423.5px,#07957c 426.5px,#06845c 429.5px,#068543 436.5px,#078a34 438.5px,#0d9a19 440.5px,#0ea013 441.5px,#0ea011 442.5px,#10840c 446.5px,#0c8311 451.5px,#0a8319 452.5px,#067e59 456.5px,#066476 458.5px,#064b7d 459.5px,#061e84 460.5px,#10067a 461.5px,#26004a 462.5px,#2d0057 464.5px)"></i>
<i style="background:linear-gradient(#2d0057 405.5px,#23014c 411.5px,#0f067a 414.5px,#071086 416.5px,#061f84 417.5px,#06577c 421.5px,#066a78 424.5px,#067768 428.5px,#067d5f 435.5px,#069240 439.5px,#0ea115 442.5px,#0c850e 446.5px,#0c8412 450.5px,#067d5e 456.5px,#066178 458.5px,#06437e 459.5px,#061286 460.5px,#28004d 462.5px,#2d0057 463.5px)"></i>
<i style="background:linear-gradient(#2d0057 409.5px,#240045 414.5px,#140673 416.5px,#0b0781 417.5px,#080d84 418.5px,#06597a 424.5px,#066875 428.5px,#066975 434.5px,#06746c 436.5px,#079d59 439.5px,#08aa4e 440.5px,#0db228 442.5px,#0fae17 443.5px,#0ea113 444.5px,#0c8a10 446.5px,#0c8513 449.5px,#068347 454.5px,#067b63 456.5px,#065c79 458.5px,#090c84 460.5px,#1f0459 461.5px,#290050 462.5px,#2d0057 463.5px)"></i>
<i style="background:linear-gradient(#2d0057 412.5px,#230045 417.5px,#1f0353 418.5px,#130674 419.5px,#0b0781 420.5px,#061386 422.5px,#063d7f 425.5px,#064d7c 427.5px,#064c7d 432.5px,#06547b 434.5px,#06657a 436.5px,#06777e 437.5px,#079682 438.5px,#0caf7c 439.5px,#12b76b 440.5px,#17b845 442.5px,#15b51c 444.5px,#0e9913 446.5px,#0d8d12 448.5px,#088528 451.5px,#06834a 454.5px,#067767 456.5px,#06547b 458.5px,#062583 459.5px,#0e067d 460.5px,#250048 461.5px,#2d0057 463.5px)"></i>
<i style="background:linear-gradient(#2d0057 415.5px,#210040 421.5px,#18066c 422.5px,#0a0982 424.5px,#061c85 428.5px,#062583 433.5px,#063e83 435.5px,#075a8e 436.5px,#0982a5 437.5px,#1498a2 438.5px,#1cac94 439.5px,#1ebb6b 441.5px,#20b92a 444.5px,#10ae16 446.5px,#0ea114 447.5px,#0a891d 450.5px,#06834d 454.5px,#06726c 456.5px,#066177 457.5px,#06427e 458.5px,#061186 459.5px,#28004d 461.5px,#2d0057 462.5px)"></i>
<i style="background:linear-gradient(#2d0057 418.5px,#220042 424.5px,#1e055c 425.5px,#1b0668 426.5px,#0c0680 431.5px,#090b85 433.5px,#071191 434.5px,#0828b0 435.5px,#1574ae 437.5px,#1ea49f 439.5px,#21bb75 441.5px,#24bb32 444.5px,#0fad15 447.5px,#0d9213 449.5px,#0b891a 450.5px,#067a64 455.5px,#06587b 457.5px,#062b82 458.5px,#0b0881 459.5px,#22024e 460.5px,#2d0057 462.5px)"></i>
<i style="background:linear-gradient(#2d0057 422.5px,#230045 428.5px,#21024c 429.5px,#210564 431.5px,#1c099e 433.5px,#110cb1 434.5px,#0e17b7 435.5px,#1037b6 436.5px,#1988ac 438.5px,#1e9fa4 439.5px,#21b291 440.5px,#21bc64 442.5px,#26bb35 444.5px,#11b316 447.5px,#0d9113 449.5px,#088427 451.5px,#068347 453.5px,#06736b 455.5px,#066178 456.5px,#06417e 457.5px,#061186 458.5px,#26004a 460.5px,#2d0057 462.5px)"></i>
<i style="background:linear-gradient(#2d0057 430.5px,#2e0463 431.5px,#260b90 433.5px,#170ba9 434.5px,#0f15b6 435.5px,#1033b7 436.5px,#1a89ac 438.5px,#1fa0a3 439.5px,#21bc77 441.5px,#24bc4b 443.5px,#27bb32 444.5px,#12b418 447.5px,#0d8f13 449.5px,#088429 451.5px,#067b61 454.5px,#066b73 455.5px,#06567b 456.5px,#062982 457.5px,#0a0882 458.5px,#200353 459.5px,#2d0057 461.5px)"></i>
<i style="background:linear-gradient(#2d0057 428.5px,#2f035b 429.5px,#2b097e 431.5px,#190ba6 433.5px,#1010b4 434.5px,#0f24b9 435.5px,#187dae 437.5px,#1d96a9 438.5px,#21ac99 439.5px,#21bc6c 441.5px,#26bc40 443.5px,#28bb2e 444.5px,#26b92a 445.5px,#12b317 447.5px,#0d8d12 449.5px,#0b8619 450.5px,#068251 453.5px,#067766 454.5px,#066476 455.5px,#06457e 456.5px,#061486 457.5px,#150672 458.5px,#250048 459.5px,#2d0057 461.5px)"></i>
<i style="background:linear-gradient(#2d0057 424.5px,#2c087a 425.5px,#220b98 427.5px,#120cb2 430.5px,#0d16b7 432.5px,#0d24b8 433.5px,#1885ac 436.5px,#1c9aa8 437.5px,#21ae97 438.5px,#21bc6c 440.5px,#28bc30 443.5px,#24b827 445.5px,#1ab51d 446.5px,#0fac13 447.5px,#0d9611 448.5px,#0b8516 450.5px,#068152 453.5px,#067569 454.5px,#066078 455.5px,#080d84 457.5px,#1e055e 458.5px,#28004d 459.5px,#2d0057 460.5px)"></i>
<i style="background:linear-gradient(#2d0057 420.5px,#240b94 421.5px,#150bad 422.5px,#0f11b4 423.5px,#0e3fb4 427.5px,#1365b0 432.5px,#1a95a8 435.5px,#1ea59d 436.5px,#21bc78 438.5px,#26bc3c 441.5px,#28bb2f 442.5px,#26b929 444.5px,#1eb51f 445.5px,#10ad12 446.5px,#0e9710 447.5px,#0c8510 449.5px,#0b8414 450.5px,#068152 453.5px,#065f78 455.5px,#090a83 457.5px,#1f0352 458.5px,#2d0057 460.5px)"></i>
<i style="background:linear-gradient(#2d0057 415.5px,#2e0461 416.5px,#2b0981 417.5px,#110eb3 419.5px,#0b19b8 420.5px,#0e53b1 422.5px,#137eac 424.5px,#168ea8 427.5px,#1a97a7 432.5px,#21b290 435.5px,#21bc6d 437.5px,#28bc32 440.5px,#27b929 443.5px,#1eb620 444.5px,#0fa811 445.5px,#0d900f 446.5px,#0c8410 449.5px,#0b8416 450.5px,#068151 453.5px,#066178 455.5px,#090b83 457.5px,#1f0353 458.5px,#2d0057 460.5px)"></i>
<i style="background:linear-gradient(#2d0057 411.5px,#2a0a87 414.5px,#140baf 416.5px,#0b22b7 418.5px,#127fab 421.5px,#1aa09e 424.5px,#1caa97 426.5px,#1faf94 431.5px,#21b48b 433.5px,#21bc64 436.5px,#26bc3c 438.5px,#28bb2f 439.5px,#28b92b 441.5px,#1cb51e 443.5px,#0fa511 444.5px,#0d8d0f 445.5px,#0c8310 448.5px,#09841f 450.5px,#068153 453.5px,#066277 455.5px,#090c84 457.5px,#1f0354 458.5px,#290050 459.5px,#2d0057 460.5px)"></i>
<i style="background:linear-gradient(#2d0057 404.5px,#2c0774 405.5px,#280a8c 407.5px,#120bb1 413.5px,#0b1eb8 416.5px,#1284aa 420.5px,#1aa798 423.5px,#1ab288 426.5px,#21b97f 432.5px,#21bc5f 435.5px,#27bc39 437.5px,#28bb2e 438.5px,#27b929 440.5px,#17b41a 442.5px,#0d8d0f 444.5px,#0c8412 447.5px,#07842d 450.5px,#068056 453.5px,#066377 455.5px,#063f7f 456.5px,#080e84 457.5px,#1e0458 458.5px,#29004f 459.5px,#2d0057 460.5px)"></i>
<i style="background:linear-gradient(#2d0057 403.5px,#28098a 405.5px,#200896 406.5px,#1608a5 408.5px,#1009b0 411.5px,#0815a8 416.5px,#065683 420.5px,#06746b 425.5px,#068767 430.5px,#10b377 432.5px,#1ebb69 434.5px,#22bb49 436.5px,#25bb36 437.5px,#21b826 439.5px,#10b013 441.5px,#0e9d11 442.5px,#0c8810 444.5px,#088427 448.5px,#067f58 453.5px,#066476 455.5px,#06457e 456.5px,#071086 457.5px,#1e055f 458.5px,#29004f 459.5px,#2d0057 460.5px)"></i>
<i style="background:linear-gradient(#2d0057 404.5px,#28004c 408.5px,#21066b 410.5px,#19066b 414.5px,#0c0680 417.5px,#070f85 419.5px,#06507c 424.5px,#066c72 430.5px,#068661 433.5px,#07a755 435.5px,#0cb436 437.5px,#0faa16 439.5px,#0d9612 441.5px,#0c8811 444.5px,#068543 451.5px,#067866 454.5px,#066875 455.5px,#064d7c 456.5px,#061586 457.5px,#28004e 459.5px,#2d0057 460.5px)"></i>
<i style="background:linear-gradient(#2d0057 406.5px,#220149 417.5px,#0f067b 421.5px,#061785 425.5px,#066f70 433.5px,#068c4e 436.5px,#0b9424 439.5px,#0d9013 441.5px,#0c8914 444.5px,#068935 448.5px,#068943 451.5px,#067c61 454.5px,#06567b 456.5px,#061d84 457.5px,#19066a 458.5px,#28004d 459.5px,#2d0057 460.5px)"></i>
<i style="background:linear-gradient(#2d0057 413.5px,#220043 422.5px,#0f067c 427.5px,#061885 430.5px,#06587b 433.5px,#06736f 435.5px,#068a55 437.5px,#0a9022 441.5px,#0b8d1a 443.5px,#0b8a1b 444.5px,#08892b 446.5px,#079740 450.5px,#06864c 453.5px,#06716d 455.5px,#065b7a 456.5px,#062383 457.5px,#1a0669 458.5px,#28004d 459.5px,#2d0057 460.5px)"></i>
<i style="background:linear-gradient(#2d0057 419.5px,#230044 427.5px,#1d0663 429.5px,#0b0882 431.5px,#071086 432.5px,#06747e 436.5px,#079763 438.5px,#089736 441.5px,#0a8e23 444.5px,#088f32 446.5px,#08a740 449.5px,#08a640 450.5px,#068545 453.5px,#067569 455.5px,#065d79 456.5px,#062683 457.5px,#1c0666 458.5px,#28004d 459.5px,#2d0057 460.5px)"></i>
<i style="background:linear-gradient(#2d0057 424.5px,#23014a 430.5px,#210566 431.5px,#0c0da5 433.5px,#0823b4 434.5px,#0e7da9 436.5px,#1094a3 437.5px,#11a88f 438.5px,#09b461 440.5px,#08ad4f 441.5px,#09992e 444.5px,#089634 445.5px,#0bb544 448.5px,#0db542 449.5px,#0ab23d 450.5px,#068b38 452.5px,#068440 453.5px,#067767 455.5px,#065f78 456.5px,#062683 457.5px,#1e055f 458.5px,#28004e 459.5px,#2d0057 460.5px)"></i>
<i style="background:linear-gradient(#2d0057 430.5px,#2e045f 431.5px,#2b0a83 432.5px,#1a0aa4 433.5px,#0f14b6 434.5px,#1036b7 435.5px,#1566b1 436.5px,#1a8bab 437.5px,#1eb18f 439.5px,#16b868 441.5px,#0bb43d 444.5px,#09b343 445.5px,#15b84d 447.5px,#19b94b 448.5px,#11b63a 450.5px,#099e31 451.5px,#078832 452.5px,#06834e 454.5px,#067866 455.5px,#065e78 456.5px,#062383 457.5px,#1f0455 458.5px,#29004f 459.5px,#2d0057 460.5px)"></i>
<i style="background:linear-gradient(#2d0057 430.5px,#260b91 432.5px,#140bae 433.5px,#0e17b7 434.5px,#113ab6 435.5px,#1a89ac 437.5px,#21af95 439.5px,#1fbb73 441.5px,#1bb94d 444.5px,#1eba51 446.5px,#22bb47 448.5px,#19b836 450.5px,#0ba02a 451.5px,#08872d 452.5px,#06834e 454.5px,#067767 455.5px,#065c79 456.5px,#061c85 457.5px,#200148 458.5px,#2d0057 460.5px)"></i>
<i style="background:linear-gradient(#2d0057 428.5px,#260b90 430.5px,#190ba6 431.5px,#0d1ab9 433.5px,#1780ad 436.5px,#1b93a9 437.5px,#21b292 439.5px,#21bb73 441.5px,#22bb4c 444.5px,#27bb36 448.5px,#20b92a 450.5px,#0da11f 451.5px,#088627 452.5px,#068250 454.5px,#06736b 455.5px,#06567b 456.5px,#061186 457.5px,#230043 458.5px,#2b0052 459.5px,#2d0057 460.5px)"></i>
<i style="background:linear-gradient(#2d0057 425.5px,#260b90 427.5px,#180ba7 428.5px,#0c17b7 430.5px,#0d29b7 431.5px,#1886ac 435.5px,#21ae97 438.5px,#21ba7b 440.5px,#25bc40 444.5px,#27bc38 445.5px,#28bb2f 446.5px,#27b92b 449.5px,#21b825 450.5px,#0e9b14 451.5px,#09851f 452.5px,#068153 454.5px,#066f6f 455.5px,#06487d 456.5px,#090b83 457.5px,#240047 458.5px,#2b0054 459.5px,#2d0057 460.5px)"></i>
<i style="background:linear-gradient(#2d0057 421.5px,#2b0981 423.5px,#170baa 425.5px,#0b19b8 427.5px,#1262b0 430.5px,#1683ac 432.5px,#1a95a8 434.5px,#21b095 437.5px,#21bc5a 442.5px,#28bc30 444.5px,#30b927 449.5px,#1eb41b 450.5px,#0d8d0f 451.5px,#0b8415 452.5px,#068055 454.5px,#066a74 455.5px,#063a80 456.5px,#0e067d 457.5px,#26004a 458.5px,#2d0057 459.5px)"></i>
<i style="background:linear-gradient(#2d0057 417.5px,#2c087a 418.5px,#290b8c 419.5px,#120cb2 422.5px,#0b19b8 424.5px,#1580ac 428.5px,#1c9da4 431.5px,#21b193 435.5px,#21bc77 439.5px,#21bc62 441.5px,#28bb2d 444.5px,#2fb928 446.5px,#45be27 448.5px,#41bc20 449.5px,#24a10e 450.5px,#0e830c 451.5px,#0c8310 452.5px,#067f56 454.5px,#066576 455.5px,#062a82 456.5px,#19066a 457.5px,#28004d 458.5px,#2d0057 459.5px)"></i>
<i style="background:linear-gradient(#2d0057 413.5px,#2b0982 415.5px,#120cb2 418.5px,#0b1fb8 421.5px,#0e46b3 423.5px,#1478ad 425.5px,#1a97a7 427.5px,#1fad96 429.5px,#21b784 432.5px,#21bb6f 439.5px,#20bb5e 441.5px,#26bb35 443.5px,#27ba2b 444.5px,#27b827 445.5px,#44bd23 447.5px,#47bc1a 448.5px,#28880c 450.5px,#0c8210 452.5px,#067e5a 454.5px,#066078 455.5px,#061a85 456.5px,#1f024e 457.5px,#2d0057 459.5px)"></i>
<i style="background:linear-gradient(#2d0057 410.5px,#2e0465 411.5px,#270a8f 413.5px,#130aaf 415.5px,#0b1cb8 418.5px,#0d4eb1 421.5px,#127bac 423.5px,#1899a5 425.5px,#1fb28d 427.5px,#21bc6e 430.5px,#21bc69 433.5px,#20bb6d 437.5px,#20bb63 440.5px,#20bb5b 441.5px,#23b929 444.5px,#23b517 446.5px,#2ba70f 447.5px,#2f900d 448.5px,#2e880d 449.5px,#0c8310 452.5px,#068338 453.5px,#067c60 454.5px,#065a7a 455.5px,#070f85 456.5px,#220042 457.5px,#2a0052 458.5px,#2d0057 459.5px)"></i>
<i style="background:linear-gradient(#2d0057 410.5px,#25098f 413.5px,#1208ad 415.5px,#0814a5 418.5px,#071fa7 419.5px,#0833b1 420.5px,#127fab 423.5px,#1690a7 424.5px,#1eb090 426.5px,#21bc72 428.5px,#20bb5b 431.5px,#1dba64 438.5px,#1ebb5f 440.5px,#20bb4b 442.5px,#1bb722 444.5px,#10ad13 445.5px,#0d920e 446.5px,#16870c 447.5px,#1f840c 449.5px,#0c810d 451.5px,#0b8317 452.5px,#068341 453.5px,#067667 454.5px,#064e7c 455.5px,#0a0a82 456.5px,#250047 457.5px,#2b0054 458.5px,#2d0057 459.5px)"></i>
<i style="background:linear-gradient(#2d0057 412.5px,#2a0051 413.5px,#0c0682 419.5px,#07118b 421.5px,#062691 422.5px,#0a77a9 424.5px,#108ea5 425.5px,#17b089 427.5px,#0db65a 430.5px,#08aa4c 432.5px,#07a84e 434.5px,#08af54 435.5px,#19b961 438.5px,#1ebb56 441.5px,#1db938 443.5px,#12b520 444.5px,#0e9913 445.5px,#0c8810 446.5px,#0c810c 448.5px,#0c8311 451.5px,#06824f 453.5px,#066d71 454.5px,#063b7f 455.5px,#0f067b 456.5px,#26004a 457.5px,#2d0057 458.5px)"></i>
<i style="background:linear-gradient(#2d0057 413.5px,#26004a 417.5px,#23014d 418.5px,#1f0667 420.5px,#0d089b 422.5px,#0915b3 423.5px,#0a3bb3 424.5px,#0d67ad 425.5px,#0f86a7 426.5px,#0ca78c 428.5px,#07a666 430.5px,#079c55 432.5px,#07a157 434.5px,#08ab5d 435.5px,#15b866 437.5px,#1fbb53 441.5px,#1bb837 443.5px,#0eb124 444.5px,#0c921a 445.5px,#0c8713 446.5px,#0c8311 449.5px,#0a8319 450.5px,#07832d 451.5px,#067b62 453.5px,#066078 454.5px,#062383 455.5px,#1a0669 456.5px,#28004d 457.5px,#2d0057 458.5px)"></i>
<i style="background:linear-gradient(#2d0057 420.5px,#2d0569 421.5px,#2a0a87 422.5px,#190aa5 423.5px,#1016b6 424.5px,#1136b7 425.5px,#1985ad 427.5px,#18ae8f 430.5px,#11b378 433.5px,#1dba71 437.5px,#20bb5b 440.5px,#1cb835 443.5px,#0db026 444.5px,#0b9221 445.5px,#0a8720 446.5px,#08832a 449.5px,#068345 451.5px,#067e5a 452.5px,#066c71 453.5px,#064b7d 454.5px,#070e85 455.5px,#1f0350 456.5px,#2d0057 458.5px)"></i>
<i style="background:linear-gradient(#2d0057 417.5px,#2e0568 419.5px,#2b0a86 421.5px,#120cb1 423.5px,#0e1cb9 424.5px,#1a86ad 427.5px,#21b193 430.5px,#20b782 432.5px,#20bb6f 437.5px,#21bb56 440.5px,#22bb3e 442.5px,#0db126 444.5px,#0a9525 445.5px,#098827 446.5px,#06833c 449.5px,#067f57 451.5px,#065e79 453.5px,#062e82 454.5px,#0d067e 455.5px,#250047 456.5px,#2d0057 458.5px)"></i>
<i style="background:linear-gradient(#2d0057 411.5px,#2b0a86 413.5px,#150bad 416.5px,#0b19b8 422.5px,#0d31b6 423.5px,#1476ae 425.5px,#1b97a8 427.5px,#21b290 429.5px,#21bc72 432.5px,#21bc68 436.5px,#22bc55 439.5px,#23bb36 442.5px,#1cb82b 443.5px,#0eb224 444.5px,#0b9825 445.5px,#088929 446.5px,#06843a 448.5px,#067965 451.5px,#066775 452.5px,#064a7d 453.5px,#061486 454.5px,#27004c 456.5px,#2d0057 457.5px)"></i>
<i style="background:linear-gradient(#2d0057 406.5px,#2a0882 409.5px,#110cb2 412.5px,#0b19b8 414.5px,#0a37b4 417.5px,#0b44b2 421.5px,#0c4fb1 422.5px,#1382aa 424.5px,#1999a5 426.5px,#1eb191 428.5px,#21bc75 430.5px,#20bb64 432.5px,#22bc50 438.5px,#23ba2c 442.5px,#0eae1e 444.5px,#0b9621 445.5px,#098927 446.5px,#067d5d 450.5px,#065d79 452.5px,#090b83 454.5px,#1f0354 455.5px,#29004f 456.5px,#2d0057 457.5px)"></i>
<i style="background:linear-gradient(#2d0057 411.5px,#26046a 412.5px,#0c0685 415.5px,#06128f 419.5px,#071998 420.5px,#0824af 421.5px,#0a33b4 422.5px,#0e4fb1 423.5px,#1279ac 424.5px,#1589a9 425.5px,#1996a7 427.5px,#1eb190 429.5px,#1cba68 432.5px,#23bb4b 438.5px,#24ba2c 441.5px,#14b51b 443.5px,#0ea317 444.5px,#098726 446.5px,#067965 450.5px,#06517c 452.5px,#062483 453.5px,#0c0681 454.5px,#22024d 455.5px,#2d0057 457.5px)"></i>
<i style="background:linear-gradient(#2d0057 410.5px,#250047 415.5px,#160670 418.5px,#080e8a 422.5px,#0722a0 423.5px,#0856ae 424.5px,#0a72aa 425.5px,#1794a7 428.5px,#18b08a 430.5px,#10b76a 432.5px,#22bb4e 437.5px,#23ba2a 440.5px,#14b51b 442.5px,#0d9714 444.5px,#088626 446.5px,#068346 448.5px,#06736b 450.5px,#066178 451.5px,#06437e 452.5px,#061785 453.5px,#100679 454.5px,#24014b 455.5px,#2d0057 457.5px)"></i>
<i style="background:linear-gradient(#2d0057 413.5px,#250047 419.5px,#22024e 420.5px,#0b0a8c 423.5px,#0720a3 424.5px,#0945b1 425.5px,#1480ac 427.5px,#1293a4 429.5px,#0ea392 430.5px,#08ad7c 431.5px,#08ac71 432.5px,#18b96b 434.5px,#1fbb59 436.5px,#1fb929 439.5px,#10b218 441.5px,#0e9a14 443.5px,#0a891d 445.5px,#067d5e 449.5px,#065c79 451.5px,#061086 453.5px,#130675 454.5px,#24014c 455.5px,#2d0057 457.5px)"></i>
<i style="background:linear-gradient(#2d0057 417.5px,#250048 422.5px,#100ab1 424.5px,#0b1ab9 425.5px,#1480ab 427.5px,#1389a8 428.5px,#0c86a6 429.5px,#088d99 430.5px,#079582 431.5px,#08a080 432.5px,#10af80 433.5px,#1ab876 434.5px,#1ebb5a 436.5px,#1eba44 437.5px,#0eb429 439.5px,#0da724 440.5px,#0c951b 443.5px,#0a8922 445.5px,#07862d 446.5px,#067c60 449.5px,#065a7a 451.5px,#070f85 453.5px,#140673 454.5px,#25014d 455.5px,#2d0057 457.5px)"></i>
<i style="background:linear-gradient(#2d0057 405.5px,#2e0568 406.5px,#290a8c 407.5px,#2d0057 408.5px,#2e0258 423.5px,#240a94 424.5px,#0f11b4 425.5px,#0e3cb5 426.5px,#1276ad 427.5px,#1283aa 428.5px,#0b7aa9 429.5px,#08799e 430.5px,#078394 431.5px,#099898 432.5px,#17ac91 433.5px,#1cba70 435.5px,#09b23e 438.5px,#09a335 439.5px,#0b9624 443.5px,#098b26 445.5px,#07872f 446.5px,#067d5d 449.5px,#065b79 451.5px,#071085 453.5px,#140673 454.5px,#24014f 455.5px,#2d0057 457.5px)"></i>
<i style="background:linear-gradient(#2d0057 405.5px,#250a92 406.5px,#120ab0 407.5px,#2a0052 408.5px,#2f035b 411.5px,#2c0877 412.5px,#2f0259 413.5px,#2f0259 423.5px,#2c0878 424.5px,#1010b3 425.5px,#0c1cb9 426.5px,#1154b2 427.5px,#1371ae 428.5px,#1161b0 429.5px,#0d67ad 430.5px,#118aa6 432.5px,#19a49a 433.5px,#1bb18a 434.5px,#14b862 436.5px,#07a849 438.5px,#0a9429 444.5px,#07892f 446.5px,#067f59 449.5px,#065f78 451.5px,#061186 453.5px,#120676 454.5px,#240150 455.5px,#2d0057 457.5px)"></i>
<i style="background:linear-gradient(#2d0057 405.5px,#1c0aa0 406.5px,#0c0c9d 407.5px,#28004e 408.5px,#2f0259 409.5px,#2f0359 410.5px,#190ba5 411.5px,#100fb3 412.5px,#1e0a9c 413.5px,#2b0053 414.5px,#2f035d 424.5px,#0e14b6 425.5px,#1010b4 426.5px,#1037b6 427.5px,#146eaf 428.5px,#145ab3 429.5px,#1264b0 431.5px,#179ca1 433.5px,#15aa91 434.5px,#0cad81 435.5px,#08b267 436.5px,#07a14d 438.5px,#098f2b 445.5px,#068738 447.5px,#068153 449.5px,#066477 451.5px,#06467e 452.5px,#061885 453.5px,#10067a 454.5px,#230251 455.5px,#2d0057 457.5px)"></i>
<i style="background:linear-gradient(#2d0057 405.5px,#1f0998 406.5px,#0c088c 407.5px,#28004e 408.5px,#2f0359 409.5px,#2a0a87 410.5px,#0d15b6 411.5px,#0a24b7 412.5px,#0a0c90 413.5px,#250151 414.5px,#2d0057 416.5px,#2f0359 424.5px,#0b1ab8 425.5px,#110fb3 426.5px,#1148b4 427.5px,#1588aa 428.5px,#1676af 429.5px,#1579ae 430.5px,#1263b0 431.5px,#1262b0 432.5px,#1290a5 433.5px,#089492 434.5px,#07877a 435.5px,#079351 437.5px,#088d30 444.5px,#07882e 446.5px,#06834f 449.5px,#067b62 450.5px,#066975 451.5px,#06507c 452.5px,#062084 453.5px,#0d067e 454.5px,#230252 455.5px,#2d0057 457.5px)"></i>
<i style="background:linear-gradient(#2d0057 405.5px,#19077f 407.5px,#2c0055 408.5px,#2f0359 409.5px,#1d0b9f 410.5px,#0b19b8 411.5px,#06228f 412.5px,#080d84 413.5px,#230256 414.5px,#2d0057 416.5px,#2f0359 424.5px,#0b28b6 425.5px,#0e16b6 426.5px,#1270ae 427.5px,#179ca0 428.5px,#188fa9 429.5px,#158da8 430.5px,#0c4fb1 432.5px,#087ba3 433.5px,#066c81 434.5px,#06697a 435.5px,#06864f 438.5px,#068532 446.5px,#06844c 449.5px,#067d5e 450.5px,#06577b 452.5px,#062683 453.5px,#0c0681 454.5px,#23014f 455.5px,#2d0057 457.5px)"></i>
<i style="background:linear-gradient(#2d0057 405.5px,#280156 407.5px,#2f0258 408.5px,#2b087c 409.5px,#160bab 410.5px,#0a0e9e 411.5px,#071085 412.5px,#0c0681 413.5px,#26004a 414.5px,#2d0057 416.5px,#2f0359 424.5px,#0b28b6 425.5px,#0b1ab8 426.5px,#1280ab 427.5px,#17a499 428.5px,#1698a4 429.5px,#0890a0 430.5px,#076891 431.5px,#07409b 432.5px,#07538c 433.5px,#06537f 434.5px,#06527d 435.5px,#066e74 437.5px,#067f5c 439.5px,#06843a 446.5px,#068441 448.5px,#06834d 449.5px,#067d5e 450.5px,#06597a 452.5px,#062883 453.5px,#0c0681 454.5px,#250048 455.5px,#2d0057 457.5px)"></i>
<i style="background:linear-gradient(#2d0057 408.5px,#1e0b9d 409.5px,#110bb1 410.5px,#110678 411.5px,#130675 412.5px,#29004f 414.5px,#2f0258 417.5px,#2f0359 424.5px,#0d15b6 425.5px,#0f10b4 426.5px,#0f66ae 427.5px,#1396a4 428.5px,#088499 429.5px,#066c7c 430.5px,#063989 432.5px,#063e86 433.5px,#063084 435.5px,#065b82 437.5px,#06766c 440.5px,#068446 446.5px,#068349 448.5px,#068153 449.5px,#067b63 450.5px,#06547b 452.5px,#062284 453.5px,#0f067b 454.5px,#26004a 455.5px,#2d0057 456.5px)"></i>
<i style="background:linear-gradient(#2d0057 408.5px,#150aad 409.5px,#0c0994 410.5px,#1e055d 411.5px,#250047 412.5px,#2d0057 415.5px,#2f0359 418.5px,#2b0980 419.5px,#2f0259 420.5px,#2f0258 424.5px,#1f0998 425.5px,#2a077f 426.5px,#0a1bb8 427.5px,#0d71ab 428.5px,#07648c 429.5px,#065e7b 430.5px,#063487 432.5px,#063489 433.5px,#06208b 434.5px,#071b97 435.5px,#0835b2 436.5px,#1170ad 438.5px,#0d81a8 439.5px,#06757c 441.5px,#067f5c 445.5px,#068153 447.5px,#067c5f 449.5px,#066377 451.5px,#06467e 452.5px,#061486 453.5px,#28004d 455.5px,#2d0057 456.5px)"></i>
<i style="background:linear-gradient(#2d0057 408.5px,#150aac 409.5px,#0c0787 410.5px,#240048 411.5px,#2b0054 413.5px,#2f0359 417.5px,#290b8b 418.5px,#0f11b4 419.5px,#2e0258 420.5px,#2d0057 425.5px,#2e0158 426.5px,#1c0aa1 427.5px,#0c40b3 428.5px,#075595 429.5px,#064f7f 430.5px,#063385 431.5px,#072e9d 433.5px,#0819b0 434.5px,#0c1ab9 435.5px,#0f2eb7 436.5px,#134bb4 437.5px,#1773af 438.5px,#198aab 439.5px,#09929e 442.5px,#078179 444.5px,#067c63 446.5px,#06746a 449.5px,#06597a 451.5px,#090b83 453.5px,#1f045b 454.5px,#290050 455.5px,#2d0057 456.5px)"></i>
<i style="background:linear-gradient(#2d0057 408.5px,#1e0a9d 409.5px,#150789 410.5px,#250048 411.5px,#2d0056 413.5px,#2f0359 417.5px,#110db2 418.5px,#0b33b5 419.5px,#240779 420.5px,#2a0050 421.5px,#2f0259 426.5px,#290a8b 427.5px,#0a2db6 428.5px,#0753a1 429.5px,#064387 430.5px,#0729a1 431.5px,#0c2eb6 432.5px,#0d1cb9 434.5px,#0e21b9 435.5px,#1039b6 436.5px,#145bb2 437.5px,#188aab 438.5px,#1c9da3 439.5px,#1c96a9 441.5px,#109e99 444.5px,#067c6d 446.5px,#067769 447.5px,#065f78 450.5px,#06457e 451.5px,#061b85 452.5px,#0f067a 453.5px,#240047 454.5px,#2d0057 456.5px)"></i>
<i style="background:linear-gradient(#2d0057 408.5px,#1f0b9d 409.5px,#1d0a9e 410.5px,#29004f 411.5px,#2e0158 413.5px,#2f0359 417.5px,#0c17b7 418.5px,#0a51af 419.5px,#120677 420.5px,#28004d 421.5px,#2d0056 422.5px,#2f0359 426.5px,#2d0569 427.5px,#0d15b6 428.5px,#093cb3 429.5px,#0e2fb7 431.5px,#105eb0 432.5px,#103ab6 433.5px,#0f28b8 434.5px,#1355b3 436.5px,#177bae 437.5px,#1c9da4 438.5px,#1fb192 439.5px,#20a49f 441.5px,#1eaa98 444.5px,#15a893 445.5px,#07917e 446.5px,#06786d 447.5px,#06577b 450.5px,#070e85 452.5px,#27004b 454.5px,#2d0057 455.5px)"></i>
<i style="background:linear-gradient(#2d0057 407.5px,#290b8b 408.5px,#0f12b4 409.5px,#0f11b4 410.5px,#28098b 411.5px,#2f0258 412.5px,#2f0359 417.5px,#0b19b8 418.5px,#074891 419.5px,#0f067a 420.5px,#27004c 421.5px,#2c0056 422.5px,#2f0359 427.5px,#1e0b9e 428.5px,#0f11b4 429.5px,#1014b5 430.5px,#0f3eb5 431.5px,#1287a8 432.5px,#125db1 433.5px,#1247b5 434.5px,#1b91aa 437.5px,#1fad97 438.5px,#21b882 439.5px,#21b38f 441.5px,#20b48b 444.5px,#1db28c 445.5px,#10ac89 446.5px,#078674 447.5px,#067171 448.5px,#06517c 450.5px,#090b83 452.5px,#1e055c 453.5px,#28004e 454.5px,#2d0057 455.5px)"></i>
<i style="background:linear-gradient(#2d0057 407.5px,#110db2 408.5px,#0b30b5 409.5px,#0a2fb5 410.5px,#0f10b3 411.5px,#2b097f 412.5px,#2f0359 413.5px,#2f0359 414.5px,#2e0565 415.5px,#2f0359 416.5px,#2f0359 417.5px,#0d14b6 418.5px,#063481 419.5px,#150670 420.5px,#28004d 421.5px,#2d0057 422.5px,#2f0359 427.5px,#2a0b8a 428.5px,#170ba9 429.5px,#1212b4 430.5px,#113ab6 431.5px,#147fac 432.5px,#166fb0 433.5px,#1776af 434.5px,#1c95a9 436.5px,#1fa69d 437.5px,#21b687 438.5px,#21bc76 439.5px,#21bc76 443.5px,#1ab57f 446.5px,#08a77f 447.5px,#067c71 448.5px,#06567b 450.5px,#0a0a83 452.5px,#1e0457 453.5px,#29004f 454.5px,#2d0057 455.5px)"></i>
<i style="background:linear-gradient(#2d0057 406.5px,#2b097d 407.5px,#0f12b5 408.5px,#0a3ab3 409.5px,#083bb2 410.5px,#091bb8 411.5px,#110db2 412.5px,#270b8e 413.5px,#140bae 414.5px,#1010b3 415.5px,#2d0568 416.5px,#2f0258 417.5px,#1408a7 418.5px,#061786 419.5px,#1f0458 420.5px,#29004f 421.5px,#2f0259 422.5px,#2f0359 425.5px,#2c0777 426.5px,#120cb2 428.5px,#0e18b7 429.5px,#1032b7 430.5px,#1881ae 432.5px,#1a8eab 433.5px,#21ae97 436.5px,#21bc67 439.5px,#21bc61 443.5px,#1dba6f 446.5px,#12b574 447.5px,#079370 448.5px,#067370 449.5px,#065f79 450.5px,#080d84 452.5px,#1e045a 453.5px,#29004f 454.5px,#2d0057 455.5px)"></i>
<i style="background:linear-gradient(#2d0057 404.5px,#250b92 405.5px,#190ba6 406.5px,#1f0b9b 407.5px,#120ab0 408.5px,#07128e 409.5px,#06198a 410.5px,#0a19b8 412.5px,#100fb3 413.5px,#0a22b7 414.5px,#0a35b4 415.5px,#11078d 416.5px,#2a0051 417.5px,#240569 418.5px,#0d0680 419.5px,#240045 420.5px,#2e0258 421.5px,#2f0359 423.5px,#2c0775 424.5px,#110db2 426.5px,#0c18b8 427.5px,#1679ae 430.5px,#20ae96 433.5px,#21ba7a 436.5px,#22bc54 439.5px,#25bc44 442.5px,#24bc47 443.5px,#1ebb5a 446.5px,#15b860 447.5px,#07a260 448.5px,#068064 449.5px,#064b7d 451.5px,#061186 452.5px,#1d0662 453.5px,#28004e 454.5px,#2d0057 455.5px)"></i>
<i style="background:linear-gradient(#2d0057 403.5px,#2b0981 404.5px,#0d15b6 405.5px,#0b21b8 406.5px,#0f10b3 407.5px,#1a066c 408.5px,#18066d 409.5px,#0c0681 410.5px,#071ba4 412.5px,#0d10b4 413.5px,#0820b5 414.5px,#062587 415.5px,#110678 416.5px,#28004d 417.5px,#2e0158 418.5px,#290783 419.5px,#2f0258 420.5px,#2f0359 421.5px,#250b92 423.5px,#130baf 424.5px,#0d16b7 425.5px,#0c33b5 426.5px,#147dad 428.5px,#1c9fa2 430.5px,#20af94 431.5px,#21bc73 433.5px,#21bc60 436.5px,#25bc44 438.5px,#27bc35 440.5px,#28bb2e 442.5px,#26bb33 445.5px,#22ba3a 446.5px,#12b641 447.5px,#079644 448.5px,#068351 449.5px,#067569 450.5px,#065b7a 451.5px,#061e84 452.5px,#1b0667 453.5px,#28004e 454.5px,#2d0057 455.5px)"></i>
<i style="background:linear-gradient(#2d0057 403.5px,#180ba8 404.5px,#0b39b4 405.5px,#0b4eb0 406.5px,#061890 407.5px,#1c0665 408.5px,#210040 409.5px,#1f0456 410.5px,#0b0987 411.5px,#080f89 412.5px,#0d0683 413.5px,#080e85 415.5px,#1e0662 416.5px,#2d0057 417.5px,#2e035f 418.5px,#2b097e 419.5px,#2b0982 420.5px,#160baa 422.5px,#0b22b7 424.5px,#126baf 426.5px,#1688aa 427.5px,#1eaa98 429.5px,#21bc76 431.5px,#21bc62 432.5px,#27bc37 437.5px,#28bb2f 438.5px,#27b92a 444.5px,#1db722 446.5px,#0ea219 447.5px,#08872c 448.5px,#067c61 450.5px,#066178 451.5px,#062483 452.5px,#1b0667 453.5px,#28004e 454.5px,#2d0057 455.5px)"></i>
<i style="background:linear-gradient(#2d0057 403.5px,#110eb2 404.5px,#0b4db0 405.5px,#0960ac 406.5px,#062483 407.5px,#18066c 408.5px,#250048 409.5px,#250048 410.5px,#150675 411.5px,#0b0782 412.5px,#120677 413.5px,#0b0882 415.5px,#1c0668 416.5px,#290884 417.5px,#190aa5 419.5px,#120bb1 420.5px,#0b19b8 422.5px,#0b31b5 423.5px,#1170ad 425.5px,#199aa4 427.5px,#1dab96 428.5px,#21bc76 430.5px,#24bc4b 432.5px,#27bc34 435.5px,#28b829 439.5px,#38bb28 442.5px,#30b925 444.5px,#22b51e 445.5px,#0fa310 446.5px,#0c8710 447.5px,#0a841e 448.5px,#067d5d 450.5px,#066177 451.5px,#062184 452.5px,#1e0560 453.5px,#29004f 454.5px,#2d0057 455.5px)"></i>
<i style="background:linear-gradient(#2d0057 403.5px,#120cb1 404.5px,#0a46b1 405.5px,#06427f 406.5px,#062084 407.5px,#1b0667 408.5px,#28004d 409.5px,#250257 411.5px,#1e066b 412.5px,#1c066a 413.5px,#100679 415.5px,#170670 416.5px,#1709a7 418.5px,#110ab1 419.5px,#0a21b7 422.5px,#1488a9 426.5px,#1899a5 427.5px,#20b489 429.5px,#20bb64 431.5px,#21bb4a 432.5px,#25bb31 435.5px,#28b829 438.5px,#4abf27 442.5px,#37b91b 444.5px,#20a20e 445.5px,#10860c 446.5px,#0c820e 447.5px,#0a831b 448.5px,#067c5f 450.5px,#065e79 451.5px,#061785 452.5px,#1f0352 453.5px,#2d0057 455.5px)"></i>
<i style="background:linear-gradient(#2d0057 403.5px,#200a99 404.5px,#061e92 405.5px,#062a82 406.5px,#070e85 407.5px,#220251 408.5px,#2c0054 410.5px,#27004b 414.5px,#20076f 418.5px,#0a0a87 422.5px,#061f8a 424.5px,#078492 428.5px,#08a27b 430.5px,#08ae65 431.5px,#07a247 432.5px,#079941 433.5px,#08a43c 434.5px,#12b634 435.5px,#20b92b 436.5px,#26b827 438.5px,#41bd27 440.5px,#50bf23 442.5px,#45bb17 443.5px,#20890c 445.5px,#0c820e 447.5px,#09831f 448.5px,#068342 449.5px,#067965 450.5px,#06587a 451.5px,#070f85 452.5px,#220145 453.5px,#2d0057 455.5px)"></i>
<i style="background:linear-gradient(#2d0057 403.5px,#2c0261 404.5px,#0b0782 405.5px,#090c83 406.5px,#140673 407.5px,#27004b 408.5px,#2d0057 410.5px,#27004b 419.5px,#1d0663 422.5px,#0b0681 424.5px,#061e85 426.5px,#065b7b 428.5px,#066f73 430.5px,#067e65 431.5px,#06854f 432.5px,#068a45 434.5px,#07973e 435.5px,#0caf30 436.5px,#18b620 437.5px,#3eba19 441.5px,#40b511 442.5px,#36990e 443.5px,#288a0c 444.5px,#0d810c 446.5px,#0c8210 447.5px,#068349 449.5px,#06736b 450.5px,#064c7d 451.5px,#090a83 452.5px,#240045 453.5px,#2b0053 454.5px,#2d0057 455.5px)"></i>
<i style="background:linear-gradient(#2d0057 403.5px,#230254 405.5px,#200562 406.5px,#260049 407.5px,#2d0056 409.5px,#2d0057 414.5px,#250048 423.5px,#21024e 424.5px,#1d0663 425.5px,#0f067b 426.5px,#070f86 427.5px,#06487d 429.5px,#066776 431.5px,#067867 432.5px,#068057 434.5px,#068d3d 436.5px,#0ea014 438.5px,#0fa110 439.5px,#2a920d 442.5px,#21850c 444.5px,#0c810d 446.5px,#0c8311 447.5px,#068251 449.5px,#066d71 450.5px,#063f7f 451.5px,#0c0680 452.5px,#250048 453.5px,#2d0057 454.5px)"></i>
<i style="background:linear-gradient(#2d0057 404.5px,#29004f 406.5px,#2d0057 409.5px,#2d0057 421.5px,#230044 426.5px,#1e0561 427.5px,#0c0680 428.5px,#062184 430.5px,#065f78 432.5px,#066576 433.5px,#067c61 435.5px,#068640 437.5px,#0c8912 439.5px,#0e860c 441.5px,#1e850c 443.5px,#0c810c 445.5px,#0c820f 446.5px,#0a831d 447.5px,#067e5a 449.5px,#066676 450.5px,#063181 451.5px,#130674 452.5px,#27004b 453.5px,#2d0057 454.5px)"></i>
<i style="background:linear-gradient(#2d0057 425.5px,#230044 428.5px,#120676 430.5px,#080e85 431.5px,#063c7f 433.5px,#06557b 434.5px,#066477 435.5px,#067e5c 437.5px,#0a851e 440.5px,#0c8410 441.5px,#0c820d 442.5px,#0c8311 446.5px,#068345 448.5px,#067b63 449.5px,#065f78 450.5px,#062383 451.5px,#1a0668 452.5px,#28004d 453.5px,#2d0057 454.5px)"></i>
<i style="background:linear-gradient(#2d0057 414.5px,#2c0774 416.5px,#2f0359 417.5px,#2d0056 427.5px,#240046 430.5px,#120677 432.5px,#0a0a82 433.5px,#061586 434.5px,#06517c 436.5px,#067569 438.5px,#068055 439.5px,#07842d 441.5px,#0b8417 442.5px,#0c8310 443.5px,#0c8312 445.5px,#06824f 448.5px,#06746a 449.5px,#06597a 450.5px,#061686 451.5px,#1e055c 452.5px,#28004e 453.5px,#2d0057 454.5px)"></i>
<i style="background:linear-gradient(#2d0057 413.5px,#2d066b 414.5px,#110eb2 415.5px,#0f11b4 416.5px,#270a8e 417.5px,#2f0359 418.5px,#2e045f 419.5px,#1b0ba2 420.5px,#210b99 421.5px,#2f0258 422.5px,#2f0258 431.5px,#26004a 432.5px,#20024d 433.5px,#0b0681 435.5px,#061186 436.5px,#06577b 438.5px,#066a75 439.5px,#067b63 440.5px,#06834e 441.5px,#07842b 443.5px,#098323 444.5px,#068344 447.5px,#067f58 448.5px,#066f6f 449.5px,#06517c 450.5px,#061186 451.5px,#1f0455 452.5px,#29004f 453.5px,#2d0057 454.5px)"></i>
<i style="background:linear-gradient(#2d0057 413.5px,#1e0b9e 414.5px,#0b2ab6 415.5px,#0a35b4 416.5px,#100eb3 417.5px,#2d056a 418.5px,#1a0ba5 419.5px,#0b26b7 420.5px,#0a1bb9 421.5px,#290782 422.5px,#2b0053 423.5px,#2f0359 432.5px,#250048 434.5px,#21024f 435.5px,#0b0989 437.5px,#061f8a 438.5px,#064682 439.5px,#06627a 440.5px,#067e5b 442.5px,#06844a 443.5px,#06833f 444.5px,#068340 445.5px,#06824f 447.5px,#067c5f 448.5px,#066c72 449.5px,#06507c 450.5px,#061186 451.5px,#1e0458 452.5px,#28004e 453.5px,#2d0057 454.5px)"></i>
<i style="background:linear-gradient(#2d0057 413.5px,#130baf 414.5px,#0b3eb3 415.5px,#0845aa 416.5px,#080f8b 417.5px,#2a0983 418.5px,#0f12b4 419.5px,#0b4db0 420.5px,#0941b2 421.5px,#120679 422.5px,#28004e 423.5px,#2d0057 424.5px,#2f0359 429.5px,#190ba6 430.5px,#1010b3 431.5px,#1f0b9b 432.5px,#2f0258 433.5px,#2f0258 435.5px,#2e0460 436.5px,#270a8d 437.5px,#110cb2 438.5px,#0b22b8 439.5px,#0850ad 440.5px,#076b90 441.5px,#068056 444.5px,#068153 445.5px,#067f58 447.5px,#066c72 449.5px,#06567b 450.5px,#061b85 451.5px,#1c0665 452.5px,#28004d 453.5px,#2d0057 454.5px)"></i>
<i style="background:linear-gradient(#2d0057 413.5px,#1a0ba5 414.5px,#092fb5 415.5px,#062a83 416.5px,#090a83 417.5px,#240567 418.5px,#0f12b5 419.5px,#0a53af 420.5px,#063582 421.5px,#10067a 422.5px,#28004c 423.5px,#2d0056 424.5px,#2f0359 428.5px,#210b98 429.5px,#0b36b4 430.5px,#0b52b0 431.5px,#0b23b7 432.5px,#2a0a86 433.5px,#2f0359 434.5px,#2f035b 436.5px,#2b0981 437.5px,#1a0ba4 438.5px,#0f14b6 439.5px,#1034b7 440.5px,#1460b1 441.5px,#1382ab 442.5px,#078393 443.5px,#067c70 444.5px,#067d66 445.5px,#067d61 447.5px,#066e70 449.5px,#065d79 450.5px,#062d82 451.5px,#110678 452.5px,#26004a 453.5px,#2d0057 454.5px)"></i>
<i style="background:linear-gradient(#2d0057 413.5px,#2a0a88 414.5px,#090c87 415.5px,#080e84 416.5px,#17066e 417.5px,#220042 418.5px,#130aaf 419.5px,#073799 420.5px,#062883 421.5px,#17066d 422.5px,#28004e 423.5px,#2d0057 424.5px,#2f0359 428.5px,#1b0ba3 429.5px,#0b43b2 430.5px,#0c5fae 431.5px,#0a31b5 432.5px,#1e0b9d 433.5px,#2e0567 434.5px,#2d0771 435.5px,#2a0b8a 436.5px,#110db2 438.5px,#0e19b8 439.5px,#1136b7 440.5px,#187fae 442.5px,#1096a1 444.5px,#078b79 446.5px,#067f6b 448.5px,#06746e 449.5px,#066477 450.5px,#06427e 451.5px,#090b83 452.5px,#250047 453.5px,#2d0057 454.5px)"></i>
<i style="background:linear-gradient(#2d0057 413.5px,#2b097f 414.5px,#1c0666 415.5px,#1e0664 416.5px,#250048 417.5px,#27004b 418.5px,#26088b 419.5px,#061689 420.5px,#061186 421.5px,#200356 422.5px,#290050 423.5px,#2e0158 424.5px,#2f0359 428.5px,#260b90 429.5px,#0b19b8 430.5px,#0e34b6 431.5px,#110eb2 433.5px,#0f11b4 435.5px,#0c1fb9 437.5px,#0e31b7 438.5px,#145ab2 440.5px,#1782ad 441.5px,#1a8faa 442.5px,#1c8fab 443.5px,#1ba19f 445.5px,#0aa68c 447.5px,#079076 448.5px,#067a6c 449.5px,#06567b 451.5px,#061785 452.5px,#230044 453.5px,#2b0053 454.5px,#2d0057 455.5px)"></i>
<i style="background:linear-gradient(#2d0057 406.5px,#2e0464 407.5px,#2f0259 408.5px,#2f0359 412.5px,#210b99 413.5px,#1a0aa3 414.5px,#22014a 415.5px,#2c0055 419.5px,#0b0782 420.5px,#0c0680 421.5px,#250048 422.5px,#2f0359 424.5px,#2f035a 427.5px,#2a0a86 428.5px,#140bae 429.5px,#0e1bb8 430.5px,#1036b7 431.5px,#1146b4 432.5px,#1166af 435.5px,#1989ab 440.5px,#1c9ea2 441.5px,#1da79b 442.5px,#1e9da5 443.5px,#1eac96 446.5px,#16ad8e 447.5px,#079a79 448.5px,#067d67 449.5px,#065e79 451.5px,#062883 452.5px,#220042 453.5px,#2b0053 454.5px,#2d0057 455.5px)"></i>
<i style="background:linear-gradient(#2d0057 405.5px,#220b98 406.5px,#110db2 407.5px,#2a0a89 408.5px,#2b0053 409.5px,#2f0359 412.5px,#100fb3 413.5px,#0b0c96 414.5px,#24014e 415.5px,#2d0057 418.5px,#2c0055 419.5px,#210669 420.5px,#210669 421.5px,#28004d 422.5px,#2e0258 423.5px,#2f0359 424.5px,#2d066b 425.5px,#240b94 426.5px,#110db2 427.5px,#0b1bb9 428.5px,#1167af 430.5px,#1481ac 431.5px,#1897a6 434.5px,#1ea49e 440.5px,#20b28f 441.5px,#21b687 442.5px,#21ae96 443.5px,#21af96 444.5px,#1fb28e 446.5px,#15b085 447.5px,#078f6a 448.5px,#067c63 449.5px,#065f78 451.5px,#062a82 452.5px,#220042 453.5px,#2b0053 454.5px,#2d0057 455.5px)"></i>
<i style="background:linear-gradient(#2d0057 405.5px,#0f12b4 406.5px,#0a27b7 407.5px,#0c088b 408.5px,#28004d 409.5px,#2f0259 412.5px,#0f0db2 413.5px,#0a0a84 414.5px,#26014f 415.5px,#2d0157 418.5px,#2b0053 422.5px,#2e035f 423.5px,#2a0a87 424.5px,#160bab 425.5px,#0d16b7 426.5px,#107faa 429.5px,#1699a3 431.5px,#1aaa95 434.5px,#21b48c 440.5px,#21bb7a 442.5px,#21b784 443.5px,#1cb680 446.5px,#08ac74 447.5px,#06825d 448.5px,#066e70 450.5px,#06597a 451.5px,#061a85 452.5px,#230045 453.5px,#2b0053 454.5px,#2d0057 455.5px)"></i>
<i style="background:linear-gradient(#2d0057 405.5px,#0d16b7 406.5px,#072a97 407.5px,#0a0a83 408.5px,#27004c 409.5px,#2c0055 410.5px,#2e0158 412.5px,#1c077e 413.5px,#19077c 414.5px,#29004e 415.5px,#2d0057 417.5px,#2f0258 423.5px,#2c087a 424.5px,#1b0aa2 425.5px,#0e13b5 426.5px,#0a2cb6 427.5px,#0867a7 429.5px,#066587 430.5px,#066778 432.5px,#067675 435.5px,#07867c 436.5px,#09a38d 437.5px,#16ad8e 438.5px,#20b686 440.5px,#1fbb75 442.5px,#1fbb75 444.5px,#1dba73 445.5px,#0db56d 446.5px,#068b59 447.5px,#067e5b 448.5px,#066676 450.5px,#06427e 451.5px,#0a0a83 452.5px,#250048 453.5px,#2d0057 454.5px)"></i>
<i style="background:linear-gradient(#2d0057 405.5px,#0f0bb1 406.5px,#061186 407.5px,#0f067a 408.5px,#28004d 409.5px,#2d0057 411.5px,#29004f 414.5px,#2d0056 416.5px,#2e0158 424.5px,#2a0262 425.5px,#16067c 426.5px,#0a0984 427.5px,#063680 431.5px,#066877 437.5px,#067675 438.5px,#0cac83 440.5px,#17b96d 443.5px,#16b868 444.5px,#09b460 445.5px,#069052 446.5px,#068253 447.5px,#06706e 449.5px,#065b7a 450.5px,#062483 451.5px,#18066b 452.5px,#27004c 453.5px,#2d0057 454.5px)"></i>
<i style="background:linear-gradient(#2d0057 405.5px,#140678 407.5px,#230357 408.5px,#2a0051 409.5px,#2d0057 411.5px,#2d0057 424.5px,#240045 427.5px,#1f0353 428.5px,#140672 429.5px,#0f067c 430.5px,#061186 434.5px,#079675 441.5px,#08ac65 443.5px,#07a358 444.5px,#068f4c 445.5px,#06854e 446.5px,#067965 448.5px,#066875 449.5px,#06487d 450.5px,#080e84 451.5px,#200147 452.5px,#2d0057 454.5px)"></i>
<i style="background:linear-gradient(#2d0057 405.5px,#28004d 407.5px,#2d0057 410.5px,#2d0057 424.5px,#220146 431.5px,#1b0667 434.5px,#0a0982 436.5px,#061386 437.5px,#065181 439.5px,#078183 441.5px,#079278 442.5px,#079567 443.5px,#06864f 445.5px,#06726c 448.5px,#065f78 449.5px,#0c0680 451.5px,#240046 452.5px,#2d0057 454.5px)"></i>
<i style="background:linear-gradient(#2d0057 428.5px,#220149 435.5px,#0a0e94 438.5px,#082caa 439.5px,#095ead 440.5px,#0b82a7 441.5px,#09939d 442.5px,#068765 444.5px,#06815a 445.5px,#067767 447.5px,#06587a 449.5px,#062583 450.5px,#140672 451.5px,#26004a 452.5px,#2d0057 453.5px)"></i>
<i style="background:linear-gradient(#2d0057 434.5px,#2a0052 436.5px,#2b0675 437.5px,#1e0a9d 438.5px,#0f13b5 439.5px,#1038b6 440.5px,#156ab0 441.5px,#178aaa 442.5px,#0f96a0 443.5px,#068169 445.5px,#067868 446.5px,#066576 448.5px,#06507c 449.5px,#061e84 450.5px,#18066c 451.5px,#27004b 452.5px,#2d0057 453.5px)"></i>
<i style="background:linear-gradient(#2d0057 436.5px,#2f035e 437.5px,#250b91 438.5px,#1010b4 439.5px,#1030b7 440.5px,#1566b1 441.5px,#188aab 442.5px,#129b9d 444.5px,#089787 445.5px,#067d75 446.5px,#06517c 449.5px,#062184 450.5px,#150670 451.5px,#27004b 452.5px,#2d0057 453.5px)"></i>
<i style="background:linear-gradient(#2d0057 408.5px,#2c0776 409.5px,#190ba5 410.5px,#1f0b9c 411.5px,#2e0258 412.5px,#2f0359 436.5px,#2e0564 437.5px,#150bad 438.5px,#0b2eb6 439.5px,#1580ac 441.5px,#1894a8 442.5px,#1b9ea2 444.5px,#19a797 445.5px,#0ea293 446.5px,#066d7b 448.5px,#065a7a 449.5px,#062e82 450.5px,#0f067c 451.5px,#260049 452.5px,#2d0057 453.5px)"></i>
<i style="background:linear-gradient(#2d0057 408.5px,#180ba7 409.5px,#0c18b8 410.5px,#0d15b6 411.5px,#26088a 412.5px,#2a0052 413.5px,#2f0359 436.5px,#2d066e 437.5px,#100fb3 438.5px,#0b46b2 439.5px,#106ead 440.5px,#1583ab 441.5px,#1894a7 442.5px,#1b9aa5 443.5px,#1faf94 445.5px,#1daf92 446.5px,#13a990 447.5px,#078983 448.5px,#066678 449.5px,#06437e 450.5px,#090b83 451.5px,#250047 452.5px,#2d0057 453.5px)"></i>
<i style="background:linear-gradient(#2d0057 408.5px,#1010b3 409.5px,#0b30b5 410.5px,#0a26b7 411.5px,#12078a 412.5px,#27004c 413.5px,#2d0057 415.5px,#2f0359 436.5px,#2e0463 437.5px,#1a0ba3 438.5px,#0b1eb8 439.5px,#0e48b3 440.5px,#1788aa 442.5px,#1b98a7 443.5px,#20b48b 445.5px,#1fb586 446.5px,#19b284 447.5px,#079e7c 448.5px,#067170 449.5px,#06597a 450.5px,#061186 451.5px,#240045 452.5px,#2b0054 453.5px,#2d0057 454.5px)"></i>
<i style="background:linear-gradient(#2d0057 408.5px,#1010b3 409.5px,#0a32b5 410.5px,#082cae 411.5px,#0a0a8a 412.5px,#23014e 413.5px,#2d0056 415.5px,#2f0359 424.5px,#230b95 425.5px,#2b0a86 426.5px,#2f0258 427.5px,#2f0359 436.5px,#2f035d 437.5px,#2a0a87 438.5px,#130bb0 439.5px,#0d1bb9 440.5px,#167dad 442.5px,#1b96a8 443.5px,#1fab98 444.5px,#20b685 445.5px,#1eb87c 446.5px,#15b675 447.5px,#079563 448.5px,#067a65 449.5px,#066377 450.5px,#062184 451.5px,#230043 452.5px,#2b0053 453.5px,#2d0057 454.5px)"></i>
<i style="background:linear-gradient(#2d0057 408.5px,#170aa8 409.5px,#091fb7 410.5px,#06258e 411.5px,#061388 412.5px,#120677 413.5px,#28004d 414.5px,#2d0057 416.5px,#2f0359 423.5px,#120cb2 424.5px,#0b2eb5 425.5px,#0a1cb8 426.5px,#280887 427.5px,#2c0054 428.5px,#2f0359 436.5px,#2e0568 437.5px,#290b8b 438.5px,#160bab 439.5px,#0e17b7 440.5px,#1574af 442.5px,#1a93a9 443.5px,#20b684 445.5px,#1bb976 446.5px,#08b265 447.5px,#068851 448.5px,#067d5d 449.5px,#066875 450.5px,#062a82 451.5px,#220042 452.5px,#2b0053 453.5px,#2d0057 454.5px)"></i>
<i style="background:linear-gradient(#2d0057 408.5px,#2a077c 409.5px,#0b0b93 410.5px,#061b86 411.5px,#061f84 412.5px,#0a0a83 413.5px,#27004c 414.5px,#2d0057 416.5px,#2f0359 423.5px,#0b19b8 424.5px,#0a56af 425.5px,#073998 426.5px,#0f0680 427.5px,#29004f 428.5px,#2d0057 429.5px,#2f0359 435.5px,#2d0569 436.5px,#2b0a86 437.5px,#1a0ba4 438.5px,#0d1cb9 440.5px,#1572af 442.5px,#1a90a9 443.5px,#1fb587 445.5px,#14b674 446.5px,#079655 447.5px,#06844e 448.5px,#067e5b 449.5px,#066975 450.5px,#062982 451.5px,#220042 452.5px,#2b0053 453.5px,#2d0057 454.5px)"></i>
<i style="background:linear-gradient(#2d0057 408.5px,#2b0054 409.5px,#0a0a83 411.5px,#070f85 412.5px,#0f067d 413.5px,#28004e 414.5px,#2d0057 416.5px,#2f0359 423.5px,#0e12b5 424.5px,#062f88 425.5px,#062084 426.5px,#120678 427.5px,#28004c 428.5px,#2c0056 429.5px,#2f0359 433.5px,#280b8e 436.5px,#150bac 437.5px,#0c17b7 438.5px,#0f39b6 440.5px,#1251b3 441.5px,#1677ae 442.5px,#1a90aa 443.5px,#1fb38b 445.5px,#0db275 446.5px,#068952 447.5px,#068251 448.5px,#067c60 449.5px,#066576 450.5px,#061c85 451.5px,#230044 452.5px,#2b0054 453.5px,#2d0057 454.5px)"></i>
<i style="background:linear-gradient(#2d0057 409.5px,#27004c 410.5px,#1f0564 412.5px,#260049 413.5px,#2d0056 415.5px,#2f0258 423.5px,#210565 424.5px,#0b0681 425.5px,#10067c 427.5px,#0c088f 428.5px,#290050 429.5px,#2f0359 433.5px,#2b0a85 434.5px,#140baf 436.5px,#0b19b8 437.5px,#0e4cb2 438.5px,#1163b0 439.5px,#1468b0 441.5px,#1b94a9 443.5px,#1fb28d 445.5px,#09af77 446.5px,#068356 447.5px,#067f59 448.5px,#067568 449.5px,#065b7a 450.5px,#080d84 451.5px,#250047 452.5px,#2d0057 453.5px)"></i>
<i style="background:linear-gradient(#2d0057 410.5px,#28004e 412.5px,#2d0057 415.5px,#2f0259 421.5px,#2b0983 422.5px,#27004b 424.5px,#230043 426.5px,#0c0785 427.5px,#061887 428.5px,#260257 429.5px,#2f0359 433.5px,#230b95 434.5px,#160bab 435.5px,#0e14b6 436.5px,#137fab 438.5px,#168ba9 439.5px,#1781ad 441.5px,#1c9aa7 443.5px,#20b38c 445.5px,#0baf7a 446.5px,#06805b 447.5px,#067b62 448.5px,#066b73 449.5px,#06427e 450.5px,#130675 451.5px,#27004b 452.5px,#2d0057 453.5px)"></i>
<i style="background:linear-gradient(#2d0057 421.5px,#200997 422.5px,#26056c 423.5px,#2a0051 424.5px,#29004f 426.5px,#21066b 427.5px,#0c088d 428.5px,#28004e 429.5px,#2f0359 433.5px,#230b95 434.5px,#130baf 435.5px,#0b19b8 436.5px,#1163af 437.5px,#1792a7 438.5px,#199da2 439.5px,#198cab 441.5px,#1ea1a1 443.5px,#20b588 445.5px,#12b27d 446.5px,#06805f 447.5px,#066177 449.5px,#062583 450.5px,#1f0352 451.5px,#28004e 452.5px,#2d0057 453.5px)"></i>
<i style="background:linear-gradient(#2d0057 421.5px,#270679 422.5px,#290054 423.5px,#28004e 428.5px,#2f0259 433.5px,#2b0982 434.5px,#1b0ba3 435.5px,#0c18b7 436.5px,#126dae 437.5px,#189aa3 438.5px,#1ba59a 439.5px,#1a93a9 441.5px,#1c9ba6 442.5px,#21b48d 444.5px,#21b880 445.5px,#1ab77b 446.5px,#068861 447.5px,#065c79 449.5px,#061386 450.5px,#210040 451.5px,#2a0051 452.5px,#2d0057 453.5px)"></i>
<i style="background:linear-gradient(#2d0057 410.5px,#260b91 411.5px,#210b99 412.5px,#2e0258 413.5px,#2c0055 428.5px,#2f035d 434.5px,#290a8a 435.5px,#0f12b4 436.5px,#1165af 437.5px,#1798a5 438.5px,#16a299 439.5px,#1197a0 440.5px,#1a95a8 441.5px,#1ea1a1 442.5px,#21b193 443.5px,#21bc73 445.5px,#1ebb70 446.5px,#079f63 447.5px,#067a65 448.5px,#065f78 449.5px,#061386 450.5px,#210040 451.5px,#2a0051 452.5px,#2d0057 453.5px)"></i>
<i style="background:linear-gradient(#2d0057 410.5px,#110eb3 411.5px,#0b1ab8 412.5px,#2a0572 413.5px,#2a0052 414.5px,#2f0359 417.5px,#2f0258 434.5px,#2e0566 435.5px,#160baa 436.5px,#0e4bb2 437.5px,#148ca8 438.5px,#088e98 439.5px,#08879a 440.5px,#1994a7 441.5px,#21b58a 443.5px,#21bc64 445.5px,#1fbb5f 446.5px,#08b159 447.5px,#068157 448.5px,#066975 449.5px,#062583 450.5px,#210040 451.5px,#2a0050 452.5px,#2d0057 453.5px)"></i>
<i style="background:linear-gradient(#2d0057 409.5px,#2e0565 410.5px,#0c17b7 411.5px,#0a47b1 412.5px,#11067c 413.5px,#28004d 414.5px,#2f0359 417.5px,#220b96 418.5px,#270a8e 419.5px,#2c0055 420.5px,#2f0259 435.5px,#280a8d 436.5px,#0a22b7 437.5px,#0c6fab 438.5px,#076b89 439.5px,#077393 440.5px,#1690a8 441.5px,#1ea79c 442.5px,#21b784 443.5px,#21bc6b 444.5px,#20ba47 446.5px,#08a33e 447.5px,#068446 448.5px,#067767 449.5px,#063f7f 450.5px,#1e0457 451.5px,#28004e 452.5px,#2d0057 453.5px)"></i>
<i style="background:linear-gradient(#2d0057 409.5px,#2e0461 410.5px,#0c17b7 411.5px,#074694 412.5px,#0b0781 413.5px,#27004b 414.5px,#2e0566 417.5px,#0c17b7 418.5px,#0c11b4 419.5px,#27004c 420.5px,#2d0057 422.5px,#2f0259 435.5px,#2d056b 436.5px,#110db2 437.5px,#083ab2 438.5px,#064b8c 439.5px,#076197 440.5px,#1388a9 441.5px,#1ca39e 442.5px,#21b686 443.5px,#20bb6a 444.5px,#20bb4d 445.5px,#12b52d 446.5px,#098a26 447.5px,#068439 448.5px,#067e5b 449.5px,#06567b 450.5px,#18066c 451.5px,#27004c 452.5px,#2d0057 453.5px)"></i>
<i style="background:linear-gradient(#2d0057 410.5px,#100eb3 411.5px,#062b84 412.5px,#0e067d 413.5px,#26004a 414.5px,#2f0258 416.5px,#2c0773 417.5px,#091ab8 418.5px,#070f86 419.5px,#27004b 420.5px,#2d0057 422.5px,#2f0259 436.5px,#230a94 437.5px,#0c12b5 438.5px,#07269b 439.5px,#0746a3 440.5px,#0f79ab 441.5px,#1797a6 442.5px,#1cb08f 443.5px,#19b96f 444.5px,#09b449 445.5px,#098d25 446.5px,#098425 447.5px,#068337 448.5px,#068056 449.5px,#065c79 450.5px,#110678 451.5px,#27004b 452.5px,#2d0057 453.5px)"></i>
<i style="background:linear-gradient(#2d0057 410.5px,#23088a 411.5px,#080d85 412.5px,#150672 413.5px,#26004a 414.5px,#2c0054 415.5px,#2e0158 417.5px,#0c0888 418.5px,#0e0684 419.5px,#28004e 420.5px,#2d0057 422.5px,#2f0259 436.5px,#2c0879 437.5px,#1809a5 438.5px,#0b10b1 439.5px,#0828b5 440.5px,#1083a8 442.5px,#0f9c9a 443.5px,#08a575 444.5px,#068e49 445.5px,#068436 446.5px,#068335 447.5px,#06833f 448.5px,#067e5b 449.5px,#065a7a 450.5px,#110678 451.5px,#27004a 452.5px,#2d0057 453.5px)"></i>
<i style="background:linear-gradient(#2d0057 410.5px,#2b0053 411.5px,#170673 412.5px,#140673 413.5px,#24035a 414.5px,#2b0053 415.5px,#2d0057 416.5px,#27004c 418.5px,#2d0057 422.5px,#2f0259 436.5px,#2d056b 437.5px,#270a8e 438.5px,#1409ab 439.5px,#0c13b5 440.5px,#0b33b5 441.5px,#0d63ae 442.5px,#0985a4 443.5px,#07857d 444.5px,#06825b 445.5px,#06844a 446.5px,#068348 447.5px,#068251 448.5px,#067668 449.5px,#064d7c 450.5px,#16066f 451.5px,#27004c 452.5px,#2d0057 453.5px)"></i>
<i style="background:linear-gradient(#2d0057 411.5px,#12067f 413.5px,#22066e 414.5px,#2a0052 415.5px,#2f0359 436.5px,#2e0568 437.5px,#2b0982 438.5px,#110cb1 440.5px,#0c19b8 441.5px,#0c6dac 443.5px,#07778e 444.5px,#06756e 445.5px,#067c60 446.5px,#067d5e 447.5px,#067965 448.5px,#066875 449.5px,#063680 450.5px,#1d0561 451.5px,#28004e 452.5px,#2d0057 453.5px)"></i>
<i style="background:linear-gradient(#2d0057 411.5px,#2b015c 412.5px,#180781 413.5px,#2b0052 415.5px,#2f0359 436.5px,#2b087d 438.5px,#170aa9 440.5px,#0e13b5 441.5px,#0e2eb7 442.5px,#1057b1 443.5px,#0879a8 444.5px,#066b7d 445.5px,#066f6f 446.5px,#066a74 448.5px,#065a7a 449.5px,#061e84 450.5px,#1f024e 451.5px,#2d0057 453.5px)"></i>
<i style="background:linear-gradient(#2d0057 412.5px,#260673 413.5px,#280050 414.5px,#2f0359 422.5px,#2b0981 423.5px,#230b95 424.5px,#2d056a 425.5px,#2d0056 426.5px,#2f0259 435.5px,#2d066e 437.5px,#250a91 439.5px,#180ba8 440.5px,#0e13b5 441.5px,#0e2bb7 442.5px,#0f6cad 444.5px,#076b8b 445.5px,#066677 446.5px,#065e79 448.5px,#06457e 449.5px,#070f85 450.5px,#220042 451.5px,#2a0052 452.5px,#2d0057 453.5px)"></i>
<i style="background:linear-gradient(#2d0057 412.5px,#2e035f 413.5px,#2b0053 414.5px,#2f0359 421.5px,#2e0462 422.5px,#120bb1 423.5px,#0f12b5 424.5px,#1b099f 425.5px,#29004f 426.5px,#2d0057 428.5px,#2f0259 435.5px,#2b0983 438.5px,#130bb1 440.5px,#0b19b8 441.5px,#0e3ab5 442.5px,#1150b3 443.5px,#1268af 444.5px,#0875a2 445.5px,#06617c 446.5px,#06517c 448.5px,#063381 449.5px,#0a0982 450.5px,#240046 451.5px,#2d0057 453.5px)"></i>
<i style="background:linear-gradient(#2d0057 412.5px,#280a8d 413.5px,#2b0053 415.5px,#2f0359 421.5px,#2b0a83 422.5px,#0d16b7 423.5px,#0a23b7 424.5px,#0b0987 425.5px,#26004a 426.5px,#2d0157 428.5px,#2f0259 435.5px,#2a0a89 438.5px,#1e0b9e 439.5px,#1010b3 440.5px,#1055b2 442.5px,#0e78aa 445.5px,#066486 446.5px,#06567c 447.5px,#06467e 448.5px,#062683 449.5px,#0d067e 450.5px,#260049 451.5px,#2d0057 452.5px)"></i>
<i style="background:linear-gradient(#2d0057 411.5px,#2e0566 412.5px,#110bb1 413.5px,#15078b 414.5px,#2a0051 415.5px,#2f0359 421.5px,#290b8b 422.5px,#0b19b8 423.5px,#062292 424.5px,#090b83 425.5px,#25014d 426.5px,#2e0258 428.5px,#2f0359 435.5px,#2e0462 436.5px,#280b8d 438.5px,#190ba6 439.5px,#0d16b7 440.5px,#0f51b2 441.5px,#1371ae 442.5px,#146daf 443.5px,#147fac 445.5px,#097ca7 446.5px,#065781 447.5px,#06427e 448.5px,#062084 449.5px,#110677 450.5px,#26004a 451.5px,#2d0057 452.5px)"></i>
<i style="background:linear-gradient(#2d0057 411.5px,#2e025a 412.5px,#130791 413.5px,#1b077f 414.5px,#2a0051 415.5px,#2f0259 421.5px,#2b087c 422.5px,#0c11b5 423.5px,#061386 424.5px,#0b0781 425.5px,#26004a 426.5px,#2c0054 427.5px,#2f0359 429.5px,#2a0a87 430.5px,#2b0982 431.5px,#2f0258 432.5px,#2f0359 435.5px,#2c087c 437.5px,#130bb0 439.5px,#0c21b8 440.5px,#126aaf 441.5px,#1584ab 442.5px,#1781ad 444.5px,#1689aa 446.5px,#087aa6 447.5px,#064a80 448.5px,#062583 449.5px,#10067a 450.5px,#260049 451.5px,#2d0057 452.5px)"></i>
<i style="background:linear-gradient(#2d0057 409.5px,#2d0771 410.5px,#2f0359 411.5px,#28004d 413.5px,#2f0259 416.5px,#2e0158 422.5px,#11067d 423.5px,#0b0882 424.5px,#1a066f 425.5px,#28004e 426.5px,#2f0359 428.5px,#250b92 429.5px,#0e13b5 430.5px,#0f11b4 431.5px,#290784 432.5px,#2f0258 433.5px,#2f0359 434.5px,#2e0566 435.5px,#2b0a83 436.5px,#1b0ba3 438.5px,#1010b4 439.5px,#0f35b6 440.5px,#147cad 441.5px,#188ea9 442.5px,#1c99a8 446.5px,#1991a9 447.5px,#07749c 448.5px,#063980 449.5px,#0a0882 450.5px,#240045 451.5px,#2b0053 452.5px,#2d0057 453.5px)"></i>
<i style="background:linear-gradient(#2d0057 408.5px,#180ba8 409.5px,#0f12b4 410.5px,#1f0a9b 411.5px,#28004e 412.5px,#2f0359 415.5px,#2c0879 416.5px,#2b087b 417.5px,#2d0056 418.5px,#2c0055 422.5px,#240258 423.5px,#210567 424.5px,#27004b 425.5px,#2f0359 428.5px,#170ba9 429.5px,#0a22b7 430.5px,#071596 431.5px,#160678 432.5px,#2f0259 433.5px,#2f035b 434.5px,#1f0b9c 435.5px,#110db2 436.5px,#1010b3 438.5px,#0d1cb9 439.5px,#1787ab 441.5px,#1b98a8 442.5px,#21b095 446.5px,#189ba2 448.5px,#065d7f 449.5px,#061586 450.5px,#210040 451.5px,#2a0051 452.5px,#2d0057 453.5px)"></i>
<i style="background:linear-gradient(#2d0057 407.5px,#2d0771 408.5px,#0b19b8 409.5px,#0a37b4 410.5px,#090e90 411.5px,#260049 412.5px,#2f0258 414.5px,#2f0359 415.5px,#160bab 416.5px,#170aa8 417.5px,#2a0051 418.5px,#2d0057 421.5px,#290050 424.5px,#2f0259 428.5px,#210a97 429.5px,#080f90 430.5px,#080d84 431.5px,#2f0359 433.5px,#240b94 434.5px,#0b1ab8 435.5px,#0c39b4 436.5px,#0e2db7 438.5px,#1146b4 439.5px,#1675af 440.5px,#1b95a8 441.5px,#1fa79c 442.5px,#21b194 443.5px,#21bc73 446.5px,#20b586 448.5px,#067b7b 449.5px,#063e7f 450.5px,#1e055e 451.5px,#28004d 452.5px,#2d0057 453.5px)"></i>
<i style="background:linear-gradient(#2d0057 407.5px,#2b0980 408.5px,#0a26b7 409.5px,#073a96 410.5px,#061086 411.5px,#24014d 412.5px,#2f0359 414.5px,#2b0980 415.5px,#0f12b4 416.5px,#0d0aa1 417.5px,#28004e 418.5px,#2e0158 420.5px,#2e0158 428.5px,#2b0052 429.5px,#1b0670 430.5px,#1d066c 431.5px,#26004a 432.5px,#2f0359 433.5px,#0f12b4 434.5px,#0e58b0 435.5px,#127bac 436.5px,#1362b1 438.5px,#1a91a9 440.5px,#21b588 442.5px,#25bc46 446.5px,#24bc4c 447.5px,#20bb5e 448.5px,#068b5a 449.5px,#066277 450.5px,#0c0681 451.5px,#250048 452.5px,#2d0057 453.5px)"></i>
<i style="background:linear-gradient(#2d0057 407.5px,#2d0568 408.5px,#0a14b4 409.5px,#062184 410.5px,#090a83 411.5px,#26004a 412.5px,#2f0359 414.5px,#1f0b9c 415.5px,#0d12b5 416.5px,#0d068a 417.5px,#2c0056 418.5px,#2d0057 428.5px,#28004e 431.5px,#2d056a 433.5px,#0b2ab6 434.5px,#1281aa 435.5px,#1693a7 436.5px,#1786ab 438.5px,#1990a9 439.5px,#1ea59d 440.5px,#21b687 441.5px,#21bc6f 442.5px,#26bc3c 444.5px,#28bb2e 445.5px,#22b929 448.5px,#068636 449.5px,#067767 450.5px,#061785 451.5px,#230043 452.5px,#2b0054 453.5px,#2d0057 454.5px)"></i>
<i style="background:linear-gradient(#2d0057 408.5px,#170673 409.5px,#0b0781 410.5px,#29004e 412.5px,#2f0259 414.5px,#1d0a9f 415.5px,#0c0a97 416.5px,#18077f 417.5px,#2c0775 418.5px,#2b0a84 419.5px,#2e0461 420.5px,#2e0158 421.5px,#2f0359 432.5px,#2c0877 433.5px,#0b3db3 434.5px,#148ba8 435.5px,#189da0 436.5px,#1992a9 438.5px,#1c9da4 439.5px,#20b191 440.5px,#21bc76 441.5px,#27bc3a 443.5px,#2bb928 445.5px,#3bbc28 446.5px,#38bb27 447.5px,#10a30f 448.5px,#0b8413 449.5px,#068251 450.5px,#063980 451.5px,#210040 452.5px,#2b0053 453.5px,#2d0057 454.5px)"></i>
<i style="background:linear-gradient(#2d0057 408.5px,#26004a 410.5px,#2e0258 414.5px,#280781 415.5px,#190678 416.5px,#2a077e 417.5px,#1c0ba1 418.5px,#0f11b4 419.5px,#1a0aa4 420.5px,#2d0057 421.5px,#2f0359 432.5px,#2d066e 433.5px,#0b34b4 434.5px,#1388a8 435.5px,#1197a0 436.5px,#078090 437.5px,#108ca6 438.5px,#1c9da3 439.5px,#21b38e 440.5px,#21bc71 441.5px,#28bb2f 443.5px,#28b929 444.5px,#4abf26 446.5px,#3dba15 447.5px,#1f870c 448.5px,#0c820e 449.5px,#068340 450.5px,#06527c 451.5px,#210040 452.5px,#2a0052 453.5px,#2d0057 454.5px)"></i>
<i style="background:linear-gradient(#2d0057 409.5px,#2d0057 414.5px,#2a0050 416.5px,#2d056b 417.5px,#0e13b5 418.5px,#0b36b4 419.5px,#0819b8 420.5px,#1a0670 421.5px,#290050 422.5px,#2d0056 423.5px,#2f0359 433.5px,#0c18b7 434.5px,#0e70ac 435.5px,#06657e 436.5px,#065e7b 437.5px,#07688d 438.5px,#1893a8 439.5px,#20b192 440.5px,#21bc77 441.5px,#21bb5a 442.5px,#27bb31 443.5px,#27b828 444.5px,#36ba24 445.5px,#3eba15 446.5px,#31900d 447.5px,#24860c 448.5px,#0c810c 449.5px,#068338 450.5px,#065c79 451.5px,#210040 452.5px,#2a0052 453.5px,#2d0057 454.5px)"></i>
<i style="background:linear-gradient(#2d0057 416.5px,#2e045f 417.5px,#0b1ab9 418.5px,#094eaf 419.5px,#062783 420.5px,#0c0680 421.5px,#29004e 422.5px,#2d0057 424.5px,#2f0359 433.5px,#1a0aa3 434.5px,#072d99 435.5px,#064080 436.5px,#063e80 437.5px,#074792 438.5px,#1583ab 439.5px,#1dac95 440.5px,#1fbb67 442.5px,#22bb41 443.5px,#21b826 444.5px,#1cb315 445.5px,#26960d 446.5px,#27870c 447.5px,#20840c 448.5px,#0c810d 449.5px,#068337 450.5px,#065e78 451.5px,#210040 452.5px,#2a0052 453.5px,#2d0057 454.5px)"></i>
<i style="background:linear-gradient(#2d0057 417.5px,#0d13b5 418.5px,#062684 419.5px,#070f85 420.5px,#1e0666 421.5px,#290050 422.5px,#2d0057 424.5px,#2f0258 433.5px,#2d025d 434.5px,#0c088c 435.5px,#071088 436.5px,#061390 437.5px,#0d2cb7 438.5px,#1b9ba4 440.5px,#20b094 441.5px,#1dba59 443.5px,#1eb92b 444.5px,#0fac12 445.5px,#148a0c 446.5px,#19840c 447.5px,#0c820f 449.5px,#06833c 450.5px,#065c79 451.5px,#210040 452.5px,#2a0052 453.5px,#2d0057 454.5px)"></i>
<i style="background:linear-gradient(#2d0057 417.5px,#160780 418.5px,#090a83 419.5px,#26004a 421.5px,#2d0057 423.5px,#2e0158 434.5px,#28046d 435.5px,#1f0898 436.5px,#130aaf 437.5px,#0f1bb8 438.5px,#1986ac 440.5px,#1fa2a1 441.5px,#21b587 442.5px,#20bb69 443.5px,#13b51a 445.5px,#0d8c0e 446.5px,#0c810c 447.5px,#0c8311 449.5px,#068345 450.5px,#06557b 451.5px,#210040 452.5px,#2a0052 453.5px,#2d0057 454.5px)"></i>
<i style="background:linear-gradient(#2d0057 417.5px,#26014e 418.5px,#210668 419.5px,#27004b 420.5px,#2c0056 422.5px,#2f0359 429.5px,#2d0772 430.5px,#2f0258 431.5px,#2f0259 435.5px,#2c0774 436.5px,#160bab 437.5px,#0e2eb7 438.5px,#1881ae 440.5px,#1e9ca6 441.5px,#21b38e 442.5px,#21bc71 443.5px,#20bb57 444.5px,#1db932 445.5px,#0e9c13 446.5px,#0c830f 447.5px,#0c820f 448.5px,#0a831d 449.5px,#06834e 450.5px,#06477d 451.5px,#210040 452.5px,#2b0052 453.5px,#2d0057 454.5px)"></i>
<i style="background:linear-gradient(#2d0057 417.5px,#2a0050 419.5px,#2f0359 428.5px,#2b097e 429.5px,#120cb1 430.5px,#2e0158 431.5px,#2f0359 435.5px,#2c0877 436.5px,#0e14b5 437.5px,#1065af 438.5px,#1681ac 439.5px,#1988ac 440.5px,#1e9fa3 441.5px,#21b48c 442.5px,#21bc72 443.5px,#22bb3d 445.5px,#10b417 446.5px,#0c8610 447.5px,#0c8311 448.5px,#088329 449.5px,#067f57 450.5px,#063880 451.5px,#210040 452.5px,#2b0053 453.5px,#2d0057 454.5px)"></i>
<i style="background:linear-gradient(#2d0057 427.5px,#2b0983 428.5px,#110eb3 429.5px,#0a20b8 430.5px,#280155 431.5px,#2f0359 435.5px,#270b8e 436.5px,#0b2cb6 437.5px,#1387a9 438.5px,#1894a7 439.5px,#1b93a9 440.5px,#1fa59e 441.5px,#21b687 442.5px,#21bc57 444.5px,#23bb3c 445.5px,#15b51c 446.5px,#0c8711 447.5px,#0b8314 448.5px,#068332 449.5px,#067c5f 450.5px,#062683 451.5px,#210041 452.5px,#2b0053 453.5px,#2d0057 454.5px)"></i>
<i style="background:linear-gradient(#2d0057 426.5px,#280b8e 427.5px,#0e13b5 428.5px,#083bb2 430.5px,#1e045b 431.5px,#2a0051 432.5px,#2f0359 434.5px,#2d0569 435.5px,#1e0b9e 436.5px,#0d3cb4 437.5px,#158fa7 438.5px,#1a9da2 439.5px,#1d9ca6 440.5px,#20aa9a 441.5px,#21bc6a 443.5px,#21ba36 445.5px,#0faa16 446.5px,#0c8511 447.5px,#0b8318 448.5px,#068338 449.5px,#067668 450.5px,#061186 451.5px,#230043 452.5px,#2b0054 453.5px,#2d0057 454.5px)"></i>
<i style="background:linear-gradient(#2d0057 426.5px,#110eb3 427.5px,#0b37b4 428.5px,#0c4bb1 429.5px,#063182 430.5px,#1e055f 431.5px,#290050 432.5px,#2f0359 434.5px,#2d0772 435.5px,#1a0ba4 436.5px,#0d35b5 437.5px,#158aa9 438.5px,#1a9ca3 439.5px,#20ab99 441.5px,#1fbb6c 443.5px,#1ab952 444.5px,#0eb42a 445.5px,#0c8c12 446.5px,#0c8411 447.5px,#098320 448.5px,#068341 449.5px,#066d71 450.5px,#0a0982 451.5px,#250047 452.5px,#2d0057 453.5px)"></i>
<i style="background:linear-gradient(#2d0057 426.5px,#0c17b7 427.5px,#0c51b0 428.5px,#074a9a 429.5px,#062883 430.5px,#1f0354 431.5px,#2a0050 432.5px,#2f0359 434.5px,#2b087d 435.5px,#170ba9 436.5px,#0d22b9 437.5px,#147bad 438.5px,#1a98a7 439.5px,#1da89a 441.5px,#18af8c 442.5px,#0ab36d 443.5px,#079d49 444.5px,#088a2f 445.5px,#0a841f 446.5px,#0a831e 447.5px,#068331 448.5px,#06834e 449.5px,#066177 450.5px,#16066f 451.5px,#26004a 452.5px,#2d0057 453.5px)"></i>
<i style="background:linear-gradient(#2d0057 426.5px,#0c18b8 427.5px,#0c53b0 428.5px,#063780 429.5px,#061286 430.5px,#230044 431.5px,#2a0052 432.5px,#2f0359 434.5px,#1f0b9c 435.5px,#1010b3 436.5px,#0e1bb8 437.5px,#1362b0 438.5px,#1894a7 439.5px,#1aa49b 440.5px,#0ca094 441.5px,#078378 442.5px,#068452 444.5px,#068338 446.5px,#068337 447.5px,#068344 448.5px,#067c60 449.5px,#064f7c 450.5px,#1f0354 451.5px,#28004e 452.5px,#2d0057 453.5px)"></i>
<i style="background:linear-gradient(#2d0057 410.5px,#1d0a9e 411.5px,#1708a4 412.5px,#2a015a 413.5px,#2f0359 426.5px,#0e14b6 427.5px,#0840ab 428.5px,#062583 429.5px,#0b0681 430.5px,#260049 431.5px,#2f0359 433.5px,#2d066c 434.5px,#0e13b5 435.5px,#0b25b7 436.5px,#0d1fb9 437.5px,#104ab3 438.5px,#138ba7 439.5px,#08988e 440.5px,#06786f 441.5px,#066d73 442.5px,#066d72 443.5px,#068152 446.5px,#06824f 447.5px,#067e5a 448.5px,#066e70 449.5px,#063281 450.5px,#210040 451.5px,#2a0050 452.5px,#2d0057 453.5px)"></i>
<i style="background:linear-gradient(#2d0057 410.5px,#280782 411.5px,#22077d 412.5px,#2b0052 413.5px,#2f0359 426.5px,#110db2 427.5px,#061f87 428.5px,#071085 429.5px,#1e055e 430.5px,#28004e 431.5px,#2f0359 433.5px,#260b90 434.5px,#0b29b6 435.5px,#0b47b2 436.5px,#0c2bb6 437.5px,#0926b6 438.5px,#075f95 439.5px,#066979 440.5px,#065c79 443.5px,#067668 447.5px,#06706e 448.5px,#065f78 449.5px,#061a85 450.5px,#220041 451.5px,#2b0052 452.5px,#2d0057 453.5px)"></i>
<i style="background:linear-gradient(#2d0057 410.5px,#2a0052 412.5px,#2f0259 426.5px,#1d099b 427.5px,#080e85 428.5px,#0c0680 429.5px,#250047 430.5px,#2b0052 431.5px,#2f0359 433.5px,#220b96 434.5px,#0b30b5 435.5px,#0a4db0 436.5px,#072093 437.5px,#090d8c 438.5px,#061d8c 439.5px,#063e81 440.5px,#06467e 441.5px,#064180 443.5px,#065a7a 445.5px,#066576 447.5px,#066078 448.5px,#064c7d 449.5px,#080e84 450.5px,#240045 451.5px,#2b0054 452.5px,#2d0057 453.5px)"></i>
<i style="background:linear-gradient(#2d0057 426.5px,#260465 427.5px,#120679 428.5px,#29004f 430.5px,#2f0359 433.5px,#2b097e 434.5px,#0b18b8 435.5px,#06288d 436.5px,#071087 437.5px,#0e0685 438.5px,#0d0998 439.5px,#081299 440.5px,#061d91 441.5px,#074091 444.5px,#06577b 447.5px,#06507c 448.5px,#063880 449.5px,#0a0982 450.5px,#250047 451.5px,#2d0057 452.5px)"></i>
<i style="background:linear-gradient(#2d0057 426.5px,#2a0052 427.5px,#260258 428.5px,#28004e 429.5px,#2f0258 434.5px,#160795 435.5px,#090b86 436.5px,#0c0684 437.5px,#19089c 438.5px,#130ab0 439.5px,#0c1fb9 441.5px,#0f3db5 443.5px,#0c50b1 445.5px,#0754a2 446.5px,#064c83 447.5px,#06437e 448.5px,#062d82 449.5px,#0b0781 450.5px,#250048 451.5px,#2d0057 452.5px)"></i>
<i style="background:linear-gradient(#2d0057 420.5px,#2c0774 421.5px,#2c087c 422.5px,#2e0158 423.5px,#2e0158 434.5px,#2a0052 435.5px,#200771 436.5px,#24088f 437.5px,#110eb3 439.5px,#114ab4 443.5px,#1364b0 446.5px,#0c67ad 447.5px,#064583 448.5px,#062d82 449.5px,#0b0681 450.5px,#250048 451.5px,#2d0057 452.5px)"></i>
<i style="background:linear-gradient(#2d0057 419.5px,#2f035b 420.5px,#110db2 421.5px,#100fb3 422.5px,#260465 423.5px,#2b0054 424.5px,#2e025b 436.5px,#2b0a84 437.5px,#180ba8 438.5px,#0d15b6 439.5px,#1259b1 442.5px,#1681ac 447.5px,#0869a0 448.5px,#063980 449.5px,#0a0982 450.5px,#250047 451.5px,#2d0057 452.5px)"></i>
<i style="background:linear-gradient(#2d0057 419.5px,#2d056b 420.5px,#0f12b5 421.5px,#0a0f9b 422.5px,#220566 423.5px,#2b0053 424.5px,#2f0359 436.5px,#270b8e 437.5px,#110eb2 438.5px,#0b21b8 439.5px,#0f48b3 440.5px,#157bad 442.5px,#1a95a8 447.5px,#1089a7 448.5px,#06507d 449.5px,#070f85 450.5px,#230044 451.5px,#2b0053 452.5px,#2d0057 453.5px)"></i>
<i style="background:linear-gradient(#2d0057 420.5px,#140aae 421.5px,#0f067f 422.5px,#260049 423.5px,#2d0057 425.5px,#2f0259 435.5px,#2e0463 436.5px,#210b99 437.5px,#0f12b5 438.5px,#147eac 441.5px,#1c9ea2 444.5px,#1eab97 447.5px,#149f9a 448.5px,#066278 449.5px,#062483 450.5px,#210040 451.5px,#2a0052 452.5px,#2d0057 453.5px)"></i>
<i style="background:linear-gradient(#2d0057 420.5px,#180aa7 421.5px,#1b066d 422.5px,#27004b 423.5px,#2c0055 424.5px,#2f0359 427.5px,#220b96 428.5px,#100fb3 429.5px,#2b0a85 431.5px,#2e0158 432.5px,#2f0259 435.5px,#2e0463 436.5px,#210b99 437.5px,#0e13b5 438.5px,#1264b0 440.5px,#1684ab 441.5px,#1fae95 444.5px,#21b880 447.5px,#0cad80 448.5px,#06706e 449.5px,#063d7f 450.5px,#200144 451.5px,#2d0057 453.5px)"></i>
<i style="background:linear-gradient(#2d0057 419.5px,#2d056a 420.5px,#0e13b5 421.5px,#110680 422.5px,#27004b 423.5px,#2c0055 424.5px,#2f0359 427.5px,#0d15b6 428.5px,#0b36b4 429.5px,#0b19b8 430.5px,#0e10b4 431.5px,#29004f 432.5px,#2f0359 436.5px,#270b8e 437.5px,#1010b3 438.5px,#1363b0 440.5px,#1783ac 441.5px,#1a95a8 442.5px,#21b48d 444.5px,#21bc72 446.5px,#1fbb6c 447.5px,#079657 448.5px,#067b63 449.5px,#06517c 450.5px,#1f0456 451.5px,#29004e 452.5px,#2d0057 453.5px)"></i>
<i style="background:linear-gradient(#2d0057 419.5px,#280b8c 420.5px,#0a27b7 421.5px,#090b86 422.5px,#26004a 423.5px,#2c0055 424.5px,#2f0359 427.5px,#0b18b8 428.5px,#0a43b2 429.5px,#0a31b5 430.5px,#062291 431.5px,#230046 432.5px,#2b0053 433.5px,#2f0359 436.5px,#2b097e 437.5px,#1010b3 438.5px,#1046b4 439.5px,#146faf 440.5px,#1a90aa 442.5px,#21b58a 444.5px,#21bc76 445.5px,#18b95b 447.5px,#068744 448.5px,#067e5a 449.5px,#065a7a 450.5px,#1e0560 451.5px,#28004d 452.5px,#2d0057 453.5px)"></i>
<i style="background:linear-gradient(#2d0057 419.5px,#220b97 420.5px,#0932b4 421.5px,#080e85 422.5px,#260049 423.5px,#2c0055 424.5px,#2f0359 427.5px,#120bb1 428.5px,#0a1eb8 429.5px,#0829aa 430.5px,#062d83 431.5px,#200352 432.5px,#2a0051 433.5px,#2f0359 436.5px,#2c087a 437.5px,#0c18b7 438.5px,#126fae 439.5px,#1789aa 440.5px,#1884ad 441.5px,#1a8bab 442.5px,#1ea2a0 443.5px,#21b48b 444.5px,#21bc74 445.5px,#20bb62 446.5px,#0bb54b 447.5px,#06843e 448.5px,#068056 449.5px,#065c79 450.5px,#1d0662 451.5px,#27004c 452.5px,#2d0057 453.5px)"></i>
<i style="background:linear-gradient(#2d0057 409.5px,#280b8c 410.5px,#2c087a 411.5px,#2e0158 412.5px,#2d0056 413.5px,#2f0259 419.5px,#280a8c 420.5px,#061d8f 421.5px,#090b83 422.5px,#27004b 423.5px,#2c0055 424.5px,#2f0258 427.5px,#2d0568 428.5px,#1d0a9f 429.5px,#0817b3 430.5px,#062a83 431.5px,#1f0351 432.5px,#2a0051 433.5px,#2f0359 436.5px,#2b0a84 437.5px,#0c35b5 438.5px,#158ca8 439.5px,#1a9f9f 440.5px,#1a89ac 442.5px,#1d9fa3 443.5px,#21b48c 444.5px,#21bc73 445.5px,#1ebb5f 446.5px,#08a73f 447.5px,#06843b 448.5px,#068054 449.5px,#065d79 450.5px,#1d0661 451.5px,#27004c 452.5px,#2d0057 453.5px)"></i>
<i style="background:linear-gradient(#2d0057 408.5px,#200b9b 409.5px,#0b23b7 410.5px,#0c17b7 411.5px,#250255 412.5px,#2f0258 419.5px,#2c0366 420.5px,#090c84 421.5px,#120678 422.5px,#28004e 423.5px,#2c0056 424.5px,#2f0359 428.5px,#2c0773 429.5px,#0d14b6 430.5px,#061d85 431.5px,#200149 432.5px,#2d0057 434.5px,#2f0359 436.5px,#270b8f 437.5px,#0e4cb2 438.5px,#179ba2 439.5px,#1caf91 440.5px,#1899a4 441.5px,#1789aa 442.5px,#1d9ea3 443.5px,#21b48c 444.5px,#21bc72 445.5px,#1dba5c 446.5px,#089c37 447.5px,#068439 448.5px,#068152 449.5px,#065d79 450.5px,#1d0561 451.5px,#27004c 452.5px,#2d0057 453.5px)"></i>
<i style="background:linear-gradient(#2d0057 408.5px,#0f10b4 409.5px,#0a4fb0 410.5px,#062c87 411.5px,#1b066b 412.5px,#2a0050 413.5px,#2d0057 415.5px,#2a0052 420.5px,#1d0775 421.5px,#250258 422.5px,#2a0052 423.5px,#2f0359 428.5px,#230b95 429.5px,#0c17b7 430.5px,#061388 431.5px,#210145 432.5px,#2d0057 434.5px,#2f0359 436.5px,#250b92 437.5px,#0e50b1 438.5px,#189f9e 439.5px,#1cb388 440.5px,#089090 441.5px,#0d85a6 442.5px,#1c9ea3 443.5px,#21b48c 444.5px,#20bb71 445.5px,#1bba59 446.5px,#089231 447.5px,#068337 448.5px,#068251 449.5px,#065e78 450.5px,#1d0561 451.5px,#27004c 452.5px,#2d0057 453.5px)"></i>
<i style="background:linear-gradient(#2d0057 408.5px,#110cb2 409.5px,#063287 410.5px,#062284 411.5px,#1f0666 412.5px,#2a0051 413.5px,#2d0057 418.5px,#2a0050 421.5px,#2f0359 427.5px,#2d066d 428.5px,#110db2 429.5px,#0a22b7 430.5px,#061289 431.5px,#20024f 432.5px,#2a0050 433.5px,#2f0359 436.5px,#2a0b89 437.5px,#0c3eb4 438.5px,#1799a4 439.5px,#0cac83 440.5px,#067174 441.5px,#076e8f 442.5px,#199ba4 443.5px,#20b38e 444.5px,#1fbb72 445.5px,#14b855 446.5px,#088a2e 447.5px,#068337 448.5px,#068250 449.5px,#065e78 450.5px,#1e0560 451.5px,#28004d 452.5px,#2d0057 453.5px)"></i>
<i style="background:linear-gradient(#2d0057 408.5px,#25056b 409.5px,#090b83 410.5px,#0b0681 411.5px,#260049 412.5px,#2d0057 414.5px,#2f0259 427.5px,#2c0877 428.5px,#0f11b4 429.5px,#0a29b6 430.5px,#061587 431.5px,#1e055d 432.5px,#290050 433.5px,#2f0359 436.5px,#2d0670 437.5px,#0b19b8 438.5px,#1387a9 439.5px,#068070 440.5px,#066677 441.5px,#065b83 442.5px,#1592a6 443.5px,#1eae94 444.5px,#1db978 445.5px,#09b454 446.5px,#068633 447.5px,#06833a 448.5px,#068153 449.5px,#065c79 450.5px,#1e045a 451.5px,#28004d 452.5px,#2d0057 453.5px)"></i>
<i style="background:linear-gradient(#2d0057 408.5px,#260049 410.5px,#2d0057 414.5px,#2f035a 428.5px,#130ab0 429.5px,#081baf 430.5px,#061287 431.5px,#29004f 433.5px,#2d0057 434.5px,#2f0359 437.5px,#170aaa 438.5px,#0c5aaf 439.5px,#066978 440.5px,#064887 442.5px,#1387a9 443.5px,#1ba49d 444.5px,#1ab383 445.5px,#07a458 446.5px,#06853c 447.5px,#068342 448.5px,#067e5a 449.5px,#06577b 450.5px,#1f034f 451.5px,#2d0057 453.5px)"></i>
<i style="background:linear-gradient(#2d0057 409.5px,#2f0258 428.5px,#290a8a 429.5px,#0a0e98 430.5px,#080e85 431.5px,#29004f 433.5px,#2f0259 437.5px,#2c0776 438.5px,#0919b8 439.5px,#065081 440.5px,#063982 441.5px,#0740a5 442.5px,#157dad 443.5px,#1a99a6 444.5px,#1aae90 445.5px,#079e63 446.5px,#068447 447.5px,#06834c 448.5px,#067a64 449.5px,#06497d 450.5px,#210040 451.5px,#2d0057 453.5px)"></i>
<i style="background:linear-gradient(#2d0057 429.5px,#150799 430.5px,#0b0781 431.5px,#200564 432.5px,#2a0051 433.5px,#2f0259 438.5px,#190aa4 439.5px,#082bb5 440.5px,#0925b6 441.5px,#103cb6 442.5px,#1570af 443.5px,#1a92a9 444.5px,#1ba799 445.5px,#079e71 446.5px,#068351 447.5px,#067f57 448.5px,#06726c 449.5px,#063880 450.5px,#210040 451.5px,#2a0052 452.5px,#2d0057 453.5px)"></i>
<i style="background:linear-gradient(#2d0057 429.5px,#290a89 430.5px,#180670 431.5px,#25014f 432.5px,#2d0057 434.5px,#2f0359 438.5px,#2b087d 439.5px,#100fb3 440.5px,#0e1ab8 441.5px,#113db6 442.5px,#156db0 443.5px,#198eaa 444.5px,#1ba29e 445.5px,#08a27f 446.5px,#067f59 447.5px,#067c60 448.5px,#066a74 449.5px,#062583 450.5px,#220041 451.5px,#2b0053 452.5px,#2d0057 453.5px)"></i>
<i style="background:linear-gradient(#2d0057 429.5px,#2a0b8a 430.5px,#28077d 431.5px,#27004c 432.5px,#2e0158 434.5px,#2f0359 438.5px,#2d0771 439.5px,#120bb1 440.5px,#0e2db7 441.5px,#1254b3 442.5px,#198eaa 444.5px,#1ba0a0 445.5px,#08a58b 446.5px,#067d60 447.5px,#067668 448.5px,#066177 449.5px,#061186 450.5px,#230044 451.5px,#2b0054 452.5px,#2d0057 453.5px)"></i>
<i style="background:linear-gradient(#2d0057 428.5px,#1d0b9f 429.5px,#110db2 430.5px,#210a99 431.5px,#2e0158 432.5px,#2f0359 438.5px,#2b0981 439.5px,#0d16b7 440.5px,#1167af 441.5px,#1681ac 442.5px,#1882ad 443.5px,#1c9fa2 445.5px,#0ea491 446.5px,#067b66 447.5px,#06706e 448.5px,#06597a 449.5px,#090a83 450.5px,#240046 451.5px,#2d0057 452.5px)"></i>
<i style="background:linear-gradient(#2d0057 415.5px,#1b0ba2 416.5px,#0f11b4 417.5px,#1d0b9f 418.5px,#2e0158 419.5px,#2f0359 427.5px,#2a0a88 428.5px,#0b19b8 429.5px,#0b32b5 430.5px,#0d15b6 431.5px,#2c0773 432.5px,#2f0359 433.5px,#2f0359 437.5px,#2e0567 438.5px,#200b9b 439.5px,#0e3eb4 440.5px,#1690a7 441.5px,#1a9ba4 442.5px,#1b90aa 443.5px,#1c94a9 444.5px,#16a696 446.5px,#067b6b 447.5px,#066c72 448.5px,#06507c 449.5px,#0c0680 450.5px,#250048 451.5px,#2d0057 452.5px)"></i>
<i style="background:linear-gradient(#2d0057 414.5px,#290b8b 415.5px,#0b37b4 416.5px,#0b69ac 417.5px,#0850af 418.5px,#120677 419.5px,#29004f 420.5px,#2d0056 421.5px,#2f0359 427.5px,#160bab 428.5px,#0b43b2 429.5px,#0e64ae 430.5px,#0c47b2 431.5px,#110cb2 432.5px,#2b0980 433.5px,#230a96 434.5px,#2d056a 435.5px,#2f0359 436.5px,#2e0463 437.5px,#2b0a86 438.5px,#120cb1 439.5px,#1163b0 440.5px,#1aa59a 441.5px,#1eb190 442.5px,#1ea3a0 443.5px,#1e9da5 444.5px,#1eab97 446.5px,#078d78 447.5px,#066c72 448.5px,#064e7c 449.5px,#0e067d 450.5px,#250048 451.5px,#2d0057 452.5px)"></i>
<i style="background:linear-gradient(#2d0057 414.5px,#200b9a 415.5px,#0b49b1 416.5px,#066185 417.5px,#064b7d 418.5px,#0b0881 419.5px,#28004e 420.5px,#2c0056 421.5px,#2f0359 427.5px,#110cb2 428.5px,#0c55b0 429.5px,#117faa 430.5px,#0c71ab 431.5px,#0827b6 432.5px,#0d11b4 433.5px,#0921b7 434.5px,#0e0aa8 435.5px,#2f0258 436.5px,#1f0b9c 438.5px,#0e14b6 439.5px,#1475ae 440.5px,#1cb090 441.5px,#21ba7c 442.5px,#21ac99 444.5px,#21b38e 446.5px,#10ad86 447.5px,#06726d 448.5px,#06587a 449.5px,#0b0881 450.5px,#250047 451.5px,#2d0057 452.5px)"></i>
<i style="background:linear-gradient(#2d0057 414.5px,#2c0775 415.5px,#081195 416.5px,#062783 417.5px,#061186 418.5px,#22024e 419.5px,#2d0056 421.5px,#2f0359 427.5px,#170ba9 428.5px,#0b4ab1 429.5px,#0c7da8 430.5px,#065c7c 431.5px,#062d82 432.5px,#080d85 433.5px,#061486 434.5px,#0c0681 435.5px,#2d0057 436.5px,#2a0a88 437.5px,#150bad 438.5px,#0c1db9 439.5px,#1579ae 440.5px,#1db092 441.5px,#21bc77 442.5px,#21b687 444.5px,#1bb879 447.5px,#067f63 448.5px,#066377 449.5px,#070f85 450.5px,#230044 451.5px,#2b0054 452.5px,#2d0057 453.5px)"></i>
<i style="background:linear-gradient(#2d0057 414.5px,#2e0464 415.5px,#1f0458 416.5px,#1f0456 417.5px,#230044 418.5px,#2d0057 421.5px,#2f0359 427.5px,#2b0a84 428.5px,#0923b7 429.5px,#06497f 430.5px,#06517c 431.5px,#062284 432.5px,#150670 433.5px,#19066a 434.5px,#240046 435.5px,#2d0157 436.5px,#2a0a88 437.5px,#110db2 438.5px,#0d2cb7 439.5px,#1576ae 440.5px,#1da69c 441.5px,#21b881 442.5px,#21bc65 446.5px,#1bba62 447.5px,#068651 448.5px,#06716d 449.5px,#062483 450.5px,#220041 451.5px,#2b0053 452.5px,#2d0057 453.5px)"></i>
<i style="background:linear-gradient(#2d0057 413.5px,#290b8b 414.5px,#210a97 415.5px,#230047 416.5px,#2d0056 420.5px,#2e0157 428.5px,#100682 429.5px,#061d85 430.5px,#062a82 431.5px,#090a83 432.5px,#20024d 433.5px,#220045 434.5px,#2e0258 436.5px,#2b0981 437.5px,#100eb3 438.5px,#0d34b6 439.5px,#1576ae 440.5px,#1c9da3 441.5px,#21b48b 442.5px,#21bc5a 445.5px,#22bb4d 446.5px,#0eb53d 447.5px,#06843f 448.5px,#067c60 449.5px,#063c7f 450.5px,#210040 451.5px,#2b0053 452.5px,#2d0057 453.5px)"></i>
<i style="background:linear-gradient(#2d0057 413.5px,#170aa9 414.5px,#0f09ab 415.5px,#23045d 416.5px,#29004f 417.5px,#2f0359 425.5px,#240a93 426.5px,#2e0158 427.5px,#250047 429.5px,#18066d 430.5px,#100679 431.5px,#1f0352 432.5px,#210459 433.5px,#1d0784 434.5px,#2a0051 435.5px,#2f0258 436.5px,#2c0775 437.5px,#110db2 438.5px,#0c31b6 439.5px,#1473ae 440.5px,#1b98a7 441.5px,#20b190 442.5px,#1fbb76 443.5px,#1dba4b 445.5px,#12b630 446.5px,#0a8a1f 447.5px,#068335 448.5px,#068056 449.5px,#064d7c 450.5px,#210040 451.5px,#2b0052 452.5px,#2d0057 453.5px)"></i>
<i style="background:linear-gradient(#2d0057 413.5px,#1d099b 414.5px,#110789 415.5px,#24035f 416.5px,#2c0056 417.5px,#2f0359 424.5px,#260b90 425.5px,#0d16b6 426.5px,#29004f 427.5px,#27004b 432.5px,#220a97 433.5px,#0d10b4 434.5px,#29004f 435.5px,#2e0464 437.5px,#150bac 438.5px,#0b22b8 439.5px,#1265b0 440.5px,#1991a9 441.5px,#1ba997 442.5px,#12b379 443.5px,#08ad57 444.5px,#07973c 445.5px,#088828 446.5px,#098422 447.5px,#068336 448.5px,#068055 449.5px,#06517c 450.5px,#210040 451.5px,#2b0052 452.5px,#2d0057 453.5px)"></i>
<i style="background:linear-gradient(#2d0057 413.5px,#2a0157 414.5px,#240568 415.5px,#2c0671 417.5px,#2e0258 418.5px,#2f0359 424.5px,#130bb0 425.5px,#0931b4 426.5px,#250048 427.5px,#2b0053 428.5px,#2f0258 432.5px,#160aaa 433.5px,#0716a6 434.5px,#27004b 435.5px,#2d0057 436.5px,#2f0359 437.5px,#200b9b 438.5px,#0d16b6 439.5px,#1686ab 441.5px,#1097a0 442.5px,#078871 443.5px,#068457 444.5px,#06843c 446.5px,#068337 447.5px,#068342 448.5px,#067d5e 449.5px,#06477d 450.5px,#210040 451.5px,#2b0052 452.5px,#2d0057 453.5px)"></i>
<i style="background:linear-gradient(#2d0057 414.5px,#2b0053 415.5px,#290884 416.5px,#180aa7 417.5px,#200998 418.5px,#2e0158 419.5px,#2f0359 424.5px,#110cb2 425.5px,#062a87 426.5px,#250047 427.5px,#2b0054 428.5px,#2f0259 432.5px,#180aa6 433.5px,#06118a 434.5px,#27004a 435.5px,#2f0259 437.5px,#2b0a84 438.5px,#110db2 439.5px,#0e3db5 440.5px,#1378ad 441.5px,#077895 442.5px,#066b78 443.5px,#067c60 445.5px,#06834e 447.5px,#067f57 448.5px,#06726c 449.5px,#063381 450.5px,#210040 451.5px,#2b0053 452.5px,#2d0057 453.5px)"></i>
<i style="background:linear-gradient(#2d0057 415.5px,#2b0677 416.5px,#1809a5 417.5px,#1f0a9b 418.5px,#2f0259 419.5px,#2f0359 424.5px,#1909a3 425.5px,#061786 426.5px,#260049 427.5px,#2c0054 428.5px,#2f0259 432.5px,#280889 433.5px,#0b098a 434.5px,#28004d 435.5px,#2f0259 437.5px,#2d056a 438.5px,#1a0ba3 439.5px,#0c2bb6 440.5px,#1068ae 441.5px,#065e89 442.5px,#06597c 443.5px,#067767 447.5px,#06726c 448.5px,#066277 449.5px,#061a85 450.5px,#230043 451.5px,#2b0053 452.5px,#2d0057 453.5px)"></i>
<i style="background:linear-gradient(#2d0057 416.5px,#2b0a84 418.5px,#2b097f 419.5px,#2e0460 420.5px,#2f0259 421.5px,#2f0259 424.5px,#240466 425.5px,#0c078a 426.5px,#28004d 427.5px,#2d0057 429.5px,#2e0158 433.5px,#230670 434.5px,#2a0051 435.5px,#2f0359 438.5px,#240b94 439.5px,#0b1bb9 440.5px,#0d57b0 441.5px,#064987 442.5px,#063d80 443.5px,#066476 447.5px,#066078 448.5px,#064e7c 449.5px,#090c84 450.5px,#240046 451.5px,#2d0057 452.5px)"></i>
<i style="background:linear-gradient(#2d0057 417.5px,#1e0b9d 418.5px,#0e13b5 419.5px,#0f11b4 420.5px,#2a0a89 421.5px,#2f0359 422.5px,#2c0777 423.5px,#27004c 425.5px,#260257 426.5px,#2a0052 427.5px,#2f0359 438.5px,#280b8d 439.5px,#0d15b6 440.5px,#0c40b3 441.5px,#06378e 442.5px,#062987 443.5px,#062e86 444.5px,#06547b 447.5px,#064e7c 448.5px,#063580 449.5px,#0d067e 450.5px,#260049 451.5px,#2d0057 452.5px)"></i>
<i style="background:linear-gradient(#2d0057 417.5px,#0f10b4 418.5px,#0b39b4 419.5px,#0a37b4 420.5px,#100fb3 421.5px,#2c087a 422.5px,#190aa6 423.5px,#200896 424.5px,#28004d 425.5px,#2f0359 432.5px,#2a0b8a 433.5px,#2f0259 434.5px,#2f035b 438.5px,#1f0b9c 439.5px,#0e13b5 440.5px,#0b27b7 441.5px,#0729a7 442.5px,#0722a4 443.5px,#082cae 444.5px,#0839a8 445.5px,#06447f 447.5px,#063c7f 448.5px,#062483 449.5px,#150670 450.5px,#27004b 451.5px,#2d0057 452.5px)"></i>
<i style="background:linear-gradient(#2d0057 417.5px,#110eb2 418.5px,#0a36b4 419.5px,#0a3eb2 420.5px,#0b15b6 421.5px,#210a98 422.5px,#0e0fb3 423.5px,#0d0686 424.5px,#28004c 425.5px,#2d0057 427.5px,#2f0359 431.5px,#130bb0 432.5px,#0b24b7 433.5px,#1a0aa3 434.5px,#2c0054 435.5px,#2f0359 437.5px,#2c087a 438.5px,#0f11b4 439.5px,#0c1ab8 441.5px,#0d28b7 443.5px,#0c4db1 446.5px,#06458b 447.5px,#063581 448.5px,#061a85 449.5px,#1b0666 450.5px,#28004d 451.5px,#2d0057 452.5px)"></i>
<i style="background:linear-gradient(#2d0057 417.5px,#2a0a86 418.5px,#0d16b6 419.5px,#0930b5 420.5px,#081ab7 421.5px,#1208a6 422.5px,#090d8d 423.5px,#0b0781 424.5px,#27004c 425.5px,#2c0055 426.5px,#2f0359 431.5px,#0b1ab9 432.5px,#0a56af 433.5px,#071293 434.5px,#22035a 435.5px,#2d0057 436.5px,#2f0359 437.5px,#210b98 438.5px,#0b2eb5 439.5px,#0c38b4 440.5px,#0c1bb9 441.5px,#1252b3 445.5px,#095ead 447.5px,#063881 448.5px,#061985 449.5px,#1d0662 450.5px,#28004d 451.5px,#2d0057 452.5px)"></i>
<i style="background:linear-gradient(#2d0057 412.5px,#1f0a9c 413.5px,#1e0899 414.5px,#2c0055 415.5px,#2f0259 418.5px,#130aaf 419.5px,#0a30b5 420.5px,#07279d 421.5px,#0a0987 422.5px,#100679 424.5px,#28004d 425.5px,#2c0055 426.5px,#2f0359 431.5px,#0d16b7 432.5px,#063a8a 433.5px,#061286 434.5px,#1f0669 435.5px,#2d0057 436.5px,#2f0359 437.5px,#180ba7 438.5px,#0b47b1 439.5px,#0d4fb1 440.5px,#0d27b8 441.5px,#0f35b6 442.5px,#1364b0 444.5px,#1077ac 447.5px,#064682 448.5px,#062184 449.5px,#1d0664 450.5px,#28004d 451.5px,#2d0057 452.5px)"></i>
<i style="background:linear-gradient(#2d0057 412.5px,#220892 413.5px,#200783 414.5px,#2b0053 415.5px,#2f0359 418.5px,#1b0aa3 419.5px,#0a2fb5 420.5px,#06288c 421.5px,#0a0a83 422.5px,#0e067c 423.5px,#29004f 425.5px,#2c0056 426.5px,#2f0258 431.5px,#22088b 432.5px,#080d85 433.5px,#0f067c 434.5px,#24014d 435.5px,#2f0258 436.5px,#2f0359 437.5px,#1b0ba3 438.5px,#0b43b2 439.5px,#0d4db1 440.5px,#0e30b7 441.5px,#104ab3 442.5px,#1374ae 443.5px,#1686ab 444.5px,#1489a9 447.5px,#065b83 448.5px,#063081 449.5px,#18066c 450.5px,#27004c 451.5px,#2d0057 452.5px)"></i>
<i style="background:linear-gradient(#2d0057 412.5px,#2a0052 414.5px,#2f0359 418.5px,#250b92 419.5px,#0a19b8 420.5px,#06168b 421.5px,#0b0781 422.5px,#17066d 423.5px,#25014c 424.5px,#2d0057 426.5px,#2f0258 431.5px,#290051 433.5px,#2e0158 434.5px,#2f0359 437.5px,#280b8d 438.5px,#0b24b7 439.5px,#0d3bb5 440.5px,#0f35b6 441.5px,#1587aa 443.5px,#1896a7 444.5px,#1699a3 447.5px,#06687f 448.5px,#06437e 449.5px,#10067a 450.5px,#26004a 451.5px,#2d0057 452.5px)"></i>
<i style="background:linear-gradient(#2d0057 417.5px,#2e0463 418.5px,#2b097e 419.5px,#100eb2 420.5px,#0a0b8c 421.5px,#0d067f 422.5px,#18066b 423.5px,#27004b 424.5px,#2d0057 426.5px,#2f0359 433.5px,#2b0a85 434.5px,#1d0b9f 435.5px,#2b0983 436.5px,#2f0359 437.5px,#2d0771 438.5px,#0f12b4 439.5px,#0d36b5 440.5px,#1045b4 441.5px,#135fb1 442.5px,#1788aa 443.5px,#1a99a5 444.5px,#1da49d 446.5px,#16a696 447.5px,#067176 448.5px,#06577b 449.5px,#0a0982 450.5px,#250048 451.5px,#2d0057 452.5px)"></i>
<i style="background:linear-gradient(#2d0057 416.5px,#2a0b8a 417.5px,#1f0b9b 418.5px,#290b8c 419.5px,#0f10b3 420.5px,#0e068e 421.5px,#0b0782 422.5px,#120676 423.5px,#27004c 424.5px,#2c0055 425.5px,#2f045e 430.5px,#2f0359 432.5px,#2a0b8a 433.5px,#0b25b7 434.5px,#0c4eb1 435.5px,#0b3bb3 436.5px,#110db2 437.5px,#2b0981 438.5px,#1010b3 439.5px,#0e50b1 440.5px,#1260b0 441.5px,#1461b1 442.5px,#1783ac 443.5px,#1a96a8 444.5px,#1ead95 446.5px,#13ae89 447.5px,#06776b 448.5px,#066078 449.5px,#080e85 450.5px,#240045 451.5px,#2b0054 452.5px,#2d0057 453.5px)"></i>
<i style="background:linear-gradient(#2d0057 416.5px,#130bb0 417.5px,#0f10b4 418.5px,#170aa8 419.5px,#091fb7 420.5px,#0b0785 421.5px,#10067a 423.5px,#28004d 424.5px,#2f0359 427.5px,#2b0980 428.5px,#0f11b4 429.5px,#0d15b6 430.5px,#1c0ba0 431.5px,#2e0565 432.5px,#0f12b4 433.5px,#0e6dac 434.5px,#138fa6 435.5px,#1391a5 436.5px,#0e6cad 437.5px,#0f10b4 438.5px,#0e13b5 439.5px,#0f61af 440.5px,#1373ae 441.5px,#156ab0 442.5px,#1a94a8 444.5px,#1eb190 446.5px,#0eaf7c 447.5px,#067c63 448.5px,#066875 449.5px,#061686 450.5px,#230043 451.5px,#2b0054 452.5px,#2d0057 453.5px)"></i>
<i style="background:linear-gradient(#2d0057 415.5px,#2e0464 416.5px,#0f12b4 417.5px,#0c18b7 418.5px,#0f0cb2 419.5px,#062287 420.5px,#0b0781 421.5px,#190676 423.5px,#29004f 424.5px,#2f0359 427.5px,#120cb2 428.5px,#0b40b2 429.5px,#0b57af 430.5px,#0a29b6 431.5px,#210a98 432.5px,#0b19b8 433.5px,#1080aa 434.5px,#159f9c 435.5px,#089d89 436.5px,#06697a 437.5px,#072195 438.5px,#1011b4 439.5px,#0f58b1 440.5px,#147dac 441.5px,#1b96a8 444.5px,#1db28d 446.5px,#08af72 447.5px,#067e5c 448.5px,#066e70 449.5px,#062483 450.5px,#220042 451.5px,#2b0053 452.5px,#2d0057 453.5px)"></i>
<i style="background:linear-gradient(#2d0057 415.5px,#2e0462 416.5px,#0f11b4 417.5px,#0812a1 418.5px,#0c0681 419.5px,#061186 420.5px,#17066e 421.5px,#20045e 422.5px,#2b0052 424.5px,#2f0359 427.5px,#110eb3 428.5px,#0a4db0 429.5px,#075e8f 430.5px,#063481 431.5px,#130678 432.5px,#0e0db3 433.5px,#0860ab 434.5px,#066678 435.5px,#066b73 436.5px,#065a7a 437.5px,#071087 438.5px,#120ab1 439.5px,#0f46b3 440.5px,#1483ab 441.5px,#1894a7 442.5px,#1a9aa6 444.5px,#1cb18b 446.5px,#07a668 447.5px,#068057 448.5px,#06736b 449.5px,#063281 450.5px,#210040 451.5px,#2b0053 452.5px,#2d0057 453.5px)"></i>
<i style="background:linear-gradient(#2d0057 416.5px,#1208a2 417.5px,#0a0983 418.5px,#19066b 419.5px,#120676 420.5px,#250047 421.5px,#2c0055 424.5px,#2f0259 427.5px,#250a91 428.5px,#06168d 429.5px,#063580 430.5px,#061985 431.5px,#1f0456 432.5px,#1f0458 433.5px,#070f85 434.5px,#062f81 435.5px,#063381 436.5px,#061686 437.5px,#0d0684 438.5px,#130aaf 439.5px,#0e34b6 440.5px,#147eac 441.5px,#1893a7 442.5px,#1999a5 444.5px,#19b08a 446.5px,#079b61 447.5px,#068154 448.5px,#067767 449.5px,#063d7f 450.5px,#210040 451.5px,#2b0053 452.5px,#2d0057 453.5px)"></i>
<i style="background:linear-gradient(#2d0057 416.5px,#23066c 417.5px,#1c0671 418.5px,#250047 419.5px,#2c0056 423.5px,#2e0158 427.5px,#2a0051 428.5px,#1e055d 429.5px,#120676 430.5px,#250047 432.5px,#210042 434.5px,#1b0667 435.5px,#0c078a 437.5px,#0f10b4 438.5px,#0f12b4 439.5px,#0e28b8 440.5px,#1464b1 441.5px,#1887ac 442.5px,#1a97a7 444.5px,#16ae8b 446.5px,#07905c 447.5px,#068054 448.5px,#067866 449.5px,#06427e 450.5px,#210040 451.5px,#2b0053 452.5px,#2d0057 453.5px)"></i>
<i style="background:linear-gradient(#2d0057 416.5px,#29004f 418.5px,#2f0258 422.5px,#2e0157 427.5px,#260049 430.5px,#2b0054 433.5px,#27004b 435.5px,#230994 436.5px,#0d16b6 437.5px,#0a25b7 438.5px,#0c21b8 439.5px,#1034b7 440.5px,#1462b1 441.5px,#1986ac 442.5px,#1c99a8 444.5px,#11ab8c 446.5px,#06885c 447.5px,#067f58 448.5px,#067569 449.5px,#063f7f 450.5px,#210040 451.5px,#2b0053 452.5px,#2d0057 453.5px)"></i>
<i style="background:linear-gradient(#2d0057 435.5px,#1f0a9c 436.5px,#0a1eb8 437.5px,#0b37b4 438.5px,#0e38b5 439.5px,#114cb3 440.5px,#1681ad 441.5px,#1b99a7 442.5px,#1da2a0 443.5px,#19a19d 445.5px,#0da68e 446.5px,#068361 447.5px,#067c5f 448.5px,#06706e 449.5px,#063580 450.5px,#210040 451.5px,#2b0053 452.5px,#2d0057 453.5px)"></i>
<i style="background:linear-gradient(#2d0057 421.5px,#220b97 423.5px,#2f0359 424.5px,#2f0359 430.5px,#2b0980 431.5px,#290b8c 432.5px,#2f0359 433.5px,#2f0259 435.5px,#270a8e 436.5px,#0c17b7 437.5px,#0e3fb4 439.5px,#1362b1 440.5px,#1993a8 441.5px,#1eaf93 442.5px,#20b28f 443.5px,#18a29b 445.5px,#0ea392 446.5px,#068469 447.5px,#067866 448.5px,#066a74 449.5px,#062982 450.5px,#210041 451.5px,#2b0053 452.5px,#2d0057 453.5px)"></i>
<i style="background:linear-gradient(#2d0057 421.5px,#0e14b5 422.5px,#0b26b7 423.5px,#120bb1 424.5px,#2a0a88 425.5px,#2f0258 426.5px,#2e0157 427.5px,#2f0359 429.5px,#1d0b9f 430.5px,#0b25b7 431.5px,#0b32b5 432.5px,#0e0fb3 433.5px,#2a0051 434.5px,#2e035d 436.5px,#170aa8 437.5px,#0c16b7 438.5px,#0e3bb5 439.5px,#1b9fa1 441.5px,#20b685 442.5px,#20b880 443.5px,#18a697 445.5px,#15a694 446.5px,#079377 447.5px,#067668 448.5px,#066776 449.5px,#062284 450.5px,#220041 451.5px,#2b0053 452.5px,#2d0057 453.5px)"></i>
<i style="background:linear-gradient(#2d0057 420.5px,#2c087b 421.5px,#0b37b4 422.5px,#0b57af 423.5px,#0a25b7 424.5px,#0c16b7 425.5px,#1608a0 426.5px,#2a0051 427.5px,#2f0359 429.5px,#100fb3 430.5px,#0a49b1 431.5px,#074691 432.5px,#061586 433.5px,#23045e 434.5px,#2b0053 435.5px,#2d0465 437.5px,#150aad 438.5px,#0d33b6 439.5px,#1576ae 440.5px,#1ca29f 441.5px,#20b686 442.5px,#1cb77c 443.5px,#1baf91 445.5px,#1caf92 446.5px,#10ad86 447.5px,#067b67 448.5px,#066974 449.5px,#062783 450.5px,#210040 451.5px,#2b0053 452.5px,#2d0057 453.5px)"></i>
<i style="background:linear-gradient(#2d0057 420.5px,#2b0982 421.5px,#0b3eb3 422.5px,#0a5ead 423.5px,#072f9b 424.5px,#062c8a 425.5px,#080e86 426.5px,#27004a 427.5px,#2f0259 429.5px,#210a98 430.5px,#06158d 431.5px,#061d84 432.5px,#0b0881 433.5px,#27004b 434.5px,#2f0259 437.5px,#260b90 438.5px,#0b2ab7 439.5px,#1477ae 440.5px,#1ba0a0 441.5px,#1eb091 442.5px,#14b27e 443.5px,#20b588 446.5px,#1cb67f 447.5px,#068a63 448.5px,#06726c 449.5px,#063780 450.5px,#210040 451.5px,#2b0052 452.5px,#2d0057 453.5px)"></i>
<i style="background:linear-gradient(#2d0057 420.5px,#2e045f 421.5px,#091ab8 422.5px,#062c83 423.5px,#061985 424.5px,#062a82 425.5px,#070f85 426.5px,#26004a 427.5px,#2e0158 429.5px,#2a0051 430.5px,#1f045b 432.5px,#250048 433.5px,#2d0057 435.5px,#2f0359 437.5px,#2c0776 438.5px,#0b1eb8 439.5px,#1372ae 440.5px,#1a9ca3 441.5px,#12ac8b 443.5px,#1fb782 445.5px,#1fbb71 447.5px,#079d5b 448.5px,#067c5f 449.5px,#06507c 450.5px,#210040 451.5px,#2a0052 452.5px,#2d0057 453.5px)"></i>
<i style="background:linear-gradient(#2d0057 421.5px,#160675 422.5px,#0b0882 423.5px,#0d067f 424.5px,#070f85 425.5px,#0c067f 426.5px,#28004d 427.5px,#2d0057 429.5px,#28004e 432.5px,#2f035d 438.5px,#0d16b7 439.5px,#1166af 440.5px,#1895a7 441.5px,#1797a5 442.5px,#1eb28d 444.5px,#21bc70 446.5px,#1fbb61 447.5px,#079646 448.5px,#06824f 449.5px,#066078 450.5px,#210040 451.5px,#2a0050 452.5px,#2d0057 453.5px)"></i>
<i style="background:linear-gradient(#2d0057 421.5px,#220042 424.5px,#1e0667 425.5px,#25014f 426.5px,#2d0056 428.5px,#2f0359 438.5px,#1010b3 439.5px,#168aa9 441.5px,#188fa9 442.5px,#1c9fa1 443.5px,#20b191 444.5px,#20bb68 446.5px,#1cba50 447.5px,#078833 448.5px,#068344 449.5px,#066975 450.5px,#200144 451.5px,#2d0057 453.5px)"></i>
<i style="background:linear-gradient(#2d0057 423.5px,#27004c 424.5px,#2d0057 428.5px,#2f0359 438.5px,#140bae 439.5px,#0d35b5 440.5px,#1479ad 441.5px,#1c9da4 443.5px,#20b193 444.5px,#1ebb64 446.5px,#0ab33b 447.5px,#07842d 448.5px,#068340 449.5px,#066c72 450.5px,#200148 451.5px,#2d0057 453.5px)"></i>
<i style="background:linear-gradient(#2d0057 419.5px,#2d066f 420.5px,#2f0359 421.5px,#2f0359 422.5px,#2d0671 423.5px,#2a0051 425.5px,#2f0359 438.5px,#1b0ba3 439.5px,#0b1db8 440.5px,#1260b0 441.5px,#1787ab 442.5px,#1c9ca4 443.5px,#1db87d 445.5px,#12b760 446.5px,#078b34 447.5px,#068333 448.5px,#068346 449.5px,#066875 450.5px,#210040 451.5px,#2d0057 453.5px)"></i>
<i style="background:linear-gradient(#2d0057 418.5px,#170baa 419.5px,#0d15b6 420.5px,#1d0ba0 421.5px,#2d066b 422.5px,#100db2 423.5px,#100795 424.5px,#2a0051 425.5px,#2d0057 427.5px,#2f0359 438.5px,#200b9a 439.5px,#0d16b6 440.5px,#1689aa 442.5px,#1aa798 444.5px,#11b081 445.5px,#079b58 446.5px,#06843e 447.5px,#068340 448.5px,#068152 449.5px,#065e79 450.5px,#210040 451.5px,#2a0051 452.5px,#2d0057 453.5px)"></i>
<i style="background:linear-gradient(#2d0057 418.5px,#120bb1 419.5px,#0b1fb8 420.5px,#0e12b5 421.5px,#1f0998 422.5px,#0d0684 423.5px,#19077d 424.5px,#2a0051 425.5px,#2f0359 430.5px,#2d0670 431.5px,#0e13b5 432.5px,#0e13b5 433.5px,#2b0677 434.5px,#2c0055 435.5px,#2f0359 438.5px,#270b8f 439.5px,#0f11b4 440.5px,#0e40b4 441.5px,#1484aa 442.5px,#1696a5 443.5px,#0f9a9c 444.5px,#089b83 445.5px,#06875e 446.5px,#06834d 447.5px,#068251 448.5px,#067a64 449.5px,#06497d 450.5px,#210040 451.5px,#2a0052 452.5px,#2d0057 453.5px)"></i>
<i style="background:linear-gradient(#2d0057 418.5px,#2a0a88 419.5px,#0d13b5 420.5px,#09129e 421.5px,#0e067d 422.5px,#20045a 423.5px,#27004c 424.5px,#2d0057 426.5px,#2f0359 430.5px,#1a0ba3 431.5px,#0b3bb3 432.5px,#093cb2 433.5px,#0f067d 434.5px,#29004f 435.5px,#2f0359 438.5px,#2b0981 439.5px,#120bb1 440.5px,#0c28b7 441.5px,#1268af 442.5px,#1285a9 443.5px,#0c8ca4 444.5px,#078b8d 445.5px,#067e6b 446.5px,#067d5e 447.5px,#067b63 448.5px,#066c72 449.5px,#062c82 450.5px,#210040 451.5px,#2b0053 452.5px,#2d0057 453.5px)"></i>
<i style="background:linear-gradient(#2d0057 418.5px,#2e035f 419.5px,#0e09a5 420.5px,#080e85 421.5px,#0e067c 422.5px,#260049 423.5px,#2c0056 425.5px,#2f0359 430.5px,#1f0a9c 431.5px,#0830b4 432.5px,#062583 433.5px,#120676 434.5px,#29004f 435.5px,#2f0359 438.5px,#2c0774 439.5px,#190ba6 440.5px,#0c18b7 441.5px,#136fae 443.5px,#1285a9 444.5px,#0a8ea2 445.5px,#067979 446.5px,#067569 447.5px,#06706e 448.5px,#065f78 449.5px,#061186 450.5px,#230044 451.5px,#2b0054 452.5px,#2d0057 453.5px)"></i>
<i style="background:linear-gradient(#2d0057 419.5px,#18067a 420.5px,#0b0681 421.5px,#1b0670 422.5px,#29004e 423.5px,#2e0158 425.5px,#2d0057 431.5px,#0c0681 432.5px,#0b0681 433.5px,#24014c 434.5px,#2f0359 438.5px,#2d0772 439.5px,#1c0ba2 440.5px,#0d15b6 441.5px,#1365b0 443.5px,#1582ac 444.5px,#118da6 445.5px,#077b85 446.5px,#06706f 447.5px,#066875 448.5px,#06537b 449.5px,#0a0a82 450.5px,#250047 451.5px,#2d0057 452.5px)"></i>
<i style="background:linear-gradient(#2d0057 419.5px,#270150 420.5px,#220564 421.5px,#27004c 422.5px,#2f0359 426.5px,#2b0982 427.5px,#2b0982 428.5px,#2e0158 429.5px,#27004b 432.5px,#2f0359 438.5px,#2a0a86 439.5px,#170baa 440.5px,#0d15b6 441.5px,#1366b0 443.5px,#1683ac 444.5px,#138da7 445.5px,#077b89 446.5px,#066c72 447.5px,#066377 448.5px,#06447e 449.5px,#100679 450.5px,#26004a 451.5px,#2d0057 452.5px)"></i>
<i style="background:linear-gradient(#2d0057 419.5px,#2a0051 421.5px,#2f0259 425.5px,#2d0772 426.5px,#120bb1 427.5px,#1109b0 428.5px,#270364 429.5px,#2c0054 430.5px,#2f0359 438.5px,#120bb1 439.5px,#0c19b8 441.5px,#136aaf 443.5px,#1583ab 444.5px,#118ba6 445.5px,#077484 446.5px,#066975 447.5px,#065d79 448.5px,#063580 449.5px,#1a0669 450.5px,#27004c 451.5px,#2d0057 452.5px)"></i>
<i style="background:linear-gradient(#2d0057 416.5px,#260a8e 417.5px,#2d0057 418.5px,#2f0258 425.5px,#2c0777 426.5px,#100bb1 427.5px,#0c0888 428.5px,#240463 429.5px,#2b0054 430.5px,#2f0359 437.5px,#2b0983 438.5px,#0b2fb5 439.5px,#0d20b9 441.5px,#136baf 443.5px,#1582ac 444.5px,#0f87a7 445.5px,#066e83 446.5px,#066377 447.5px,#06557b 448.5px,#062483 449.5px,#1f0456 450.5px,#29004e 451.5px,#2d0057 452.5px)"></i>
<i style="background:linear-gradient(#2d0057 415.5px,#2c066f 416.5px,#1508a5 417.5px,#290260 418.5px,#2c0056 419.5px,#2e0157 426.5px,#1f0778 427.5px,#1e0775 428.5px,#29004e 429.5px,#2d0057 431.5px,#2f0359 436.5px,#2d0771 437.5px,#0e13b5 438.5px,#0d6aad 439.5px,#0f51b2 440.5px,#0f29b8 441.5px,#1368b0 443.5px,#157ead 444.5px,#1284aa 445.5px,#077292 446.5px,#065e7a 447.5px,#06497d 448.5px,#061785 449.5px,#200147 450.5px,#2d0057 452.5px)"></i>
<i style="background:linear-gradient(#2d0057 416.5px,#280363 417.5px,#2b0053 418.5px,#2e0157 425.5px,#290050 428.5px,#2f0359 436.5px,#180ba8 437.5px,#0b37b4 438.5px,#1187a8 439.5px,#126eae 440.5px,#1031b7 441.5px,#146ab0 443.5px,#177dae 444.5px,#1184a9 446.5px,#066384 447.5px,#06467e 448.5px,#061486 449.5px,#200144 450.5px,#2d0057 452.5px)"></i>
<i style="background:linear-gradient(#2d0057 436.5px,#110eb3 437.5px,#0d4cb1 438.5px,#138fa6 439.5px,#137cac 440.5px,#123eb6 441.5px,#177eae 443.5px,#1989ac 444.5px,#1a8faa 446.5px,#108aa6 447.5px,#06557e 448.5px,#062284 449.5px,#1f0353 450.5px,#28004e 451.5px,#2d0057 452.5px)"></i>
<i style="background:linear-gradient(#2d0057 436.5px,#150bad 437.5px,#0c3eb3 438.5px,#138ba7 439.5px,#137eac 440.5px,#1454b3 441.5px,#1680ad 442.5px,#1a97a7 443.5px,#1da0a1 444.5px,#1ea2a0 446.5px,#1ba19f 447.5px,#07758b 448.5px,#06407f 449.5px,#17066e 450.5px,#27004b 451.5px,#2d0057 452.5px)"></i>
<i style="background:linear-gradient(#2d0057 436.5px,#2b0982 437.5px,#0b19b8 438.5px,#1281aa 439.5px,#147eac 440.5px,#166db0 441.5px,#1993a8 442.5px,#1dad94 443.5px,#20b48a 444.5px,#20b588 447.5px,#079280 448.5px,#065f79 449.5px,#090b83 450.5px,#250047 451.5px,#2d0057 452.5px)"></i>
<i style="background:linear-gradient(#2d0057 434.5px,#2a0a88 435.5px,#2f0359 437.5px,#140bae 438.5px,#1073ac 439.5px,#1481ac 440.5px,#167bae 441.5px,#1a9aa5 442.5px,#1fb28d 443.5px,#21b97f 444.5px,#21bc74 446.5px,#1dba6e 447.5px,#068a5a 448.5px,#066f6f 449.5px,#061f84 450.5px,#230043 451.5px,#2b0053 452.5px,#2d0057 453.5px)"></i>
<i style="background:linear-gradient(#2d0057 434.5px,#180aa8 435.5px,#220995 436.5px,#2f0258 437.5px,#270b8f 438.5px,#0e68ad 439.5px,#1284aa 440.5px,#137aac 441.5px,#1893a8 442.5px,#1dac95 443.5px,#1fbb74 445.5px,#1dba68 446.5px,#0ab553 447.5px,#068448 448.5px,#067a64 449.5px,#063680 450.5px,#210040 451.5px,#2b0053 452.5px,#2d0057 453.5px)"></i>
<i style="background:linear-gradient(#2d0057 434.5px,#230891 435.5px,#2e0158 437.5px,#2d066c 438.5px,#0a56af 439.5px,#087da6 440.5px,#075a96 441.5px,#0b7fa7 442.5px,#149b9f 443.5px,#17af8c 444.5px,#17b676 445.5px,#0fb660 446.5px,#068f40 447.5px,#068444 448.5px,#067c5f 449.5px,#06417e 450.5px,#210040 451.5px,#2b0053 452.5px,#2d0057 453.5px)"></i>
<i style="background:linear-gradient(#2d0057 428.5px,#2c0776 429.5px,#2f0259 430.5px,#2b0053 436.5px,#2f0259 438.5px,#0919b8 439.5px,#063f87 440.5px,#063188 441.5px,#085aa2 442.5px,#0f89a6 443.5px,#10af81 445.5px,#07a861 446.5px,#068743 447.5px,#068348 448.5px,#067b61 449.5px,#06417e 450.5px,#210040 451.5px,#2b0052 452.5px,#2d0057 453.5px)"></i>
<i style="background:linear-gradient(#2d0057 428.5px,#0f12b4 429.5px,#1a09a1 430.5px,#2a0052 431.5px,#2f0258 438.5px,#28046c 439.5px,#0b0989 440.5px,#081094 441.5px,#0a3db3 442.5px,#1178ac 443.5px,#1594a6 444.5px,#13a892 445.5px,#08a470 446.5px,#06864c 447.5px,#068250 448.5px,#067766 449.5px,#063b7f 450.5px,#210040 451.5px,#2b0053 452.5px,#2d0057 453.5px)"></i>
<i style="background:linear-gradient(#2d0057 427.5px,#2c0777 428.5px,#0a1db8 429.5px,#0b0989 430.5px,#28004e 431.5px,#2e0157 433.5px,#2e0158 439.5px,#290679 440.5px,#1409ab 441.5px,#0c21b8 442.5px,#125eb1 443.5px,#178aaa 444.5px,#19a09e 445.5px,#0eac86 446.5px,#068757 447.5px,#067f58 448.5px,#06736b 449.5px,#063381 450.5px,#210040 451.5px,#2b0053 452.5px,#2d0057 453.5px)"></i>
<i style="background:linear-gradient(#2d0057 428.5px,#0a0c8e 429.5px,#14067e 430.5px,#29004f 431.5px,#2e0157 433.5px,#2f0259 439.5px,#2e0460 440.5px,#220a97 441.5px,#0d15b6 442.5px,#1682ac 444.5px,#1b9aa6 445.5px,#19ac93 446.5px,#079164 447.5px,#067e5c 448.5px,#06706e 449.5px,#062e82 450.5px,#210040 451.5px,#2b0053 452.5px,#2d0057 453.5px)"></i>
<i style="background:linear-gradient(#2d0057 428.5px,#240463 429.5px,#27004c 430.5px,#2d0057 432.5px,#2f035b 440.5px,#2a0a89 441.5px,#1010b3 442.5px,#0e3db5 443.5px,#1579ae 444.5px,#1a96a8 445.5px,#1daa97 446.5px,#08a776 447.5px,#067e5c 448.5px,#06716d 449.5px,#063081 450.5px,#210040 451.5px,#2b0053 452.5px,#2d0057 453.5px)"></i>
<i style="background:linear-gradient(#2d0057 428.5px,#2f035a 437.5px,#270b8f 438.5px,#2b0a83 439.5px,#2d056a 440.5px,#2b097d 441.5px,#120bb1 442.5px,#0d31b6 443.5px,#1470af 444.5px,#1a93a8 445.5px,#1eaa99 446.5px,#0eaf7d 447.5px,#067f5b 448.5px,#06736b 449.5px,#063680 450.5px,#210040 451.5px,#2b0053 452.5px,#2d0057 453.5px)"></i>
<i style="background:linear-gradient(#2d0057 436.5px,#230b94 437.5px,#0f11b4 438.5px,#120bb1 439.5px,#2b0a84 440.5px,#2c0777 441.5px,#170ba9 442.5px,#0c25b7 443.5px,#1367b0 444.5px,#1990a9 445.5px,#1ea89a 446.5px,#12b17f 447.5px,#068059 448.5px,#067569 449.5px,#063b7f 450.5px,#210040 451.5px,#2b0053 452.5px,#2d0057 453.5px)"></i>
<i style="background:linear-gradient(#2d0057 436.5px,#120cb1 437.5px,#0b24b7 438.5px,#0c17b7 439.5px,#210997 440.5px,#2c0774 441.5px,#1c0aa1 442.5px,#0b1bb9 443.5px,#125eb1 444.5px,#188daa 445.5px,#1da69c 446.5px,#11b07f 447.5px,#067f59 448.5px,#067668 449.5px,#063d7f 450.5px,#210040 451.5px,#2b0053 452.5px,#2d0057 453.5px)"></i>
<i style="background:linear-gradient(#2d0057 436.5px,#0f11b4 437.5px,#0b37b4 438.5px,#0a24b7 439.5px,#1808a0 440.5px,#2c0672 441.5px,#200a99 442.5px,#0c17b7 443.5px,#1155b2 444.5px,#1789ab 445.5px,#1ca39e 446.5px,#0dad80 447.5px,#067f5a 448.5px,#067569 449.5px,#063b7f 450.5px,#210040 451.5px,#2b0053 452.5px,#2d0057 453.5px)"></i>
<i style="background:linear-gradient(#2d0057 430.5px,#2f035c 431.5px,#1b0ba2 432.5px,#1b0ba3 433.5px,#2e0460 434.5px,#2f0259 435.5px,#2f0359 436.5px,#0f11b4 437.5px,#0b41b2 438.5px,#0a33b5 439.5px,#1408aa 440.5px,#2c0774 441.5px,#240a94 442.5px,#0d15b6 443.5px,#104cb3 444.5px,#1684ac 445.5px,#1b9fa1 446.5px,#09aa84 447.5px,#067d5e 448.5px,#06726c 449.5px,#063780 450.5px,#210040 451.5px,#2b0053 452.5px,#2d0057 453.5px)"></i>
<i style="background:linear-gradient(#2d0057 430.5px,#1f0b9c 431.5px,#0b1cb8 432.5px,#0a1db8 433.5px,#190793 434.5px,#2e0158 435.5px,#2f0359 436.5px,#110db2 437.5px,#0d50b1 438.5px,#0d4bb2 439.5px,#0f0fb3 440.5px,#2a0a88 441.5px,#250b92 442.5px,#0e12b5 443.5px,#167fad 445.5px,#1a99a6 446.5px,#08a68a 447.5px,#067b63 448.5px,#066f6f 449.5px,#063381 450.5px,#210040 451.5px,#2b0053 452.5px,#2d0057 453.5px)"></i>
<i style="background:linear-gradient(#2d0057 418.5px,#2e0464 419.5px,#2d0057 421.5px,#2f0359 430.5px,#130bb0 431.5px,#0a34b4 432.5px,#062991 433.5px,#0b0781 434.5px,#29004f 435.5px,#2f0359 436.5px,#120cb2 437.5px,#0e68ad 438.5px,#106cae 439.5px,#0c29b7 440.5px,#140aae 441.5px,#220b97 442.5px,#0f12b4 443.5px,#0f3db5 444.5px,#1575ae 445.5px,#1993a8 446.5px,#0ba192 447.5px,#067867 448.5px,#066d71 449.5px,#063181 450.5px,#210040 451.5px,#2b0053 452.5px,#2d0057 453.5px)"></i>
<i style="background:linear-gradient(#2d0057 418.5px,#150bac 419.5px,#2a0a87 420.5px,#2b0054 421.5px,#2f0359 430.5px,#1c0aa1 431.5px,#071a98 432.5px,#061885 433.5px,#110678 434.5px,#28004d 435.5px,#2f0359 436.5px,#120cb2 437.5px,#0f7daa 438.5px,#1383aa 439.5px,#115db0 440.5px,#0c22b8 441.5px,#170baa 442.5px,#0f15b6 443.5px,#103db5 444.5px,#156faf 445.5px,#198fa9 446.5px,#119f99 447.5px,#06756b 448.5px,#066b73 449.5px,#063181 450.5px,#210040 451.5px,#2b0053 452.5px,#2d0057 453.5px)"></i>
<i style="background:linear-gradient(#2d0057 418.5px,#0b1ab9 419.5px,#100ab1 420.5px,#28004d 421.5px,#2d0057 423.5px,#2f0258 430.5px,#2a0365 431.5px,#0d067e 432.5px,#0d067e 433.5px,#22045c 434.5px,#2a0052 435.5px,#2f0359 436.5px,#130bb1 437.5px,#107faa 438.5px,#158ca8 439.5px,#1486aa 440.5px,#1164af 441.5px,#0f1eba 442.5px,#0f27b8 443.5px,#1570af 445.5px,#198eaa 446.5px,#149e9c 447.5px,#06756c 448.5px,#066b73 449.5px,#063381 450.5px,#210040 451.5px,#2b0053 452.5px,#2d0057 453.5px)"></i>
<i style="background:linear-gradient(#2d0057 418.5px,#0a36b4 419.5px,#080e8c 420.5px,#26004a 421.5px,#2c0055 422.5px,#2f0258 425.5px,#2e0157 430.5px,#260049 433.5px,#2f0359 436.5px,#1e0b9e 437.5px,#0e72ac 438.5px,#158ea8 439.5px,#1698a3 440.5px,#158ba8 441.5px,#135fb1 442.5px,#156bb0 444.5px,#198fa9 446.5px,#139f9b 447.5px,#06756c 448.5px,#066b73 449.5px,#063381 450.5px,#210040 451.5px,#2b0053 452.5px,#2d0057 453.5px)"></i>
<i style="background:linear-gradient(#2d0057 418.5px,#0a39b3 419.5px,#070e85 420.5px,#260049 421.5px,#2f0258 423.5px,#2b0053 433.5px,#2f0359 436.5px,#2d0771 437.5px,#0b46b2 438.5px,#1383aa 439.5px,#1498a2 440.5px,#1682ac 442.5px,#1791a8 443.5px,#1886ac 445.5px,#1892a8 446.5px,#0b9d96 447.5px,#06746b 448.5px,#066a74 449.5px,#062e81 450.5px,#220041 451.5px,#2b0053 452.5px,#2d0057 453.5px)"></i>
<i style="background:linear-gradient(#2d0057 418.5px,#071a94 419.5px,#0a0982 420.5px,#27004b 421.5px,#2f035e 424.5px,#2d0771 425.5px,#2f0258 426.5px,#2f0259 434.5px,#2a0a86 435.5px,#2f0258 436.5px,#2f0259 437.5px,#0f11b4 438.5px,#1062af 439.5px,#108ca5 440.5px,#0a7ea7 441.5px,#1689aa 442.5px,#19a598 443.5px,#159e9d 444.5px,#0d86a6 445.5px,#0d8ca4 446.5px,#07817e 447.5px,#06716d 448.5px,#066676 449.5px,#062383 450.5px,#230043 451.5px,#2b0053 452.5px,#2d0057 453.5px)"></i>
<i style="background:linear-gradient(#2d0057 418.5px,#0b0888 419.5px,#1b0672 420.5px,#29004f 421.5px,#2f0359 423.5px,#150bac 424.5px,#100fb3 425.5px,#2a077d 426.5px,#2b0053 427.5px,#2f0259 433.5px,#2d066d 434.5px,#1e0a9c 435.5px,#2e0157 436.5px,#2f0258 437.5px,#2a0a86 438.5px,#0c48b2 439.5px,#0883a4 440.5px,#065a86 441.5px,#077192 442.5px,#078e7f 443.5px,#067674 444.5px,#06647f 445.5px,#076e87 446.5px,#067076 447.5px,#065e78 449.5px,#061186 450.5px,#240045 451.5px,#2b0054 452.5px,#2d0057 453.5px)"></i>
<i style="background:linear-gradient(#2d0057 418.5px,#240467 419.5px,#28004d 420.5px,#2f0259 422.5px,#2c0775 423.5px,#0b19b8 424.5px,#0a28b6 425.5px,#10067f 426.5px,#28004e 427.5px,#2c0056 428.5px,#2f0259 433.5px,#2d056b 434.5px,#1c0894 435.5px,#2b0054 436.5px,#2f0359 438.5px,#0a2cb6 439.5px,#065e84 440.5px,#06417f 441.5px,#06497f 442.5px,#066777 443.5px,#06557d 445.5px,#066082 446.5px,#066679 447.5px,#066377 448.5px,#06527c 449.5px,#0a0982 450.5px,#250047 451.5px,#2d0057 452.5px)"></i>
<i style="background:linear-gradient(#2d0057 418.5px,#2f0259 422.5px,#2b0981 423.5px,#0a21b8 424.5px,#062689 425.5px,#0b0681 426.5px,#28004d 427.5px,#2e0258 429.5px,#2d0057 434.5px,#260677 435.5px,#2b0054 436.5px,#2f0259 438.5px,#0f0bb2 439.5px,#063082 440.5px,#061c85 441.5px,#061b86 442.5px,#064281 443.5px,#063f84 445.5px,#07588c 446.5px,#06607d 447.5px,#065b7a 448.5px,#063f7f 449.5px,#110678 450.5px,#260049 451.5px,#2d0057 452.5px)"></i>
<i style="background:linear-gradient(#2d0057 422.5px,#2d0569 423.5px,#0a109d 424.5px,#061286 425.5px,#140673 426.5px,#28004e 427.5px,#2f0359 430.5px,#1f0b9b 431.5px,#180aa7 432.5px,#2e0158 433.5px,#2b0053 434.5px,#2e0258 438.5px,#260256 439.5px,#0b0782 440.5px,#0e067e 441.5px,#0d0895 442.5px,#092db5 443.5px,#0734a6 444.5px,#083aa7 445.5px,#095dad 446.5px,#066288 447.5px,#06547b 448.5px,#063481 449.5px,#17066d 450.5px,#27004b 451.5px,#2d0057 452.5px)"></i>
<i style="background:linear-gradient(#2d0057 423.5px,#180674 424.5px,#10067a 425.5px,#240252 426.5px,#2f0359 430.5px,#0e13b5 431.5px,#0c18b7 432.5px,#260151 433.5px,#2e0158 438.5px,#240049 440.5px,#260467 441.5px,#1a0aa3 442.5px,#0d45b3 443.5px,#0f4ab3 444.5px,#0f3db5 445.5px,#115fb0 446.5px,#0876a6 447.5px,#06527c 448.5px,#063181 449.5px,#19066a 450.5px,#27004c 451.5px,#2d0057 452.5px)"></i>
<i style="background:linear-gradient(#2d0057 423.5px,#27004c 425.5px,#2f0359 430.5px,#0b1ab9 431.5px,#07209a 432.5px,#21045a 433.5px,#2a0052 434.5px,#2f0259 441.5px,#190ba6 442.5px,#0d62ae 443.5px,#1061af 444.5px,#1144b5 445.5px,#107faa 447.5px,#06587d 448.5px,#063580 449.5px,#18066c 450.5px,#27004c 451.5px,#2d0057 452.5px)"></i>
<i style="background:linear-gradient(#2d0057 430.5px,#0b16b7 431.5px,#061586 432.5px,#220254 433.5px,#2b0052 434.5px,#2f0359 441.5px,#190ba5 442.5px,#0d62ae 443.5px,#1164af 444.5px,#124eb4 445.5px,#1471af 446.5px,#1487aa 447.5px,#065e7e 448.5px,#063c7f 449.5px,#150671 450.5px,#27004b 451.5px,#2d0057 452.5px)"></i>
<i style="background:linear-gradient(#2d0057 430.5px,#0e078e 431.5px,#0a0982 432.5px,#26004a 433.5px,#2d0057 435.5px,#2f0359 441.5px,#1d0b9f 442.5px,#0d47b2 443.5px,#1156b2 444.5px,#135bb2 445.5px,#1680ad 446.5px,#178fa8 447.5px,#06667f 448.5px,#06457e 449.5px,#110677 450.5px,#26004a 451.5px,#2d0057 452.5px)"></i>
<i style="background:linear-gradient(#2d0057 425.5px,#140bae 426.5px,#2d056b 427.5px,#2d0056 428.5px,#2e0158 430.5px,#230567 432.5px,#290050 433.5px,#2f0359 440.5px,#2e0462 441.5px,#180ba7 442.5px,#0e31b6 443.5px,#188aab 446.5px,#1999a6 447.5px,#066f81 448.5px,#064f7c 449.5px,#0d067e 450.5px,#260049 451.5px,#2d0057 452.5px)"></i>
<i style="background:linear-gradient(#2d0057 424.5px,#2b0980 425.5px,#0a5ead 426.5px,#08129a 427.5px,#29004f 428.5px,#2e0258 429.5px,#2a0051 432.5px,#2f0359 440.5px,#280b8c 441.5px,#0c18b8 442.5px,#1153b2 443.5px,#1886ac 445.5px,#1ca59c 447.5px,#067a7c 448.5px,#065b7a 449.5px,#0a0982 450.5px,#250047 451.5px,#2d0057 452.5px)"></i>
<i style="background:linear-gradient(#2d0057 424.5px,#2d066f 425.5px,#063d8d 426.5px,#090c84 427.5px,#2b0053 428.5px,#2f0359 429.5px,#2f0359 440.5px,#110eb2 441.5px,#0e59b0 442.5px,#1589a9 443.5px,#1b97a8 445.5px,#1eb190 447.5px,#06806e 448.5px,#066477 449.5px,#070e85 450.5px,#240045 451.5px,#2b0054 452.5px,#2d0057 453.5px)"></i>
<i style="background:linear-gradient(#2d0057 425.5px,#200669 426.5px,#240045 427.5px,#2f0259 428.5px,#2b0a85 429.5px,#2a0b8a 430.5px,#2e0258 431.5px,#2f0359 440.5px,#0c18b8 441.5px,#1180aa 442.5px,#189e9f 443.5px,#1da39f 445.5px,#1db681 447.5px,#06805e 448.5px,#066c72 449.5px,#061785 450.5px,#230043 451.5px,#2b0054 452.5px,#2d0057 453.5px)"></i>
<i style="background:linear-gradient(#2d0057 425.5px,#29004f 426.5px,#2d0057 427.5px,#1f0b9d 428.5px,#0b34b4 429.5px,#0a38b4 430.5px,#110788 431.5px,#290050 432.5px,#2d0056 433.5px,#2f0359 440.5px,#0d16b7 441.5px,#117fab 442.5px,#18a09e 443.5px,#1ba59b 445.5px,#1eb28c 446.5px,#0db46f 447.5px,#068155 448.5px,#06716c 449.5px,#062284 450.5px,#220042 451.5px,#2b0053 452.5px,#2d0057 453.5px)"></i>
<i style="background:linear-gradient(#2d0057 427.5px,#1b0ba3 428.5px,#0a3cb3 429.5px,#073699 430.5px,#0d067f 431.5px,#29004e 432.5px,#2d0056 433.5px,#2f0359 440.5px,#160bab 441.5px,#0f5db0 442.5px,#1491a6 443.5px,#088ca1 444.5px,#0d989c 445.5px,#12ad89 446.5px,#079158 447.5px,#068054 448.5px,#06726c 449.5px,#062383 450.5px,#220042 451.5px,#2b0053 452.5px,#2d0057 453.5px)"></i>
<i style="background:linear-gradient(#2d0057 428.5px,#160aaa 429.5px,#0c088a 430.5px,#210040 431.5px,#2d0056 433.5px,#2f0359 440.5px,#2b0981 441.5px,#0c2fb6 442.5px,#0e7ea9 443.5px,#07688e 444.5px,#077c93 445.5px,#079685 446.5px,#068259 447.5px,#067e5b 448.5px,#066e70 449.5px,#061c85 450.5px,#230043 451.5px,#2b0053 452.5px,#2d0057 453.5px)"></i>
<i style="background:linear-gradient(#2d0057 428.5px,#110eb2 429.5px,#071ea6 430.5px,#210040 431.5px,#2d0056 433.5px,#2f0359 440.5px,#2e0568 441.5px,#0c16b7 442.5px,#0c62ad 443.5px,#074c91 444.5px,#076b94 445.5px,#07818a 446.5px,#067c65 447.5px,#067866 448.5px,#066776 449.5px,#061186 450.5px,#230044 451.5px,#2b0054 452.5px,#2d0057 453.5px)"></i>
<i style="background:linear-gradient(#2d0057 428.5px,#0a2fb5 429.5px,#0861a5 430.5px,#150672 431.5px,#28004d 432.5px,#2c0056 433.5px,#2f0359 440.5px,#2d0772 441.5px,#1010b3 442.5px,#0b42b3 443.5px,#0736a2 444.5px,#085bab 445.5px,#087e9d 446.5px,#067271 447.5px,#066f6f 448.5px,#065e79 449.5px,#090c84 450.5px,#240046 451.5px,#2b0054 452.5px,#2d0057 453.5px)"></i>
<i style="background:linear-gradient(#2d0057 428.5px,#0e12b5 429.5px,#07428e 430.5px,#0b0781 431.5px,#27004b 432.5px,#2c0055 433.5px,#2f0359 440.5px,#220b97 441.5px,#100fb3 442.5px,#0b1eb8 443.5px,#0a22b7 444.5px,#117cab 446.5px,#067182 447.5px,#066776 448.5px,#06577b 449.5px,#0a0882 450.5px,#250047 451.5px,#2d0057 452.5px)"></i>
<i style="background:linear-gradient(#2d0057 420.5px,#2b0981 421.5px,#190aa5 423.5px,#2d0057 424.5px,#2f0259 428.5px,#2e0462 429.5px,#06218d 430.5px,#0a0a83 431.5px,#26004a 432.5px,#2c0055 433.5px,#2f035b 440.5px,#0f12b4 441.5px,#0e19b8 444.5px,#1041b5 445.5px,#1573ae 446.5px,#0d89a5 447.5px,#066377 448.5px,#06517c 449.5px,#0b0781 450.5px,#250047 451.5px,#2d0057 452.5px)"></i>
<i style="background:linear-gradient(#2d0057 419.5px,#2d066d 420.5px,#110db2 421.5px,#0d10b4 423.5px,#270361 424.5px,#2d0056 425.5px,#2f0258 429.5px,#0913a5 430.5px,#0b0785 431.5px,#27004c 432.5px,#2e0157 433.5px,#2f0359 439.5px,#290b8c 440.5px,#0b30b5 441.5px,#0b33b5 442.5px,#0e15b6 443.5px,#0e1ab8 444.5px,#1677ae 446.5px,#1790a8 447.5px,#06697b 448.5px,#06567b 449.5px,#0a0982 450.5px,#250047 451.5px,#2d0057 452.5px)"></i>
<i style="background:linear-gradient(#2d0057 419.5px,#250b91 420.5px,#0b19b8 421.5px,#0d0fb4 422.5px,#0b0989 423.5px,#240568 424.5px,#2e0158 425.5px,#2f0259 429.5px,#190aa5 430.5px,#230a95 431.5px,#2f0259 432.5px,#2f0359 439.5px,#190ba6 440.5px,#0b4fb0 441.5px,#0e51b1 442.5px,#0d1db9 443.5px,#0f27b8 444.5px,#1784ac 446.5px,#1a99a6 447.5px,#077c86 448.5px,#065d79 449.5px,#080e84 450.5px,#240045 451.5px,#2b0054 452.5px,#2d0057 453.5px)"></i>
<i style="background:linear-gradient(#2d0057 419.5px,#1f0b9c 420.5px,#0a1fb8 421.5px,#0b0884 422.5px,#18066e 423.5px,#270884 424.5px,#2a0987 425.5px,#2e0158 426.5px,#2f0359 429.5px,#2b0a84 430.5px,#100fb3 431.5px,#1010b4 432.5px,#2a0a88 433.5px,#2d0057 434.5px,#2f0359 439.5px,#140baf 440.5px,#0c5dae 441.5px,#0f60af 442.5px,#0f32b7 443.5px,#1142b5 444.5px,#1573af 445.5px,#1a92a9 446.5px,#1da69c 447.5px,#078f84 448.5px,#066676 449.5px,#061686 450.5px,#230044 451.5px,#2b0054 452.5px,#2d0057 453.5px)"></i>
<i style="background:linear-gradient(#2d0057 419.5px,#250a91 420.5px,#07108d 421.5px,#130674 422.5px,#200250 423.5px,#1a09a1 424.5px,#110bb1 425.5px,#250675 426.5px,#2b0053 427.5px,#2f0359 429.5px,#190ba6 430.5px,#0b4db0 431.5px,#0a67ac 432.5px,#072494 433.5px,#220356 434.5px,#2b0053 435.5px,#2f0359 439.5px,#180ba8 440.5px,#0c57af 441.5px,#1060b0 442.5px,#1145b4 443.5px,#1360b1 444.5px,#1888ab 445.5px,#1fb190 447.5px,#078f71 448.5px,#066d71 449.5px,#062483 450.5px,#220042 451.5px,#2b0053 452.5px,#2d0057 453.5px)"></i>
<i style="background:linear-gradient(#2d0057 419.5px,#2a0367 420.5px,#0c0684 421.5px,#20045d 422.5px,#240047 423.5px,#1109af 424.5px,#0a0e99 425.5px,#290050 427.5px,#2f0259 429.5px,#1b0aa2 430.5px,#0950af 431.5px,#06547c 432.5px,#063081 433.5px,#1d066c 434.5px,#2a0051 435.5px,#2f0359 439.5px,#250b92 440.5px,#0b44b2 441.5px,#1058b1 442.5px,#1358b2 443.5px,#1a95a8 445.5px,#1fac97 446.5px,#20b783 447.5px,#06865c 448.5px,#06736b 449.5px,#062d82 450.5px,#210041 451.5px,#2b0053 452.5px,#2d0057 453.5px)"></i>
<i style="background:linear-gradient(#2d0057 419.5px,#2a0052 420.5px,#240568 421.5px,#27004c 422.5px,#29004f 423.5px,#140792 424.5px,#0a0a84 425.5px,#1e0670 426.5px,#2a0051 427.5px,#2d0057 430.5px,#0a0983 431.5px,#061885 432.5px,#090b83 433.5px,#250048 434.5px,#2d0057 436.5px,#2f0359 439.5px,#2d0772 440.5px,#0b2bb6 441.5px,#1158b1 442.5px,#1473ae 443.5px,#1c9ea3 445.5px,#20b290 446.5px,#1cb979 447.5px,#068353 448.5px,#067667 449.5px,#063181 450.5px,#210040 451.5px,#2b0053 452.5px,#2d0057 453.5px)"></i>
<i style="background:linear-gradient(#2d0057 420.5px,#2b0054 423.5px,#23066d 424.5px,#180679 425.5px,#260153 426.5px,#2d0057 429.5px,#230044 432.5px,#2c0055 435.5px,#2f0359 439.5px,#2c0775 440.5px,#0b1ab9 441.5px,#1162b0 442.5px,#1686ab 443.5px,#1da0a1 445.5px,#20b38e 446.5px,#11b670 447.5px,#068251 448.5px,#067866 449.5px,#063381 450.5px,#210040 451.5px,#2b0053 452.5px,#2d0057 453.5px)"></i>
<i style="background:linear-gradient(#2d0057 423.5px,#28004e 425.5px,#2d0057 428.5px,#2a0051 432.5px,#2f0359 438.5px,#240b93 439.5px,#120cb2 440.5px,#0e19b8 441.5px,#125db1 442.5px,#1788aa 443.5px,#1c9da3 445.5px,#1db090 446.5px,#08aa69 447.5px,#068152 448.5px,#067767 449.5px,#063281 450.5px,#210040 451.5px,#2b0053 452.5px,#2d0057 453.5px)"></i>
<i style="background:linear-gradient(#2d0057 438.5px,#0b26b7 439.5px,#0b44b2 440.5px,#0f23b9 441.5px,#188caa 443.5px,#1895a7 445.5px,#18a994 446.5px,#07a16b 447.5px,#068055 448.5px,#067668 449.5px,#063281 450.5px,#210040 451.5px,#2b0053 452.5px,#2d0057 453.5px)"></i>
<i style="background:linear-gradient(#2d0057 437.5px,#2a0a87 438.5px,#0b5ead 439.5px,#0f7bab 440.5px,#113fb5 441.5px,#1474ae 442.5px,#189ba2 443.5px,#0f8ba6 445.5px,#14a09a 446.5px,#08a576 447.5px,#067f58 448.5px,#067668 449.5px,#063580 450.5px,#210040 451.5px,#2b0053 452.5px,#2d0057 453.5px)"></i>
<i style="background:linear-gradient(#2d0057 423.5px,#2c0878 424.5px,#2a0a89 425.5px,#2d0057 426.5px,#2f0359 432.5px,#2a0a87 433.5px,#2e0158 434.5px,#2f0359 437.5px,#230b95 438.5px,#0b6fab 439.5px,#1083a8 440.5px,#0e45b3 441.5px,#1381ab 442.5px,#13a296 443.5px,#07808b 444.5px,#077899 445.5px,#1499a1 446.5px,#0dac84 447.5px,#067f5a 448.5px,#067767 449.5px,#063980 450.5px,#210040 451.5px,#2b0053 452.5px,#2d0057 453.5px)"></i>
<i style="background:linear-gradient(#2d0057 423.5px,#100fb3 424.5px,#0d13b5 425.5px,#270155 426.5px,#2f0359 431.5px,#2a0a89 432.5px,#120bb1 433.5px,#2b0053 434.5px,#2f0359 437.5px,#2b0983 438.5px,#0a56af 439.5px,#065481 440.5px,#061f87 441.5px,#07588b 442.5px,#067477 443.5px,#066679 444.5px,#076891 445.5px,#1794a6 446.5px,#16ae8d 447.5px,#06815b 448.5px,#067866 449.5px,#063e7f 450.5px,#210040 451.5px,#2b0052 452.5px,#2d0057 453.5px)"></i>
<i style="background:linear-gradient(#2d0057 422.5px,#2e0464 423.5px,#0f10b4 424.5px,#080d87 425.5px,#260151 426.5px,#2f0359 431.5px,#1c0ba1 432.5px,#0d12b5 433.5px,#27004c 434.5px,#2c0056 435.5px,#2f035b 438.5px,#0816b2 439.5px,#062184 440.5px,#0b0882 441.5px,#062784 442.5px,#06597b 443.5px,#064f7e 444.5px,#0861a9 445.5px,#1990a9 446.5px,#1bad93 447.5px,#06835e 448.5px,#067965 449.5px,#06427e 450.5px,#210040 451.5px,#2b0052 452.5px,#2d0057 453.5px)"></i>
<i style="background:linear-gradient(#2d0057 421.5px,#200b9a 422.5px,#120cb2 423.5px,#1007a1 424.5px,#1a0669 425.5px,#28004d 426.5px,#2e045f 431.5px,#110cb2 432.5px,#090e93 433.5px,#26004a 434.5px,#2c0055 435.5px,#2f0359 438.5px,#250888 439.5px,#17066e 440.5px,#1f0352 441.5px,#0e067e 442.5px,#061d86 443.5px,#072993 444.5px,#1258b2 445.5px,#198daa 446.5px,#1dac96 447.5px,#068661 448.5px,#067a64 449.5px,#06437e 450.5px,#210040 451.5px,#2b0052 452.5px,#2d0057 453.5px)"></i>
<i style="background:linear-gradient(#2d0057 420.5px,#2b0a84 421.5px,#0b2bb6 422.5px,#0a42b2 423.5px,#090b84 424.5px,#230044 425.5px,#2d0056 427.5px,#2f0359 430.5px,#110db2 431.5px,#0b18b8 432.5px,#0a0983 433.5px,#26004a 434.5px,#2f0359 436.5px,#2b0a83 438.5px,#2e0463 439.5px,#230043 441.5px,#220356 442.5px,#1508a2 443.5px,#0e17b7 444.5px,#198bab 446.5px,#1eac97 447.5px,#068b64 448.5px,#067a64 449.5px,#06437e 450.5px,#210040 451.5px,#2b0052 452.5px,#2d0057 453.5px)"></i>
<i style="background:linear-gradient(#2d0057 420.5px,#240b93 421.5px,#0a3bb3 422.5px,#063a80 423.5px,#080d84 424.5px,#260049 425.5px,#2b0054 426.5px,#2f0359 429.5px,#2b097f 430.5px,#0b24b7 431.5px,#062393 432.5px,#0e067c 433.5px,#27004c 434.5px,#2f0359 436.5px,#210b98 437.5px,#180ba7 438.5px,#230a95 439.5px,#0e0db2 440.5px,#24056d 441.5px,#2e0158 442.5px,#260a91 443.5px,#0e14b5 444.5px,#198daa 446.5px,#1fae95 447.5px,#068c63 448.5px,#067a63 449.5px,#06427e 450.5px,#210040 451.5px,#2b0052 452.5px,#2d0057 453.5px)"></i>
<i style="background:linear-gradient(#2d0057 421.5px,#090b86 422.5px,#061086 423.5px,#170670 424.5px,#28004e 425.5px,#2f0259 429.5px,#2c0877 430.5px,#091ab8 431.5px,#061386 432.5px,#1d0664 433.5px,#29004e 434.5px,#2f0359 436.5px,#190aa6 437.5px,#110cb2 438.5px,#1008a8 439.5px,#061a8d 440.5px,#17067c 441.5px,#2f0258 442.5px,#240b93 443.5px,#0d16b7 444.5px,#125ab1 445.5px,#1992a9 446.5px,#1fb191 447.5px,#06895d 448.5px,#067b62 449.5px,#06407f 450.5px,#210040 451.5px,#2b0052 452.5px,#2d0057 453.5px)"></i>
<i style="background:linear-gradient(#2d0057 420.5px,#240047 423.5px,#2d0057 426.5px,#2e0158 430.5px,#140681 431.5px,#120677 432.5px,#240045 433.5px,#2e0158 435.5px,#2f0259 436.5px,#1e0a9c 437.5px,#100689 438.5px,#19066b 439.5px,#0b0782 440.5px,#230461 441.5px,#2f035e 442.5px,#1f0b9d 443.5px,#0b1bb9 444.5px,#1365b0 445.5px,#1a96a8 446.5px,#1fb38d 447.5px,#068357 448.5px,#067b62 449.5px,#063d7f 450.5px,#210040 451.5px,#2b0053 452.5px,#2d0057 453.5px)"></i>
<i style="background:linear-gradient(#2d0057 421.5px,#2b0052 431.5px,#26025c 432.5px,#2e0158 436.5px,#270570 437.5px,#210770 438.5px,#260049 439.5px,#26004a 440.5px,#2d066b 442.5px,#170ba9 443.5px,#0c29b7 444.5px,#146eaf 445.5px,#1a98a7 446.5px,#1db28b 447.5px,#068056 448.5px,#067965 449.5px,#063580 450.5px,#210040 451.5px,#2b0053 452.5px,#2d0057 453.5px)"></i>
<i style="background:linear-gradient(#2d0057 431.5px,#260a8f 432.5px,#1209af 433.5px,#250881 434.5px,#2c0054 435.5px,#2a0050 438.5px,#2f0359 441.5px,#2b0a84 442.5px,#110db2 443.5px,#0e38b5 444.5px,#1471af 445.5px,#1a97a7 446.5px,#13ad8b 447.5px,#067e5b 448.5px,#06736b 449.5px,#062883 450.5px,#220041 451.5px,#2b0053 452.5px,#2d0057 453.5px)"></i>
<i style="background:linear-gradient(#2d0057 431.5px,#1d0a9e 432.5px,#0b0d9b 433.5px,#170782 434.5px,#2a0052 435.5px,#2f0359 440.5px,#290b8c 441.5px,#160bab 442.5px,#0d15b6 443.5px,#104bb3 444.5px,#1993a8 446.5px,#079882 447.5px,#067a64 448.5px,#066b73 449.5px,#061586 450.5px,#230044 451.5px,#2b0054 452.5px,#2d0057 453.5px)"></i>
<i style="background:linear-gradient(#2d0057 431.5px,#1c0779 433.5px,#25025b 434.5px,#2b0053 435.5px,#2f0359 439.5px,#2d0670 440.5px,#0b1cb8 441.5px,#0e29b8 443.5px,#1160b0 444.5px,#178ea9 446.5px,#067d78 447.5px,#06726c 448.5px,#066177 449.5px,#090b83 450.5px,#240046 451.5px,#2d0057 452.5px)"></i>
<i style="background:linear-gradient(#2d0057 431.5px,#290050 433.5px,#2f0359 439.5px,#110db2 440.5px,#0d6aad 441.5px,#1169ae 442.5px,#124db4 443.5px,#1373ae 444.5px,#1574ae 445.5px,#1387a9 446.5px,#067178 447.5px,#066a74 448.5px,#06567b 449.5px,#110678 450.5px,#260049 451.5px,#2d0057 452.5px)"></i>
<i style="background:linear-gradient(#2d0057 439.5px,#0b25b7 440.5px,#128da6 441.5px,#158da8 442.5px,#1570af 443.5px,#147fac 444.5px,#1273ad 445.5px,#0c80a8 446.5px,#066a79 447.5px,#066377 448.5px,#06437e 449.5px,#1d0664 450.5px,#27004c 451.5px,#2d0057 452.5px)"></i>
<i style="background:linear-gradient(#2d0057 427.5px,#1f0b9c 428.5px,#170ba9 429.5px,#2c0672 430.5px,#2e0158 431.5px,#2f0359 439.5px,#0b38b4 440.5px,#1498a2 441.5px,#189ca2 442.5px,#1283aa 443.5px,#096cab 445.5px,#0877a1 446.5px,#066579 447.5px,#065d79 448.5px,#063381 449.5px,#1f024f 450.5px,#2d0057 452.5px)"></i>
<i style="background:linear-gradient(#2d0057 426.5px,#2c0776 427.5px,#0c18b7 428.5px,#0a23b7 429.5px,#0f09af 430.5px,#280260 431.5px,#2c0055 432.5px,#2f0359 439.5px,#0b2eb5 440.5px,#1495a5 441.5px,#159d9e 442.5px,#07728c 443.5px,#066186 444.5px,#075994 445.5px,#076c96 446.5px,#066279 447.5px,#06587a 448.5px,#062683 449.5px,#210040 450.5px,#2a0051 451.5px,#2d0057 452.5px)"></i>
<i style="background:linear-gradient(#2d0057 427.5px,#1009b1 428.5px,#090c8a 429.5px,#0c0683 430.5px,#1c0778 431.5px,#2b0052 432.5px,#2f0258 433.5px,#2f0359 439.5px,#0e14b6 440.5px,#1285a9 441.5px,#0b91a1 442.5px,#06657d 443.5px,#06547f 444.5px,#074c8d 445.5px,#076494 446.5px,#065f7b 447.5px,#06517c 448.5px,#061d84 449.5px,#220041 450.5px,#2b0052 451.5px,#2d0057 452.5px)"></i>
<i style="background:linear-gradient(#2d0057 427.5px,#240045 429.5px,#1c066e 430.5px,#180780 431.5px,#2b0052 432.5px,#2f0359 434.5px,#240b94 435.5px,#2f0259 436.5px,#2f0359 439.5px,#220b96 440.5px,#0e59b0 441.5px,#0c84a6 442.5px,#066080 443.5px,#064882 444.5px,#074593 445.5px,#07619f 446.5px,#065d7e 447.5px,#064b7d 448.5px,#061885 449.5px,#220043 450.5px,#2b0053 451.5px,#2d0057 452.5px)"></i>
<i style="background:linear-gradient(#2d0057 427.5px,#29004f 429.5px,#260155 430.5px,#240776 431.5px,#2c0056 432.5px,#2f0359 433.5px,#1b0ba3 434.5px,#0b1cb9 435.5px,#1c0aa0 436.5px,#2a0051 437.5px,#2f0359 440.5px,#0b23b7 441.5px,#1275ad 442.5px,#07679a 443.5px,#06428e 444.5px,#0847a9 445.5px,#0a64ac 446.5px,#065e83 447.5px,#064a7d 448.5px,#061985 449.5px,#220042 450.5px,#2b0053 451.5px,#2d0057 452.5px)"></i>
<i style="background:linear-gradient(#2d0057 429.5px,#2f0359 433.5px,#0e14b5 434.5px,#0a48b1 435.5px,#090c89 436.5px,#27004b 437.5px,#2d0056 438.5px,#2f0359 440.5px,#0e13b5 441.5px,#1167af 442.5px,#1170ad 443.5px,#084eaf 444.5px,#0c4eb1 445.5px,#0d67ad 446.5px,#066388 447.5px,#064d7c 448.5px,#061f84 449.5px,#220041 450.5px,#2a0052 451.5px,#2d0057 452.5px)"></i>
<i style="background:linear-gradient(#2d0057 433.5px,#0d15b6 434.5px,#073f94 435.5px,#080d84 436.5px,#26004a 437.5px,#2d0056 438.5px,#2f0359 440.5px,#0c18b7 441.5px,#1277ad 442.5px,#1480ac 443.5px,#0d5eae 444.5px,#0d56b0 445.5px,#0c6cac 446.5px,#066284 447.5px,#06527c 448.5px,#062683 449.5px,#210145 450.5px,#2d0057 452.5px)"></i>
<i style="background:linear-gradient(#2d0057 433.5px,#1209b0 434.5px,#061e84 435.5px,#0d067e 436.5px,#28004c 437.5px,#2e0158 438.5px,#2f0359 439.5px,#2b0a86 440.5px,#0c36b5 441.5px,#148aa8 442.5px,#168fa8 443.5px,#0870a9 444.5px,#0856a3 445.5px,#07649d 446.5px,#065e7d 447.5px,#06527c 448.5px,#062683 449.5px,#210145 450.5px,#2d0057 452.5px)"></i>
<i style="background:linear-gradient(#2d0057 433.5px,#24035d 434.5px,#0f067e 435.5px,#230356 436.5px,#2a0050 437.5px,#2f0359 439.5px,#130baf 440.5px,#0d46b3 441.5px,#1590a7 442.5px,#0d959f 443.5px,#066080 444.5px,#064684 445.5px,#06587b 447.5px,#06497d 448.5px,#061c85 449.5px,#220043 450.5px,#2b0052 451.5px,#2d0057 452.5px)"></i>
<i style="background:linear-gradient(#2d0057 433.5px,#28004d 435.5px,#2f0359 439.5px,#0d15b6 440.5px,#0d3bb4 441.5px,#1188a7 442.5px,#067174 443.5px,#065f79 444.5px,#063c80 445.5px,#06497e 447.5px,#063980 448.5px,#070f85 449.5px,#240045 450.5px,#2b0053 451.5px,#2d0057 452.5px)"></i>
<i style="background:linear-gradient(#2d0057 429.5px,#2b0981 430.5px,#2b087d 431.5px,#2d0057 432.5px,#2f0359 438.5px,#2d066f 439.5px,#0b1eb8 440.5px,#0c23b8 441.5px,#074d8f 442.5px,#065f79 443.5px,#064d7d 444.5px,#062b83 445.5px,#063981 447.5px,#062982 448.5px,#0a0982 449.5px,#250047 450.5px,#2d0057 451.5px)"></i>
<i style="background:linear-gradient(#2d0057 428.5px,#2f035a 429.5px,#1c0aa0 430.5px,#1b0893 431.5px,#2b0053 432.5px,#2f0359 438.5px,#2b097f 439.5px,#0b20b8 440.5px,#0c14b6 441.5px,#08119b 442.5px,#06238b 443.5px,#06208b 444.5px,#071e98 445.5px,#072fa7 446.5px,#063589 447.5px,#0b0781 449.5px,#250048 450.5px,#2d0057 451.5px)"></i>
<i style="background:linear-gradient(#2d0057 429.5px,#26077f 430.5px,#240674 431.5px,#2b0053 432.5px,#2f0359 438.5px,#2a0b8a 439.5px,#0c17b7 440.5px,#120eb2 442.5px,#0f25b9 444.5px,#0f2cb8 445.5px,#0a4db0 447.5px,#062a84 448.5px,#0a0a82 449.5px,#240046 450.5px,#2b0054 451.5px,#2d0057 452.5px)"></i>
<i style="background:linear-gradient(#2d0057 429.5px,#2a0052 431.5px,#2f0359 437.5px,#2a0a87 438.5px,#110db2 440.5px,#180ba8 441.5px,#0d1bb9 442.5px,#1143b5 443.5px,#1260b1 444.5px,#124bb4 445.5px,#1251b3 446.5px,#1168af 447.5px,#07458f 448.5px,#061287 449.5px,#220042 450.5px,#2a0052 451.5px,#2d0057 452.5px)"></i>
<i style="background:linear-gradient(#2d0057 436.5px,#2b0982 437.5px,#120cb2 438.5px,#110db2 439.5px,#1a0aa4 440.5px,#150bad 441.5px,#1059b1 442.5px,#1689aa 443.5px,#1796a6 444.5px,#1679ae 445.5px,#156cb0 446.5px,#1583ab 447.5px,#07719c 448.5px,#063181 449.5px,#20024b 450.5px,#2d0057 452.5px)"></i>
<i style="background:linear-gradient(#2d0057 436.5px,#1d0b9f 437.5px,#0c17b7 438.5px,#0d15b6 439.5px,#1d0b9e 440.5px,#0f16b6 441.5px,#148ba8 442.5px,#1aaa96 443.5px,#1bb18c 444.5px,#178fa8 445.5px,#1782ad 446.5px,#1792a7 447.5px,#077e93 448.5px,#064f7c 449.5px,#19066a 450.5px,#27004c 451.5px,#2d0057 452.5px)"></i>
<i style="background:linear-gradient(#2d0057 436.5px,#190ba5 437.5px,#0b1ab8 438.5px,#0c16b7 439.5px,#1f0a9c 440.5px,#0e2eb7 441.5px,#179ca0 442.5px,#1db388 443.5px,#08ac72 444.5px,#077a87 445.5px,#1388a9 446.5px,#189ca1 447.5px,#067b7b 448.5px,#065e79 449.5px,#0d067e 450.5px,#260049 451.5px,#2d0057 452.5px)"></i>
<i style="background:linear-gradient(#2d0057 436.5px,#210a98 437.5px,#0d14b5 438.5px,#0e10b4 439.5px,#250b92 440.5px,#0e3bb5 441.5px,#179d9f 442.5px,#08a588 443.5px,#067c61 444.5px,#066678 445.5px,#0c87a5 446.5px,#15a09a 447.5px,#06786d 448.5px,#066476 449.5px,#0a0a82 450.5px,#250047 451.5px,#2d0057 452.5px)"></i>
<i style="background:linear-gradient(#2d0057 436.5px,#2c0773 437.5px,#160aaa 438.5px,#190aa6 439.5px,#2b0981 440.5px,#0d35b6 441.5px,#1392a5 442.5px,#066776 443.5px,#066676 444.5px,#065a7b 445.5px,#0d86a6 446.5px,#11a097 447.5px,#067769 448.5px,#066776 449.5px,#090b83 450.5px,#240047 451.5px,#2d0057 452.5px)"></i>
<i style="background:linear-gradient(#2d0057 437.5px,#2b0983 438.5px,#210b99 439.5px,#220b97 440.5px,#0d23b8 441.5px,#07678c 442.5px,#064b7d 443.5px,#06417e 444.5px,#064a85 445.5px,#1387a9 446.5px,#0f9e97 447.5px,#067669 448.5px,#066676 449.5px,#090b83 450.5px,#240046 451.5px,#2d0057 452.5px)"></i>
<i style="background:linear-gradient(#2d0057 437.5px,#2c0776 438.5px,#0f11b4 439.5px,#0b1fb8 440.5px,#0b1db8 441.5px,#063881 442.5px,#062383 443.5px,#061d85 444.5px,#094faf 445.5px,#1585ab 446.5px,#0e9b9a 447.5px,#06746b 448.5px,#066576 449.5px,#0a0a82 450.5px,#250047 451.5px,#2d0057 452.5px)"></i>
<i style="background:linear-gradient(#2d0057 437.5px,#270b8e 438.5px,#0b28b6 439.5px,#0a4cb0 440.5px,#06178b 441.5px,#090c84 443.5px,#081197 444.5px,#0f47b3 445.5px,#1580ac 446.5px,#0c969d 447.5px,#06716d 448.5px,#066277 449.5px,#0b0781 450.5px,#250048 451.5px,#2d0057 452.5px)"></i>
<i style="background:linear-gradient(#2d0057 437.5px,#200b9a 438.5px,#0a2cb6 439.5px,#06348e 440.5px,#070e85 441.5px,#10067a 442.5px,#0f067e 443.5px,#0d12b5 444.5px,#0f3db5 445.5px,#1477ae 446.5px,#0a90a1 447.5px,#066d71 448.5px,#065d79 449.5px,#0f067b 450.5px,#260049 451.5px,#2d0057 452.5px)"></i>
<i style="background:linear-gradient(#2d0057 429.5px,#250b92 430.5px,#110eb3 431.5px,#230a96 432.5px,#2e0158 433.5px,#2f0359 437.5px,#270a8f 438.5px,#0816af 439.5px,#061b85 440.5px,#0b0781 441.5px,#1e055f 442.5px,#1b0781 443.5px,#100fb3 444.5px,#0e32b6 445.5px,#136daf 446.5px,#0889a1 447.5px,#066875 448.5px,#06567b 449.5px,#18066d 450.5px,#27004b 451.5px,#2d0057 452.5px)"></i>
<i style="background:linear-gradient(#2d0057 429.5px,#0c17b7 430.5px,#0b42b2 431.5px,#0917b7 432.5px,#290153 433.5px,#2f0259 437.5px,#2d0362 438.5px,#0c0682 439.5px,#0a0982 440.5px,#1d0664 441.5px,#220043 442.5px,#290a8a 443.5px,#120cb2 444.5px,#0d29b7 445.5px,#1264b0 446.5px,#0882a1 447.5px,#066277 448.5px,#06477d 449.5px,#1e045a 450.5px,#28004e 451.5px,#2d0057 452.5px)"></i>
<i style="background:linear-gradient(#2d0057 428.5px,#2e0564 429.5px,#0b24b7 430.5px,#0853ae 431.5px,#061d85 432.5px,#23045f 433.5px,#2f0359 434.5px,#2f0359 436.5px,#240252 439.5px,#22035a 440.5px,#26004a 441.5px,#2a0051 442.5px,#2b0981 443.5px,#120bb1 444.5px,#0c24b8 445.5px,#125db1 446.5px,#0980a6 447.5px,#065d79 448.5px,#063780 449.5px,#200144 450.5px,#2d0057 452.5px)"></i>
<i style="background:linear-gradient(#2d0057 429.5px,#0d0fb4 430.5px,#062184 431.5px,#080c84 432.5px,#2a0262 433.5px,#1e0b9d 434.5px,#0b20b8 435.5px,#100fb3 436.5px,#2e035d 437.5px,#290050 439.5px,#2f0258 442.5px,#2b097e 443.5px,#120bb1 444.5px,#0c25b8 445.5px,#125cb1 446.5px,#0f80a9 447.5px,#06597a 448.5px,#062b82 449.5px,#210040 450.5px,#2a0051 451.5px,#2d0057 452.5px)"></i>
<i style="background:linear-gradient(#2d0057 429.5px,#230359 430.5px,#150671 431.5px,#1e045a 432.5px,#2f0259 433.5px,#0e13b5 434.5px,#0b56af 435.5px,#0a39b4 436.5px,#1809a5 437.5px,#28004e 438.5px,#2f0359 442.5px,#2b0a83 443.5px,#110db2 444.5px,#0d2eb7 445.5px,#1364b0 446.5px,#1485aa 447.5px,#06597b 448.5px,#062883 449.5px,#210040 450.5px,#2a0052 451.5px,#2d0057 452.5px)"></i>
<i style="background:linear-gradient(#2d0057 429.5px,#27004b 431.5px,#2f035a 433.5px,#100fb3 434.5px,#0b4cb1 435.5px,#0b49b1 436.5px,#08119b 437.5px,#220251 438.5px,#2f0359 442.5px,#250b91 443.5px,#0e13b5 444.5px,#1577ae 446.5px,#168ea8 447.5px,#065f79 448.5px,#063181 449.5px,#210040 450.5px,#2a0052 451.5px,#2d0057 452.5px)"></i>
<i style="background:linear-gradient(#2d0057 432.5px,#2b0a85 433.5px,#120cb1 434.5px,#0c42b3 435.5px,#0a50af 436.5px,#062288 437.5px,#18066d 438.5px,#28004e 439.5px,#2e0158 440.5px,#2f0359 442.5px,#1a0ba4 443.5px,#0b1db8 444.5px,#115db1 445.5px,#1789aa 446.5px,#189ba2 447.5px,#066876 448.5px,#06427e 449.5px,#210040 450.5px,#2a0051 451.5px,#2d0057 452.5px)"></i>
<i style="background:linear-gradient(#2d0057 431.5px,#2f035c 432.5px,#160bab 433.5px,#1010b4 434.5px,#0d42b3 435.5px,#0747a2 436.5px,#062c83 437.5px,#0d067e 438.5px,#27004b 439.5px,#2f0259 440.5px,#2f0359 442.5px,#120cb2 443.5px,#0c32b5 444.5px,#1272ae 445.5px,#1894a7 446.5px,#0ca292 447.5px,#06706e 448.5px,#06527c 449.5px,#200148 450.5px,#2d0057 452.5px)"></i>
<i style="background:linear-gradient(#2d0057 431.5px,#2c087c 432.5px,#0e13b5 433.5px,#0d16b6 434.5px,#0d3fb3 435.5px,#063390 436.5px,#062d82 437.5px,#0b0882 438.5px,#27004b 439.5px,#2f0359 440.5px,#290b8c 441.5px,#280b8d 442.5px,#100fb3 443.5px,#0c35b5 444.5px,#1274ad 445.5px,#1292a5 446.5px,#06786a 447.5px,#06716d 448.5px,#06547b 449.5px,#200147 450.5px,#2d0057 452.5px)"></i>
<i style="background:linear-gradient(#2d0057 431.5px,#2a0a86 432.5px,#0c17b7 433.5px,#0a1eb8 434.5px,#0a3fb3 435.5px,#062489 436.5px,#062583 437.5px,#0b0781 438.5px,#2e0158 439.5px,#2f0359 440.5px,#0b18b8 441.5px,#120bb1 443.5px,#091cb8 444.5px,#0853aa 445.5px,#06617e 446.5px,#066c72 447.5px,#066776 448.5px,#06407f 449.5px,#210040 450.5px,#2a0052 451.5px,#2d0057 452.5px)"></i>
<i style="background:linear-gradient(#2d0057 431.5px,#2c0879 432.5px,#0d15b6 433.5px,#0a23b7 434.5px,#07359c 435.5px,#061988 436.5px,#061786 437.5px,#0e0680 438.5px,#2f0359 439.5px,#1c0ba1 440.5px,#0b47b1 441.5px,#0a22b7 442.5px,#1c089d 443.5px,#0c078c 444.5px,#061988 445.5px,#06567b 447.5px,#064c7c 448.5px,#061686 449.5px,#240045 450.5px,#2b0053 451.5px,#2d0057 452.5px)"></i>
<i style="background:linear-gradient(#2d0057 432.5px,#110bb1 433.5px,#06218a 435.5px,#07108a 436.5px,#07118c 437.5px,#1108a5 438.5px,#2c0776 439.5px,#0b1ab8 440.5px,#0b61ad 441.5px,#0a2db5 442.5px,#1e077e 443.5px,#1e0665 444.5px,#0d067e 445.5px,#070f85 446.5px,#062583 447.5px,#061a85 448.5px,#110678 449.5px,#26004a 450.5px,#2d0057 451.5px)"></i>
<i style="background:linear-gradient(#2d0057 432.5px,#25077a 433.5px,#0e0683 434.5px,#0a0d95 436.5px,#0819b8 437.5px,#0d13b5 438.5px,#1d0a9f 439.5px,#0c17b7 440.5px,#0a43b2 441.5px,#0a3db3 442.5px,#071c95 443.5px,#1f0459 444.5px,#1e055f 445.5px,#110679 446.5px,#090a83 447.5px,#0b0781 448.5px,#1f0352 449.5px,#29004e 450.5px,#2d0057 451.5px)"></i>
<i style="background:linear-gradient(#2d0057 432.5px,#230254 434.5px,#1b0674 435.5px,#100bb2 436.5px,#0a2bb6 437.5px,#0a25b6 438.5px,#0f0cb2 439.5px,#170798 440.5px,#0e089d 441.5px,#07658d 442.5px,#066179 443.5px,#110677 444.5px,#210251 445.5px,#210888 446.5px,#0e0684 447.5px,#130674 448.5px,#230044 449.5px,#2d0057 451.5px)"></i>
<i style="background:linear-gradient(#2d0057 433.5px,#2d0157 435.5px,#190aa6 436.5px,#0a2bb6 437.5px,#0931b4 438.5px,#091097 439.5px,#140677 440.5px,#1e0561 441.5px,#06507d 442.5px,#065e78 443.5px,#120676 444.5px,#2b0572 445.5px,#200a9a 446.5px,#110cb2 447.5px,#100685 448.5px,#22024d 449.5px,#2d0057 451.5px)"></i>
<i style="background:linear-gradient(#2d0057 435.5px,#2a0b89 436.5px,#0b19b8 437.5px,#0a2ab6 438.5px,#071191 439.5px,#10067c 440.5px,#210143 441.5px,#0b0681 442.5px,#070f85 443.5px,#210561 444.5px,#260a90 445.5px,#110cb2 446.5px,#0b19b8 447.5px,#0b12b5 448.5px,#1d0667 449.5px,#28004e 450.5px,#2d0057 451.5px)"></i>
<i style="background:linear-gradient(#2d0057 435.5px,#2d066c 436.5px,#0f11b4 437.5px,#0a24b7 438.5px,#0814a1 439.5px,#10067e 440.5px,#240045 441.5px,#28004e 442.5px,#290a8b 444.5px,#120bb1 445.5px,#0b1ab9 446.5px,#0d43b3 447.5px,#0934b4 448.5px,#0c0681 449.5px,#26004a 450.5px,#2d0057 451.5px)"></i>
<i style="background:linear-gradient(#2d0057 435.5px,#2b0983 436.5px,#0d15b6 437.5px,#0c35b5 438.5px,#0924b7 439.5px,#1108ab 440.5px,#2c0671 441.5px,#2f035b 442.5px,#1b0ba2 443.5px,#100fb3 444.5px,#0c1bb9 445.5px,#116dae 447.5px,#075198 448.5px,#070f85 449.5px,#250047 450.5px,#2d0057 451.5px)"></i>
<i style="background:linear-gradient(#2d0057 435.5px,#110db2 436.5px,#0f54b1 438.5px,#0d44b3 439.5px,#0d15b6 440.5px,#190ba6 441.5px,#130bb0 442.5px,#0b2db6 443.5px,#0d42b3 444.5px,#104cb3 445.5px,#1485aa 447.5px,#065a7e 448.5px,#061e84 449.5px,#230044 450.5px,#2b0054 451.5px,#2d0057 452.5px)"></i>
<i style="background:linear-gradient(#2d0057 434.5px,#240b93 435.5px,#0b2eb5 436.5px,#0f55b1 437.5px,#126eae 438.5px,#1164af 439.5px,#0e3ab5 440.5px,#0c19b8 441.5px,#0c28b7 442.5px,#0f69ae 443.5px,#1278ac 444.5px,#1473ae 445.5px,#128fa6 447.5px,#065f79 448.5px,#062a82 449.5px,#220042 450.5px,#2b0053 451.5px,#2d0057 452.5px)"></i>
<i style="background:linear-gradient(#2d0057 434.5px,#0f12b4 435.5px,#0d5caf 436.5px,#147bad 438.5px,#137fac 439.5px,#1164af 440.5px,#0f40b5 441.5px,#0f3fb5 442.5px,#117aac 443.5px,#1689aa 446.5px,#088c9b 447.5px,#066277 448.5px,#062f81 449.5px,#220041 450.5px,#2b0053 451.5px,#2d0057 452.5px)"></i>
<i style="background:linear-gradient(#2d0057 434.5px,#0b1eb8 435.5px,#0f73ac 436.5px,#137cac 438.5px,#1389a8 439.5px,#1281aa 440.5px,#0d34b5 442.5px,#0a5fad 443.5px,#148aa8 446.5px,#077b83 447.5px,#066477 448.5px,#063281 449.5px,#210041 450.5px,#2b0053 451.5px,#2d0057 452.5px)"></i>
<i style="background:linear-gradient(#2d0057 434.5px,#0b1db8 435.5px,#0e70ac 436.5px,#0c68ac 437.5px,#0a6dab 438.5px,#0e87a6 439.5px,#0b84a6 440.5px,#076c97 441.5px,#062490 442.5px,#062a8f 443.5px,#0745a3 444.5px,#0f6dad 445.5px,#1288a8 446.5px,#06767e 447.5px,#066476 448.5px,#063381 449.5px,#210040 450.5px,#2b0053 451.5px,#2d0057 452.5px)"></i>
<i style="background:linear-gradient(#2d0057 434.5px,#0f11b4 435.5px,#084eaf 436.5px,#063789 437.5px,#07478f 438.5px,#077197 439.5px,#06657b 441.5px,#062d84 442.5px,#061691 443.5px,#0a30b5 444.5px,#1160b0 445.5px,#1386aa 446.5px,#067680 447.5px,#066476 448.5px,#063580 449.5px,#210040 450.5px,#2b0053 451.5px,#2d0057 452.5px)"></i>
<i style="background:linear-gradient(#2d0057 434.5px,#27098c 435.5px,#07118b 436.5px,#071087 437.5px,#062a88 438.5px,#065387 439.5px,#066378 441.5px,#062b85 442.5px,#0915b1 443.5px,#0e2ab8 444.5px,#1483ab 446.5px,#077884 447.5px,#066576 448.5px,#063980 449.5px,#210040 450.5px,#2b0053 451.5px,#2d0057 452.5px)"></i>
<i style="background:linear-gradient(#2d0057 434.5px,#2b0053 435.5px,#1a066c 436.5px,#160671 437.5px,#080e8b 438.5px,#062f8a 439.5px,#063d82 440.5px,#06577d 441.5px,#071e9c 442.5px,#0e1fb9 443.5px,#1035b7 444.5px,#1255b2 445.5px,#1481ac 446.5px,#077785 447.5px,#066576 448.5px,#063d7f 449.5px,#210040 450.5px,#2b0053 451.5px,#2d0057 452.5px)"></i>
<i style="background:linear-gradient(#2d0057 435.5px,#260049 437.5px,#1c0891 438.5px,#0b0ea1 439.5px,#071293 440.5px,#073f9f 441.5px,#0f2bb8 442.5px,#114eb3 443.5px,#135ab2 445.5px,#137bac 446.5px,#067181 447.5px,#066576 448.5px,#06407f 449.5px,#210040 450.5px,#2b0053 451.5px,#2d0057 452.5px)"></i>
<i style="background:linear-gradient(#2d0057 437.5px,#2c087a 438.5px,#180aa7 439.5px,#120ab0 440.5px,#0d26b8 441.5px,#1380ab 443.5px,#147fac 444.5px,#1262b0 445.5px,#0d6fac 446.5px,#06687d 447.5px,#066377 448.5px,#063c7f 449.5px,#210040 450.5px,#2b0053 451.5px,#2d0057 452.5px)"></i>
<i style="background:linear-gradient(#2d0057 437.5px,#2c0878 438.5px,#170aaa 439.5px,#160aab 440.5px,#0c1bb9 441.5px,#126fae 442.5px,#1691a7 443.5px,#138ca8 444.5px,#0862a8 445.5px,#07589c 446.5px,#06617c 447.5px,#065d79 448.5px,#063381 449.5px,#220041 450.5px,#2b0053 451.5px,#2d0057 452.5px)"></i>
<i style="background:linear-gradient(#2d0057 437.5px,#2b0a86 438.5px,#110eb2 439.5px,#120bb1 440.5px,#0d1ab8 441.5px,#127aac 442.5px,#1697a5 443.5px,#077c91 444.5px,#064f85 445.5px,#07468d 446.5px,#065b7e 447.5px,#06577b 448.5px,#062783 449.5px,#220042 450.5px,#2b0053 451.5px,#2d0057 452.5px)"></i>
<i style="background:linear-gradient(#2d0057 437.5px,#210b98 438.5px,#0d16b7 439.5px,#100eb3 440.5px,#0d15b6 441.5px,#1172ad 442.5px,#0e8ea4 443.5px,#06657b 444.5px,#064580 445.5px,#063e8e 446.5px,#065582 447.5px,#064e7c 448.5px,#061d84 449.5px,#230043 450.5px,#2b0053 451.5px,#2d0057 452.5px)"></i>
<i style="background:linear-gradient(#2d0057 437.5px,#210a98 438.5px,#0a15b6 439.5px,#0e0aa9 440.5px,#100eb3 441.5px,#0e5ab0 442.5px,#076f91 443.5px,#065a7b 444.5px,#063983 445.5px,#073fa0 446.5px,#075c92 447.5px,#064b7d 448.5px,#061985 449.5px,#230043 450.5px,#2b0053 451.5px,#2d0057 452.5px)"></i>
<i style="background:linear-gradient(#2d0057 437.5px,#2c0364 438.5px,#130681 439.5px,#1d066b 440.5px,#1b089f 441.5px,#0a39b3 442.5px,#07538e 443.5px,#064780 444.5px,#062e8d 445.5px,#0d48b2 446.5px,#0b72aa 447.5px,#064f7d 448.5px,#061d84 449.5px,#230043 450.5px,#2b0053 451.5px,#2d0057 452.5px)"></i>
<i style="background:linear-gradient(#2d0057 438.5px,#27004b 440.5px,#2a0676 441.5px,#0b17b7 442.5px,#083ba7 443.5px,#073591 444.5px,#092cb5 445.5px,#114fb3 446.5px,#127fab 447.5px,#06597c 448.5px,#062783 449.5px,#220042 450.5px,#2b0053 451.5px,#2d0057 452.5px)"></i>
<i style="background:linear-gradient(#2d0057 441.5px,#160aaa 442.5px,#0a1fb8 443.5px,#0c33b5 444.5px,#0f2ab8 445.5px,#1487aa 447.5px,#065f7b 448.5px,#063481 449.5px,#210041 450.5px,#2b0053 451.5px,#2d0057 452.5px)"></i>
<i style="background:linear-gradient(#2d0057 441.5px,#2c0775 442.5px,#0c18b8 443.5px,#0d3ab4 444.5px,#102eb8 445.5px,#1366b0 446.5px,#168fa8 447.5px,#066578 448.5px,#06417e 449.5px,#210040 450.5px,#2b0053 451.5px,#2d0057 452.5px)"></i>
<i style="background:linear-gradient(#2d0057 442.5px,#0b19b8 443.5px,#0c45b2 444.5px,#103cb6 445.5px,#1472ae 446.5px,#1795a6 447.5px,#066976 448.5px,#064c7d 449.5px,#210040 450.5px,#2b0052 451.5px,#2d0057 452.5px)"></i>
<i style="background:linear-gradient(#2d0057 442.5px,#0d16b7 443.5px,#0c44b2 444.5px,#104bb3 445.5px,#157bad 446.5px,#1799a3 447.5px,#066c72 448.5px,#06547b 449.5px,#210040 450.5px,#2a0052 451.5px,#2d0057 452.5px)"></i>
<i style="background:linear-gradient(#2d0057 439.5px,#2b0980 440.5px,#2c0877 441.5px,#2f0359 442.5px,#120bb1 443.5px,#0a2ab6 444.5px,#0f4cb3 445.5px,#157dad 446.5px,#149aa0 447.5px,#066e71 448.5px,#06587b 449.5px,#210040 450.5px,#2a0052 451.5px,#2d0057 452.5px)"></i>
<i style="background:linear-gradient(#2d0057 438.5px,#290b8b 439.5px,#0e13b5 440.5px,#1010b3 441.5px,#2c0879 442.5px,#2c087a 443.5px,#140aae 444.5px,#0d39b5 445.5px,#1476ad 446.5px,#0e969f 447.5px,#066d71 448.5px,#06587b 449.5px,#210040 450.5px,#2a0052 451.5px,#2d0057 452.5px)"></i>
<i style="background:linear-gradient(#2d0057 438.5px,#1c0ba0 439.5px,#0a1eb8 440.5px,#0b18b8 441.5px,#230a94 442.5px,#2e0568 443.5px,#2e0567 444.5px,#0b1eb9 445.5px,#1269af 446.5px,#088899 447.5px,#066a74 448.5px,#06547b 449.5px,#210040 450.5px,#2a0052 451.5px,#2d0057 452.5px)"></i>
<i style="background:linear-gradient(#2d0057 438.5px,#2a0a87 439.5px,#0c0fb3 440.5px,#0e0db2 441.5px,#1c0aa0 442.5px,#110eb2 443.5px,#2a0b8a 444.5px,#0d14b6 445.5px,#1054b1 446.5px,#066c85 447.5px,#066477 448.5px,#06487d 449.5px,#210040 450.5px,#2b0052 451.5px,#2d0057 452.5px)"></i>
<i style="background:linear-gradient(#2d0057 439.5px,#25056a 440.5px,#2b087b 441.5px,#120bb1 442.5px,#0b3bb3 443.5px,#0f12b4 444.5px,#0f10b4 445.5px,#0c36b5 446.5px,#06597f 447.5px,#06597a 448.5px,#063580 449.5px,#220041 450.5px,#2b0053 451.5px,#2d0057 452.5px)"></i>
<i style="background:linear-gradient(#2d0057 441.5px,#0d14b6 442.5px,#0b57af 443.5px,#0b24b7 444.5px,#0f0cb2 445.5px,#0915af 446.5px,#063c81 447.5px,#06407f 448.5px,#061b85 449.5px,#230044 450.5px,#2b0054 451.5px,#2d0057 452.5px)"></i>
<i style="background:linear-gradient(#2d0057 441.5px,#0b2db6 442.5px,#0e68ad 443.5px,#0b36b4 444.5px,#0d099c 445.5px,#0c0a9b 446.5px,#062287 447.5px,#062483 448.5px,#090c83 449.5px,#250047 450.5px,#2d0057 451.5px)"></i>
<i style="background:linear-gradient(#2d0057 440.5px,#2d0771 441.5px,#0b3db3 442.5px,#1070ad 443.5px,#0946b1 444.5px,#0c0992 445.5px,#110799 446.5px,#071290 447.5px,#061186 448.5px,#0c067f 449.5px,#260049 450.5px,#2d0057 451.5px)"></i>
<i style="background:linear-gradient(#2d0057 440.5px,#270b8f 441.5px,#0c3db3 442.5px,#1174ad 443.5px,#0961ac 444.5px,#0b0c94 445.5px,#1308a5 446.5px,#08129f 447.5px,#070f86 448.5px,#100679 449.5px,#27004b 450.5px,#2d0057 451.5px)"></i>
<i style="background:linear-gradient(#2d0057 440.5px,#190ba6 441.5px,#0d4ab2 442.5px,#1382ab 443.5px,#097da7 444.5px,#081195 445.5px,#0e0aa9 446.5px,#0814a1 447.5px,#071086 448.5px,#0f067b 449.5px,#27004b 450.5px,#2d0057 451.5px)"></i>
<i style="background:linear-gradient(#2d0057 440.5px,#130baf 441.5px,#0e54b1 442.5px,#1489a9 443.5px,#077993 444.5px,#061e8a 445.5px,#0a0d91 446.5px,#071086 448.5px,#0d067e 449.5px,#27004c 450.5px,#2d0057 451.5px)"></i>
<i style="background:linear-gradient(#2d0057 440.5px,#190ba5 441.5px,#0d4db1 442.5px,#1287a8 443.5px,#066579 444.5px,#062a82 445.5px,#070f86 446.5px,#090c84 448.5px,#100679 449.5px,#28004d 450.5px,#2d0057 451.5px)"></i>
<i style="background:linear-gradient(#2d0057 440.5px,#270b8e 441.5px,#0a3cb3 442.5px,#065f7c 443.5px,#066177 444.5px,#071086 446.5px,#0e067d 448.5px,#190671 449.5px,#29004f 450.5px,#2d0057 451.5px)"></i>
<i style="background:linear-gradient(#2d0057 440.5px,#2c0775 441.5px,#062a88 442.5px,#066178 443.5px,#066776 444.5px,#06447e 445.5px,#071086 446.5px,#130674 447.5px,#1c066a 448.5px,#230568 449.5px,#2a0052 450.5px,#2d0057 451.5px)"></i>
<i style="background:linear-gradient(#2d0057 440.5px,#2b0053 441.5px,#220043 442.5px,#210040 443.5px,#210040 445.5px,#2d0057 450.5px)"></i>
<i style="background:linear-gradient(#2d0057 441.5px,#28004d 444.5px,#2d0057 449.5px)"></i>
<i style="width:211px"></i></div></div>
<svg id="ov" width="1024" height="583" viewBox="0 0 1024 583">
<defs><linearGradient id="cbg" x1="0" y1="0" x2="0" y2="1">
<stop offset="0.000" stop-color="#f81010"/>
<stop offset="0.050" stop-color="#f03008"/>
<stop offset="0.100" stop-color="#f06008"/>
<stop offset="0.150" stop-color="#f09010"/>
<stop offset="0.200" stop-color="#e8c010"/>
<stop offset="0.250" stop-color="#d8e000"/>
<stop offset="0.300" stop-color="#a8cc10"/>
<stop offset="0.350" stop-color="#68c018"/>
<stop offset="0.400" stop-color="#38b810"/>
<stop offset="0.450" stop-color="#10b010"/>
<stop offset="0.500" stop-color="#10b418"/>
<stop offset="0.550" stop-color="#08b448"/>
<stop offset="0.600" stop-color="#08b468"/>
<stop offset="0.650" stop-color="#08a888"/>
<stop offset="0.700" stop-color="#0890a0"/>
<stop offset="0.750" stop-color="#0878a8"/>
<stop offset="0.800" stop-color="#0848b0"/>
<stop offset="0.850" stop-color="#0818b8"/>
<stop offset="0.900" stop-color="#1008b0"/>
<stop offset="0.950" stop-color="#280888"/>
<stop offset="1.000" stop-color="#2d0057"/>
</linearGradient></defs>
<g fill="#585069" fill-opacity="0.6"><rect x="74.36" y="20.5" width="1.3" height="537.5"/><rect x="126.17" y="20.5" width="1.3" height="537.5"/><rect x="162.93" y="20.5" width="1.3" height="537.5"/><rect x="191.44" y="20.5" width="1.3" height="537.5"/><rect x="214.73" y="20.5" width="1.3" height="537.5"/><rect x="234.43" y="20.5" width="1.3" height="537.5"/><rect x="251.49" y="20.5" width="1.3" height="537.5"/><rect x="266.54" y="20.5" width="1.3" height="537.5"/><rect x="280.00" y="20.5" width="1.3" height="537.5"/><rect x="368.56" y="20.5" width="1.3" height="537.5"/><rect x="420.37" y="20.5" width="1.3" height="537.5"/><rect x="457.13" y="20.5" width="1.3" height="537.5"/><rect x="485.64" y="20.5" width="1.3" height="537.5"/><rect x="508.93" y="20.5" width="1.3" height="537.5"/><rect x="528.63" y="20.5" width="1.3" height="537.5"/><rect x="545.69" y="20.5" width="1.3" height="537.5"/><rect x="560.74" y="20.5" width="1.3" height="537.5"/><rect x="574.20" y="20.5" width="1.3" height="537.5"/><rect x="662.76" y="20.5" width="1.3" height="537.5"/><rect x="714.57" y="20.5" width="1.3" height="537.5"/><rect x="751.33" y="20.5" width="1.3" height="537.5"/><rect x="779.84" y="20.5" width="1.3" height="537.5"/><rect x="803.13" y="20.5" width="1.3" height="537.5"/><rect x="822.83" y="20.5" width="1.3" height="537.5"/><rect x="839.89" y="20.5" width="1.3" height="537.5"/><rect x="854.94" y="20.5" width="1.3" height="537.5"/><rect x="868.40" y="20.5" width="1.3" height="537.5"/><rect x="37.5" y="512.30" width="920.5" height="1.3"/><rect x="37.5" y="467.55" width="920.5" height="1.3"/><rect x="37.5" y="422.80" width="920.5" height="1.3"/><rect x="37.5" y="378.05" width="920.5" height="1.3"/><rect x="37.5" y="333.30" width="920.5" height="1.3"/><rect x="37.5" y="288.55" width="920.5" height="1.3"/><rect x="37.5" y="243.80" width="920.5" height="1.3"/><rect x="37.5" y="199.05" width="920.5" height="1.3"/><rect x="37.5" y="154.30" width="920.5" height="1.3"/><rect x="37.5" y="109.55" width="920.5" height="1.3"/><rect x="37.5" y="64.80" width="920.5" height="1.3"/></g>
<rect x="37.5" y="550.6" width="920.5" height="1.5" fill="#cdb8e2" fill-opacity="0.85"/>
<rect x="946.4" y="20.5" width="1.4" height="541" fill="#bdb0cc" fill-opacity="0.75"/>
<path d="M745 467.5 L784.0 467.5 L786.3 460.0 L787.4 453.0 L788.5 460.0 L790.5 467.5 L947.0 467.5" fill="none" stroke="#0a0a0a" stroke-width="1.3" stroke-dasharray="5 2.6" stroke-linejoin="round"/>
<path d="M38.1 455.5 C39.8 455.7 44.7 455.9 47.8 456.7 C50.9 457.5 52.9 460.7 55.4 460.0 C57.9 459.3 59.0 455.9 61.7 453.0 C64.4 450.1 68.1 445.6 70.6 444.0 C73.1 442.4 73.2 443.0 75.7 444.0 C78.2 445.0 81.6 448.1 84.6 449.6 C87.6 451.1 88.3 451.9 92.2 452.2 C96.1 452.5 102.3 450.9 106.2 451.0 C110.1 451.1 110.1 451.7 113.8 453.0 C117.5 454.3 121.5 456.4 126.5 458.0 C131.5 459.6 136.2 460.6 141.7 461.8 C147.2 463.0 151.5 463.2 157.0 464.4 C162.5 465.6 168.1 467.7 172.2 468.2 C176.3 468.7 176.8 467.8 179.8 467.0 C182.8 466.2 184.6 464.1 188.7 463.6 C192.8 463.1 197.7 465.9 202.7 464.4 C207.7 462.9 212.3 456.6 216.6 455.5 C220.9 454.4 222.4 458.4 226.8 458.5 C231.2 458.6 237.4 455.6 240.8 456.0 C244.2 456.4 243.5 458.4 245.8 460.5 C248.1 462.6 250.3 467.2 253.5 467.7 C256.7 468.1 259.0 464.7 263.6 463.0 C268.2 461.3 273.7 458.2 278.9 458.0 C284.1 457.8 288.2 460.5 292.7 461.8 C297.2 463.1 299.4 464.8 304.0 465.0 C308.6 465.2 313.7 464.5 318.0 463.0 C322.3 461.5 324.8 458.6 328.0 456.7 C331.2 454.8 334.1 453.0 335.9 452.4 C337.7 451.8 337.6 453.2 338.0 453.4 L339.7 467.0 C340.8 466.7 341.7 466.3 346.0 465.6 C350.3 464.9 357.4 464.3 363.8 463.0 C370.2 461.7 376.8 459.6 381.6 458.5 C386.4 457.4 387.8 456.6 390.5 456.7 C393.2 456.8 395.7 458.8 396.8 459.3 L398.8 465.0 C401.2 465.1 406.0 465.7 412.0 465.6 C418.0 465.5 426.2 464.8 432.4 464.4 C438.6 464.0 443.8 463.7 446.3 463.6 L448.0 456.0 C448.9 456.0 452.3 456.0 453.2 456.0 L454.7 462.6 C457.1 462.6 463.8 462.2 468.0 462.6 C472.2 463.0 470.7 464.3 478.0 465.0 C485.3 465.7 497.5 466.0 508.5 466.4 C519.5 466.8 522.5 467.2 539.0 467.4 C555.5 467.6 562.9 467.5 600.0 467.5 C637.1 467.5 718.9 467.5 745.0 467.5" fill="none" stroke="#0a0a0a" stroke-width="2" stroke-dasharray="5.5 2.6" stroke-linejoin="round"/>
<text x="29" y="16.4">s</text>
<text x="34" y="561.1" text-anchor="end" style="font-size:8.35px">-200m</text>
<text x="34" y="516.4" text-anchor="end" style="font-size:8.35px">-100m</text>
<text x="34" y="471.6" text-anchor="end" style="font-size:8.35px">0</text>
<text x="34" y="426.9" text-anchor="end" style="font-size:8.35px">100m</text>
<text x="34" y="382.1" text-anchor="end" style="font-size:8.35px">200m</text>
<text x="34" y="337.4" text-anchor="end" style="font-size:8.35px">300m</text>
<text x="34" y="292.6" text-anchor="end" style="font-size:8.35px">400m</text>
<text x="34" y="247.8" text-anchor="end" style="font-size:8.35px">500m</text>
<text x="34" y="203.1" text-anchor="end" style="font-size:8.35px">600m</text>
<text x="34" y="158.3" text-anchor="end" style="font-size:8.35px">700m</text>
<text x="34" y="113.6" text-anchor="end" style="font-size:8.35px">800m</text>
<text x="34" y="68.8" text-anchor="end" style="font-size:8.35px">900m</text>
<text x="38.4" y="570.7" text-anchor="middle">15</text>
<text x="75.1" y="570.7" text-anchor="middle">20</text>
<text x="126.9" y="570.7" text-anchor="middle">30</text>
<text x="163.7" y="570.7" text-anchor="middle">40</text>
<text x="192.2" y="570.7" text-anchor="middle">50</text>
<text x="215.5" y="570.7" text-anchor="middle">60</text>
<text x="235.2" y="570.7" text-anchor="middle">70</text>
<text x="252.2" y="570.7" text-anchor="middle">80</text>
<text x="280.8" y="570.7" text-anchor="middle">100</text>
<text x="369.3" y="570.7" text-anchor="middle">200</text>
<text x="421.1" y="570.7" text-anchor="middle">300</text>
<text x="457.9" y="570.7" text-anchor="middle">400</text>
<text x="486.4" y="570.7" text-anchor="middle">500</text>
<text x="509.7" y="570.7" text-anchor="middle">600</text>
<text x="529.4" y="570.7" text-anchor="middle">700</text>
<text x="546.4" y="570.7" text-anchor="middle">800</text>
<text x="574.9" y="570.7" text-anchor="middle">1k</text>
<text x="663.5" y="570.7" text-anchor="middle">2k</text>
<text x="715.3" y="570.7" text-anchor="middle">3k</text>
<text x="752.1" y="570.7" text-anchor="middle">4k</text>
<text x="780.6" y="570.7" text-anchor="middle">5k</text>
<text x="803.9" y="570.7" text-anchor="middle">6k</text>
<text x="823.6" y="570.7" text-anchor="middle">7k</text>
<text x="840.6" y="570.7" text-anchor="middle">8k</text>
<text x="855.7" y="570.7" text-anchor="middle">9k</text>
<text x="869.1" y="570.7" text-anchor="middle">10k</text>
<rect x="10.5" y="546.5" width="26.5" height="10.5" rx="1" fill="#fff" stroke="#4848b0" stroke-width="1"/>
<text x="35" y="555" text-anchor="end" style="fill:#4040a8">-186m</text>
<rect x="934.5" y="562.5" width="23.5" height="10.5" rx="1.5" fill="#fff" stroke="#4848b0" stroke-width="1"/>
<text x="946.3" y="571.2" text-anchor="middle" style="fill:#4040a8">18.4k</text>
<text x="958.9" y="571.2">Hz</text>
<rect x="962.5" y="129" width="31.5" height="321" fill="url(#cbg)"/>
<rect x="962.5" y="129" width="31.5" height="321" fill="none" stroke="#000" stroke-opacity="0.35" stroke-width="1"/>
<rect x="962.5" y="144.55" width="33.5" height="1" fill="#000" fill-opacity="0.6"/>
<text x="995.3" y="148.4">-11</text>
<rect x="962.5" y="176.65" width="33.5" height="1" fill="#000" fill-opacity="0.6"/>
<text x="995.3" y="180.5">-15</text>
<rect x="962.5" y="208.75" width="33.5" height="1" fill="#000" fill-opacity="0.6"/>
<text x="995.3" y="212.6">-19</text>
<rect x="962.5" y="240.85" width="33.5" height="1" fill="#000" fill-opacity="0.6"/>
<text x="995.3" y="244.7">-23</text>
<rect x="962.5" y="272.95" width="33.5" height="1" fill="#000" fill-opacity="0.6"/>
<text x="995.3" y="276.8">-27</text>
<rect x="962.5" y="305.05" width="33.5" height="1" fill="#000" fill-opacity="0.6"/>
<text x="995.3" y="308.9">-31</text>
<rect x="962.5" y="337.15" width="33.5" height="1" fill="#000" fill-opacity="0.6"/>
<text x="995.3" y="340.9">-35</text>
<rect x="962.5" y="369.25" width="33.5" height="1" fill="#000" fill-opacity="0.6"/>
<text x="995.3" y="373.1">-39</text>
<rect x="962.5" y="401.35" width="33.5" height="1" fill="#000" fill-opacity="0.6"/>
<text x="995.3" y="405.2">-43</text>
<rect x="962.5" y="433.45" width="33.5" height="1" fill="#000" fill-opacity="0.6"/>
<text x="995.3" y="437.2">-47</text>
<text x="978" y="127" text-anchor="middle">-9</text>
<text x="977.5" y="461" text-anchor="middle">-49</text>
</svg>
<div id="panel"><span class="lb" style="left:9px;top:12px">Mode:</span>
<span class="lb" style="left:9px;top:32px">Freq. Resolution:</span>
<div class="box" style="left:101px;top:2.9px;width:89.5px;height:16.1px"><b style="left:3px">Wavelet</b><div style="right:0;top:0;bottom:0;width:13px;border-left:1px solid #a8a8a8;background:linear-gradient(#f6f6f6,#d4d4d4)"><svg width="13" height="14.1" style="position:absolute;left:0;top:0"><path d="M3 5.05 h7 l-3.5 4z" fill="#222"/></svg></div></div>
<div class="box" style="left:101px;top:23.4px;width:89.5px;height:16.1px"><b style="left:3px">1/24</b><div style="right:0;top:0;bottom:0;width:13px;border-left:1px solid #a8a8a8;background:linear-gradient(#f6f6f6,#d4d4d4)"><svg width="13" height="14.1" style="position:absolute;left:0;top:0"><path d="M3 5.05 h7 l-3.5 4z" fill="#222"/></svg></div></div>
<span class="lb" style="left:9px;top:72.2px">Span before peak (ms):</span>
<span class="lb" style="left:9px;top:92px">Span after peak (ms):</span>
<div class="box" style="left:101px;top:63.9px;width:89.5px;height:15.6px"><b style="right:11px">200</b><div style="right:0;top:0;bottom:0;width:8px;border-left:1px solid #b0b0b0;background:linear-gradient(#f4f4f4,#d8d8d8)"><svg width="8" height="13.6" style="position:absolute;left:0;top:0"><path d="M2 5.1 l2 -2.5 l2 2.5z M2 8.7 l2 2.5 l2 -2.5z" fill="#333"/><rect x="0" y="6.45" width="8" height="0.7" fill="#aaa"/></svg></div></div>
<div class="box" style="left:101px;top:83.4px;width:89.5px;height:16.1px"><b style="right:11px">1,000</b><div style="right:0;top:0;bottom:0;width:8px;border-left:1px solid #b0b0b0;background:linear-gradient(#f4f4f4,#d8d8d8)"><svg width="8" height="14.1" style="position:absolute;left:0;top:0"><path d="M2 5.35 l2 -2.5 l2 2.5z M2 8.95 l2 2.5 l2 -2.5z" fill="#333"/><rect x="0" y="6.7" width="8" height="0.7" fill="#aaa"/></svg></div></div>
<span class="cb" style="left:8.5px;top:131.8px"></span>
<span class="lb" style="left:23.3px;top:131.8px">Draw contours</span>
<div class="box" style="left:101px;top:123.7px;width:89.5px;height:15.7px"><b style="right:11px">5</b><div style="right:0;top:0;bottom:0;width:8px;border-left:1px solid #b0b0b0;background:linear-gradient(#f4f4f4,#d8d8d8)"><svg width="8" height="13.7" style="position:absolute;left:0;top:0"><path d="M2 5.15 l2 -2.5 l2 2.5z M2 8.75 l2 2.5 l2 -2.5z" fill="#333"/><rect x="0" y="6.5" width="8" height="0.7" fill="#aaa"/></svg></div></div>
<span class="cb" style="left:8.5px;top:163.9px"></span>
<span class="lb" style="left:23.3px;top:163.9px">Normalise to peak at each frequency</span>
<span class="cb" style="left:8.5px;top:183.8px"><svg width="12" height="12" style="position:absolute;left:-1px;top:-2px"><path d="M2.6 5.8 L4.7 8.8 L8.3 1.6" fill="none" stroke="#0c0c0c" stroke-width="1.9" stroke-linejoin="round"/></svg></span>
<span class="lb" style="left:23.3px;top:183.8px">Fill spectrogram floor</span>
<span class="cb" style="left:8.5px;top:203.7px"><svg width="12" height="12" style="position:absolute;left:-1px;top:-2px"><path d="M2.6 5.8 L4.7 8.8 L8.3 1.6" fill="none" stroke="#0c0c0c" stroke-width="1.9" stroke-linejoin="round"/></svg></span>
<span class="lb" style="left:23.3px;top:203.7px">Show modal frequencies</span>
<div style="left:6.5px;top:216.3px;width:184px;height:15.5px;box-sizing:border-box;border:1px solid #8e8e8e;border-radius:3px;background:linear-gradient(#fafafa,#dadada);text-align:center;line-height:14.5px">Apply Default Settings</div>
<span class="lb" style="left:227.2px;top:12px">Amplitude:</span>
<span class="lb" style="left:227.2px;top:32px">Frequency axis:</span>
<div class="box" style="left:306.8px;top:2.9px;width:80.8px;height:16.1px"><b style="left:3px">Log (dBFS)</b><div style="right:0;top:0;bottom:0;width:13px;border-left:1px solid #a8a8a8;background:linear-gradient(#f6f6f6,#d4d4d4)"><svg width="13" height="14.1" style="position:absolute;left:0;top:0"><path d="M3 5.05 h7 l-3.5 4z" fill="#222"/></svg></div></div>
<div class="box" style="left:306.8px;top:23.4px;width:80.8px;height:16.1px"><b style="left:3px">X axis</b><div style="right:0;top:0;bottom:0;width:13px;border-left:1px solid #a8a8a8;background:linear-gradient(#f6f6f6,#d4d4d4)"><svg width="13" height="14.1" style="position:absolute;left:0;top:0"><path d="M3 5.05 h7 l-3.5 4z" fill="#222"/></svg></div></div>
<span class="lb" style="left:227.2px;top:72.2px">Colour Scheme:</span>
<div class="box" style="left:306.8px;top:63.9px;width:57.4px;height:15.6px"><b style="left:3px">Rainbow</b><div style="right:0;top:0;bottom:0;width:13px;border-left:1px solid #a8a8a8;background:linear-gradient(#f6f6f6,#d4d4d4)"><svg width="13" height="13.6" style="position:absolute;left:0;top:0"><path d="M3 4.8 h7 l-3.5 4z" fill="#222"/></svg></div></div>
<svg width="14" height="14" style="position:absolute;left:373.2px;top:65px"><g stroke="#a79bb4" stroke-width="1.2" fill="#a79bb4"><path d="M0.5 2.5h12M0.5 7h12M0.5 11.5h12"/><circle cx="5" cy="2.5" r="1.6"/><circle cx="8.5" cy="7" r="1.6"/><circle cx="10" cy="11.5" r="1.6"/></g></svg>
<span class="lb" style="left:227.2px;top:92.2px">Scale Top (dB):</span>
<div class="box" style="left:306.8px;top:84.4px;width:80.8px;height:14.6px"><b style="right:11px">-9</b><div style="right:0;top:0;bottom:0;width:8px;border-left:1px solid #b0b0b0;background:linear-gradient(#f4f4f4,#d8d8d8)"><svg width="8" height="12.6" style="position:absolute;left:0;top:0"><path d="M2 4.6 l2 -2.5 l2 2.5z M2 8.2 l2 2.5 l2 -2.5z" fill="#333"/><rect x="0" y="5.95" width="8" height="0.7" fill="#aaa"/></svg></div></div>
<span class="lb" style="left:227.2px;top:112.6px">Scale Bottom (dB):</span>
<div class="box" style="left:306.8px;top:104.2px;width:80.8px;height:15.1px"><b style="right:11px">-49</b><div style="right:0;top:0;bottom:0;width:8px;border-left:1px solid #b0b0b0;background:linear-gradient(#f4f4f4,#d8d8d8)"><svg width="8" height="13.1" style="position:absolute;left:0;top:0"><path d="M2 4.85 l2 -2.5 l2 2.5z M2 8.45 l2 2.5 l2 -2.5z" fill="#333"/><rect x="0" y="6.2" width="8" height="0.7" fill="#aaa"/></svg></div></div>
<span class="lb" style="left:227.2px;top:132.4px">Scale Range (dB):</span>
<div class="box" style="left:306.8px;top:124.5px;width:80.8px;height:14.7px"><b style="right:11px">40</b><div style="right:0;top:0;bottom:0;width:8px;border-left:1px solid #b0b0b0;background:linear-gradient(#f4f4f4,#d8d8d8)"><svg width="8" height="12.7" style="position:absolute;left:0;top:0"><path d="M2 4.65 l2 -2.5 l2 2.5z M2 8.25 l2 2.5 l2 -2.5z" fill="#333"/><rect x="0" y="6" width="8" height="0.7" fill="#aaa"/></svg></div></div>
<span class="cb" style="left:227px;top:163.9px"><svg width="12" height="12" style="position:absolute;left:-1px;top:-2px"><path d="M2.6 5.8 L4.7 8.8 L8.3 1.6" fill="none" stroke="#0c0c0c" stroke-width="1.9" stroke-linejoin="round"/></svg></span>
<span class="lb" style="left:241.5px;top:163.9px">Match time scale to window and range</span>
<span class="cb" style="left:227px;top:184px"><svg width="12" height="12" style="position:absolute;left:-1px;top:-2px"><path d="M2.6 5.8 L4.7 8.8 L8.3 1.6" fill="none" stroke="#0c0c0c" stroke-width="1.9" stroke-linejoin="round"/></svg></span>
<span class="lb" style="left:241.5px;top:184px">Match top of scale to peak</span>
<span class="cb" style="left:227px;top:203.9px"></span>
<span class="lb" style="left:241.5px;top:203.9px">Banded colours</span>
<span class="cb" style="left:227px;top:223.7px"><svg width="12" height="12" style="position:absolute;left:-1px;top:-2px"><path d="M2.6 5.8 L4.7 8.8 L8.3 1.6" fill="none" stroke="#0c0c0c" stroke-width="1.9" stroke-linejoin="round"/></svg></span>
<span class="lb" style="left:241.5px;top:223.7px">3D enhancement</span></div>
<svg width="60" height="40" style="position:absolute;left:645px;top:35px"><ellipse cx="28.75" cy="19.5" rx="21.8" ry="12.1" fill="none" stroke="#b00f1c" stroke-width="3.4"/></svg>
</body></html>
